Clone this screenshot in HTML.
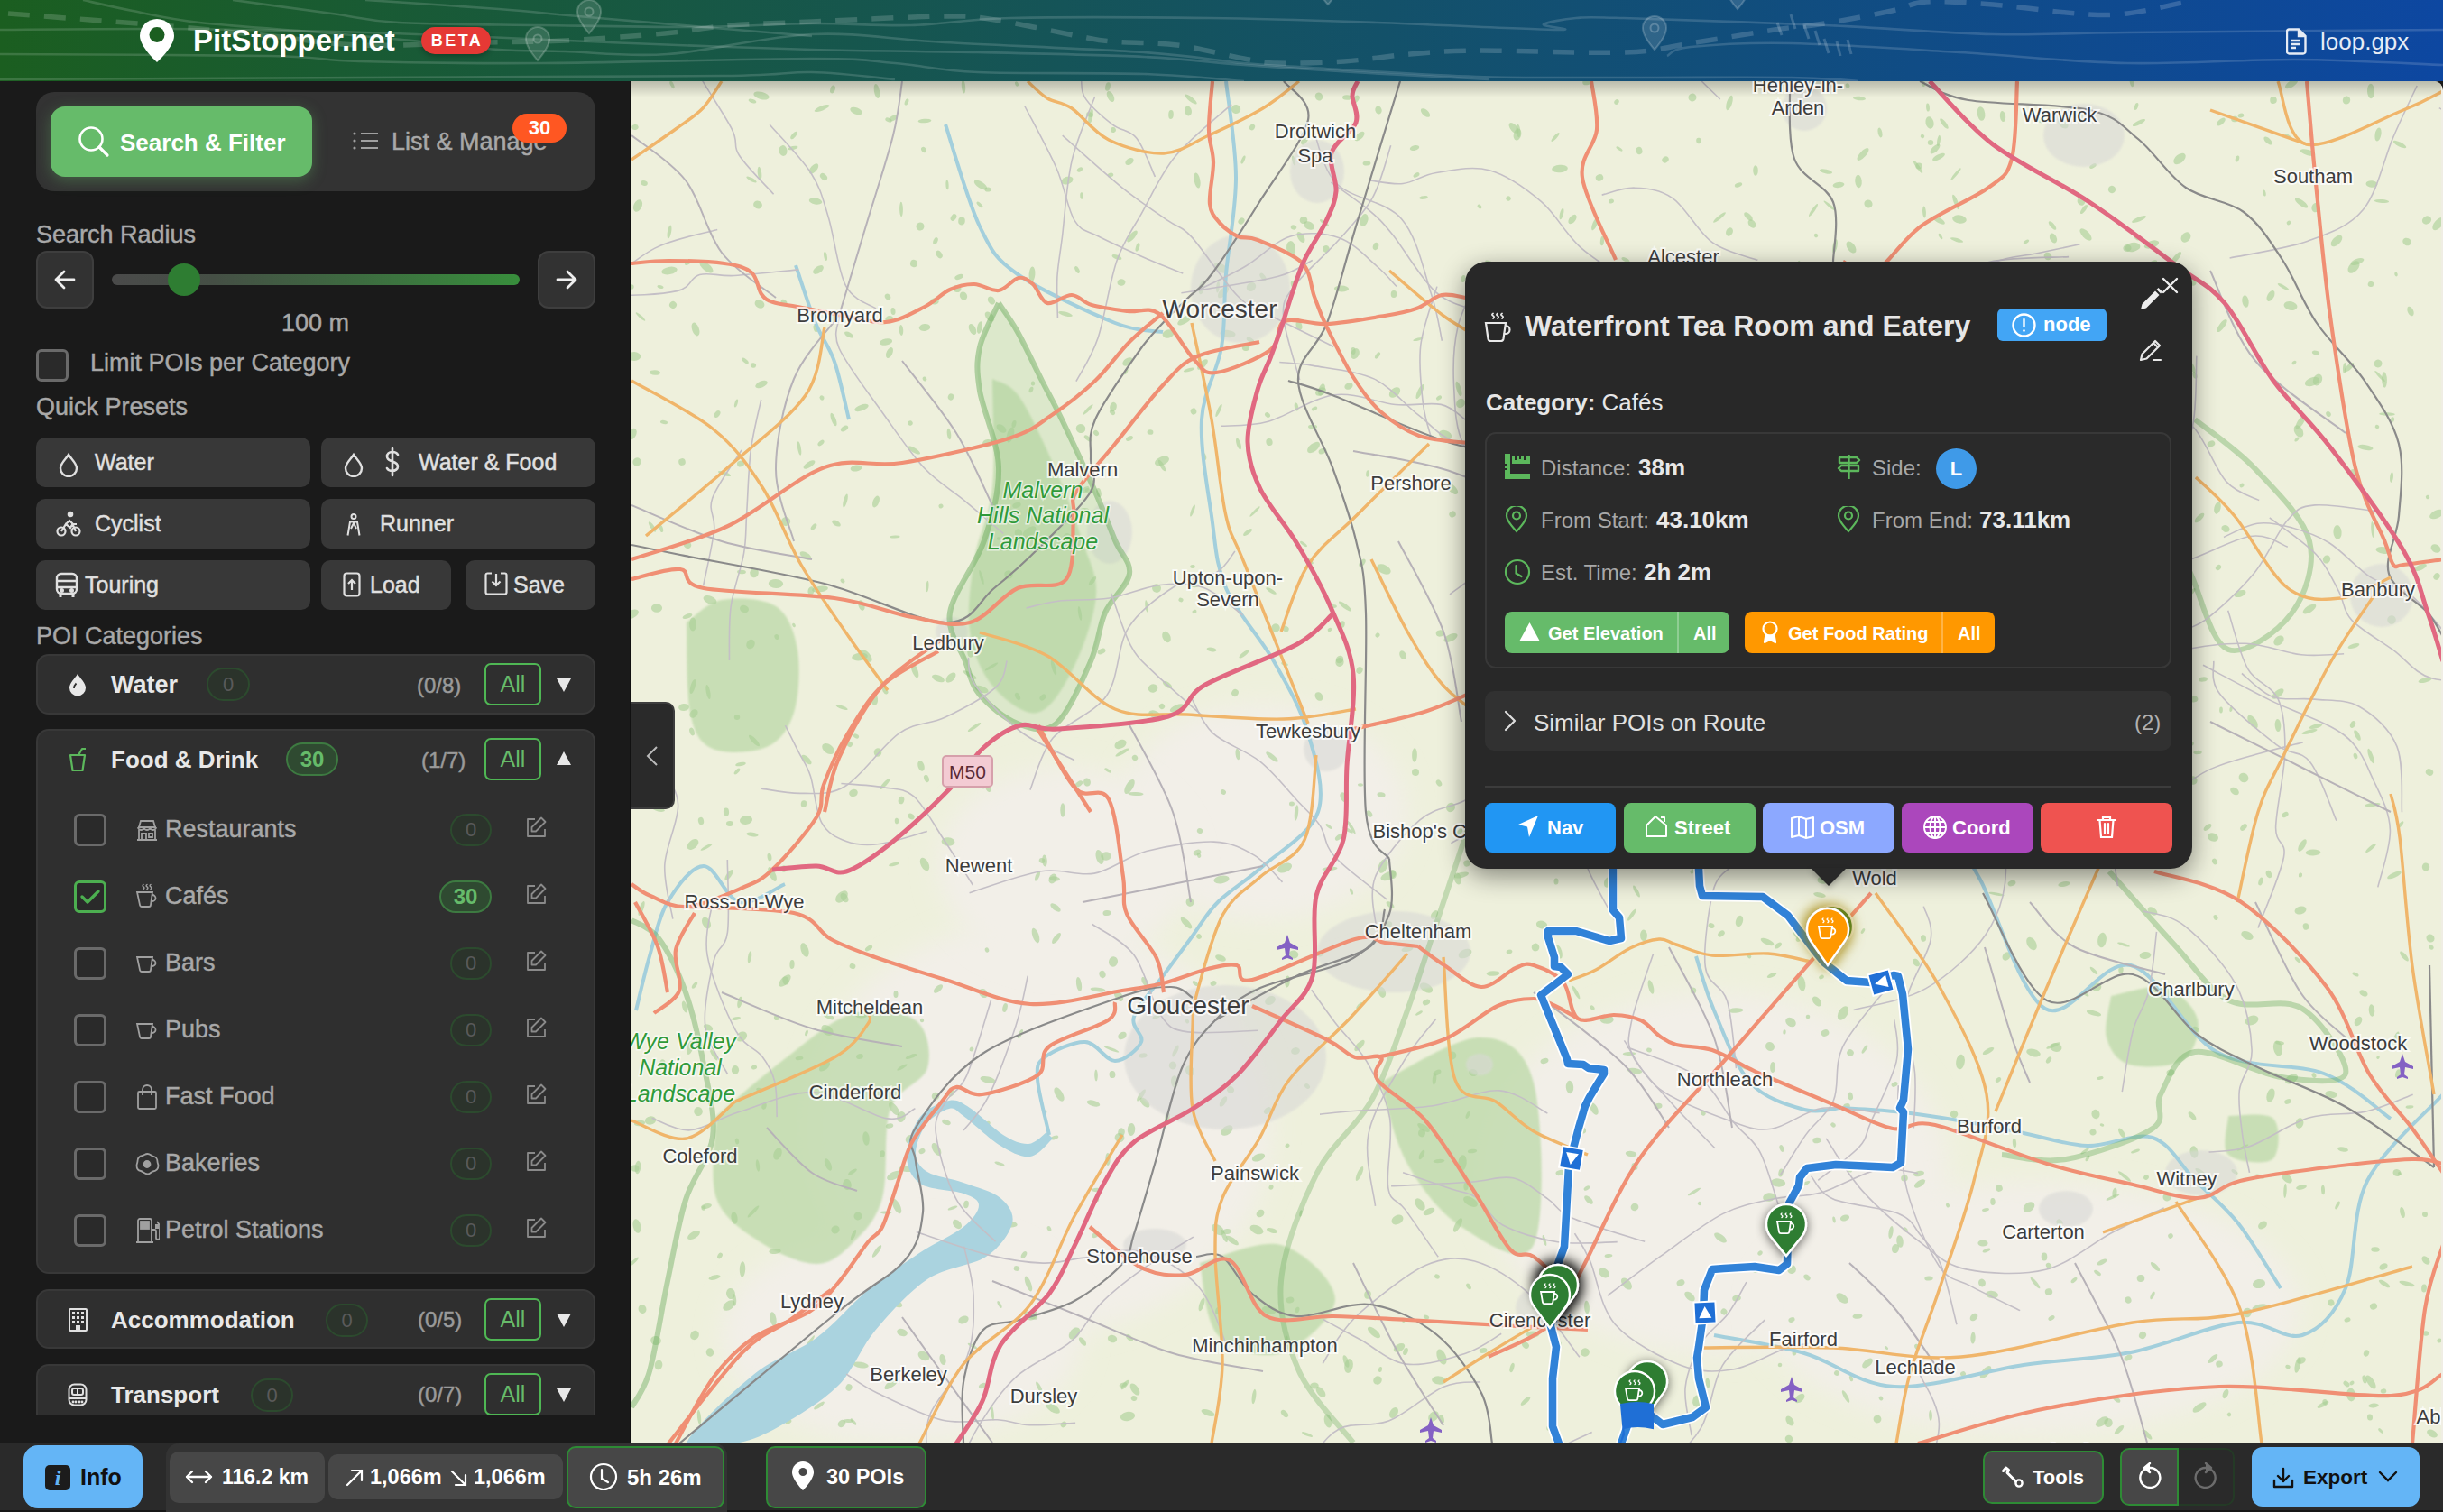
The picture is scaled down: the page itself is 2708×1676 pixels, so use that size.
<!DOCTYPE html>
<html><head><meta charset="utf-8">
<style>
*{box-sizing:border-box;margin:0;padding:0}
html,body{width:2708px;height:1676px;overflow:hidden;background:#1a1a1a;font-family:"Liberation Sans",sans-serif}
.abs{position:absolute}
#header{position:absolute;left:0;top:0;width:2708px;height:90px;background:linear-gradient(90deg,#1b5e20 0%,#0d47a1 100%);overflow:hidden}
#sidebar{position:absolute;left:0;top:90px;width:700px;height:1509px;background:#1a1a1a;border-right:2px solid #111;overflow:hidden}
#map{position:absolute;left:700px;top:90px;width:2008px;height:1509px;background:#f0eee4;overflow:hidden;border-top-right-radius:10px}
#footer{position:absolute;left:0;top:1599px;width:2708px;height:77px;background:#2a2a2a;border-bottom:2px solid #161616}
.txt{position:absolute;white-space:nowrap;line-height:1}
.btn{position:absolute;border-radius:10px;background:#383838}
.card{position:absolute;left:40px;width:620px;background:#2f2f2f;border:2px solid #383838;border-radius:14px}
.cb{position:absolute;width:36px;height:36px;border:3px solid #6a6a6a;border-radius:6px;background:#2a2a2a}
.pill{position:absolute;height:37px;border-radius:19px;border:2px solid #2c4a2e;background:#2b332b;color:#5a5a5a;font-size:22px;display:flex;align-items:center;justify-content:center}
.pill.on{border-color:#3d7a41;background:#2f4a31;color:#66bb6a;font-weight:bold;font-size:24px}
.allb{position:absolute;width:63px;height:47px;border:2px solid #4fb754;border-radius:7px;color:#66bb6a;font-size:25px;display:flex;align-items:center;justify-content:center}
.tri{position:absolute;width:0;height:0;border-left:8px solid transparent;border-right:8px solid transparent}
#sidebar .txt:not([style*="bold"]){-webkit-text-stroke:0.45px currentColor}
.lbl{position:absolute;white-space:nowrap;line-height:1;font-size:22px;color:#3b3b3b;text-shadow:0 0 3px #fff,0 0 2px #fff,0 0 1px #fff}
</style></head>
<body>
<!-- HEADER -->
<div id="header">
<svg class="abs" style="left:0;top:0" width="2708" height="90" viewBox="0 0 2708 90" fill="none">
<path d="M9.0 15.0 C24.2 16.2 68.2 19.5 100.0 22.0 C131.8 24.5 166.7 27.0 200.0 30.0 C233.3 33.0 266.7 36.7 300.0 40.0 C333.3 43.3 359.5 48.8 400.0 50.0 C440.5 51.2 505.3 47.8 543.0 47.0 C580.7 46.2 593.7 46.7 626.0 45.0 C658.3 43.3 706.3 39.8 737.0 37.0 C767.7 34.2 782.8 30.2 810.0 28.0 C837.2 25.8 860.5 25.7 900.0 24.0 C939.5 22.3 1013.2 18.3 1047.0 18.0 C1080.8 17.7 1078.3 18.3 1103.0 22.0 C1127.7 25.7 1173.5 36.0 1195.0 40.0 C1216.5 44.0 1213.7 44.3 1232.0 46.0 C1250.3 47.7 1280.5 46.8 1305.0 50.0 C1329.5 53.2 1360.5 61.7 1379.0 65.0 C1397.5 68.3 1397.5 69.5 1416.0 70.0 C1434.5 70.5 1465.5 69.7 1490.0 68.0 C1514.5 66.3 1538.5 62.0 1563.0 60.0 C1587.5 58.0 1597.5 56.3 1637.0 56.0 C1676.5 55.7 1760.5 59.3 1800.0 58.0 C1839.5 56.7 1846.2 52.2 1874.0 48.0 C1901.8 43.8 1942.2 36.7 1967.0 33.0 C1991.8 29.3 2001.3 29.5 2023.0 26.0 C2044.7 22.5 2078.3 16.0 2097.0 12.0 C2115.7 8.0 2116.3 3.2 2135.0 2.0 C2153.7 0.8 2181.2 2.8 2209.0 5.0 C2236.8 7.2 2277.2 13.3 2302.0 15.0 C2326.8 16.7 2336.3 17.5 2358.0 15.0 C2379.7 12.5 2419.7 2.5 2432.0 0.0" stroke="rgba(255,255,255,0.17)" stroke-width="5.5" stroke-dasharray="24 16"/>
<path d="M92.0 0.0 C101.2 2.0 125.5 7.8 147.0 12.0 C168.5 16.2 184.2 20.8 221.0 25.0 C257.8 29.2 325.0 33.3 368.0 37.0 C411.0 40.7 448.2 44.0 479.0 47.0 C509.8 50.0 528.5 53.3 553.0 55.0 C577.5 56.7 594.8 56.2 626.0 57.0 C657.2 57.8 694.3 63.2 740.0 60.0 C785.7 56.8 848.8 40.2 900.0 38.0 C951.2 35.8 985.7 43.7 1047.0 47.0 C1108.3 50.3 1212.7 54.2 1268.0 58.0 C1323.3 61.8 1348.2 67.2 1379.0 70.0 C1409.8 72.8 1410.0 72.5 1453.0 75.0 C1496.0 77.5 1579.2 83.2 1637.0 85.0 C1694.8 86.8 1741.8 85.8 1800.0 86.0 C1858.2 86.2 1942.7 85.3 1986.0 86.0 C2029.3 86.7 2047.7 89.3 2060.0 90.0" stroke="rgba(255,255,255,0.15)" stroke-width="2.6"/>
<path d="M0.0 33.0 C30.7 32.8 122.7 31.7 184.0 32.0 C245.3 32.3 312.7 33.7 368.0 35.0 C423.3 36.3 460.7 37.8 516.0 40.0 C571.3 42.2 636.0 45.5 700.0 48.0 C764.0 50.5 836.0 53.3 900.0 55.0 C964.0 56.7 1022.7 56.7 1084.0 58.0 C1145.3 59.3 1218.8 60.7 1268.0 63.0 C1317.2 65.3 1340.3 69.2 1379.0 72.0 C1417.7 74.8 1454.8 77.3 1500.0 80.0 C1545.2 82.7 1625.0 86.7 1650.0 88.0" stroke="rgba(255,255,255,0.15)" stroke-width="2.6"/>
<path d="M0.0 60.0 C50.0 60.3 233.7 60.7 300.0 62.0 C366.3 63.3 348.0 66.7 398.0 68.0 C448.0 69.3 516.3 70.5 600.0 70.0 C683.7 69.5 834.7 65.0 900.0 65.0 C965.3 65.0 961.3 67.5 992.0 70.0 C1022.7 72.5 1038.0 78.0 1084.0 80.0 C1130.0 82.0 1218.8 80.3 1268.0 82.0 C1317.2 83.7 1360.5 88.7 1379.0 90.0" stroke="rgba(255,255,255,0.15)" stroke-width="2.6"/>
<path d="M0.0 88.0 C66.7 87.7 266.7 86.7 400.0 86.0 C533.3 85.3 716.7 85.0 800.0 84.0 C883.3 83.0 868.0 79.3 900.0 80.0 C932.0 80.7 976.7 86.7 992.0 88.0" stroke="rgba(255,255,255,0.15)" stroke-width="2.6"/>
<path d="M258.0 0.0 C276.3 2.5 337.3 10.8 368.0 15.0 C398.7 19.2 403.3 22.8 442.0 25.0 C480.7 27.2 544.7 27.2 600.0 28.0 C655.3 28.8 724.0 30.3 774.0 30.0 C824.0 29.7 860.7 26.3 900.0 26.0 C939.3 25.7 973.2 29.0 1010.0 28.0 C1046.8 27.0 1065.7 21.3 1121.0 20.0 C1176.3 18.7 1274.5 19.2 1342.0 20.0 C1409.5 20.8 1462.2 22.8 1526.0 25.0 C1589.8 27.2 1694.2 32.7 1725.0 33.0 C1755.8 33.3 1707.3 29.2 1711.0 27.0 C1714.7 24.8 1732.2 21.2 1747.0 20.0 C1761.8 18.8 1754.0 18.7 1800.0 20.0 C1846.0 21.3 1954.8 25.0 2023.0 28.0 C2091.2 31.0 2153.2 36.7 2209.0 38.0 C2264.8 39.3 2274.8 36.8 2358.0 36.0 C2441.2 35.2 2649.7 33.5 2708.0 33.0" stroke="rgba(255,255,255,0.15)" stroke-width="2.6"/>
<path d="M405.0 0.0 C429.7 1.7 510.0 6.7 553.0 10.0 C596.0 13.3 605.2 15.0 663.0 20.0 C720.8 25.0 860.5 36.7 900.0 40.0" stroke="rgba(255,255,255,0.15)" stroke-width="2.6"/>
<path d="M1848.0 62.0 C1852.3 60.3 1851.0 54.3 1874.0 52.0 C1897.0 49.7 1936.3 47.0 1986.0 48.0 C2035.7 49.0 2110.0 54.3 2172.0 58.0 C2234.0 61.7 2296.0 68.7 2358.0 70.0 C2420.0 71.3 2485.7 65.7 2544.0 66.0 C2602.3 66.3 2680.7 71.0 2708.0 72.0" stroke="rgba(255,255,255,0.15)" stroke-width="2.6"/>
<g transform="translate(653 22) scale(1)"><path d="M0 -22 a13 13 0 0 1 13 13 q0 9 -13 24 q-13 -15 -13 -24 a13 13 0 0 1 13 -13z" fill="rgba(255,255,255,0.13)" stroke="rgba(255,255,255,0.2)" stroke-width="2"/><circle cx="0" cy="-9" r="4.5" fill="none" stroke="rgba(255,255,255,0.22)" stroke-width="2"/></g>
<g transform="translate(596 52) scale(1)"><path d="M0 -22 a13 13 0 0 1 13 13 q0 9 -13 24 q-13 -15 -13 -24 a13 13 0 0 1 13 -13z" fill="rgba(255,255,255,0.13)" stroke="rgba(255,255,255,0.2)" stroke-width="2"/><circle cx="0" cy="-9" r="4.5" fill="none" stroke="rgba(255,255,255,0.22)" stroke-width="2"/></g>
<g transform="translate(1834 40) scale(1)"><path d="M0 -22 a13 13 0 0 1 13 13 q0 9 -13 24 q-13 -15 -13 -24 a13 13 0 0 1 13 -13z" fill="rgba(255,255,255,0.13)" stroke="rgba(255,255,255,0.2)" stroke-width="2"/><circle cx="0" cy="-9" r="4.5" fill="none" stroke="rgba(255,255,255,0.22)" stroke-width="2"/></g>
<g transform="translate(1472 -10) scale(1)"><path d="M0 -22 a13 13 0 0 1 13 13 q0 9 -13 24 q-13 -15 -13 -24 a13 13 0 0 1 13 -13z" fill="rgba(255,255,255,0.13)" stroke="rgba(255,255,255,0.2)" stroke-width="2"/><circle cx="0" cy="-9" r="4.5" fill="none" stroke="rgba(255,255,255,0.22)" stroke-width="2"/></g>
<g transform="translate(1926 -5) scale(1)"><path d="M0 -22 a13 13 0 0 1 13 13 q0 9 -13 24 q-13 -15 -13 -24 a13 13 0 0 1 13 -13z" fill="rgba(255,255,255,0.13)" stroke="rgba(255,255,255,0.2)" stroke-width="2"/><circle cx="0" cy="-9" r="4.5" fill="none" stroke="rgba(255,255,255,0.22)" stroke-width="2"/></g>
<path d="M1970 25l5 14M1985 16l5 16M2000 28l5 15M2012 34l5 16M2022 43l5 16M2036 46l4 16M2048 44l4 16" stroke="rgba(255,255,255,0.18)" stroke-width="3"/>
</svg>
<svg class="abs" style="left:155px;top:21px" width="38" height="48" viewBox="0 0 38 48"><path d="M19 0C8.5 0 0 8.4 0 18.8 0 31 19 48 19 48S38 31 38 18.8C38 8.4 29.5 0 19 0z" fill="#fff"/><circle cx="19" cy="17.5" r="8.5" fill="#1b5e20"/></svg>
<div class="txt" style="left:214px;top:28px;font-size:33px;font-weight:bold;color:#fff">PitStopper.net</div>
<div class="abs" style="left:467px;top:30px;width:77px;height:30px;border-radius:15px;background:#e53935;box-shadow:0 2px 6px rgba(0,0,0,0.3);color:#fff;font-weight:bold;font-size:18px;letter-spacing:2.5px;padding-left:2px;display:flex;align-items:center;justify-content:center">BETA</div>
<svg class="abs" style="left:2534px;top:31px" width="23" height="30" viewBox="0 0 23 30" fill="none" stroke="#e6ecf5" stroke-width="2.4"><path d="M3 1.5h11l7.5 7.5v17a2.5 2.5 0 0 1-2.5 2.5H3.5A2.5 2.5 0 0 1 1 26V4a2.5 2.5 0 0 1 2-2.5z"/><path d="M14 1.5v7.5h7.5" fill="#e6ecf5"/><path d="M6 14h10M6 18h10M6 22h5"/></svg>
<div class="txt" style="left:2572px;top:33px;font-size:26px;color:#e6ecf5">loop.gpx</div>
</div>

<!-- SIDEBAR -->
<div id="sidebar">
<div class="abs" style="left:0;top:0;width:700px;height:1478px;overflow:hidden">
<!-- tabs -->
<div class="abs" style="left:40px;top:12px;width:620px;height:110px;background:#333;border-radius:20px"></div>
<div class="abs" style="left:56px;top:28px;width:290px;height:78px;background:#66bb6a;border-radius:16px;box-shadow:0 4px 16px rgba(102,187,106,0.35)"></div>
<svg class="abs" style="left:86px;top:49px" width="36" height="36" viewBox="0 0 36 36" fill="none" stroke="#fff" stroke-width="2.6" stroke-linecap="round"><circle cx="15" cy="15" r="12.5"/><path d="M24 24l9 9" stroke-width="3.2"/></svg>
<div class="txt" style="left:133px;top:55px;font-size:26px;font-weight:bold;color:#fff">Search &amp; Filter</div>
<svg class="abs" style="left:389px;top:54px" width="34" height="24" viewBox="0 0 34 24" fill="#a0a0a0" stroke="#a0a0a0" stroke-width="2.2"><circle cx="4" cy="4" r="1.6" stroke="none"/><circle cx="4" cy="12" r="1.6" stroke="none"/><circle cx="4" cy="20" r="1.6" stroke="none"/><path d="M11 4h19M11 12h19M11 20h19"/></svg>
<div class="txt" style="left:434px;top:54px;font-size:27px;color:#a8a8a8">List &amp; Manage</div>
<div class="abs" style="left:568px;top:36px;width:60px;height:32px;border-radius:16px;background:#ff5722;color:#fff;font-weight:bold;font-size:22px;display:flex;align-items:center;justify-content:center">30</div>
<!-- radius -->
<div class="txt" style="left:40px;top:157px;font-size:27px;color:#a8a8a8">Search Radius</div>
<div class="abs" style="left:40px;top:188px;width:64px;height:64px;background:#323232;border:2px solid #3e3e3e;border-radius:12px"></div>
<svg class="abs" style="left:58px;top:206px" width="28" height="28" viewBox="0 0 28 28" fill="none" stroke="#eee" stroke-width="2.8" stroke-linecap="round" stroke-linejoin="round"><path d="M24 14H4M13 5l-9 9 9 9"/></svg>
<div class="abs" style="left:596px;top:188px;width:64px;height:64px;background:#323232;border:2px solid #3e3e3e;border-radius:12px"></div>
<svg class="abs" style="left:614px;top:206px" width="28" height="28" viewBox="0 0 28 28" fill="none" stroke="#eee" stroke-width="2.8" stroke-linecap="round" stroke-linejoin="round"><path d="M4 14h20M15 5l9 9-9 9"/></svg>
<div class="abs" style="left:124px;top:214px;width:452px;height:12px;border-radius:6px;background:linear-gradient(90deg,#4a4a4a 0%,#454f45 25%,#3d6b40 60%,#388e3c 100%)"></div>
<div class="abs" style="left:186px;top:202px;width:36px;height:36px;border-radius:50%;background:#2e7d32"></div>
<div class="txt" style="left:312px;top:255px;font-size:27px;color:#a8a8a8">100 m</div>
<div class="cb" style="left:40px;top:297px"></div>
<div class="txt" style="left:100px;top:299px;font-size:27px;color:#a8a8a8">Limit POIs per Category</div>
<div class="txt" style="left:40px;top:348px;font-size:27px;color:#a8a8a8">Quick Presets</div>
<!-- presets -->
<div class="btn" style="left:40px;top:395px;width:304px;height:55px"></div>
<div class="btn" style="left:356px;top:395px;width:304px;height:55px"></div>
<div class="btn" style="left:40px;top:463px;width:304px;height:55px"></div>
<div class="btn" style="left:356px;top:463px;width:304px;height:55px"></div>
<div class="btn" style="left:40px;top:531px;width:304px;height:55px"></div>
<div class="btn" style="left:356px;top:531px;width:144px;height:55px"></div>
<div class="btn" style="left:516px;top:531px;width:144px;height:55px"></div>
<svg class="abs" style="left:64px;top:411px" width="24" height="28" viewBox="0 0 24 28" fill="none" stroke="#e0e0e0" stroke-width="2.4"><path d="M12 3C8.5 8.5 3 12.5 3 18a9 9 0 0 0 18 0c0-5.5-5.5-9.5-9-15z"/></svg>
<div class="txt" style="left:105px;top:410px;font-size:25px;color:#e0e0e0;line-height:1;padding-top:0">Water</div>
<svg class="abs" style="left:380px;top:411px" width="24" height="28" viewBox="0 0 24 28" fill="none" stroke="#e0e0e0" stroke-width="2.4"><path d="M12 3C8.5 8.5 3 12.5 3 18a9 9 0 0 0 18 0c0-5.5-5.5-9.5-9-15z"/></svg>
<svg class="abs" style="left:424px;top:405px" width="22" height="34" viewBox="0 0 22 34" fill="none" stroke="#e0e0e0" stroke-width="2.6" stroke-linecap="round"><path d="M11 2v30M17 9c-1-2-3-3-6-3-4 0-6 2-6 5 0 7 12 4 12 11 0 3-3 5-6 5-3 0-5-1-6-3"/></svg>
<div class="txt" style="left:464px;top:410px;font-size:25px;color:#e0e0e0">Water &amp; Food</div>
<svg class="abs" style="left:62px;top:476px" width="28" height="30" viewBox="0 0 28 30" fill="none" stroke="#e0e0e0" stroke-width="2.2"><circle cx="6" cy="23" r="4.5"/><circle cx="22" cy="23" r="4.5"/><circle cx="16" cy="4" r="2.2" fill="#e0e0e0"/><path d="M6 23l5-8 5 4 3-5M11 15l4-4 4 4h4M22 23l-4-9"/></svg>
<div class="txt" style="left:105px;top:478px;font-size:25px;color:#e0e0e0">Cyclist</div>
<svg class="abs" style="left:383px;top:479px" width="18" height="26" viewBox="0 0 18 26" fill="none" stroke="#e0e0e0" stroke-width="2"><circle cx="9" cy="3.5" r="2.5"/><path d="M2.5 24.5l2.5-15h8l2.5 15M6 17l3-6 3 6"/></svg>
<div class="txt" style="left:421px;top:478px;font-size:25px;color:#e0e0e0">Runner</div>
<svg class="abs" style="left:61px;top:544px" width="26" height="30" viewBox="0 0 26 30" fill="none" stroke="#e0e0e0" stroke-width="2.4"><rect x="2" y="2" width="22" height="22" rx="5"/><path d="M2 10h22M2 17h22"/><circle cx="7.5" cy="20.5" r="1.3" fill="#e0e0e0"/><circle cx="18.5" cy="20.5" r="1.3" fill="#e0e0e0"/><path d="M6 24v4M20 24v4" stroke-width="3"/></svg>
<div class="txt" style="left:94px;top:546px;font-size:25px;color:#e0e0e0">Touring</div>
<svg class="abs" style="left:380px;top:544px" width="20" height="28" viewBox="0 0 20 28" fill="none" stroke="#e0e0e0" stroke-width="2.2"><rect x="1.5" y="1.5" width="17" height="25" rx="3"/><path d="M10 20V9M6 13l4-4 4 4"/></svg>
<div class="txt" style="left:410px;top:546px;font-size:25px;color:#e0e0e0">Load</div>
<svg class="abs" style="left:537px;top:544px" width="26" height="26" viewBox="0 0 26 26" fill="none" stroke="#e0e0e0" stroke-width="2.2"><path d="M8 1.5H3.5a2 2 0 0 0-2 2v19a2 2 0 0 0 2 2h19a2 2 0 0 0 2-2v-19a2 2 0 0 0-2-2H18"/><path d="M13 2v13M8.5 10.5L13 15l4.5-4.5"/></svg>
<div class="txt" style="left:569px;top:546px;font-size:25px;color:#e0e0e0">Save</div>
<div class="txt" style="left:40px;top:602px;font-size:27px;color:#a8a8a8">POI Categories</div>
<!-- Water card -->
<div class="card" style="top:635px;height:67px"></div>
<svg class="abs" style="left:76px;top:656px" width="20" height="26" viewBox="0 0 20 26"><path d="M10 1C7 6 1 11 1 16.5a9 9 0 0 0 18 0C19 11 13 6 10 1z" fill="#e8e8e8"/><path d="M6 17c0-2 1-4 2.5-5.5" stroke="#2f2f2f" stroke-width="1.8" fill="none"/></svg>
<div class="txt" style="left:123px;top:656px;font-size:27px;font-weight:bold;color:#e8e8e8">Water</div>
<div class="pill" style="left:229px;top:650px;width:48px">0</div>
<div class="txt" style="left:462px;top:658px;font-size:24px;color:#9a9a9a">(0/8)</div>
<div class="allb" style="left:537px;top:645px">All</div>
<div class="tri" style="left:617px;top:662px;border-top:15px solid #e8e8e8"></div>
<!-- Food card -->
<div class="card" style="top:718px;height:604px"></div>
<svg class="abs" style="left:76px;top:738px" width="22" height="28" viewBox="0 0 22 28" fill="none" stroke="#5cb85c" stroke-width="2.2" stroke-linejoin="round"><path d="M2 9h16l-2.5 17h-11z"/><path d="M11 9l4-7h4"/></svg>
<div class="txt" style="left:123px;top:739px;font-size:26px;font-weight:bold;color:#e8e8e8">Food &amp; Drink</div>
<div class="pill on" style="left:317px;top:733px;width:58px">30</div>
<div class="txt" style="left:467px;top:741px;font-size:24px;color:#9a9a9a">(1/7)</div>
<div class="allb" style="left:537px;top:728px">All</div>
<div class="tri" style="left:617px;top:743px;border-bottom:15px solid #e8e8e8"></div>
<div class="cb" style="left:82px;top:812px"></div>
<svg class="abs" style="left:150px;top:817px" width="26" height="26" viewBox="0 0 26 26" fill="none" stroke="#a0a0a0" stroke-width="1.8"><path d="M3 10h20M4 10l2-7h14l2 7M3 10c0 2 2 3 3.3 3s3.3-1 3.3-3c0 2 2 3 3.4 3s3.3-1 3.3-3c0 2 2 3 3.3 3S23 12 23 10"/><path d="M4 13v11h18V13M2 24h22M7 24v-7h5v7M15 17h4v4h-4z"/></svg>
<div class="txt" style="left:183px;top:816px;font-size:27px;color:#a8a8a8">Restaurants</div>
<div class="pill" style="left:499px;top:812px;width:46px;height:36px">0</div>
<svg class="abs" style="left:582px;top:815px" width="24" height="24" viewBox="0 0 24 24" fill="none" stroke="#8a8a8a" stroke-width="1.8" stroke-linejoin="round"><path d="M11 3H3v19h19v-8"/><path d="M18 1.5l4.5 4.5L12 16.5H7.5V12z"/></svg>
<div class="cb" style="left:82px;top:886px;border-color:#4caf50"></div>
<svg class="abs" style="left:88px;top:894px" width="24" height="20" viewBox="0 0 24 20" fill="none" stroke="#4caf50" stroke-width="3.4" stroke-linecap="round" stroke-linejoin="round"><path d="M3 10l6 6L21 4"/></svg>
<svg class="abs" style="left:150px;top:889px" width="26" height="28" viewBox="0 0 26 28" fill="none" stroke="#a0a0a0" stroke-width="1.8" stroke-linecap="round"><path d="M9 1.5q-1.8 1.2 0 2.4t0 2.6M13 1.5q-1.8 1.2 0 2.4t0 2.6M17 1.5q-1.8 1.2 0 2.4t0 2.6" stroke-width="1.5"/><path d="M2 10h17l-2 14a2 2 0 0 1-2 2H7a2 2 0 0 1-2-2z"/><path d="M19 13a3.5 3.5 0 0 1 0 7h-1"/></svg>
<div class="txt" style="left:183px;top:890px;font-size:27px;color:#a8a8a8">Cafés</div>
<div class="pill on" style="left:487px;top:886px;width:58px;height:36px">30</div>
<svg class="abs" style="left:582px;top:889px" width="24" height="24" viewBox="0 0 24 24" fill="none" stroke="#8a8a8a" stroke-width="1.8" stroke-linejoin="round"><path d="M11 3H3v19h19v-8"/><path d="M18 1.5l4.5 4.5L12 16.5H7.5V12z"/></svg>
<div class="cb" style="left:82px;top:960px"></div>
<svg class="abs" style="left:150px;top:969px" width="26" height="20" viewBox="0 0 26 20" fill="none" stroke="#a0a0a0" stroke-width="1.8"><path d="M2 2h17l-2 14a2 2 0 0 1-2 2H7a2 2 0 0 1-2-2z"/><path d="M19 5a3.5 3.5 0 0 1 0 7h-1"/></svg>
<div class="txt" style="left:183px;top:964px;font-size:27px;color:#a8a8a8">Bars</div>
<div class="pill" style="left:499px;top:960px;width:46px;height:36px">0</div>
<svg class="abs" style="left:582px;top:963px" width="24" height="24" viewBox="0 0 24 24" fill="none" stroke="#8a8a8a" stroke-width="1.8" stroke-linejoin="round"><path d="M11 3H3v19h19v-8"/><path d="M18 1.5l4.5 4.5L12 16.5H7.5V12z"/></svg>
<div class="cb" style="left:82px;top:1034px"></div>
<svg class="abs" style="left:150px;top:1043px" width="26" height="20" viewBox="0 0 26 20" fill="none" stroke="#a0a0a0" stroke-width="1.8"><path d="M2 2h17l-2 14a2 2 0 0 1-2 2H7a2 2 0 0 1-2-2z"/><path d="M19 5a3.5 3.5 0 0 1 0 7h-1"/></svg>
<div class="txt" style="left:183px;top:1038px;font-size:27px;color:#a8a8a8">Pubs</div>
<div class="pill" style="left:499px;top:1034px;width:46px;height:36px">0</div>
<svg class="abs" style="left:582px;top:1037px" width="24" height="24" viewBox="0 0 24 24" fill="none" stroke="#8a8a8a" stroke-width="1.8" stroke-linejoin="round"><path d="M11 3H3v19h19v-8"/><path d="M18 1.5l4.5 4.5L12 16.5H7.5V12z"/></svg>
<div class="cb" style="left:82px;top:1108px"></div>
<svg class="abs" style="left:151px;top:1111px" width="24" height="30" viewBox="0 0 24 30" fill="none" stroke="#a0a0a0" stroke-width="1.8"><rect x="2" y="9" width="20" height="19" rx="1.5"/><path d="M7 13V7a5 5 0 0 1 10 0v6"/></svg>
<div class="txt" style="left:183px;top:1112px;font-size:27px;color:#a8a8a8">Fast Food</div>
<div class="pill" style="left:499px;top:1108px;width:46px;height:36px">0</div>
<svg class="abs" style="left:582px;top:1111px" width="24" height="24" viewBox="0 0 24 24" fill="none" stroke="#8a8a8a" stroke-width="1.8" stroke-linejoin="round"><path d="M11 3H3v19h19v-8"/><path d="M18 1.5l4.5 4.5L12 16.5H7.5V12z"/></svg>
<div class="cb" style="left:82px;top:1182px"></div>
<svg class="abs" style="left:150px;top:1187px" width="27" height="27" viewBox="0 0 27 27" fill="none" stroke="#a0a0a0" stroke-width="1.8"><path d="M13.5 2c3 0 4 2 6 2.5 3 .8 5 2.5 5 6 0 2 1 3 1 4.5 0 4-3 6-6 6.5-2 .5-3 3-6 3-3.5 0-5-3-7.5-3.5C3 20.5 1.5 18 1.5 15c0-2 1-3 1-5C2.5 6 5 4.5 8 4c2-.5 3-2 5.5-2z"/><circle cx="13" cy="13.5" r="3.5" fill="#a0a0a0"/></svg>
<div class="txt" style="left:183px;top:1186px;font-size:27px;color:#a8a8a8">Bakeries</div>
<div class="pill" style="left:499px;top:1182px;width:46px;height:36px">0</div>
<svg class="abs" style="left:582px;top:1185px" width="24" height="24" viewBox="0 0 24 24" fill="none" stroke="#8a8a8a" stroke-width="1.8" stroke-linejoin="round"><path d="M11 3H3v19h19v-8"/><path d="M18 1.5l4.5 4.5L12 16.5H7.5V12z"/></svg>
<div class="cb" style="left:82px;top:1256px"></div>
<svg class="abs" style="left:150px;top:1259px" width="27" height="30" viewBox="0 0 27 30" fill="none" stroke="#a0a0a0" stroke-width="1.8"><path d="M3 28V4a2 2 0 0 1 2-2h11a2 2 0 0 1 2 2v24M1 28h19"/><rect x="6" y="5" width="9" height="8" fill="#a0a0a0"/><path d="M18 14h3a2 2 0 0 1 2 2v7a2 2 0 0 0 4 0V9l-3-4"/><rect x="22" y="8" width="4" height="5" fill="#a0a0a0" stroke="none"/></svg>
<div class="txt" style="left:183px;top:1260px;font-size:27px;color:#a8a8a8">Petrol Stations</div>
<div class="pill" style="left:499px;top:1256px;width:46px;height:36px">0</div>
<svg class="abs" style="left:582px;top:1259px" width="24" height="24" viewBox="0 0 24 24" fill="none" stroke="#8a8a8a" stroke-width="1.8" stroke-linejoin="round"><path d="M11 3H3v19h19v-8"/><path d="M18 1.5l4.5 4.5L12 16.5H7.5V12z"/></svg>
<!-- Accommodation -->
<div class="card" style="top:1339px;height:66px"></div>
<svg class="abs" style="left:76px;top:1360px" width="21" height="26" viewBox="0 0 21 26" fill="none" stroke="#e0e0e0" stroke-width="2"><rect x="1" y="1" width="19" height="24" rx="1"/><g fill="#e0e0e0" stroke="none"><rect x="4" y="4" width="3" height="3"/><rect x="9" y="4" width="3" height="3"/><rect x="14" y="4" width="3" height="3"/><rect x="4" y="9" width="3" height="3"/><rect x="9" y="9" width="3" height="3"/><rect x="14" y="9" width="3" height="3"/><rect x="4" y="14" width="3" height="3"/><rect x="9" y="14" width="3" height="3"/><rect x="14" y="14" width="3" height="3"/><rect x="8" y="19" width="5" height="6"/></g></svg>
<div class="txt" style="left:123px;top:1360px;font-size:26px;font-weight:bold;color:#e8e8e8">Accommodation</div>
<div class="pill" style="left:361px;top:1355px;width:47px">0</div>
<div class="txt" style="left:463px;top:1361px;font-size:24px;color:#9a9a9a">(0/5)</div>
<div class="allb" style="left:537px;top:1349px">All</div>
<div class="tri" style="left:617px;top:1366px;border-top:15px solid #e8e8e8"></div>
<!-- Transport -->
<div class="card" style="top:1422px;height:120px"></div>
<svg class="abs" style="left:75px;top:1443px" width="22" height="27" viewBox="0 0 22 27" fill="none" stroke="#e0e0e0" stroke-width="2"><rect x="1.5" y="1.5" width="19" height="23" rx="6"/><rect x="5" y="6" width="12" height="7" rx="2"/><path d="M11 6v7M1.5 17h19"/><g fill="#e0e0e0" stroke="none"><circle cx="6" cy="21" r="1.4"/><circle cx="9" cy="21" r="1.4"/><circle cx="13" cy="21" r="1.4"/><circle cx="16" cy="21" r="1.4"/></g></svg>
<div class="txt" style="left:123px;top:1443px;font-size:26px;font-weight:bold;color:#e8e8e8">Transport</div>
<div class="pill" style="left:278px;top:1438px;width:47px">0</div>
<div class="txt" style="left:463px;top:1444px;font-size:24px;color:#9a9a9a">(0/7)</div>
<div class="allb" style="left:537px;top:1432px">All</div>
<div class="tri" style="left:617px;top:1449px;border-top:15px solid #e8e8e8"></div>
</div>

</div>

<!-- MAP -->
<div id="map">
<svg class="abs" style="left:0;top:0" width="2006" height="1509" viewBox="700 90 2006 1509">
<defs><filter id="bl" x="-20%" y="-20%" width="140%" height="140%"><feGaussianBlur stdDeviation="14"/></filter><filter id="bl2"><feGaussianBlur stdDeviation="1.2"/></filter></defs>
<rect x="700" y="90" width="2006" height="1509" fill="#eef0dc"/>
<ellipse cx="1150" cy="1250" rx="260" ry="230" fill="#f2efe8" filter="url(#bl)"/>
<ellipse cx="1000" cy="1480" rx="200" ry="120" fill="#f2efe8" filter="url(#bl)"/>
<ellipse cx="1400" cy="900" rx="160" ry="120" fill="#f2efe8" filter="url(#bl)"/>
<ellipse cx="1180" cy="960" rx="140" ry="110" fill="#f2efe8" filter="url(#bl)"/>
<ellipse cx="1900" cy="1300" rx="260" ry="200" fill="#f2efe8" filter="url(#bl)"/>
<ellipse cx="2250" cy="1450" rx="300" ry="140" fill="#f2efe8" filter="url(#bl)"/>
<path d="M794.0 1237.0 C807.0 1226.2 846.7 1191.0 872.0 1172.0 C897.3 1153.0 922.2 1129.8 946.0 1123.0 C969.8 1116.2 1001.3 1120.8 1015.0 1131.0 C1028.7 1141.2 1032.7 1167.7 1028.0 1184.0 C1023.3 1200.3 995.3 1205.0 987.0 1229.0 C978.7 1253.0 984.8 1303.3 978.0 1328.0 C971.2 1352.7 958.2 1364.8 946.0 1377.0 C933.8 1389.2 922.2 1401.0 905.0 1401.0 C887.8 1401.0 861.5 1389.2 843.0 1377.0 C824.5 1364.8 802.2 1351.3 794.0 1328.0 C785.8 1304.7 794.0 1252.2 794.0 1237.0" fill="#bcd9a8" opacity="0.75" filter="url(#bl2)"/>
<path d="M761.0 690.0 C767.5 685.8 783.5 668.0 800.0 665.0 C816.5 662.0 846.0 662.8 860.0 672.0 C874.0 681.2 880.7 700.3 884.0 720.0 C887.3 739.7 885.7 772.0 880.0 790.0 C874.3 808.0 865.0 821.3 850.0 828.0 C835.0 834.7 804.2 836.3 790.0 830.0 C775.8 823.7 769.8 813.3 765.0 790.0 C760.2 766.7 761.7 706.7 761.0 690.0" fill="#bcd9a8" opacity="0.75" filter="url(#bl2)"/>
<path d="M1100.0 420.0 C1105.0 423.3 1118.3 423.3 1130.0 440.0 C1141.7 456.7 1158.3 493.3 1170.0 520.0 C1181.7 546.7 1192.5 576.7 1200.0 600.0 C1207.5 623.3 1216.7 636.7 1215.0 660.0 C1213.3 683.3 1200.8 718.3 1190.0 740.0 C1179.2 761.7 1165.0 786.7 1150.0 790.0 C1135.0 793.3 1112.5 775.0 1100.0 760.0 C1087.5 745.0 1078.3 723.3 1075.0 700.0 C1071.7 676.7 1075.8 646.7 1080.0 620.0 C1084.2 593.3 1096.7 573.3 1100.0 540.0 C1103.3 506.7 1100.0 440.0 1100.0 420.0" fill="#bcd9a8" opacity="0.75" filter="url(#bl2)"/>
<path d="M2340.0 1104.0 C2350.0 1102.5 2384.0 1090.7 2400.0 1095.0 C2416.0 1099.3 2432.7 1116.7 2436.0 1130.0 C2439.3 1143.3 2432.7 1166.7 2420.0 1175.0 C2407.3 1183.3 2374.2 1184.2 2360.0 1180.0 C2345.8 1175.8 2338.3 1162.7 2335.0 1150.0 C2331.7 1137.3 2339.2 1111.7 2340.0 1104.0" fill="#bcd9a8" opacity="0.75" filter="url(#bl2)"/>
<path d="M1530.0 1200.0 C1548.3 1191.7 1611.7 1150.0 1640.0 1150.0 C1668.3 1150.0 1690.0 1161.7 1700.0 1200.0 C1710.0 1238.3 1713.3 1353.3 1700.0 1380.0 C1686.7 1406.7 1643.3 1375.0 1620.0 1360.0 C1596.7 1345.0 1575.0 1316.7 1560.0 1290.0 C1545.0 1263.3 1535.0 1215.0 1530.0 1200.0" fill="#bcd9a8" opacity="0.75" filter="url(#bl2)"/>
<path d="M1330.0 1400.0 C1345.0 1396.7 1395.0 1373.3 1420.0 1380.0 C1445.0 1386.7 1480.0 1420.0 1480.0 1440.0 C1480.0 1460.0 1441.7 1493.3 1420.0 1500.0 C1398.3 1506.7 1365.0 1496.7 1350.0 1480.0 C1335.0 1463.3 1333.3 1413.3 1330.0 1400.0" fill="#bcd9a8" opacity="0.75" filter="url(#bl2)"/>
<path d="M2470.0 1237.0 C2478.3 1237.5 2511.8 1232.0 2520.0 1240.0 C2528.2 1248.0 2527.3 1278.3 2519.0 1285.0 C2510.7 1291.7 2478.2 1288.0 2470.0 1280.0 C2461.8 1272.0 2470.0 1244.2 2470.0 1237.0" fill="#bcd9a8" opacity="0.75" filter="url(#bl2)"/>
<ellipse cx="1350" cy="318" rx="6.6" ry="1.8" transform="rotate(96 1350 318)" fill="#a9cf94" opacity="0.6"/>
<ellipse cx="1434" cy="178" rx="5.6" ry="1.6" transform="rotate(78 1434 178)" fill="#a9cf94" opacity="0.6"/>
<ellipse cx="840" cy="227" rx="5.0" ry="4.4" transform="rotate(22 840 227)" fill="#a9cf94" opacity="0.6"/>
<ellipse cx="1148" cy="1037" rx="8.6" ry="3.5" transform="rotate(71 1148 1037)" fill="#a9cf94" opacity="0.6"/>
<ellipse cx="2660" cy="160" rx="8.0" ry="2.5" transform="rotate(26 2660 160)" fill="#a9cf94" opacity="0.6"/>
<ellipse cx="937" cy="555" rx="7.7" ry="2.1" transform="rotate(105 937 555)" fill="#a9cf94" opacity="0.6"/>
<ellipse cx="1983" cy="652" rx="5.8" ry="1.7" transform="rotate(11 1983 652)" fill="#a9cf94" opacity="0.6"/>
<ellipse cx="1114" cy="1117" rx="5.0" ry="2.6" transform="rotate(105 1114 1117)" fill="#a9cf94" opacity="0.6"/>
<ellipse cx="1610" cy="542" rx="7.6" ry="3.9" transform="rotate(44 1610 542)" fill="#a9cf94" opacity="0.6"/>
<ellipse cx="1853" cy="883" rx="8.1" ry="4.1" transform="rotate(52 1853 883)" fill="#a9cf94" opacity="0.6"/>
<ellipse cx="2668" cy="268" rx="4.9" ry="4.1" transform="rotate(27 2668 268)" fill="#a9cf94" opacity="0.6"/>
<ellipse cx="1682" cy="149" rx="6.7" ry="4.2" transform="rotate(103 1682 149)" fill="#a9cf94" opacity="0.6"/>
<ellipse cx="2458" cy="563" rx="6.9" ry="3.6" transform="rotate(104 2458 563)" fill="#a9cf94" opacity="0.6"/>
<ellipse cx="1616" cy="1358" rx="8.6" ry="3.2" transform="rotate(120 1616 1358)" fill="#a9cf94" opacity="0.6"/>
<ellipse cx="822" cy="1149" rx="6.5" ry="5.0" transform="rotate(148 822 1149)" fill="#a9cf94" opacity="0.6"/>
<ellipse cx="1271" cy="672" rx="6.7" ry="1.6" transform="rotate(83 1271 672)" fill="#a9cf94" opacity="0.6"/>
<ellipse cx="1037" cy="267" rx="2.4" ry="4.2" transform="rotate(23 1037 267)" fill="#a9cf94" opacity="0.6"/>
<ellipse cx="1197" cy="680" rx="8.1" ry="1.8" transform="rotate(81 1197 680)" fill="#a9cf94" opacity="0.6"/>
<ellipse cx="1803" cy="1423" rx="7.7" ry="4.5" transform="rotate(50 1803 1423)" fill="#a9cf94" opacity="0.6"/>
<ellipse cx="1534" cy="631" rx="8.2" ry="4.9" transform="rotate(27 1534 631)" fill="#a9cf94" opacity="0.6"/>
<ellipse cx="1054" cy="440" rx="3.6" ry="3.2" transform="rotate(106 1054 440)" fill="#a9cf94" opacity="0.6"/>
<ellipse cx="1228" cy="96" rx="4.9" ry="2.8" transform="rotate(102 1228 96)" fill="#a9cf94" opacity="0.6"/>
<ellipse cx="2614" cy="1132" rx="5.6" ry="3.7" transform="rotate(122 2614 1132)" fill="#a9cf94" opacity="0.6"/>
<ellipse cx="808" cy="1447" rx="7.5" ry="4.6" transform="rotate(144 808 1447)" fill="#a9cf94" opacity="0.6"/>
<ellipse cx="1488" cy="692" rx="2.7" ry="3.7" transform="rotate(11 1488 692)" fill="#a9cf94" opacity="0.6"/>
<ellipse cx="835" cy="405" rx="3.1" ry="2.7" transform="rotate(9 835 405)" fill="#a9cf94" opacity="0.6"/>
<ellipse cx="700" cy="318" rx="2.7" ry="2.8" transform="rotate(5 700 318)" fill="#a9cf94" opacity="0.6"/>
<ellipse cx="2456" cy="1017" rx="3.0" ry="2.4" transform="rotate(63 2456 1017)" fill="#a9cf94" opacity="0.6"/>
<ellipse cx="1431" cy="275" rx="7.9" ry="5.0" transform="rotate(84 1431 275)" fill="#a9cf94" opacity="0.6"/>
<ellipse cx="1672" cy="220" rx="2.7" ry="2.7" transform="rotate(48 1672 220)" fill="#a9cf94" opacity="0.6"/>
<ellipse cx="2364" cy="334" rx="2.2" ry="4.8" transform="rotate(95 2364 334)" fill="#a9cf94" opacity="0.6"/>
<ellipse cx="994" cy="910" rx="2.2" ry="3.3" transform="rotate(176 994 910)" fill="#a9cf94" opacity="0.6"/>
<ellipse cx="2434" cy="1141" rx="3.8" ry="2.8" transform="rotate(30 2434 1141)" fill="#a9cf94" opacity="0.6"/>
<ellipse cx="2250" cy="894" rx="7.5" ry="2.7" transform="rotate(40 2250 894)" fill="#a9cf94" opacity="0.6"/>
<ellipse cx="2330" cy="1576" rx="8.0" ry="4.3" transform="rotate(147 2330 1576)" fill="#a9cf94" opacity="0.6"/>
<ellipse cx="2186" cy="432" rx="5.6" ry="2.7" transform="rotate(5 2186 432)" fill="#a9cf94" opacity="0.6"/>
<ellipse cx="756" cy="512" rx="3.8" ry="3.9" transform="rotate(172 756 512)" fill="#a9cf94" opacity="0.6"/>
<ellipse cx="1598" cy="1504" rx="8.9" ry="4.8" transform="rotate(66 1598 1504)" fill="#a9cf94" opacity="0.6"/>
<ellipse cx="1143" cy="432" rx="3.4" ry="2.2" transform="rotate(112 1143 432)" fill="#a9cf94" opacity="0.6"/>
<ellipse cx="2508" cy="1358" rx="5.4" ry="3.8" transform="rotate(144 2508 1358)" fill="#a9cf94" opacity="0.6"/>
<ellipse cx="870" cy="1087" rx="8.4" ry="4.2" transform="rotate(135 870 1087)" fill="#a9cf94" opacity="0.6"/>
<ellipse cx="1660" cy="359" rx="7.5" ry="2.7" transform="rotate(144 1660 359)" fill="#a9cf94" opacity="0.6"/>
<ellipse cx="2651" cy="687" rx="4.8" ry="4.8" transform="rotate(130 2651 687)" fill="#a9cf94" opacity="0.6"/>
<ellipse cx="1041" cy="282" rx="3.1" ry="4.7" transform="rotate(145 1041 282)" fill="#a9cf94" opacity="0.6"/>
<ellipse cx="994" cy="1337" rx="8.9" ry="3.8" transform="rotate(63 994 1337)" fill="#a9cf94" opacity="0.6"/>
<ellipse cx="1802" cy="288" rx="2.1" ry="4.9" transform="rotate(117 1802 288)" fill="#a9cf94" opacity="0.6"/>
<ellipse cx="1757" cy="1499" rx="5.0" ry="4.6" transform="rotate(149 1757 1499)" fill="#a9cf94" opacity="0.6"/>
<ellipse cx="1124" cy="470" rx="4.1" ry="2.3" transform="rotate(106 1124 470)" fill="#a9cf94" opacity="0.6"/>
<ellipse cx="1221" cy="722" rx="2.9" ry="4.7" transform="rotate(64 1221 722)" fill="#a9cf94" opacity="0.6"/>
<ellipse cx="1620" cy="970" rx="8.3" ry="3.0" transform="rotate(165 1620 970)" fill="#a9cf94" opacity="0.6"/>
<ellipse cx="1707" cy="893" rx="5.7" ry="1.6" transform="rotate(79 1707 893)" fill="#a9cf94" opacity="0.6"/>
<ellipse cx="1068" cy="96" rx="7.6" ry="2.1" transform="rotate(85 1068 96)" fill="#a9cf94" opacity="0.6"/>
<ellipse cx="2156" cy="930" rx="4.3" ry="3.3" transform="rotate(100 2156 930)" fill="#a9cf94" opacity="0.6"/>
<ellipse cx="2275" cy="250" rx="5.9" ry="2.4" transform="rotate(50 2275 250)" fill="#a9cf94" opacity="0.6"/>
<ellipse cx="2251" cy="856" rx="5.9" ry="4.2" transform="rotate(164 2251 856)" fill="#a9cf94" opacity="0.6"/>
<ellipse cx="1590" cy="1014" rx="5.5" ry="3.3" transform="rotate(125 1590 1014)" fill="#a9cf94" opacity="0.6"/>
<ellipse cx="1608" cy="895" rx="5.3" ry="4.8" transform="rotate(126 1608 895)" fill="#a9cf94" opacity="0.6"/>
<ellipse cx="2460" cy="1512" rx="3.8" ry="3.5" transform="rotate(170 2460 1512)" fill="#a9cf94" opacity="0.6"/>
<ellipse cx="2387" cy="297" rx="2.9" ry="3.0" transform="rotate(13 2387 297)" fill="#a9cf94" opacity="0.6"/>
<ellipse cx="1183" cy="200" rx="6.7" ry="4.2" transform="rotate(161 1183 200)" fill="#a9cf94" opacity="0.6"/>
<ellipse cx="1010" cy="1171" rx="6.6" ry="2.0" transform="rotate(159 1010 1171)" fill="#a9cf94" opacity="0.6"/>
<ellipse cx="2643" cy="421" rx="8.7" ry="2.9" transform="rotate(88 2643 421)" fill="#a9cf94" opacity="0.6"/>
<ellipse cx="2688" cy="1346" rx="3.1" ry="3.0" transform="rotate(93 2688 1346)" fill="#a9cf94" opacity="0.6"/>
<ellipse cx="1381" cy="385" rx="4.2" ry="4.0" transform="rotate(4 1381 385)" fill="#a9cf94" opacity="0.6"/>
<ellipse cx="1813" cy="755" rx="2.1" ry="2.7" transform="rotate(112 1813 755)" fill="#a9cf94" opacity="0.6"/>
<ellipse cx="1729" cy="187" rx="8.9" ry="4.3" transform="rotate(175 1729 187)" fill="#a9cf94" opacity="0.6"/>
<ellipse cx="910" cy="491" rx="2.3" ry="4.2" transform="rotate(49 910 491)" fill="#a9cf94" opacity="0.6"/>
<ellipse cx="960" cy="727" rx="8.4" ry="4.4" transform="rotate(47 960 727)" fill="#a9cf94" opacity="0.6"/>
<ellipse cx="1000" cy="1477" rx="6.0" ry="4.0" transform="rotate(16 1000 1477)" fill="#a9cf94" opacity="0.6"/>
<ellipse cx="816" cy="1129" rx="5.0" ry="1.8" transform="rotate(169 816 1129)" fill="#a9cf94" opacity="0.6"/>
<ellipse cx="1974" cy="1300" rx="2.6" ry="4.5" transform="rotate(12 1974 1300)" fill="#a9cf94" opacity="0.6"/>
<ellipse cx="2432" cy="775" rx="4.4" ry="3.4" transform="rotate(167 2432 775)" fill="#a9cf94" opacity="0.6"/>
<ellipse cx="1238" cy="285" rx="5.7" ry="2.3" transform="rotate(20 1238 285)" fill="#a9cf94" opacity="0.6"/>
<ellipse cx="1024" cy="166" rx="3.4" ry="2.6" transform="rotate(55 1024 166)" fill="#a9cf94" opacity="0.6"/>
<ellipse cx="2225" cy="528" rx="5.5" ry="2.1" transform="rotate(62 2225 528)" fill="#a9cf94" opacity="0.6"/>
<ellipse cx="736" cy="468" rx="2.1" ry="4.1" transform="rotate(99 736 468)" fill="#a9cf94" opacity="0.6"/>
<ellipse cx="1080" cy="806" rx="8.5" ry="1.9" transform="rotate(147 1080 806)" fill="#a9cf94" opacity="0.6"/>
<ellipse cx="1568" cy="837" rx="7.8" ry="2.9" transform="rotate(91 1568 837)" fill="#a9cf94" opacity="0.6"/>
<ellipse cx="2081" cy="1573" rx="4.4" ry="4.4" transform="rotate(127 2081 1573)" fill="#a9cf94" opacity="0.6"/>
<ellipse cx="1977" cy="701" rx="4.4" ry="1.7" transform="rotate(23 1977 701)" fill="#a9cf94" opacity="0.6"/>
<ellipse cx="842" cy="1208" rx="3.8" ry="2.1" transform="rotate(15 842 1208)" fill="#a9cf94" opacity="0.6"/>
<ellipse cx="2389" cy="1404" rx="6.7" ry="2.5" transform="rotate(44 2389 1404)" fill="#a9cf94" opacity="0.6"/>
<ellipse cx="1288" cy="783" rx="3.1" ry="3.1" transform="rotate(47 1288 783)" fill="#a9cf94" opacity="0.6"/>
<ellipse cx="2631" cy="1558" rx="5.8" ry="2.4" transform="rotate(174 2631 1558)" fill="#a9cf94" opacity="0.6"/>
<ellipse cx="1322" cy="628" rx="2.0" ry="2.8" transform="rotate(85 1322 628)" fill="#a9cf94" opacity="0.6"/>
<ellipse cx="1710" cy="393" rx="5.5" ry="1.5" transform="rotate(48 1710 393)" fill="#a9cf94" opacity="0.6"/>
<ellipse cx="880" cy="693" rx="2.3" ry="1.6" transform="rotate(55 880 693)" fill="#a9cf94" opacity="0.6"/>
<ellipse cx="1167" cy="974" rx="5.7" ry="4.1" transform="rotate(118 1167 974)" fill="#a9cf94" opacity="0.6"/>
<ellipse cx="2138" cy="1417" rx="4.7" ry="2.6" transform="rotate(177 2138 1417)" fill="#a9cf94" opacity="0.6"/>
<ellipse cx="1000" cy="1183" rx="6.5" ry="1.7" transform="rotate(150 1000 1183)" fill="#a9cf94" opacity="0.6"/>
<ellipse cx="2491" cy="1037" rx="7.1" ry="4.3" transform="rotate(25 2491 1037)" fill="#a9cf94" opacity="0.6"/>
<ellipse cx="1752" cy="851" rx="7.8" ry="4.3" transform="rotate(149 1752 851)" fill="#a9cf94" opacity="0.6"/>
<ellipse cx="1873" cy="1437" rx="6.8" ry="3.9" transform="rotate(41 1873 1437)" fill="#a9cf94" opacity="0.6"/>
<ellipse cx="763" cy="291" rx="4.5" ry="1.9" transform="rotate(150 763 291)" fill="#a9cf94" opacity="0.6"/>
<ellipse cx="1822" cy="1037" rx="6.4" ry="3.9" transform="rotate(88 1822 1037)" fill="#a9cf94" opacity="0.6"/>
<ellipse cx="707" cy="1294" rx="7.2" ry="3.3" transform="rotate(96 707 1294)" fill="#a9cf94" opacity="0.6"/>
<ellipse cx="2024" cy="190" rx="7.2" ry="2.4" transform="rotate(13 2024 190)" fill="#a9cf94" opacity="0.6"/>
<ellipse cx="1233" cy="1191" rx="3.4" ry="4.1" transform="rotate(176 1233 1191)" fill="#a9cf94" opacity="0.6"/>
<ellipse cx="1692" cy="667" rx="5.4" ry="3.9" transform="rotate(138 1692 667)" fill="#a9cf94" opacity="0.6"/>
<ellipse cx="1939" cy="1060" rx="2.5" ry="2.0" transform="rotate(46 1939 1060)" fill="#a9cf94" opacity="0.6"/>
<ellipse cx="2192" cy="549" rx="6.0" ry="1.5" transform="rotate(11 2192 549)" fill="#a9cf94" opacity="0.6"/>
<ellipse cx="1240" cy="1104" rx="6.8" ry="3.9" transform="rotate(52 1240 1104)" fill="#a9cf94" opacity="0.6"/>
<ellipse cx="1737" cy="791" rx="5.3" ry="1.9" transform="rotate(161 1737 791)" fill="#a9cf94" opacity="0.6"/>
<ellipse cx="1100" cy="1566" rx="8.6" ry="1.6" transform="rotate(83 1100 1566)" fill="#a9cf94" opacity="0.6"/>
<ellipse cx="2346" cy="1551" rx="5.1" ry="2.4" transform="rotate(38 2346 1551)" fill="#a9cf94" opacity="0.6"/>
<ellipse cx="2599" cy="408" rx="6.1" ry="2.0" transform="rotate(94 2599 408)" fill="#a9cf94" opacity="0.6"/>
<ellipse cx="2613" cy="290" rx="7.7" ry="3.3" transform="rotate(160 2613 290)" fill="#a9cf94" opacity="0.6"/>
<ellipse cx="2112" cy="439" rx="8.3" ry="3.2" transform="rotate(4 2112 439)" fill="#a9cf94" opacity="0.6"/>
<ellipse cx="707" cy="832" rx="5.2" ry="2.6" transform="rotate(25 707 832)" fill="#a9cf94" opacity="0.6"/>
<ellipse cx="1391" cy="567" rx="7.9" ry="1.5" transform="rotate(135 1391 567)" fill="#a9cf94" opacity="0.6"/>
<ellipse cx="2385" cy="271" rx="8.5" ry="4.0" transform="rotate(162 2385 271)" fill="#a9cf94" opacity="0.6"/>
<ellipse cx="1282" cy="652" rx="4.8" ry="5.0" transform="rotate(106 1282 652)" fill="#a9cf94" opacity="0.6"/>
<ellipse cx="1424" cy="736" rx="3.9" ry="1.7" transform="rotate(18 1424 736)" fill="#a9cf94" opacity="0.6"/>
<ellipse cx="2376" cy="521" rx="8.5" ry="2.4" transform="rotate(48 2376 521)" fill="#a9cf94" opacity="0.6"/>
<ellipse cx="1726" cy="376" rx="4.6" ry="4.8" transform="rotate(159 1726 376)" fill="#a9cf94" opacity="0.6"/>
<ellipse cx="2330" cy="1042" rx="8.4" ry="4.8" transform="rotate(99 2330 1042)" fill="#a9cf94" opacity="0.6"/>
<ellipse cx="2145" cy="165" rx="7.1" ry="3.1" transform="rotate(135 2145 165)" fill="#a9cf94" opacity="0.6"/>
<ellipse cx="1994" cy="522" rx="2.3" ry="4.7" transform="rotate(23 1994 522)" fill="#a9cf94" opacity="0.6"/>
<ellipse cx="1648" cy="609" rx="4.1" ry="4.1" transform="rotate(176 1648 609)" fill="#a9cf94" opacity="0.6"/>
<ellipse cx="1222" cy="1080" rx="4.1" ry="3.5" transform="rotate(71 1222 1080)" fill="#a9cf94" opacity="0.6"/>
<ellipse cx="1036" cy="334" rx="3.5" ry="4.7" transform="rotate(89 1036 334)" fill="#a9cf94" opacity="0.6"/>
<ellipse cx="1142" cy="1458" rx="9.0" ry="3.1" transform="rotate(25 1142 1458)" fill="#a9cf94" opacity="0.6"/>
<ellipse cx="1086" cy="227" rx="4.4" ry="1.8" transform="rotate(43 1086 227)" fill="#a9cf94" opacity="0.6"/>
<ellipse cx="1219" cy="950" rx="8.2" ry="4.1" transform="rotate(74 1219 950)" fill="#a9cf94" opacity="0.6"/>
<ellipse cx="1531" cy="881" rx="4.6" ry="2.7" transform="rotate(11 1531 881)" fill="#a9cf94" opacity="0.6"/>
<ellipse cx="1257" cy="1550" rx="2.9" ry="3.3" transform="rotate(113 1257 1550)" fill="#a9cf94" opacity="0.6"/>
<ellipse cx="2433" cy="416" rx="3.9" ry="2.4" transform="rotate(72 2433 416)" fill="#a9cf94" opacity="0.6"/>
<ellipse cx="1595" cy="1530" rx="7.9" ry="4.6" transform="rotate(4 1595 1530)" fill="#a9cf94" opacity="0.6"/>
<ellipse cx="765" cy="1161" rx="8.3" ry="3.2" transform="rotate(106 765 1161)" fill="#a9cf94" opacity="0.6"/>
<ellipse cx="700" cy="681" rx="8.5" ry="4.4" transform="rotate(154 700 681)" fill="#a9cf94" opacity="0.6"/>
<ellipse cx="2652" cy="465" rx="2.8" ry="2.0" transform="rotate(94 2652 465)" fill="#a9cf94" opacity="0.6"/>
<ellipse cx="2070" cy="1511" rx="7.1" ry="3.8" transform="rotate(138 2070 1511)" fill="#a9cf94" opacity="0.6"/>
<ellipse cx="1618" cy="922" rx="2.3" ry="4.2" transform="rotate(42 1618 922)" fill="#a9cf94" opacity="0.6"/>
<ellipse cx="2547" cy="1064" rx="4.1" ry="1.9" transform="rotate(45 2547 1064)" fill="#a9cf94" opacity="0.6"/>
<ellipse cx="1978" cy="1144" rx="2.8" ry="1.7" transform="rotate(94 1978 1144)" fill="#a9cf94" opacity="0.6"/>
<ellipse cx="1870" cy="676" rx="3.6" ry="3.6" transform="rotate(2 1870 676)" fill="#a9cf94" opacity="0.6"/>
<ellipse cx="1305" cy="785" rx="8.7" ry="3.8" transform="rotate(159 1305 785)" fill="#a9cf94" opacity="0.6"/>
<ellipse cx="1654" cy="444" rx="3.7" ry="4.9" transform="rotate(127 1654 444)" fill="#a9cf94" opacity="0.6"/>
<ellipse cx="1317" cy="123" rx="5.5" ry="3.9" transform="rotate(76 1317 123)" fill="#a9cf94" opacity="0.6"/>
<ellipse cx="1217" cy="1097" rx="8.5" ry="2.3" transform="rotate(6 1217 1097)" fill="#a9cf94" opacity="0.6"/>
<ellipse cx="1379" cy="725" rx="6.8" ry="2.2" transform="rotate(143 1379 725)" fill="#a9cf94" opacity="0.6"/>
<ellipse cx="2184" cy="852" rx="3.4" ry="4.9" transform="rotate(56 2184 852)" fill="#a9cf94" opacity="0.6"/>
<ellipse cx="2347" cy="438" rx="3.6" ry="4.2" transform="rotate(53 2347 438)" fill="#a9cf94" opacity="0.6"/>
<ellipse cx="2611" cy="838" rx="3.3" ry="2.3" transform="rotate(75 2611 838)" fill="#a9cf94" opacity="0.6"/>
<ellipse cx="2036" cy="1522" rx="3.0" ry="2.9" transform="rotate(38 2036 1522)" fill="#a9cf94" opacity="0.6"/>
<ellipse cx="2656" cy="304" rx="2.4" ry="1.7" transform="rotate(71 2656 304)" fill="#a9cf94" opacity="0.6"/>
<ellipse cx="2504" cy="1423" rx="7.1" ry="5.0" transform="rotate(168 2504 1423)" fill="#a9cf94" opacity="0.6"/>
<ellipse cx="1361" cy="370" rx="8.6" ry="4.1" transform="rotate(6 1361 370)" fill="#a9cf94" opacity="0.6"/>
<ellipse cx="2034" cy="661" rx="4.6" ry="2.7" transform="rotate(30 2034 661)" fill="#a9cf94" opacity="0.6"/>
<ellipse cx="706" cy="512" rx="4.5" ry="4.8" transform="rotate(22 706 512)" fill="#a9cf94" opacity="0.6"/>
<ellipse cx="2636" cy="403" rx="4.5" ry="4.4" transform="rotate(148 2636 403)" fill="#a9cf94" opacity="0.6"/>
<ellipse cx="1568" cy="164" rx="5.3" ry="2.8" transform="rotate(166 1568 164)" fill="#a9cf94" opacity="0.6"/>
<ellipse cx="1088" cy="640" rx="8.3" ry="1.6" transform="rotate(74 1088 640)" fill="#a9cf94" opacity="0.6"/>
<ellipse cx="2330" cy="1247" rx="2.3" ry="1.6" transform="rotate(11 2330 1247)" fill="#a9cf94" opacity="0.6"/>
<ellipse cx="2548" cy="478" rx="7.2" ry="4.6" transform="rotate(61 2548 478)" fill="#a9cf94" opacity="0.6"/>
<ellipse cx="1247" cy="1535" rx="6.3" ry="2.4" transform="rotate(129 1247 1535)" fill="#a9cf94" opacity="0.6"/>
<ellipse cx="1335" cy="506" rx="2.0" ry="4.1" transform="rotate(165 1335 506)" fill="#a9cf94" opacity="0.6"/>
<ellipse cx="1973" cy="1513" rx="2.2" ry="2.3" transform="rotate(86 1973 1513)" fill="#a9cf94" opacity="0.6"/>
<ellipse cx="2621" cy="1529" rx="4.7" ry="2.4" transform="rotate(77 2621 1529)" fill="#a9cf94" opacity="0.6"/>
<ellipse cx="1691" cy="1491" rx="3.3" ry="4.3" transform="rotate(133 1691 1491)" fill="#a9cf94" opacity="0.6"/>
<ellipse cx="2352" cy="1256" rx="6.3" ry="2.6" transform="rotate(58 2352 1256)" fill="#a9cf94" opacity="0.6"/>
<ellipse cx="1427" cy="1270" rx="2.6" ry="2.2" transform="rotate(136 1427 1270)" fill="#a9cf94" opacity="0.6"/>
<ellipse cx="1197" cy="188" rx="2.2" ry="3.4" transform="rotate(59 1197 188)" fill="#a9cf94" opacity="0.6"/>
<ellipse cx="2668" cy="1423" rx="8.9" ry="2.4" transform="rotate(15 2668 1423)" fill="#a9cf94" opacity="0.6"/>
<ellipse cx="894" cy="842" rx="7.0" ry="3.1" transform="rotate(42 894 842)" fill="#a9cf94" opacity="0.6"/>
<ellipse cx="1537" cy="1026" rx="6.7" ry="4.1" transform="rotate(152 1537 1026)" fill="#a9cf94" opacity="0.6"/>
<ellipse cx="2034" cy="273" rx="7.9" ry="2.5" transform="rotate(102 2034 273)" fill="#a9cf94" opacity="0.6"/>
<ellipse cx="1449" cy="1204" rx="3.4" ry="2.4" transform="rotate(44 1449 1204)" fill="#a9cf94" opacity="0.6"/>
<ellipse cx="1008" cy="1424" rx="6.0" ry="2.6" transform="rotate(71 1008 1424)" fill="#a9cf94" opacity="0.6"/>
<ellipse cx="2693" cy="856" rx="3.6" ry="4.3" transform="rotate(118 2693 856)" fill="#a9cf94" opacity="0.6"/>
<ellipse cx="2690" cy="244" rx="5.3" ry="4.4" transform="rotate(151 2690 244)" fill="#a9cf94" opacity="0.6"/>
<ellipse cx="2536" cy="151" rx="4.1" ry="1.9" transform="rotate(34 2536 151)" fill="#a9cf94" opacity="0.6"/>
<ellipse cx="2654" cy="970" rx="8.5" ry="2.8" transform="rotate(156 2654 970)" fill="#a9cf94" opacity="0.6"/>
<ellipse cx="1602" cy="482" rx="7.4" ry="4.8" transform="rotate(19 1602 482)" fill="#a9cf94" opacity="0.6"/>
<ellipse cx="1897" cy="1026" rx="3.5" ry="2.8" transform="rotate(25 1897 1026)" fill="#a9cf94" opacity="0.6"/>
<ellipse cx="1110" cy="475" rx="6.2" ry="3.8" transform="rotate(37 1110 475)" fill="#a9cf94" opacity="0.6"/>
<ellipse cx="723" cy="584" rx="6.7" ry="2.1" transform="rotate(56 723 584)" fill="#a9cf94" opacity="0.6"/>
<ellipse cx="1108" cy="1290" rx="5.8" ry="1.7" transform="rotate(18 1108 1290)" fill="#a9cf94" opacity="0.6"/>
<ellipse cx="1494" cy="920" rx="6.5" ry="1.8" transform="rotate(29 1494 920)" fill="#a9cf94" opacity="0.6"/>
<ellipse cx="2096" cy="708" rx="4.0" ry="2.6" transform="rotate(172 2096 708)" fill="#a9cf94" opacity="0.6"/>
<ellipse cx="1327" cy="945" rx="4.5" ry="3.0" transform="rotate(156 1327 945)" fill="#a9cf94" opacity="0.6"/>
<ellipse cx="2701" cy="639" rx="3.4" ry="4.0" transform="rotate(37 2701 639)" fill="#a9cf94" opacity="0.6"/>
<ellipse cx="712" cy="1451" rx="5.0" ry="4.4" transform="rotate(73 712 1451)" fill="#a9cf94" opacity="0.6"/>
<ellipse cx="2473" cy="786" rx="3.1" ry="1.6" transform="rotate(99 2473 786)" fill="#a9cf94" opacity="0.6"/>
<ellipse cx="1986" cy="1463" rx="2.6" ry="3.7" transform="rotate(67 1986 1463)" fill="#a9cf94" opacity="0.6"/>
<ellipse cx="1713" cy="310" rx="4.0" ry="3.3" transform="rotate(167 1713 310)" fill="#a9cf94" opacity="0.6"/>
<ellipse cx="918" cy="830" rx="7.6" ry="4.9" transform="rotate(36 918 830)" fill="#a9cf94" opacity="0.6"/>
<ellipse cx="954" cy="1513" rx="8.8" ry="3.2" transform="rotate(10 954 1513)" fill="#a9cf94" opacity="0.6"/>
<ellipse cx="2560" cy="675" rx="8.3" ry="3.7" transform="rotate(148 2560 675)" fill="#a9cf94" opacity="0.6"/>
<ellipse cx="1022" cy="1276" rx="3.6" ry="2.9" transform="rotate(152 1022 1276)" fill="#a9cf94" opacity="0.6"/>
<ellipse cx="2365" cy="366" rx="3.5" ry="2.9" transform="rotate(93 2365 366)" fill="#a9cf94" opacity="0.6"/>
<ellipse cx="1470" cy="276" rx="3.7" ry="4.0" transform="rotate(162 1470 276)" fill="#a9cf94" opacity="0.6"/>
<ellipse cx="783" cy="939" rx="7.3" ry="1.6" transform="rotate(151 783 939)" fill="#a9cf94" opacity="0.6"/>
<ellipse cx="936" cy="995" rx="5.9" ry="3.7" transform="rotate(55 936 995)" fill="#a9cf94" opacity="0.6"/>
<ellipse cx="1544" cy="969" rx="5.0" ry="3.8" transform="rotate(80 1544 969)" fill="#a9cf94" opacity="0.6"/>
<ellipse cx="1580" cy="125" rx="6.3" ry="3.2" transform="rotate(42 1580 125)" fill="#a9cf94" opacity="0.6"/>
<ellipse cx="2233" cy="1267" rx="5.2" ry="2.1" transform="rotate(85 2233 1267)" fill="#a9cf94" opacity="0.6"/>
<ellipse cx="915" cy="284" rx="5.0" ry="1.8" transform="rotate(80 915 284)" fill="#a9cf94" opacity="0.6"/>
<ellipse cx="1724" cy="152" rx="6.5" ry="1.8" transform="rotate(132 1724 152)" fill="#a9cf94" opacity="0.6"/>
<ellipse cx="2261" cy="862" rx="2.4" ry="3.3" transform="rotate(68 2261 862)" fill="#a9cf94" opacity="0.6"/>
<ellipse cx="2609" cy="296" rx="8.0" ry="5.0" transform="rotate(132 2609 296)" fill="#a9cf94" opacity="0.6"/>
<ellipse cx="2336" cy="382" rx="8.9" ry="3.2" transform="rotate(172 2336 382)" fill="#a9cf94" opacity="0.6"/>
<ellipse cx="2539" cy="339" rx="7.5" ry="4.8" transform="rotate(12 2539 339)" fill="#a9cf94" opacity="0.6"/>
<ellipse cx="1405" cy="1231" rx="3.1" ry="4.6" transform="rotate(49 1405 1231)" fill="#a9cf94" opacity="0.6"/>
<ellipse cx="2338" cy="307" rx="5.5" ry="4.7" transform="rotate(37 2338 307)" fill="#a9cf94" opacity="0.6"/>
<ellipse cx="1228" cy="854" rx="4.2" ry="1.6" transform="rotate(33 1228 854)" fill="#a9cf94" opacity="0.6"/>
<ellipse cx="1024" cy="1503" rx="6.8" ry="4.6" transform="rotate(30 1024 1503)" fill="#a9cf94" opacity="0.6"/>
<ellipse cx="2276" cy="264" rx="5.7" ry="3.7" transform="rotate(65 2276 264)" fill="#a9cf94" opacity="0.6"/>
<ellipse cx="2453" cy="928" rx="6.1" ry="4.6" transform="rotate(19 2453 928)" fill="#a9cf94" opacity="0.6"/>
<ellipse cx="2694" cy="1040" rx="4.8" ry="4.3" transform="rotate(48 2694 1040)" fill="#a9cf94" opacity="0.6"/>
<ellipse cx="2689" cy="961" rx="4.5" ry="4.2" transform="rotate(80 2689 961)" fill="#a9cf94" opacity="0.6"/>
<ellipse cx="1055" cy="1212" rx="2.3" ry="4.4" transform="rotate(46 1055 1212)" fill="#a9cf94" opacity="0.6"/>
<ellipse cx="1984" cy="1575" rx="6.1" ry="3.8" transform="rotate(56 1984 1575)" fill="#a9cf94" opacity="0.6"/>
<ellipse cx="704" cy="141" rx="3.0" ry="3.7" transform="rotate(78 704 141)" fill="#a9cf94" opacity="0.6"/>
<ellipse cx="1729" cy="1441" rx="2.9" ry="2.3" transform="rotate(118 1729 1441)" fill="#a9cf94" opacity="0.6"/>
<ellipse cx="745" cy="94" rx="4.5" ry="1.9" transform="rotate(64 745 94)" fill="#a9cf94" opacity="0.6"/>
<ellipse cx="1150" cy="971" rx="6.1" ry="2.2" transform="rotate(112 1150 971)" fill="#a9cf94" opacity="0.6"/>
<ellipse cx="1654" cy="293" rx="8.6" ry="2.4" transform="rotate(27 1654 293)" fill="#a9cf94" opacity="0.6"/>
<ellipse cx="892" cy="1053" rx="8.1" ry="4.2" transform="rotate(72 892 1053)" fill="#a9cf94" opacity="0.6"/>
<ellipse cx="1231" cy="107" rx="6.5" ry="3.5" transform="rotate(63 1231 107)" fill="#a9cf94" opacity="0.6"/>
<ellipse cx="1996" cy="760" rx="8.6" ry="4.1" transform="rotate(45 1996 760)" fill="#a9cf94" opacity="0.6"/>
<ellipse cx="2514" cy="156" rx="5.7" ry="2.9" transform="rotate(43 2514 156)" fill="#a9cf94" opacity="0.6"/>
<ellipse cx="817" cy="1265" rx="2.1" ry="3.4" transform="rotate(169 817 1265)" fill="#a9cf94" opacity="0.6"/>
<ellipse cx="986" cy="391" rx="6.3" ry="3.3" transform="rotate(115 986 391)" fill="#a9cf94" opacity="0.6"/>
<ellipse cx="2333" cy="354" rx="4.2" ry="2.6" transform="rotate(9 2333 354)" fill="#a9cf94" opacity="0.6"/>
<ellipse cx="2486" cy="1272" rx="7.0" ry="1.5" transform="rotate(152 2486 1272)" fill="#a9cf94" opacity="0.6"/>
<ellipse cx="2196" cy="792" rx="7.2" ry="3.1" transform="rotate(41 2196 792)" fill="#a9cf94" opacity="0.6"/>
<ellipse cx="911" cy="441" rx="2.3" ry="2.7" transform="rotate(135 911 441)" fill="#a9cf94" opacity="0.6"/>
<ellipse cx="2096" cy="1366" rx="7.0" ry="2.4" transform="rotate(100 2096 1366)" fill="#a9cf94" opacity="0.6"/>
<ellipse cx="1576" cy="1280" rx="5.7" ry="2.4" transform="rotate(116 1576 1280)" fill="#a9cf94" opacity="0.6"/>
<ellipse cx="2638" cy="417" rx="8.2" ry="1.6" transform="rotate(47 2638 417)" fill="#a9cf94" opacity="0.6"/>
<ellipse cx="1174" cy="1213" rx="8.6" ry="4.1" transform="rotate(59 1174 1213)" fill="#a9cf94" opacity="0.6"/>
<ellipse cx="2467" cy="586" rx="3.7" ry="4.7" transform="rotate(114 2467 586)" fill="#a9cf94" opacity="0.6"/>
<ellipse cx="2091" cy="1094" rx="8.9" ry="3.1" transform="rotate(151 2091 1094)" fill="#a9cf94" opacity="0.6"/>
<ellipse cx="2101" cy="1384" rx="5.1" ry="4.0" transform="rotate(103 2101 1384)" fill="#a9cf94" opacity="0.6"/>
<ellipse cx="1318" cy="410" rx="6.4" ry="1.8" transform="rotate(164 1318 410)" fill="#a9cf94" opacity="0.6"/>
<ellipse cx="990" cy="131" rx="2.7" ry="4.8" transform="rotate(62 990 131)" fill="#a9cf94" opacity="0.6"/>
<ellipse cx="985" cy="133" rx="2.3" ry="3.9" transform="rotate(114 985 133)" fill="#a9cf94" opacity="0.6"/>
<ellipse cx="2100" cy="1202" rx="2.5" ry="3.6" transform="rotate(65 2100 1202)" fill="#a9cf94" opacity="0.6"/>
<ellipse cx="2342" cy="1327" rx="8.2" ry="1.7" transform="rotate(156 2342 1327)" fill="#a9cf94" opacity="0.6"/>
<ellipse cx="2536" cy="1515" rx="2.7" ry="2.2" transform="rotate(20 2536 1515)" fill="#a9cf94" opacity="0.6"/>
<ellipse cx="769" cy="1369" rx="7.7" ry="3.7" transform="rotate(149 769 1369)" fill="#a9cf94" opacity="0.6"/>
<ellipse cx="1968" cy="524" rx="2.7" ry="1.8" transform="rotate(136 1968 524)" fill="#a9cf94" opacity="0.6"/>
<ellipse cx="1112" cy="572" rx="5.0" ry="1.6" transform="rotate(46 1112 572)" fill="#a9cf94" opacity="0.6"/>
<ellipse cx="1267" cy="1170" rx="4.6" ry="2.6" transform="rotate(174 1267 1170)" fill="#a9cf94" opacity="0.6"/>
<ellipse cx="1712" cy="1375" rx="6.3" ry="1.6" transform="rotate(74 1712 1375)" fill="#a9cf94" opacity="0.6"/>
<ellipse cx="1576" cy="1256" rx="4.4" ry="4.0" transform="rotate(97 1576 1256)" fill="#a9cf94" opacity="0.6"/>
<ellipse cx="1135" cy="1391" rx="2.6" ry="4.4" transform="rotate(31 1135 1391)" fill="#a9cf94" opacity="0.6"/>
<ellipse cx="703" cy="395" rx="7.3" ry="4.9" transform="rotate(1 703 395)" fill="#a9cf94" opacity="0.6"/>
<ellipse cx="1686" cy="832" rx="7.6" ry="2.1" transform="rotate(89 1686 832)" fill="#a9cf94" opacity="0.6"/>
<ellipse cx="1397" cy="1345" rx="3.8" ry="4.8" transform="rotate(51 1397 1345)" fill="#a9cf94" opacity="0.6"/>
<ellipse cx="1131" cy="1146" rx="5.5" ry="1.9" transform="rotate(115 1131 1146)" fill="#a9cf94" opacity="0.6"/>
<ellipse cx="862" cy="1279" rx="6.9" ry="4.3" transform="rotate(113 862 1279)" fill="#a9cf94" opacity="0.6"/>
<ellipse cx="1414" cy="696" rx="4.8" ry="4.6" transform="rotate(16 1414 696)" fill="#a9cf94" opacity="0.6"/>
<ellipse cx="2484" cy="128" rx="3.4" ry="2.4" transform="rotate(162 2484 128)" fill="#a9cf94" opacity="0.6"/>
<ellipse cx="1706" cy="662" rx="8.2" ry="2.3" transform="rotate(83 1706 662)" fill="#a9cf94" opacity="0.6"/>
<ellipse cx="1767" cy="1229" rx="7.3" ry="3.8" transform="rotate(63 1767 1229)" fill="#a9cf94" opacity="0.6"/>
<ellipse cx="1356" cy="324" rx="7.9" ry="3.8" transform="rotate(134 1356 324)" fill="#a9cf94" opacity="0.6"/>
<ellipse cx="1040" cy="752" rx="7.4" ry="3.5" transform="rotate(23 1040 752)" fill="#a9cf94" opacity="0.6"/>
<ellipse cx="1628" cy="1426" rx="3.7" ry="2.2" transform="rotate(54 1628 1426)" fill="#a9cf94" opacity="0.6"/>
<ellipse cx="2112" cy="1363" rx="3.1" ry="2.0" transform="rotate(45 2112 1363)" fill="#a9cf94" opacity="0.6"/>
<ellipse cx="1356" cy="878" rx="3.1" ry="2.6" transform="rotate(34 1356 878)" fill="#a9cf94" opacity="0.6"/>
<ellipse cx="2658" cy="1190" rx="2.7" ry="4.9" transform="rotate(18 2658 1190)" fill="#a9cf94" opacity="0.6"/>
<ellipse cx="1472" cy="1575" rx="7.6" ry="4.1" transform="rotate(78 1472 1575)" fill="#a9cf94" opacity="0.6"/>
<ellipse cx="1094" cy="1053" rx="2.7" ry="2.2" transform="rotate(70 1094 1053)" fill="#a9cf94" opacity="0.6"/>
<ellipse cx="768" cy="692" rx="7.5" ry="3.9" transform="rotate(90 768 692)" fill="#a9cf94" opacity="0.6"/>
<ellipse cx="1970" cy="789" rx="3.0" ry="3.6" transform="rotate(73 1970 789)" fill="#a9cf94" opacity="0.6"/>
<ellipse cx="2188" cy="1460" rx="5.0" ry="3.5" transform="rotate(135 2188 1460)" fill="#a9cf94" opacity="0.6"/>
<ellipse cx="1546" cy="435" rx="7.1" ry="4.6" transform="rotate(139 1546 435)" fill="#a9cf94" opacity="0.6"/>
<ellipse cx="2106" cy="1376" rx="6.8" ry="3.7" transform="rotate(82 2106 1376)" fill="#a9cf94" opacity="0.6"/>
<ellipse cx="1329" cy="1038" rx="2.7" ry="3.0" transform="rotate(141 1329 1038)" fill="#a9cf94" opacity="0.6"/>
<ellipse cx="2132" cy="1040" rx="3.8" ry="3.0" transform="rotate(82 2132 1040)" fill="#a9cf94" opacity="0.6"/>
<ellipse cx="1948" cy="708" rx="6.7" ry="4.8" transform="rotate(33 1948 708)" fill="#a9cf94" opacity="0.6"/>
<ellipse cx="2014" cy="1264" rx="4.7" ry="3.2" transform="rotate(175 2014 1264)" fill="#a9cf94" opacity="0.6"/>
<ellipse cx="777" cy="910" rx="3.1" ry="4.2" transform="rotate(169 777 910)" fill="#a9cf94" opacity="0.6"/>
<ellipse cx="1743" cy="243" rx="6.0" ry="3.4" transform="rotate(129 1743 243)" fill="#a9cf94" opacity="0.6"/>
<ellipse cx="1728" cy="1055" rx="7.8" ry="3.3" transform="rotate(74 1728 1055)" fill="#a9cf94" opacity="0.6"/>
<ellipse cx="2604" cy="407" rx="6.8" ry="2.9" transform="rotate(137 2604 407)" fill="#a9cf94" opacity="0.6"/>
<ellipse cx="946" cy="1576" rx="4.5" ry="1.7" transform="rotate(49 946 1576)" fill="#a9cf94" opacity="0.6"/>
<ellipse cx="1503" cy="110" rx="4.9" ry="3.0" transform="rotate(126 1503 110)" fill="#a9cf94" opacity="0.6"/>
<ellipse cx="1407" cy="490" rx="3.6" ry="4.1" transform="rotate(169 1407 490)" fill="#a9cf94" opacity="0.6"/>
<ellipse cx="1758" cy="420" rx="7.6" ry="2.9" transform="rotate(38 1758 420)" fill="#a9cf94" opacity="0.6"/>
<ellipse cx="960" cy="1262" rx="7.7" ry="3.7" transform="rotate(84 960 1262)" fill="#a9cf94" opacity="0.6"/>
<ellipse cx="1829" cy="431" rx="8.7" ry="2.7" transform="rotate(115 1829 431)" fill="#a9cf94" opacity="0.6"/>
<ellipse cx="2344" cy="1322" rx="5.3" ry="2.5" transform="rotate(99 2344 1322)" fill="#a9cf94" opacity="0.6"/>
<ellipse cx="951" cy="1348" rx="4.5" ry="4.5" transform="rotate(48 951 1348)" fill="#a9cf94" opacity="0.6"/>
<ellipse cx="1455" cy="473" rx="5.0" ry="2.2" transform="rotate(0 1455 473)" fill="#a9cf94" opacity="0.6"/>
<ellipse cx="2149" cy="514" rx="3.7" ry="2.6" transform="rotate(86 2149 514)" fill="#a9cf94" opacity="0.6"/>
<ellipse cx="1560" cy="1052" rx="6.6" ry="2.8" transform="rotate(167 1560 1052)" fill="#a9cf94" opacity="0.6"/>
<ellipse cx="2416" cy="176" rx="7.8" ry="4.7" transform="rotate(141 2416 176)" fill="#a9cf94" opacity="0.6"/>
<ellipse cx="982" cy="1344" rx="6.4" ry="1.6" transform="rotate(2 982 1344)" fill="#a9cf94" opacity="0.6"/>
<ellipse cx="2611" cy="1080" rx="3.8" ry="1.9" transform="rotate(26 2611 1080)" fill="#a9cf94" opacity="0.6"/>
<ellipse cx="1169" cy="1261" rx="4.4" ry="2.0" transform="rotate(163 1169 1261)" fill="#a9cf94" opacity="0.6"/>
<ellipse cx="2290" cy="343" rx="8.2" ry="3.6" transform="rotate(141 2290 343)" fill="#a9cf94" opacity="0.6"/>
<ellipse cx="2042" cy="1439" rx="7.5" ry="4.4" transform="rotate(36 2042 1439)" fill="#a9cf94" opacity="0.6"/>
<ellipse cx="2091" cy="891" rx="7.2" ry="3.0" transform="rotate(159 2091 891)" fill="#a9cf94" opacity="0.6"/>
<ellipse cx="1815" cy="489" rx="3.6" ry="2.0" transform="rotate(89 1815 489)" fill="#a9cf94" opacity="0.6"/>
<ellipse cx="817" cy="795" rx="3.0" ry="3.2" transform="rotate(90 817 795)" fill="#a9cf94" opacity="0.6"/>
<ellipse cx="1783" cy="1392" rx="2.0" ry="4.4" transform="rotate(84 1783 1392)" fill="#a9cf94" opacity="0.6"/>
<ellipse cx="1830" cy="1094" rx="7.9" ry="2.8" transform="rotate(75 1830 1094)" fill="#a9cf94" opacity="0.6"/>
<ellipse cx="2629" cy="204" rx="6.5" ry="3.7" transform="rotate(5 2629 204)" fill="#a9cf94" opacity="0.6"/>
<ellipse cx="1924" cy="1120" rx="8.5" ry="2.7" transform="rotate(177 1924 1120)" fill="#a9cf94" opacity="0.6"/>
<ellipse cx="1725" cy="821" rx="8.3" ry="1.6" transform="rotate(129 1725 821)" fill="#a9cf94" opacity="0.6"/>
<ellipse cx="1956" cy="601" rx="8.0" ry="2.8" transform="rotate(85 1956 601)" fill="#a9cf94" opacity="0.6"/>
<ellipse cx="1755" cy="1253" rx="3.5" ry="3.0" transform="rotate(76 1755 1253)" fill="#a9cf94" opacity="0.6"/>
<ellipse cx="1812" cy="1338" rx="4.1" ry="4.4" transform="rotate(73 1812 1338)" fill="#a9cf94" opacity="0.6"/>
<ellipse cx="1712" cy="500" rx="5.5" ry="4.9" transform="rotate(118 1712 500)" fill="#a9cf94" opacity="0.6"/>
<ellipse cx="2290" cy="589" rx="4.2" ry="2.5" transform="rotate(106 2290 589)" fill="#a9cf94" opacity="0.6"/>
<ellipse cx="1975" cy="1273" rx="2.3" ry="4.0" transform="rotate(159 1975 1273)" fill="#a9cf94" opacity="0.6"/>
<ellipse cx="1795" cy="165" rx="4.1" ry="1.5" transform="rotate(34 1795 165)" fill="#a9cf94" opacity="0.6"/>
<ellipse cx="2550" cy="1009" rx="6.6" ry="4.3" transform="rotate(164 2550 1009)" fill="#a9cf94" opacity="0.6"/>
<ellipse cx="1928" cy="1021" rx="6.4" ry="3.9" transform="rotate(107 1928 1021)" fill="#a9cf94" opacity="0.6"/>
<ellipse cx="2067" cy="411" rx="6.7" ry="3.1" transform="rotate(137 2067 411)" fill="#a9cf94" opacity="0.6"/>
<ellipse cx="904" cy="364" rx="2.3" ry="4.2" transform="rotate(165 904 364)" fill="#a9cf94" opacity="0.6"/>
<ellipse cx="2017" cy="647" rx="7.8" ry="4.3" transform="rotate(101 2017 647)" fill="#a9cf94" opacity="0.6"/>
<ellipse cx="1218" cy="546" rx="5.0" ry="2.6" transform="rotate(78 1218 546)" fill="#a9cf94" opacity="0.6"/>
<ellipse cx="1989" cy="1499" rx="2.4" ry="3.5" transform="rotate(7 1989 1499)" fill="#a9cf94" opacity="0.6"/>
<ellipse cx="939" cy="1313" rx="6.0" ry="4.7" transform="rotate(80 939 1313)" fill="#a9cf94" opacity="0.6"/>
<ellipse cx="728" cy="674" rx="6.1" ry="4.8" transform="rotate(177 728 674)" fill="#a9cf94" opacity="0.6"/>
<ellipse cx="1655" cy="712" rx="2.7" ry="3.8" transform="rotate(38 1655 712)" fill="#a9cf94" opacity="0.6"/>
<ellipse cx="1005" cy="113" rx="2.0" ry="3.9" transform="rotate(22 1005 113)" fill="#a9cf94" opacity="0.6"/>
<ellipse cx="2640" cy="223" rx="8.1" ry="2.0" transform="rotate(3 2640 223)" fill="#a9cf94" opacity="0.6"/>
<ellipse cx="2144" cy="456" rx="7.1" ry="2.2" transform="rotate(9 2144 456)" fill="#a9cf94" opacity="0.6"/>
<ellipse cx="2254" cy="1167" rx="8.0" ry="4.1" transform="rotate(15 2254 1167)" fill="#a9cf94" opacity="0.6"/>
<ellipse cx="1962" cy="1160" rx="5.2" ry="4.8" transform="rotate(46 1962 1160)" fill="#a9cf94" opacity="0.6"/>
<ellipse cx="2636" cy="1172" rx="2.1" ry="1.6" transform="rotate(117 2636 1172)" fill="#a9cf94" opacity="0.6"/>
<ellipse cx="2341" cy="210" rx="4.2" ry="4.1" transform="rotate(30 2341 210)" fill="#a9cf94" opacity="0.6"/>
<ellipse cx="2429" cy="824" rx="2.4" ry="2.8" transform="rotate(103 2429 824)" fill="#a9cf94" opacity="0.6"/>
<ellipse cx="1581" cy="1111" rx="3.0" ry="4.3" transform="rotate(65 1581 1111)" fill="#a9cf94" opacity="0.6"/>
<ellipse cx="1995" cy="1040" rx="4.9" ry="2.9" transform="rotate(142 1995 1040)" fill="#a9cf94" opacity="0.6"/>
<ellipse cx="2597" cy="1274" rx="6.0" ry="2.5" transform="rotate(11 2597 1274)" fill="#a9cf94" opacity="0.6"/>
<ellipse cx="2656" cy="1151" rx="7.8" ry="2.7" transform="rotate(109 2656 1151)" fill="#a9cf94" opacity="0.6"/>
<ellipse cx="2663" cy="1344" rx="6.2" ry="2.6" transform="rotate(77 2663 1344)" fill="#a9cf94" opacity="0.6"/>
<ellipse cx="2483" cy="658" rx="6.8" ry="3.6" transform="rotate(161 2483 658)" fill="#a9cf94" opacity="0.6"/>
<ellipse cx="2321" cy="518" rx="2.0" ry="2.4" transform="rotate(76 2321 518)" fill="#a9cf94" opacity="0.6"/>
<ellipse cx="1878" cy="1321" rx="8.2" ry="1.6" transform="rotate(150 1878 1321)" fill="#a9cf94" opacity="0.6"/>
<ellipse cx="2330" cy="1399" rx="6.0" ry="2.5" transform="rotate(153 2330 1399)" fill="#a9cf94" opacity="0.6"/>
<ellipse cx="2321" cy="1123" rx="8.4" ry="2.7" transform="rotate(15 2321 1123)" fill="#a9cf94" opacity="0.6"/>
<ellipse cx="1812" cy="1293" rx="3.4" ry="4.1" transform="rotate(168 1812 1293)" fill="#a9cf94" opacity="0.6"/>
<ellipse cx="1170" cy="1006" rx="6.7" ry="3.1" transform="rotate(37 1170 1006)" fill="#a9cf94" opacity="0.6"/>
<ellipse cx="1212" cy="1223" rx="7.5" ry="3.1" transform="rotate(16 1212 1223)" fill="#a9cf94" opacity="0.6"/>
<ellipse cx="2320" cy="1255" rx="3.6" ry="3.5" transform="rotate(161 2320 1255)" fill="#a9cf94" opacity="0.6"/>
<ellipse cx="2477" cy="877" rx="5.3" ry="3.6" transform="rotate(34 2477 877)" fill="#a9cf94" opacity="0.6"/>
<ellipse cx="1086" cy="363" rx="6.9" ry="2.8" transform="rotate(102 1086 363)" fill="#a9cf94" opacity="0.6"/>
<ellipse cx="1508" cy="870" rx="3.0" ry="1.7" transform="rotate(179 1508 870)" fill="#a9cf94" opacity="0.6"/>
<ellipse cx="1451" cy="250" rx="6.4" ry="4.3" transform="rotate(28 1451 250)" fill="#a9cf94" opacity="0.6"/>
<ellipse cx="1899" cy="610" rx="5.6" ry="1.6" transform="rotate(6 1899 610)" fill="#a9cf94" opacity="0.6"/>
<ellipse cx="2689" cy="1397" rx="5.4" ry="3.5" transform="rotate(47 2689 1397)" fill="#a9cf94" opacity="0.6"/>
<ellipse cx="2265" cy="733" rx="8.6" ry="4.2" transform="rotate(147 2265 733)" fill="#a9cf94" opacity="0.6"/>
<ellipse cx="2635" cy="473" rx="2.3" ry="2.2" transform="rotate(33 2635 473)" fill="#a9cf94" opacity="0.6"/>
<ellipse cx="868" cy="167" rx="5.9" ry="4.5" transform="rotate(82 868 167)" fill="#a9cf94" opacity="0.6"/>
<ellipse cx="2602" cy="1463" rx="2.4" ry="3.6" transform="rotate(72 2602 1463)" fill="#a9cf94" opacity="0.6"/>
<ellipse cx="941" cy="1538" rx="3.8" ry="3.5" transform="rotate(115 941 1538)" fill="#a9cf94" opacity="0.6"/>
<ellipse cx="2620" cy="1101" rx="4.8" ry="3.1" transform="rotate(29 2620 1101)" fill="#a9cf94" opacity="0.6"/>
<ellipse cx="2639" cy="1586" rx="3.6" ry="1.6" transform="rotate(46 2639 1586)" fill="#a9cf94" opacity="0.6"/>
<ellipse cx="1407" cy="1452" rx="8.3" ry="4.4" transform="rotate(8 1407 1452)" fill="#a9cf94" opacity="0.6"/>
<ellipse cx="2279" cy="1161" rx="6.5" ry="4.9" transform="rotate(10 2279 1161)" fill="#a9cf94" opacity="0.6"/>
<ellipse cx="991" cy="1229" rx="8.6" ry="3.9" transform="rotate(54 991 1229)" fill="#a9cf94" opacity="0.6"/>
<ellipse cx="1888" cy="1234" rx="2.7" ry="2.6" transform="rotate(46 1888 1234)" fill="#a9cf94" opacity="0.6"/>
<ellipse cx="949" cy="816" rx="3.2" ry="2.3" transform="rotate(26 949 816)" fill="#a9cf94" opacity="0.6"/>
<ellipse cx="2061" cy="109" rx="7.0" ry="2.2" transform="rotate(6 2061 109)" fill="#a9cf94" opacity="0.6"/>
<ellipse cx="2563" cy="423" rx="8.5" ry="4.5" transform="rotate(160 2563 423)" fill="#a9cf94" opacity="0.6"/>
<ellipse cx="981" cy="765" rx="2.7" ry="4.8" transform="rotate(152 981 765)" fill="#a9cf94" opacity="0.6"/>
<ellipse cx="1962" cy="773" rx="4.4" ry="4.4" transform="rotate(86 1962 773)" fill="#a9cf94" opacity="0.6"/>
<ellipse cx="1961" cy="305" rx="3.6" ry="1.7" transform="rotate(128 1961 305)" fill="#a9cf94" opacity="0.6"/>
<ellipse cx="1811" cy="308" rx="8.1" ry="2.4" transform="rotate(74 1811 308)" fill="#a9cf94" opacity="0.6"/>
<ellipse cx="1013" cy="499" rx="7.9" ry="2.7" transform="rotate(30 1013 499)" fill="#a9cf94" opacity="0.6"/>
<ellipse cx="1686" cy="570" rx="8.3" ry="1.9" transform="rotate(176 1686 570)" fill="#a9cf94" opacity="0.6"/>
<ellipse cx="814" cy="1441" rx="6.7" ry="2.2" transform="rotate(86 814 1441)" fill="#a9cf94" opacity="0.6"/>
<ellipse cx="1275" cy="479" rx="3.4" ry="2.8" transform="rotate(178 1275 479)" fill="#a9cf94" opacity="0.6"/>
<ellipse cx="2704" cy="1486" rx="2.7" ry="2.5" transform="rotate(161 2704 1486)" fill="#a9cf94" opacity="0.6"/>
<ellipse cx="815" cy="1186" rx="4.1" ry="4.9" transform="rotate(3 815 1186)" fill="#a9cf94" opacity="0.6"/>
<ellipse cx="2321" cy="604" rx="3.0" ry="1.5" transform="rotate(150 2321 604)" fill="#a9cf94" opacity="0.6"/>
<ellipse cx="1757" cy="370" rx="5.0" ry="4.7" transform="rotate(39 1757 370)" fill="#a9cf94" opacity="0.6"/>
<ellipse cx="1847" cy="298" rx="3.3" ry="4.2" transform="rotate(128 1847 298)" fill="#a9cf94" opacity="0.6"/>
<ellipse cx="1095" cy="210" rx="2.6" ry="3.6" transform="rotate(89 1095 210)" fill="#a9cf94" opacity="0.6"/>
<ellipse cx="1250" cy="401" rx="6.3" ry="4.0" transform="rotate(146 1250 401)" fill="#a9cf94" opacity="0.6"/>
<ellipse cx="1871" cy="395" rx="2.5" ry="4.1" transform="rotate(73 1871 395)" fill="#a9cf94" opacity="0.6"/>
<ellipse cx="2149" cy="174" rx="7.7" ry="2.7" transform="rotate(152 2149 174)" fill="#a9cf94" opacity="0.6"/>
<ellipse cx="2436" cy="834" rx="2.1" ry="4.7" transform="rotate(86 2436 834)" fill="#a9cf94" opacity="0.6"/>
<ellipse cx="2451" cy="492" rx="3.3" ry="4.4" transform="rotate(66 2451 492)" fill="#a9cf94" opacity="0.6"/>
<ellipse cx="1028" cy="650" rx="6.2" ry="1.5" transform="rotate(94 1028 650)" fill="#a9cf94" opacity="0.6"/>
<ellipse cx="1595" cy="868" rx="2.8" ry="4.0" transform="rotate(147 1595 868)" fill="#a9cf94" opacity="0.6"/>
<ellipse cx="2438" cy="574" rx="7.0" ry="2.8" transform="rotate(135 2438 574)" fill="#a9cf94" opacity="0.6"/>
<ellipse cx="823" cy="1407" rx="8.7" ry="3.2" transform="rotate(92 823 1407)" fill="#a9cf94" opacity="0.6"/>
<ellipse cx="1765" cy="901" rx="2.1" ry="4.9" transform="rotate(40 1765 901)" fill="#a9cf94" opacity="0.6"/>
<ellipse cx="1066" cy="245" rx="3.8" ry="4.4" transform="rotate(5 1066 245)" fill="#a9cf94" opacity="0.6"/>
<ellipse cx="894" cy="1145" rx="3.4" ry="1.6" transform="rotate(108 894 1145)" fill="#a9cf94" opacity="0.6"/>
<ellipse cx="1858" cy="879" rx="6.9" ry="1.9" transform="rotate(157 1858 879)" fill="#a9cf94" opacity="0.6"/>
<ellipse cx="2140" cy="158" rx="2.9" ry="3.2" transform="rotate(90 2140 158)" fill="#a9cf94" opacity="0.6"/>
<ellipse cx="1261" cy="274" rx="4.8" ry="2.0" transform="rotate(107 1261 274)" fill="#a9cf94" opacity="0.6"/>
<ellipse cx="2429" cy="312" rx="6.0" ry="4.1" transform="rotate(30 2429 312)" fill="#a9cf94" opacity="0.6"/>
<ellipse cx="2359" cy="1505" rx="4.7" ry="3.0" transform="rotate(151 2359 1505)" fill="#a9cf94" opacity="0.6"/>
<ellipse cx="1755" cy="687" rx="8.6" ry="4.2" transform="rotate(61 1755 687)" fill="#a9cf94" opacity="0.6"/>
<ellipse cx="1183" cy="596" rx="5.0" ry="4.9" transform="rotate(145 1183 596)" fill="#a9cf94" opacity="0.6"/>
<ellipse cx="2533" cy="1320" rx="7.9" ry="1.7" transform="rotate(93 2533 1320)" fill="#a9cf94" opacity="0.6"/>
<ellipse cx="2623" cy="1500" rx="3.7" ry="3.0" transform="rotate(114 2623 1500)" fill="#a9cf94" opacity="0.6"/>
<ellipse cx="1432" cy="891" rx="2.5" ry="3.0" transform="rotate(91 1432 891)" fill="#a9cf94" opacity="0.6"/>
<ellipse cx="742" cy="300" rx="8.8" ry="4.2" transform="rotate(169 742 300)" fill="#a9cf94" opacity="0.6"/>
<ellipse cx="1971" cy="1311" rx="8.2" ry="4.6" transform="rotate(6 1971 1311)" fill="#a9cf94" opacity="0.6"/>
<ellipse cx="1988" cy="491" rx="6.7" ry="2.5" transform="rotate(98 1988 491)" fill="#a9cf94" opacity="0.6"/>
<ellipse cx="2556" cy="1027" rx="3.8" ry="3.3" transform="rotate(78 2556 1027)" fill="#a9cf94" opacity="0.6"/>
<ellipse cx="2609" cy="524" rx="4.1" ry="3.8" transform="rotate(22 2609 524)" fill="#a9cf94" opacity="0.6"/>
<ellipse cx="1893" cy="1533" rx="5.6" ry="2.4" transform="rotate(84 1893 1533)" fill="#a9cf94" opacity="0.6"/>
<ellipse cx="1772" cy="314" rx="2.9" ry="2.0" transform="rotate(53 1772 314)" fill="#a9cf94" opacity="0.6"/>
<ellipse cx="1516" cy="525" rx="3.7" ry="1.8" transform="rotate(98 1516 525)" fill="#a9cf94" opacity="0.6"/>
<ellipse cx="2386" cy="1010" rx="6.0" ry="3.8" transform="rotate(36 2386 1010)" fill="#a9cf94" opacity="0.6"/>
<ellipse cx="2126" cy="785" rx="5.8" ry="3.6" transform="rotate(84 2126 785)" fill="#a9cf94" opacity="0.6"/>
<ellipse cx="1323" cy="456" rx="3.6" ry="3.3" transform="rotate(69 1323 456)" fill="#a9cf94" opacity="0.6"/>
<ellipse cx="1876" cy="108" rx="4.5" ry="4.5" transform="rotate(43 1876 108)" fill="#a9cf94" opacity="0.6"/>
<ellipse cx="1818" cy="832" rx="4.0" ry="5.0" transform="rotate(53 1818 832)" fill="#a9cf94" opacity="0.6"/>
<ellipse cx="2250" cy="329" rx="2.5" ry="4.5" transform="rotate(79 2250 329)" fill="#a9cf94" opacity="0.6"/>
<ellipse cx="825" cy="675" rx="5.1" ry="4.1" transform="rotate(20 825 675)" fill="#a9cf94" opacity="0.6"/>
<ellipse cx="1152" cy="1538" rx="7.2" ry="2.0" transform="rotate(61 1152 1538)" fill="#a9cf94" opacity="0.6"/>
<ellipse cx="1408" cy="1109" rx="6.3" ry="4.5" transform="rotate(148 1408 1109)" fill="#a9cf94" opacity="0.6"/>
<ellipse cx="1740" cy="1205" rx="7.2" ry="4.2" transform="rotate(86 1740 1205)" fill="#a9cf94" opacity="0.6"/>
<ellipse cx="2276" cy="1159" rx="8.4" ry="1.9" transform="rotate(157 2276 1159)" fill="#a9cf94" opacity="0.6"/>
<ellipse cx="709" cy="1245" rx="6.1" ry="3.2" transform="rotate(173 709 1245)" fill="#a9cf94" opacity="0.6"/>
<ellipse cx="1848" cy="721" rx="7.5" ry="4.6" transform="rotate(109 1848 721)" fill="#a9cf94" opacity="0.6"/>
<ellipse cx="1462" cy="772" rx="5.2" ry="4.0" transform="rotate(53 1462 772)" fill="#a9cf94" opacity="0.6"/>
<ellipse cx="1484" cy="928" rx="4.7" ry="2.6" transform="rotate(142 1484 928)" fill="#a9cf94" opacity="0.6"/>
<ellipse cx="2406" cy="844" rx="5.1" ry="2.1" transform="rotate(55 2406 844)" fill="#a9cf94" opacity="0.6"/>
<ellipse cx="991" cy="958" rx="6.1" ry="1.8" transform="rotate(166 991 958)" fill="#a9cf94" opacity="0.6"/>
<ellipse cx="1350" cy="1363" rx="7.9" ry="4.9" transform="rotate(37 1350 1363)" fill="#a9cf94" opacity="0.6"/>
<ellipse cx="1556" cy="1464" rx="2.1" ry="1.7" transform="rotate(102 1556 1464)" fill="#a9cf94" opacity="0.6"/>
<ellipse cx="1699" cy="1479" rx="7.4" ry="3.4" transform="rotate(180 1699 1479)" fill="#a9cf94" opacity="0.6"/>
<ellipse cx="1739" cy="871" rx="6.8" ry="2.9" transform="rotate(64 1739 871)" fill="#a9cf94" opacity="0.6"/>
<ellipse cx="1894" cy="620" rx="8.6" ry="3.9" transform="rotate(95 1894 620)" fill="#a9cf94" opacity="0.6"/>
<ellipse cx="899" cy="655" rx="4.8" ry="3.5" transform="rotate(103 899 655)" fill="#a9cf94" opacity="0.6"/>
<ellipse cx="2467" cy="1545" rx="5.4" ry="3.0" transform="rotate(112 2467 1545)" fill="#a9cf94" opacity="0.6"/>
<ellipse cx="2700" cy="608" rx="5.7" ry="4.4" transform="rotate(31 2700 608)" fill="#a9cf94" opacity="0.6"/>
<ellipse cx="1339" cy="1566" rx="7.8" ry="3.3" transform="rotate(20 1339 1566)" fill="#a9cf94" opacity="0.6"/>
<ellipse cx="2496" cy="1131" rx="7.7" ry="5.0" transform="rotate(160 2496 1131)" fill="#a9cf94" opacity="0.6"/>
<ellipse cx="1545" cy="326" rx="4.0" ry="3.3" transform="rotate(91 1545 326)" fill="#a9cf94" opacity="0.6"/>
<ellipse cx="1078" cy="365" rx="6.4" ry="3.6" transform="rotate(64 1078 365)" fill="#a9cf94" opacity="0.6"/>
<ellipse cx="2695" cy="1050" rx="2.3" ry="2.9" transform="rotate(142 2695 1050)" fill="#a9cf94" opacity="0.6"/>
<ellipse cx="1316" cy="1132" rx="2.0" ry="2.6" transform="rotate(152 1316 1132)" fill="#a9cf94" opacity="0.6"/>
<ellipse cx="1877" cy="1098" rx="3.4" ry="3.2" transform="rotate(100 1877 1098)" fill="#a9cf94" opacity="0.6"/>
<ellipse cx="1234" cy="1066" rx="5.7" ry="5.0" transform="rotate(103 1234 1066)" fill="#a9cf94" opacity="0.6"/>
<ellipse cx="1525" cy="273" rx="3.1" ry="4.2" transform="rotate(19 1525 273)" fill="#a9cf94" opacity="0.6"/>
<ellipse cx="901" cy="347" rx="5.7" ry="4.4" transform="rotate(110 901 347)" fill="#a9cf94" opacity="0.6"/>
<ellipse cx="2320" cy="184" rx="2.1" ry="4.2" transform="rotate(58 2320 184)" fill="#a9cf94" opacity="0.6"/>
<ellipse cx="2137" cy="624" rx="3.2" ry="2.4" transform="rotate(18 2137 624)" fill="#a9cf94" opacity="0.6"/>
<ellipse cx="2515" cy="969" rx="4.4" ry="3.1" transform="rotate(69 2515 969)" fill="#a9cf94" opacity="0.6"/>
<ellipse cx="810" cy="1434" rx="6.1" ry="4.9" transform="rotate(79 810 1434)" fill="#a9cf94" opacity="0.6"/>
<ellipse cx="1945" cy="466" rx="2.3" ry="4.8" transform="rotate(154 1945 466)" fill="#a9cf94" opacity="0.6"/>
<ellipse cx="1332" cy="1446" rx="7.7" ry="2.6" transform="rotate(108 1332 1446)" fill="#a9cf94" opacity="0.6"/>
<ellipse cx="2628" cy="838" rx="8.6" ry="2.4" transform="rotate(70 2628 838)" fill="#a9cf94" opacity="0.6"/>
<ellipse cx="2143" cy="424" rx="4.2" ry="4.6" transform="rotate(87 2143 424)" fill="#a9cf94" opacity="0.6"/>
<ellipse cx="2292" cy="457" rx="3.2" ry="2.8" transform="rotate(34 2292 457)" fill="#a9cf94" opacity="0.6"/>
<ellipse cx="2651" cy="529" rx="5.9" ry="1.9" transform="rotate(96 2651 529)" fill="#a9cf94" opacity="0.6"/>
<ellipse cx="1474" cy="698" rx="2.5" ry="1.9" transform="rotate(149 1474 698)" fill="#a9cf94" opacity="0.6"/>
<ellipse cx="1405" cy="460" rx="3.3" ry="2.5" transform="rotate(43 1405 460)" fill="#a9cf94" opacity="0.6"/>
<ellipse cx="770" cy="1092" rx="4.4" ry="2.0" transform="rotate(127 770 1092)" fill="#a9cf94" opacity="0.6"/>
<ellipse cx="886" cy="497" rx="7.8" ry="1.9" transform="rotate(80 886 497)" fill="#a9cf94" opacity="0.6"/>
<ellipse cx="2379" cy="1305" rx="3.1" ry="2.7" transform="rotate(130 2379 1305)" fill="#a9cf94" opacity="0.6"/>
<ellipse cx="1457" cy="1536" rx="3.5" ry="4.8" transform="rotate(91 1457 1536)" fill="#a9cf94" opacity="0.6"/>
<ellipse cx="1156" cy="773" rx="2.9" ry="4.0" transform="rotate(47 1156 773)" fill="#a9cf94" opacity="0.6"/>
<ellipse cx="2506" cy="977" rx="4.6" ry="2.4" transform="rotate(109 2506 977)" fill="#a9cf94" opacity="0.6"/>
<ellipse cx="1127" cy="1406" rx="2.9" ry="3.3" transform="rotate(98 1127 1406)" fill="#a9cf94" opacity="0.6"/>
<ellipse cx="1243" cy="1255" rx="4.7" ry="3.8" transform="rotate(102 1243 1255)" fill="#a9cf94" opacity="0.6"/>
<ellipse cx="1324" cy="678" rx="2.6" ry="2.1" transform="rotate(153 1324 678)" fill="#a9cf94" opacity="0.6"/>
<ellipse cx="1345" cy="1090" rx="2.8" ry="3.5" transform="rotate(65 1345 1090)" fill="#a9cf94" opacity="0.6"/>
<ellipse cx="1705" cy="538" rx="2.5" ry="2.6" transform="rotate(41 1705 538)" fill="#a9cf94" opacity="0.6"/>
<ellipse cx="953" cy="1171" rx="4.0" ry="2.9" transform="rotate(164 953 1171)" fill="#a9cf94" opacity="0.6"/>
<ellipse cx="2256" cy="1422" rx="8.0" ry="2.0" transform="rotate(50 2256 1422)" fill="#a9cf94" opacity="0.6"/>
<ellipse cx="759" cy="1116" rx="6.6" ry="2.7" transform="rotate(74 759 1116)" fill="#a9cf94" opacity="0.6"/>
<ellipse cx="2023" cy="1145" rx="3.7" ry="4.5" transform="rotate(63 2023 1145)" fill="#a9cf94" opacity="0.6"/>
<ellipse cx="1963" cy="364" rx="2.8" ry="4.7" transform="rotate(132 1963 364)" fill="#a9cf94" opacity="0.6"/>
<ellipse cx="2131" cy="151" rx="2.3" ry="2.1" transform="rotate(36 2131 151)" fill="#a9cf94" opacity="0.6"/>
<ellipse cx="1309" cy="665" rx="2.3" ry="2.6" transform="rotate(115 1309 665)" fill="#a9cf94" opacity="0.6"/>
<ellipse cx="1061" cy="1357" rx="6.0" ry="4.0" transform="rotate(46 1061 1357)" fill="#a9cf94" opacity="0.6"/>
<ellipse cx="1573" cy="1123" rx="4.4" ry="1.5" transform="rotate(150 1573 1123)" fill="#a9cf94" opacity="0.6"/>
<ellipse cx="2259" cy="522" rx="2.3" ry="4.5" transform="rotate(109 2259 522)" fill="#a9cf94" opacity="0.6"/>
<ellipse cx="795" cy="459" rx="2.8" ry="4.3" transform="rotate(38 795 459)" fill="#a9cf94" opacity="0.6"/>
<ellipse cx="2536" cy="1221" rx="2.6" ry="3.9" transform="rotate(71 2536 1221)" fill="#a9cf94" opacity="0.6"/>
<ellipse cx="2201" cy="1341" rx="4.0" ry="1.8" transform="rotate(170 2201 1341)" fill="#a9cf94" opacity="0.6"/>
<ellipse cx="1551" cy="1494" rx="6.8" ry="4.1" transform="rotate(149 1551 1494)" fill="#a9cf94" opacity="0.6"/>
<ellipse cx="1961" cy="773" rx="2.4" ry="3.9" transform="rotate(77 1961 773)" fill="#a9cf94" opacity="0.6"/>
<ellipse cx="1728" cy="1491" rx="2.9" ry="4.2" transform="rotate(8 1728 1491)" fill="#a9cf94" opacity="0.6"/>
<ellipse cx="2111" cy="1306" rx="3.8" ry="3.4" transform="rotate(174 2111 1306)" fill="#a9cf94" opacity="0.6"/>
<ellipse cx="1980" cy="911" rx="3.7" ry="1.7" transform="rotate(64 1980 911)" fill="#a9cf94" opacity="0.6"/>
<ellipse cx="1527" cy="394" rx="4.2" ry="2.0" transform="rotate(127 1527 394)" fill="#a9cf94" opacity="0.6"/>
<ellipse cx="2046" cy="449" rx="3.7" ry="3.3" transform="rotate(80 2046 449)" fill="#a9cf94" opacity="0.6"/>
<ellipse cx="2579" cy="620" rx="4.1" ry="4.6" transform="rotate(26 2579 620)" fill="#a9cf94" opacity="0.6"/>
<ellipse cx="1831" cy="593" rx="7.7" ry="3.4" transform="rotate(137 1831 593)" fill="#a9cf94" opacity="0.6"/>
<ellipse cx="1040" cy="1096" rx="6.2" ry="3.1" transform="rotate(138 1040 1096)" fill="#a9cf94" opacity="0.6"/>
<ellipse cx="2369" cy="263" rx="4.0" ry="2.8" transform="rotate(37 2369 263)" fill="#a9cf94" opacity="0.6"/>
<ellipse cx="821" cy="514" rx="3.4" ry="4.0" transform="rotate(81 821 514)" fill="#a9cf94" opacity="0.6"/>
<ellipse cx="927" cy="580" rx="5.3" ry="2.8" transform="rotate(30 927 580)" fill="#a9cf94" opacity="0.6"/>
<ellipse cx="844" cy="106" rx="8.9" ry="4.1" transform="rotate(15 844 106)" fill="#a9cf94" opacity="0.6"/>
<ellipse cx="2140" cy="1569" rx="5.9" ry="1.9" transform="rotate(88 2140 1569)" fill="#a9cf94" opacity="0.6"/>
<ellipse cx="1572" cy="376" rx="5.8" ry="1.5" transform="rotate(166 1572 376)" fill="#a9cf94" opacity="0.6"/>
<ellipse cx="1994" cy="1037" rx="8.5" ry="3.8" transform="rotate(45 1994 1037)" fill="#a9cf94" opacity="0.6"/>
<ellipse cx="1194" cy="299" rx="2.2" ry="4.2" transform="rotate(151 1194 299)" fill="#a9cf94" opacity="0.6"/>
<ellipse cx="1295" cy="370" rx="6.5" ry="4.5" transform="rotate(167 1295 370)" fill="#a9cf94" opacity="0.6"/>
<ellipse cx="1038" cy="1274" rx="7.8" ry="4.1" transform="rotate(59 1038 1274)" fill="#a9cf94" opacity="0.6"/>
<ellipse cx="1071" cy="1335" rx="4.2" ry="2.8" transform="rotate(99 1071 1335)" fill="#a9cf94" opacity="0.6"/>
<ellipse cx="1442" cy="1345" rx="3.7" ry="1.6" transform="rotate(102 1442 1345)" fill="#a9cf94" opacity="0.6"/>
<ellipse cx="1961" cy="1327" rx="6.9" ry="4.7" transform="rotate(170 1961 1327)" fill="#a9cf94" opacity="0.6"/>
<ellipse cx="1693" cy="844" rx="3.1" ry="2.5" transform="rotate(105 1693 844)" fill="#a9cf94" opacity="0.6"/>
<ellipse cx="861" cy="1128" rx="3.1" ry="3.1" transform="rotate(175 861 1128)" fill="#a9cf94" opacity="0.6"/>
<ellipse cx="880" cy="150" rx="5.1" ry="2.2" transform="rotate(130 880 150)" fill="#a9cf94" opacity="0.6"/>
<ellipse cx="706" cy="1359" rx="8.0" ry="4.3" transform="rotate(77 706 1359)" fill="#a9cf94" opacity="0.6"/>
<ellipse cx="1269" cy="1088" rx="5.6" ry="3.0" transform="rotate(61 1269 1088)" fill="#a9cf94" opacity="0.6"/>
<ellipse cx="1581" cy="1095" rx="7.8" ry="4.7" transform="rotate(30 1581 1095)" fill="#a9cf94" opacity="0.6"/>
<ellipse cx="1294" cy="759" rx="5.9" ry="2.7" transform="rotate(35 1294 759)" fill="#a9cf94" opacity="0.6"/>
<ellipse cx="871" cy="578" rx="5.2" ry="4.9" transform="rotate(164 871 578)" fill="#a9cf94" opacity="0.6"/>
<ellipse cx="2438" cy="1560" rx="8.7" ry="3.7" transform="rotate(146 2438 1560)" fill="#a9cf94" opacity="0.6"/>
<ellipse cx="820" cy="1111" rx="6.3" ry="2.5" transform="rotate(103 820 1111)" fill="#a9cf94" opacity="0.6"/>
<ellipse cx="2613" cy="815" rx="6.5" ry="2.5" transform="rotate(62 2613 815)" fill="#a9cf94" opacity="0.6"/>
<ellipse cx="2477" cy="132" rx="3.3" ry="3.9" transform="rotate(81 2477 132)" fill="#a9cf94" opacity="0.6"/>
<ellipse cx="871" cy="1087" rx="4.6" ry="3.5" transform="rotate(75 871 1087)" fill="#a9cf94" opacity="0.6"/>
<ellipse cx="1764" cy="942" rx="4.8" ry="1.9" transform="rotate(32 1764 942)" fill="#a9cf94" opacity="0.6"/>
<ellipse cx="2487" cy="917" rx="2.8" ry="4.5" transform="rotate(46 2487 917)" fill="#a9cf94" opacity="0.6"/>
<ellipse cx="891" cy="891" rx="3.8" ry="3.2" transform="rotate(100 891 891)" fill="#a9cf94" opacity="0.6"/>
<ellipse cx="1155" cy="954" rx="2.8" ry="3.3" transform="rotate(106 1155 954)" fill="#a9cf94" opacity="0.6"/>
<ellipse cx="861" cy="706" rx="2.5" ry="3.0" transform="rotate(155 861 706)" fill="#a9cf94" opacity="0.6"/>
<ellipse cx="1806" cy="1168" rx="7.3" ry="1.9" transform="rotate(178 1806 1168)" fill="#a9cf94" opacity="0.6"/>
<ellipse cx="2149" cy="244" rx="7.8" ry="2.9" transform="rotate(31 2149 244)" fill="#a9cf94" opacity="0.6"/>
<ellipse cx="2628" cy="940" rx="7.4" ry="2.0" transform="rotate(140 2628 940)" fill="#a9cf94" opacity="0.6"/>
<ellipse cx="816" cy="447" rx="4.6" ry="1.6" transform="rotate(107 816 447)" fill="#a9cf94" opacity="0.6"/>
<ellipse cx="1128" cy="543" rx="7.0" ry="3.0" transform="rotate(160 1128 543)" fill="#a9cf94" opacity="0.6"/>
<ellipse cx="1947" cy="1406" rx="5.9" ry="4.7" transform="rotate(157 1947 1406)" fill="#a9cf94" opacity="0.6"/>
<ellipse cx="1037" cy="1215" rx="4.4" ry="4.2" transform="rotate(122 1037 1215)" fill="#a9cf94" opacity="0.6"/>
<ellipse cx="2358" cy="275" rx="4.6" ry="4.1" transform="rotate(171 2358 275)" fill="#a9cf94" opacity="0.6"/>
<ellipse cx="2149" cy="156" rx="6.2" ry="1.8" transform="rotate(99 2149 156)" fill="#a9cf94" opacity="0.6"/>
<ellipse cx="2312" cy="260" rx="8.5" ry="3.9" transform="rotate(46 2312 260)" fill="#a9cf94" opacity="0.6"/>
<ellipse cx="1088" cy="764" rx="7.9" ry="3.5" transform="rotate(20 1088 764)" fill="#a9cf94" opacity="0.6"/>
<ellipse cx="742" cy="257" rx="7.6" ry="2.1" transform="rotate(100 742 257)" fill="#a9cf94" opacity="0.6"/>
<ellipse cx="1282" cy="1127" rx="4.7" ry="2.0" transform="rotate(158 1282 1127)" fill="#a9cf94" opacity="0.6"/>
<ellipse cx="1781" cy="1130" rx="7.7" ry="4.8" transform="rotate(2 1781 1130)" fill="#a9cf94" opacity="0.6"/>
<ellipse cx="1387" cy="318" rx="5.5" ry="4.6" transform="rotate(144 1387 318)" fill="#a9cf94" opacity="0.6"/>
<ellipse cx="771" cy="365" rx="7.7" ry="3.9" transform="rotate(71 771 365)" fill="#a9cf94" opacity="0.6"/>
<ellipse cx="1655" cy="329" rx="7.9" ry="2.9" transform="rotate(157 1655 329)" fill="#a9cf94" opacity="0.6"/>
<ellipse cx="1927" cy="205" rx="4.3" ry="2.3" transform="rotate(161 1927 205)" fill="#a9cf94" opacity="0.6"/>
<ellipse cx="1883" cy="156" rx="3.2" ry="2.8" transform="rotate(84 1883 156)" fill="#a9cf94" opacity="0.6"/>
<ellipse cx="1859" cy="675" rx="4.5" ry="1.5" transform="rotate(104 1859 675)" fill="#a9cf94" opacity="0.6"/>
<ellipse cx="1370" cy="121" rx="5.2" ry="5.0" transform="rotate(8 1370 121)" fill="#a9cf94" opacity="0.6"/>
<ellipse cx="993" cy="1102" rx="3.9" ry="2.5" transform="rotate(90 993 1102)" fill="#a9cf94" opacity="0.6"/>
<ellipse cx="1226" cy="949" rx="5.7" ry="4.8" transform="rotate(179 1226 949)" fill="#a9cf94" opacity="0.6"/>
<ellipse cx="768" cy="936" rx="7.4" ry="4.6" transform="rotate(139 768 936)" fill="#a9cf94" opacity="0.6"/>
<ellipse cx="1971" cy="1048" rx="4.5" ry="2.5" transform="rotate(143 1971 1048)" fill="#a9cf94" opacity="0.6"/>
<ellipse cx="2453" cy="1506" rx="6.8" ry="2.6" transform="rotate(137 2453 1506)" fill="#a9cf94" opacity="0.6"/>
<ellipse cx="2185" cy="858" rx="6.4" ry="2.7" transform="rotate(99 2185 858)" fill="#a9cf94" opacity="0.6"/>
<ellipse cx="1515" cy="181" rx="4.4" ry="2.6" transform="rotate(178 1515 181)" fill="#a9cf94" opacity="0.6"/>
<ellipse cx="1667" cy="644" rx="3.7" ry="2.3" transform="rotate(63 1667 644)" fill="#a9cf94" opacity="0.6"/>
<ellipse cx="972" cy="101" rx="8.1" ry="3.1" transform="rotate(80 972 101)" fill="#a9cf94" opacity="0.6"/>
<ellipse cx="1842" cy="546" rx="3.2" ry="1.7" transform="rotate(54 1842 546)" fill="#a9cf94" opacity="0.6"/>
<ellipse cx="1319" cy="1187" rx="5.9" ry="4.8" transform="rotate(61 1319 1187)" fill="#a9cf94" opacity="0.6"/>
<ellipse cx="2550" cy="970" rx="2.6" ry="2.1" transform="rotate(104 2550 970)" fill="#a9cf94" opacity="0.6"/>
<ellipse cx="2683" cy="629" rx="7.4" ry="3.0" transform="rotate(156 2683 629)" fill="#a9cf94" opacity="0.6"/>
<ellipse cx="836" cy="821" rx="8.3" ry="2.5" transform="rotate(46 836 821)" fill="#a9cf94" opacity="0.6"/>
<ellipse cx="746" cy="338" rx="3.9" ry="4.0" transform="rotate(39 746 338)" fill="#a9cf94" opacity="0.6"/>
<ellipse cx="1502" cy="392" rx="6.2" ry="4.5" transform="rotate(117 1502 392)" fill="#a9cf94" opacity="0.6"/>
<ellipse cx="1095" cy="1197" rx="8.7" ry="3.6" transform="rotate(14 1095 1197)" fill="#a9cf94" opacity="0.6"/>
<ellipse cx="2325" cy="1411" rx="4.4" ry="2.0" transform="rotate(34 2325 1411)" fill="#a9cf94" opacity="0.6"/>
<ellipse cx="1778" cy="1411" rx="6.5" ry="4.7" transform="rotate(38 1778 1411)" fill="#a9cf94" opacity="0.6"/>
<ellipse cx="1356" cy="1221" rx="6.5" ry="2.9" transform="rotate(122 1356 1221)" fill="#a9cf94" opacity="0.6"/>
<ellipse cx="1378" cy="177" rx="4.9" ry="1.7" transform="rotate(113 1378 177)" fill="#a9cf94" opacity="0.6"/>
<ellipse cx="1372" cy="836" rx="6.2" ry="2.4" transform="rotate(83 1372 836)" fill="#a9cf94" opacity="0.6"/>
<ellipse cx="727" cy="1486" rx="5.9" ry="5.0" transform="rotate(10 727 1486)" fill="#a9cf94" opacity="0.6"/>
<ellipse cx="1933" cy="1183" rx="4.3" ry="1.8" transform="rotate(28 1933 1183)" fill="#a9cf94" opacity="0.6"/>
<ellipse cx="986" cy="1248" rx="2.6" ry="4.3" transform="rotate(76 986 1248)" fill="#a9cf94" opacity="0.6"/>
<ellipse cx="1782" cy="978" rx="5.9" ry="3.8" transform="rotate(108 1782 978)" fill="#a9cf94" opacity="0.6"/>
<ellipse cx="1364" cy="1208" rx="3.8" ry="4.0" transform="rotate(137 1364 1208)" fill="#a9cf94" opacity="0.6"/>
<ellipse cx="2258" cy="557" rx="7.4" ry="4.9" transform="rotate(82 2258 557)" fill="#a9cf94" opacity="0.6"/>
<ellipse cx="1259" cy="880" rx="8.6" ry="2.0" transform="rotate(2 1259 880)" fill="#a9cf94" opacity="0.6"/>
<ellipse cx="1655" cy="1079" rx="7.4" ry="2.8" transform="rotate(178 1655 1079)" fill="#a9cf94" opacity="0.6"/>
<ellipse cx="1158" cy="1232" rx="2.6" ry="1.6" transform="rotate(24 1158 1232)" fill="#a9cf94" opacity="0.6"/>
<ellipse cx="821" cy="847" rx="5.9" ry="2.1" transform="rotate(169 821 847)" fill="#a9cf94" opacity="0.6"/>
<ellipse cx="1434" cy="315" rx="3.2" ry="4.1" transform="rotate(166 1434 315)" fill="#a9cf94" opacity="0.6"/>
<ellipse cx="1025" cy="134" rx="7.4" ry="2.3" transform="rotate(177 1025 134)" fill="#a9cf94" opacity="0.6"/>
<ellipse cx="1702" cy="1050" rx="4.4" ry="4.3" transform="rotate(83 1702 1050)" fill="#a9cf94" opacity="0.6"/>
<ellipse cx="1350" cy="1453" rx="2.8" ry="4.1" transform="rotate(12 1350 1453)" fill="#a9cf94" opacity="0.6"/>
<ellipse cx="1996" cy="696" rx="8.0" ry="1.7" transform="rotate(102 1996 696)" fill="#a9cf94" opacity="0.6"/>
<ellipse cx="1523" cy="1477" rx="8.6" ry="3.7" transform="rotate(40 1523 1477)" fill="#a9cf94" opacity="0.6"/>
<ellipse cx="1206" cy="486" rx="5.0" ry="2.3" transform="rotate(37 1206 486)" fill="#a9cf94" opacity="0.6"/>
<ellipse cx="2224" cy="1060" rx="4.1" ry="5.0" transform="rotate(39 2224 1060)" fill="#a9cf94" opacity="0.6"/>
<ellipse cx="1844" cy="326" rx="8.0" ry="4.5" transform="rotate(48 1844 326)" fill="#a9cf94" opacity="0.6"/>
<ellipse cx="2209" cy="1332" rx="4.0" ry="2.7" transform="rotate(87 2209 1332)" fill="#a9cf94" opacity="0.6"/>
<ellipse cx="2489" cy="334" rx="6.8" ry="3.6" transform="rotate(82 2489 334)" fill="#a9cf94" opacity="0.6"/>
<ellipse cx="1863" cy="1422" rx="3.5" ry="4.6" transform="rotate(65 1863 1422)" fill="#a9cf94" opacity="0.6"/>
<ellipse cx="2266" cy="1393" rx="3.3" ry="4.5" transform="rotate(179 2266 1393)" fill="#a9cf94" opacity="0.6"/>
<ellipse cx="1298" cy="127" rx="2.8" ry="4.9" transform="rotate(2 1298 127)" fill="#a9cf94" opacity="0.6"/>
<ellipse cx="2531" cy="318" rx="7.2" ry="1.8" transform="rotate(30 2531 318)" fill="#a9cf94" opacity="0.6"/>
<ellipse cx="2071" cy="226" rx="4.4" ry="4.7" transform="rotate(129 2071 226)" fill="#a9cf94" opacity="0.6"/>
<ellipse cx="2471" cy="1568" rx="2.2" ry="2.3" transform="rotate(143 2471 1568)" fill="#a9cf94" opacity="0.6"/>
<ellipse cx="2084" cy="147" rx="5.5" ry="2.3" transform="rotate(77 2084 147)" fill="#a9cf94" opacity="0.6"/>
<ellipse cx="911" cy="120" rx="8.9" ry="2.6" transform="rotate(158 911 120)" fill="#a9cf94" opacity="0.6"/>
<ellipse cx="942" cy="825" rx="3.0" ry="3.0" transform="rotate(32 942 825)" fill="#a9cf94" opacity="0.6"/>
<ellipse cx="2076" cy="313" rx="7.2" ry="3.3" transform="rotate(20 2076 313)" fill="#a9cf94" opacity="0.6"/>
<ellipse cx="1410" cy="839" rx="8.4" ry="2.7" transform="rotate(39 1410 839)" fill="#a9cf94" opacity="0.6"/>
<ellipse cx="2643" cy="1423" rx="7.1" ry="2.5" transform="rotate(32 2643 1423)" fill="#a9cf94" opacity="0.6"/>
<ellipse cx="1231" cy="194" rx="2.3" ry="3.3" transform="rotate(73 1231 194)" fill="#a9cf94" opacity="0.6"/>
<ellipse cx="1818" cy="637" rx="2.1" ry="3.9" transform="rotate(118 1818 637)" fill="#a9cf94" opacity="0.6"/>
<ellipse cx="1792" cy="918" rx="6.8" ry="4.9" transform="rotate(157 1792 918)" fill="#a9cf94" opacity="0.6"/>
<ellipse cx="2141" cy="693" rx="4.2" ry="3.0" transform="rotate(175 2141 693)" fill="#a9cf94" opacity="0.6"/>
<ellipse cx="1477" cy="672" rx="4.9" ry="2.0" transform="rotate(180 1477 672)" fill="#a9cf94" opacity="0.6"/>
<ellipse cx="711" cy="1007" rx="8.5" ry="2.4" transform="rotate(110 711 1007)" fill="#a9cf94" opacity="0.6"/>
<ellipse cx="1457" cy="453" rx="3.4" ry="1.9" transform="rotate(152 1457 453)" fill="#a9cf94" opacity="0.6"/>
<ellipse cx="2274" cy="1461" rx="2.3" ry="3.9" transform="rotate(58 2274 1461)" fill="#a9cf94" opacity="0.6"/>
<ellipse cx="1998" cy="918" rx="4.2" ry="4.9" transform="rotate(0 1998 918)" fill="#a9cf94" opacity="0.6"/>
<ellipse cx="2198" cy="1378" rx="5.6" ry="3.6" transform="rotate(179 2198 1378)" fill="#a9cf94" opacity="0.6"/>
<ellipse cx="1171" cy="1040" rx="7.2" ry="2.8" transform="rotate(128 1171 1040)" fill="#a9cf94" opacity="0.6"/>
<ellipse cx="1490" cy="884" rx="6.3" ry="3.9" transform="rotate(58 1490 884)" fill="#a9cf94" opacity="0.6"/>
<ellipse cx="1963" cy="909" rx="3.6" ry="3.6" transform="rotate(48 1963 909)" fill="#a9cf94" opacity="0.6"/>
<ellipse cx="2525" cy="804" rx="7.1" ry="3.3" transform="rotate(86 2525 804)" fill="#a9cf94" opacity="0.6"/>
<ellipse cx="1144" cy="304" rx="8.5" ry="3.4" transform="rotate(94 1144 304)" fill="#a9cf94" opacity="0.6"/>
<ellipse cx="1759" cy="1317" rx="3.7" ry="2.1" transform="rotate(148 1759 1317)" fill="#a9cf94" opacity="0.6"/>
<ellipse cx="1624" cy="1057" rx="7.8" ry="4.6" transform="rotate(156 1624 1057)" fill="#a9cf94" opacity="0.6"/>
<ellipse cx="787" cy="665" rx="7.8" ry="4.4" transform="rotate(22 787 665)" fill="#a9cf94" opacity="0.6"/>
<ellipse cx="1009" cy="469" rx="2.7" ry="2.7" transform="rotate(145 1009 469)" fill="#a9cf94" opacity="0.6"/>
<ellipse cx="1747" cy="773" rx="2.6" ry="2.9" transform="rotate(179 1747 773)" fill="#a9cf94" opacity="0.6"/>
<ellipse cx="2096" cy="768" rx="5.3" ry="4.3" transform="rotate(137 2096 768)" fill="#a9cf94" opacity="0.6"/>
<ellipse cx="1001" cy="1116" rx="4.6" ry="3.3" transform="rotate(43 1001 1116)" fill="#a9cf94" opacity="0.6"/>
<ellipse cx="1445" cy="603" rx="4.7" ry="1.6" transform="rotate(36 1445 603)" fill="#a9cf94" opacity="0.6"/>
<ellipse cx="1846" cy="177" rx="3.2" ry="4.0" transform="rotate(49 1846 177)" fill="#a9cf94" opacity="0.6"/>
<ellipse cx="1351" cy="455" rx="7.8" ry="1.8" transform="rotate(115 1351 455)" fill="#a9cf94" opacity="0.6"/>
<ellipse cx="2425" cy="394" rx="5.0" ry="4.3" transform="rotate(111 2425 394)" fill="#a9cf94" opacity="0.6"/>
<ellipse cx="1446" cy="156" rx="5.1" ry="2.8" transform="rotate(128 1446 156)" fill="#a9cf94" opacity="0.6"/>
<ellipse cx="1293" cy="706" rx="6.5" ry="4.3" transform="rotate(63 1293 706)" fill="#a9cf94" opacity="0.6"/>
<ellipse cx="1474" cy="963" rx="8.5" ry="2.2" transform="rotate(175 1474 963)" fill="#a9cf94" opacity="0.6"/>
<ellipse cx="2129" cy="652" rx="6.7" ry="2.7" transform="rotate(13 2129 652)" fill="#a9cf94" opacity="0.6"/>
<ellipse cx="2218" cy="663" rx="5.7" ry="3.2" transform="rotate(162 2218 663)" fill="#a9cf94" opacity="0.6"/>
<ellipse cx="2220" cy="129" rx="6.1" ry="3.1" transform="rotate(83 2220 129)" fill="#a9cf94" opacity="0.6"/>
<ellipse cx="2386" cy="716" rx="5.3" ry="4.6" transform="rotate(79 2386 716)" fill="#a9cf94" opacity="0.6"/>
<ellipse cx="1686" cy="862" rx="7.8" ry="3.8" transform="rotate(133 1686 862)" fill="#a9cf94" opacity="0.6"/>
<ellipse cx="1507" cy="151" rx="6.8" ry="3.4" transform="rotate(138 1507 151)" fill="#a9cf94" opacity="0.6"/>
<ellipse cx="2246" cy="268" rx="3.5" ry="1.8" transform="rotate(147 2246 268)" fill="#a9cf94" opacity="0.6"/>
<ellipse cx="904" cy="223" rx="7.3" ry="3.5" transform="rotate(10 904 223)" fill="#a9cf94" opacity="0.6"/>
<ellipse cx="2067" cy="1163" rx="5.4" ry="1.7" transform="rotate(124 2067 1163)" fill="#a9cf94" opacity="0.6"/>
<ellipse cx="1539" cy="971" rx="9.0" ry="4.4" transform="rotate(157 1539 971)" fill="#a9cf94" opacity="0.6"/>
<ellipse cx="992" cy="595" rx="5.6" ry="1.5" transform="rotate(178 992 595)" fill="#a9cf94" opacity="0.6"/>
<ellipse cx="1252" cy="486" rx="4.2" ry="2.4" transform="rotate(155 1252 486)" fill="#a9cf94" opacity="0.6"/>
<ellipse cx="1816" cy="861" rx="4.9" ry="1.7" transform="rotate(55 1816 861)" fill="#a9cf94" opacity="0.6"/>
<ellipse cx="2440" cy="1300" rx="8.0" ry="2.4" transform="rotate(36 2440 1300)" fill="#a9cf94" opacity="0.6"/>
<ellipse cx="805" cy="900" rx="4.6" ry="3.1" transform="rotate(88 805 900)" fill="#a9cf94" opacity="0.6"/>
<ellipse cx="1872" cy="642" rx="7.6" ry="2.2" transform="rotate(165 1872 642)" fill="#a9cf94" opacity="0.6"/>
<ellipse cx="1817" cy="167" rx="4.2" ry="3.4" transform="rotate(74 1817 167)" fill="#a9cf94" opacity="0.6"/>
<ellipse cx="1834" cy="578" rx="3.9" ry="4.3" transform="rotate(52 1834 578)" fill="#a9cf94" opacity="0.6"/>
<ellipse cx="2127" cy="1301" rx="6.1" ry="3.1" transform="rotate(168 2127 1301)" fill="#a9cf94" opacity="0.6"/>
<ellipse cx="1593" cy="1415" rx="2.4" ry="3.0" transform="rotate(115 1593 1415)" fill="#a9cf94" opacity="0.6"/>
<ellipse cx="798" cy="1392" rx="2.5" ry="3.6" transform="rotate(32 798 1392)" fill="#a9cf94" opacity="0.6"/>
<ellipse cx="2552" cy="937" rx="7.6" ry="3.2" transform="rotate(121 2552 937)" fill="#a9cf94" opacity="0.6"/>
<ellipse cx="2055" cy="535" rx="3.5" ry="4.4" transform="rotate(26 2055 535)" fill="#a9cf94" opacity="0.6"/>
<ellipse cx="2543" cy="402" rx="2.7" ry="1.8" transform="rotate(141 2543 402)" fill="#a9cf94" opacity="0.6"/>
<ellipse cx="2609" cy="716" rx="6.6" ry="2.4" transform="rotate(163 2609 716)" fill="#a9cf94" opacity="0.6"/>
<ellipse cx="2077" cy="324" rx="2.4" ry="3.9" transform="rotate(8 2077 324)" fill="#a9cf94" opacity="0.6"/>
<ellipse cx="2379" cy="533" rx="3.6" ry="3.5" transform="rotate(57 2379 533)" fill="#a9cf94" opacity="0.6"/>
<ellipse cx="1826" cy="322" rx="8.4" ry="2.6" transform="rotate(151 1826 322)" fill="#a9cf94" opacity="0.6"/>
<ellipse cx="1005" cy="1296" rx="8.9" ry="2.9" transform="rotate(6 1005 1296)" fill="#a9cf94" opacity="0.6"/>
<ellipse cx="1463" cy="1057" rx="3.6" ry="3.4" transform="rotate(17 1463 1057)" fill="#a9cf94" opacity="0.6"/>
<ellipse cx="1633" cy="1189" rx="5.0" ry="3.9" transform="rotate(21 1633 1189)" fill="#a9cf94" opacity="0.6"/>
<ellipse cx="2364" cy="274" rx="8.5" ry="5.0" transform="rotate(169 2364 274)" fill="#a9cf94" opacity="0.6"/>
<ellipse cx="1757" cy="529" rx="4.4" ry="4.1" transform="rotate(89 1757 529)" fill="#a9cf94" opacity="0.6"/>
<ellipse cx="2567" cy="230" rx="5.4" ry="4.5" transform="rotate(108 2567 230)" fill="#a9cf94" opacity="0.6"/>
<ellipse cx="1786" cy="223" rx="3.0" ry="2.4" transform="rotate(161 1786 223)" fill="#a9cf94" opacity="0.6"/>
<ellipse cx="2398" cy="433" rx="8.5" ry="1.6" transform="rotate(108 2398 433)" fill="#a9cf94" opacity="0.6"/>
<ellipse cx="2642" cy="610" rx="8.6" ry="3.8" transform="rotate(9 2642 610)" fill="#a9cf94" opacity="0.6"/>
<ellipse cx="1369" cy="768" rx="3.7" ry="4.1" transform="rotate(32 1369 768)" fill="#a9cf94" opacity="0.6"/>
<ellipse cx="2282" cy="540" rx="2.5" ry="3.5" transform="rotate(17 2282 540)" fill="#a9cf94" opacity="0.6"/>
<ellipse cx="1808" cy="1279" rx="6.2" ry="3.1" transform="rotate(6 1808 1279)" fill="#a9cf94" opacity="0.6"/>
<ellipse cx="1731" cy="237" rx="6.5" ry="2.0" transform="rotate(104 1731 237)" fill="#a9cf94" opacity="0.6"/>
<ellipse cx="1409" cy="655" rx="6.6" ry="2.1" transform="rotate(31 1409 655)" fill="#a9cf94" opacity="0.6"/>
<ellipse cx="2591" cy="590" rx="7.9" ry="4.6" transform="rotate(86 2591 590)" fill="#a9cf94" opacity="0.6"/>
<ellipse cx="999" cy="232" rx="8.2" ry="1.9" transform="rotate(89 999 232)" fill="#a9cf94" opacity="0.6"/>
<ellipse cx="1776" cy="267" rx="5.3" ry="2.1" transform="rotate(96 1776 267)" fill="#a9cf94" opacity="0.6"/>
<ellipse cx="1718" cy="644" rx="3.4" ry="2.9" transform="rotate(37 1718 644)" fill="#a9cf94" opacity="0.6"/>
<ellipse cx="955" cy="452" rx="8.1" ry="3.3" transform="rotate(160 955 452)" fill="#a9cf94" opacity="0.6"/>
<ellipse cx="730" cy="1513" rx="5.4" ry="4.3" transform="rotate(103 730 1513)" fill="#a9cf94" opacity="0.6"/>
<ellipse cx="2083" cy="436" rx="7.3" ry="2.0" transform="rotate(48 2083 436)" fill="#a9cf94" opacity="0.6"/>
<ellipse cx="762" cy="683" rx="5.6" ry="2.5" transform="rotate(160 762 683)" fill="#a9cf94" opacity="0.6"/>
<ellipse cx="869" cy="963" rx="3.6" ry="3.6" transform="rotate(141 869 963)" fill="#a9cf94" opacity="0.6"/>
<ellipse cx="2127" cy="184" rx="3.7" ry="3.6" transform="rotate(177 2127 184)" fill="#a9cf94" opacity="0.6"/>
<ellipse cx="783" cy="1023" rx="6.8" ry="4.4" transform="rotate(62 783 1023)" fill="#a9cf94" opacity="0.6"/>
<ellipse cx="2328" cy="787" rx="8.4" ry="1.5" transform="rotate(169 2328 787)" fill="#a9cf94" opacity="0.6"/>
<ellipse cx="1527" cy="704" rx="2.6" ry="2.4" transform="rotate(132 1527 704)" fill="#a9cf94" opacity="0.6"/>
<ellipse cx="2063" cy="318" rx="4.4" ry="2.0" transform="rotate(36 2063 318)" fill="#a9cf94" opacity="0.6"/>
<ellipse cx="1141" cy="590" rx="8.8" ry="5.0" transform="rotate(142 1141 590)" fill="#a9cf94" opacity="0.6"/>
<ellipse cx="1663" cy="840" rx="7.5" ry="4.7" transform="rotate(135 1663 840)" fill="#a9cf94" opacity="0.6"/>
<ellipse cx="1978" cy="390" rx="6.4" ry="4.5" transform="rotate(142 1978 390)" fill="#a9cf94" opacity="0.6"/>
<ellipse cx="886" cy="1173" rx="4.4" ry="2.1" transform="rotate(174 886 1173)" fill="#a9cf94" opacity="0.6"/>
<ellipse cx="2051" cy="1215" rx="2.9" ry="4.4" transform="rotate(169 2051 1215)" fill="#a9cf94" opacity="0.6"/>
<ellipse cx="2517" cy="1214" rx="7.8" ry="4.3" transform="rotate(106 2517 1214)" fill="#a9cf94" opacity="0.6"/>
<ellipse cx="1574" cy="1335" rx="7.5" ry="4.5" transform="rotate(54 1574 1335)" fill="#a9cf94" opacity="0.6"/>
<ellipse cx="2630" cy="892" rx="8.6" ry="1.9" transform="rotate(174 2630 892)" fill="#a9cf94" opacity="0.6"/>
<ellipse cx="2281" cy="470" rx="7.9" ry="2.3" transform="rotate(36 2281 470)" fill="#a9cf94" opacity="0.6"/>
<ellipse cx="1619" cy="447" rx="5.4" ry="4.7" transform="rotate(123 1619 447)" fill="#a9cf94" opacity="0.6"/>
<ellipse cx="2126" cy="682" rx="7.5" ry="4.3" transform="rotate(123 2126 682)" fill="#a9cf94" opacity="0.6"/>
<ellipse cx="2591" cy="1336" rx="4.8" ry="1.8" transform="rotate(117 2591 1336)" fill="#a9cf94" opacity="0.6"/>
<ellipse cx="2379" cy="602" rx="6.2" ry="4.4" transform="rotate(143 2379 602)" fill="#a9cf94" opacity="0.6"/>
<ellipse cx="709" cy="828" rx="2.1" ry="1.9" transform="rotate(146 709 828)" fill="#a9cf94" opacity="0.6"/>
<ellipse cx="1541" cy="1003" rx="5.2" ry="2.7" transform="rotate(38 1541 1003)" fill="#a9cf94" opacity="0.6"/>
<ellipse cx="1410" cy="1364" rx="6.3" ry="2.5" transform="rotate(16 1410 1364)" fill="#a9cf94" opacity="0.6"/>
<ellipse cx="1244" cy="1148" rx="5.1" ry="3.8" transform="rotate(145 1244 1148)" fill="#a9cf94" opacity="0.6"/>
<ellipse cx="942" cy="1121" rx="2.3" ry="4.4" transform="rotate(33 942 1121)" fill="#a9cf94" opacity="0.6"/>
<ellipse cx="1245" cy="1535" rx="4.5" ry="2.3" transform="rotate(160 1245 1535)" fill="#a9cf94" opacity="0.6"/>
<ellipse cx="1925" cy="1439" rx="4.8" ry="3.2" transform="rotate(172 1925 1439)" fill="#a9cf94" opacity="0.6"/>
<ellipse cx="1718" cy="1582" rx="3.3" ry="4.4" transform="rotate(29 1718 1582)" fill="#a9cf94" opacity="0.6"/>
<ellipse cx="1759" cy="91" rx="3.2" ry="4.8" transform="rotate(82 1759 91)" fill="#a9cf94" opacity="0.6"/>
<ellipse cx="2325" cy="468" rx="4.5" ry="1.9" transform="rotate(99 2325 468)" fill="#a9cf94" opacity="0.6"/>
<ellipse cx="2431" cy="865" rx="4.6" ry="4.8" transform="rotate(161 2431 865)" fill="#a9cf94" opacity="0.6"/>
<ellipse cx="2038" cy="205" rx="6.4" ry="3.1" transform="rotate(172 2038 205)" fill="#a9cf94" opacity="0.6"/>
<ellipse cx="1427" cy="1088" rx="6.4" ry="2.8" transform="rotate(94 1427 1088)" fill="#a9cf94" opacity="0.6"/>
<ellipse cx="2059" cy="1459" rx="5.5" ry="2.8" transform="rotate(176 2059 1459)" fill="#a9cf94" opacity="0.6"/>
<ellipse cx="814" cy="1350" rx="6.8" ry="3.5" transform="rotate(81 814 1350)" fill="#a9cf94" opacity="0.6"/>
<ellipse cx="2208" cy="1435" rx="7.1" ry="4.1" transform="rotate(6 2208 1435)" fill="#a9cf94" opacity="0.6"/>
<ellipse cx="1353" cy="297" rx="8.7" ry="4.6" transform="rotate(26 1353 297)" fill="#a9cf94" opacity="0.6"/>
<ellipse cx="1880" cy="960" rx="2.3" ry="2.9" transform="rotate(135 1880 960)" fill="#a9cf94" opacity="0.6"/>
<ellipse cx="1988" cy="514" rx="7.3" ry="2.5" transform="rotate(98 1988 514)" fill="#a9cf94" opacity="0.6"/>
<ellipse cx="1545" cy="1566" rx="6.5" ry="4.3" transform="rotate(122 1545 1566)" fill="#a9cf94" opacity="0.6"/>
<ellipse cx="1464" cy="1543" rx="7.0" ry="3.9" transform="rotate(50 1464 1543)" fill="#a9cf94" opacity="0.6"/>
<ellipse cx="1025" cy="958" rx="7.8" ry="4.3" transform="rotate(63 1025 958)" fill="#a9cf94" opacity="0.6"/>
<ellipse cx="981" cy="869" rx="8.1" ry="2.1" transform="rotate(133 981 869)" fill="#a9cf94" opacity="0.6"/>
<ellipse cx="1043" cy="561" rx="2.4" ry="2.5" transform="rotate(69 1043 561)" fill="#a9cf94" opacity="0.6"/>
<ellipse cx="2642" cy="1542" rx="3.3" ry="2.6" transform="rotate(170 2642 1542)" fill="#a9cf94" opacity="0.6"/>
<ellipse cx="1096" cy="574" rx="5.1" ry="1.9" transform="rotate(47 1096 574)" fill="#a9cf94" opacity="0.6"/>
<ellipse cx="1491" cy="672" rx="8.7" ry="2.4" transform="rotate(37 1491 672)" fill="#a9cf94" opacity="0.6"/>
<ellipse cx="2525" cy="769" rx="7.9" ry="3.7" transform="rotate(140 2525 769)" fill="#a9cf94" opacity="0.6"/>
<ellipse cx="1332" cy="319" rx="7.3" ry="3.1" transform="rotate(101 1332 319)" fill="#a9cf94" opacity="0.6"/>
<ellipse cx="2047" cy="1226" rx="3.9" ry="2.8" transform="rotate(165 2047 1226)" fill="#a9cf94" opacity="0.6"/>
<ellipse cx="1763" cy="525" rx="6.4" ry="2.4" transform="rotate(139 1763 525)" fill="#a9cf94" opacity="0.6"/>
<ellipse cx="783" cy="1337" rx="6.0" ry="2.7" transform="rotate(169 783 1337)" fill="#a9cf94" opacity="0.6"/>
<ellipse cx="1233" cy="457" rx="2.5" ry="3.4" transform="rotate(136 1233 457)" fill="#a9cf94" opacity="0.6"/>
<ellipse cx="2062" cy="713" rx="7.7" ry="1.9" transform="rotate(55 2062 713)" fill="#a9cf94" opacity="0.6"/>
<ellipse cx="1995" cy="1550" rx="6.4" ry="3.9" transform="rotate(139 1995 1550)" fill="#a9cf94" opacity="0.6"/>
<ellipse cx="1492" cy="1509" rx="7.2" ry="2.7" transform="rotate(71 1492 1509)" fill="#a9cf94" opacity="0.6"/>
<ellipse cx="2318" cy="618" rx="3.3" ry="4.6" transform="rotate(96 2318 618)" fill="#a9cf94" opacity="0.6"/>
<ellipse cx="1747" cy="1100" rx="8.3" ry="2.0" transform="rotate(61 1747 1100)" fill="#a9cf94" opacity="0.6"/>
<ellipse cx="832" cy="714" rx="5.5" ry="4.5" transform="rotate(120 832 714)" fill="#a9cf94" opacity="0.6"/>
<ellipse cx="1860" cy="699" rx="6.0" ry="2.5" transform="rotate(152 1860 699)" fill="#a9cf94" opacity="0.6"/>
<ellipse cx="2283" cy="1355" rx="3.1" ry="3.9" transform="rotate(136 2283 1355)" fill="#a9cf94" opacity="0.6"/>
<ellipse cx="1705" cy="1446" rx="8.3" ry="4.1" transform="rotate(148 1705 1446)" fill="#a9cf94" opacity="0.6"/>
<ellipse cx="2003" cy="1416" rx="2.9" ry="4.0" transform="rotate(127 2003 1416)" fill="#a9cf94" opacity="0.6"/>
<ellipse cx="1930" cy="505" rx="2.5" ry="3.6" transform="rotate(148 1930 505)" fill="#a9cf94" opacity="0.6"/>
<ellipse cx="1248" cy="412" rx="3.6" ry="1.8" transform="rotate(122 1248 412)" fill="#a9cf94" opacity="0.6"/>
<ellipse cx="2657" cy="1300" rx="4.5" ry="3.9" transform="rotate(13 2657 1300)" fill="#a9cf94" opacity="0.6"/>
<ellipse cx="2384" cy="581" rx="2.0" ry="3.7" transform="rotate(25 2384 581)" fill="#a9cf94" opacity="0.6"/>
<ellipse cx="1252" cy="179" rx="5.1" ry="3.4" transform="rotate(145 1252 179)" fill="#a9cf94" opacity="0.6"/>
<ellipse cx="780" cy="1339" rx="2.8" ry="2.3" transform="rotate(113 780 1339)" fill="#a9cf94" opacity="0.6"/>
<ellipse cx="1383" cy="590" rx="6.0" ry="2.3" transform="rotate(143 1383 590)" fill="#a9cf94" opacity="0.6"/>
<ellipse cx="1120" cy="1357" rx="7.7" ry="3.4" transform="rotate(5 1120 1357)" fill="#a9cf94" opacity="0.6"/>
<ellipse cx="2262" cy="133" rx="5.5" ry="3.0" transform="rotate(11 2262 133)" fill="#a9cf94" opacity="0.6"/>
<ellipse cx="1965" cy="1183" rx="6.1" ry="2.9" transform="rotate(92 1965 1183)" fill="#a9cf94" opacity="0.6"/>
<ellipse cx="1882" cy="431" rx="8.1" ry="5.0" transform="rotate(145 1882 431)" fill="#a9cf94" opacity="0.6"/>
<ellipse cx="2630" cy="587" rx="8.9" ry="1.7" transform="rotate(86 2630 587)" fill="#a9cf94" opacity="0.6"/>
<ellipse cx="969" cy="775" rx="6.8" ry="4.0" transform="rotate(82 969 775)" fill="#a9cf94" opacity="0.6"/>
<ellipse cx="1386" cy="377" rx="4.8" ry="2.5" transform="rotate(35 1386 377)" fill="#a9cf94" opacity="0.6"/>
<ellipse cx="2178" cy="869" rx="5.1" ry="2.2" transform="rotate(127 2178 869)" fill="#a9cf94" opacity="0.6"/>
<ellipse cx="1095" cy="491" rx="5.9" ry="4.0" transform="rotate(175 1095 491)" fill="#a9cf94" opacity="0.6"/>
<ellipse cx="2201" cy="1521" rx="8.4" ry="4.0" transform="rotate(130 2201 1521)" fill="#a9cf94" opacity="0.6"/>
<ellipse cx="826" cy="400" rx="2.1" ry="4.5" transform="rotate(130 826 400)" fill="#a9cf94" opacity="0.6"/>
<ellipse cx="1965" cy="488" rx="4.5" ry="2.1" transform="rotate(114 1965 488)" fill="#a9cf94" opacity="0.6"/>
<ellipse cx="2691" cy="551" rx="2.3" ry="2.1" transform="rotate(64 2691 551)" fill="#a9cf94" opacity="0.6"/>
<ellipse cx="2505" cy="1304" rx="5.2" ry="1.9" transform="rotate(19 2505 1304)" fill="#a9cf94" opacity="0.6"/>
<ellipse cx="1009" cy="1263" rx="5.3" ry="5.0" transform="rotate(164 1009 1263)" fill="#a9cf94" opacity="0.6"/>
<ellipse cx="2296" cy="809" rx="7.8" ry="1.9" transform="rotate(20 2296 809)" fill="#a9cf94" opacity="0.6"/>
<ellipse cx="1831" cy="856" rx="3.5" ry="2.4" transform="rotate(4 1831 856)" fill="#a9cf94" opacity="0.6"/>
<ellipse cx="2525" cy="1162" rx="8.6" ry="4.9" transform="rotate(79 2525 1162)" fill="#a9cf94" opacity="0.6"/>
<ellipse cx="2171" cy="670" rx="7.7" ry="4.4" transform="rotate(24 2171 670)" fill="#a9cf94" opacity="0.6"/>
<ellipse cx="726" cy="413" rx="6.1" ry="2.8" transform="rotate(2 726 413)" fill="#a9cf94" opacity="0.6"/>
<ellipse cx="2367" cy="1276" rx="5.2" ry="1.7" transform="rotate(160 2367 1276)" fill="#a9cf94" opacity="0.6"/>
<ellipse cx="1773" cy="197" rx="4.3" ry="3.7" transform="rotate(159 1773 197)" fill="#a9cf94" opacity="0.6"/>
<ellipse cx="1673" cy="1055" rx="3.4" ry="2.4" transform="rotate(163 1673 1055)" fill="#a9cf94" opacity="0.6"/>
<ellipse cx="1468" cy="247" rx="6.1" ry="1.9" transform="rotate(36 1468 247)" fill="#a9cf94" opacity="0.6"/>
<ellipse cx="1616" cy="974" rx="6.5" ry="4.0" transform="rotate(79 1616 974)" fill="#a9cf94" opacity="0.6"/>
<ellipse cx="836" cy="1183" rx="2.4" ry="3.1" transform="rotate(72 836 1183)" fill="#a9cf94" opacity="0.6"/>
<ellipse cx="2051" cy="1167" rx="3.7" ry="3.8" transform="rotate(125 2051 1167)" fill="#a9cf94" opacity="0.6"/>
<ellipse cx="1647" cy="304" rx="8.4" ry="3.6" transform="rotate(11 1647 304)" fill="#a9cf94" opacity="0.6"/>
<ellipse cx="1179" cy="1579" rx="3.6" ry="2.9" transform="rotate(142 1179 1579)" fill="#a9cf94" opacity="0.6"/>
<ellipse cx="2354" cy="1047" rx="7.2" ry="1.6" transform="rotate(17 2354 1047)" fill="#a9cf94" opacity="0.6"/>
<ellipse cx="2660" cy="1301" rx="2.3" ry="1.7" transform="rotate(43 2660 1301)" fill="#a9cf94" opacity="0.6"/>
<ellipse cx="2569" cy="421" rx="6.7" ry="4.8" transform="rotate(115 2569 421)" fill="#a9cf94" opacity="0.6"/>
<ellipse cx="2546" cy="487" rx="3.1" ry="1.6" transform="rotate(136 2546 487)" fill="#a9cf94" opacity="0.6"/>
<ellipse cx="908" cy="1558" rx="7.0" ry="2.2" transform="rotate(145 908 1558)" fill="#a9cf94" opacity="0.6"/>
<ellipse cx="1027" cy="863" rx="2.7" ry="4.3" transform="rotate(160 1027 863)" fill="#a9cf94" opacity="0.6"/>
<ellipse cx="2540" cy="93" rx="8.0" ry="3.4" transform="rotate(148 2540 93)" fill="#a9cf94" opacity="0.6"/>
<ellipse cx="1709" cy="1025" rx="6.2" ry="4.3" transform="rotate(14 1709 1025)" fill="#a9cf94" opacity="0.6"/>
<ellipse cx="809" cy="913" rx="4.0" ry="2.9" transform="rotate(1 809 913)" fill="#a9cf94" opacity="0.6"/>
<ellipse cx="2196" cy="126" rx="7.8" ry="4.3" transform="rotate(82 2196 126)" fill="#a9cf94" opacity="0.6"/>
<ellipse cx="945" cy="1071" rx="3.4" ry="3.0" transform="rotate(20 945 1071)" fill="#a9cf94" opacity="0.6"/>
<ellipse cx="2661" cy="914" rx="4.5" ry="1.8" transform="rotate(131 2661 914)" fill="#a9cf94" opacity="0.6"/>
<ellipse cx="2406" cy="1370" rx="2.7" ry="2.8" transform="rotate(54 2406 1370)" fill="#a9cf94" opacity="0.6"/>
<ellipse cx="2231" cy="313" rx="6.2" ry="4.9" transform="rotate(138 2231 313)" fill="#a9cf94" opacity="0.6"/>
<ellipse cx="714" cy="203" rx="2.8" ry="3.9" transform="rotate(108 714 203)" fill="#a9cf94" opacity="0.6"/>
<ellipse cx="1744" cy="778" rx="4.9" ry="3.6" transform="rotate(117 1744 778)" fill="#a9cf94" opacity="0.6"/>
<ellipse cx="2540" cy="1196" rx="7.6" ry="4.7" transform="rotate(151 2540 1196)" fill="#a9cf94" opacity="0.6"/>
<ellipse cx="2139" cy="136" rx="6.8" ry="4.5" transform="rotate(78 2139 136)" fill="#a9cf94" opacity="0.6"/>
<ellipse cx="2463" cy="361" rx="8.6" ry="3.0" transform="rotate(127 2463 361)" fill="#a9cf94" opacity="0.6"/>
<ellipse cx="1207" cy="544" rx="4.4" ry="2.6" transform="rotate(17 1207 544)" fill="#a9cf94" opacity="0.6"/>
<ellipse cx="1589" cy="1570" rx="6.6" ry="4.8" transform="rotate(137 1589 1570)" fill="#a9cf94" opacity="0.6"/>
<ellipse cx="2380" cy="1590" rx="7.3" ry="2.5" transform="rotate(45 2380 1590)" fill="#a9cf94" opacity="0.6"/>
<ellipse cx="1528" cy="122" rx="3.6" ry="4.6" transform="rotate(166 1528 122)" fill="#a9cf94" opacity="0.6"/>
<ellipse cx="1360" cy="1253" rx="7.4" ry="4.6" transform="rotate(143 1360 1253)" fill="#a9cf94" opacity="0.6"/>
<ellipse cx="1768" cy="248" rx="7.8" ry="2.6" transform="rotate(113 1768 248)" fill="#a9cf94" opacity="0.6"/>
<ellipse cx="1437" cy="901" rx="8.8" ry="2.1" transform="rotate(96 1437 901)" fill="#a9cf94" opacity="0.6"/>
<ellipse cx="2005" cy="902" rx="8.6" ry="2.9" transform="rotate(164 2005 902)" fill="#a9cf94" opacity="0.6"/>
<ellipse cx="2085" cy="1550" rx="2.6" ry="2.2" transform="rotate(52 2085 1550)" fill="#a9cf94" opacity="0.6"/>
<ellipse cx="2520" cy="111" rx="3.8" ry="4.0" transform="rotate(178 2520 111)" fill="#a9cf94" opacity="0.6"/>
<ellipse cx="1054" cy="751" rx="6.8" ry="3.9" transform="rotate(134 1054 751)" fill="#a9cf94" opacity="0.6"/>
<ellipse cx="2212" cy="465" rx="3.8" ry="1.6" transform="rotate(124 2212 465)" fill="#a9cf94" opacity="0.6"/>
<ellipse cx="1120" cy="482" rx="8.8" ry="3.8" transform="rotate(106 1120 482)" fill="#a9cf94" opacity="0.6"/>
<ellipse cx="2017" cy="992" rx="6.9" ry="2.6" transform="rotate(12 2017 992)" fill="#a9cf94" opacity="0.6"/>
<ellipse cx="834" cy="112" rx="4.5" ry="2.0" transform="rotate(20 834 112)" fill="#a9cf94" opacity="0.6"/>
<ellipse cx="1691" cy="1553" rx="6.8" ry="2.5" transform="rotate(138 1691 1553)" fill="#a9cf94" opacity="0.6"/>
<ellipse cx="1057" cy="241" rx="4.1" ry="2.9" transform="rotate(124 1057 241)" fill="#a9cf94" opacity="0.6"/>
<ellipse cx="1593" cy="1189" rx="2.7" ry="4.8" transform="rotate(62 1593 1189)" fill="#a9cf94" opacity="0.6"/>
<ellipse cx="2371" cy="136" rx="7.8" ry="2.3" transform="rotate(154 2371 136)" fill="#a9cf94" opacity="0.6"/>
<ellipse cx="2312" cy="1102" rx="3.9" ry="1.5" transform="rotate(34 2312 1102)" fill="#a9cf94" opacity="0.6"/>
<ellipse cx="2517" cy="328" rx="6.6" ry="3.6" transform="rotate(119 2517 328)" fill="#a9cf94" opacity="0.6"/>
<ellipse cx="1063" cy="307" rx="2.7" ry="4.9" transform="rotate(69 1063 307)" fill="#a9cf94" opacity="0.6"/>
<ellipse cx="2010" cy="950" rx="3.6" ry="1.7" transform="rotate(3 2010 950)" fill="#a9cf94" opacity="0.6"/>
<ellipse cx="2412" cy="286" rx="8.7" ry="2.8" transform="rotate(130 2412 286)" fill="#a9cf94" opacity="0.6"/>
<ellipse cx="978" cy="1279" rx="3.8" ry="2.8" transform="rotate(94 978 1279)" fill="#a9cf94" opacity="0.6"/>
<ellipse cx="924" cy="465" rx="7.6" ry="2.5" transform="rotate(69 924 465)" fill="#a9cf94" opacity="0.6"/>
<ellipse cx="2236" cy="428" rx="3.4" ry="2.3" transform="rotate(69 2236 428)" fill="#a9cf94" opacity="0.6"/>
<ellipse cx="1434" cy="1058" rx="5.3" ry="4.5" transform="rotate(9 1434 1058)" fill="#a9cf94" opacity="0.6"/>
<ellipse cx="2033" cy="1352" rx="3.6" ry="1.6" transform="rotate(79 2033 1352)" fill="#a9cf94" opacity="0.6"/>
<ellipse cx="933" cy="784" rx="7.0" ry="1.8" transform="rotate(21 933 784)" fill="#a9cf94" opacity="0.6"/>
<ellipse cx="1663" cy="352" rx="3.6" ry="3.0" transform="rotate(21 1663 352)" fill="#a9cf94" opacity="0.6"/>
<ellipse cx="836" cy="635" rx="5.3" ry="4.8" transform="rotate(100 836 635)" fill="#a9cf94" opacity="0.6"/>
<ellipse cx="844" cy="426" rx="7.2" ry="3.5" transform="rotate(157 844 426)" fill="#a9cf94" opacity="0.6"/>
<ellipse cx="2633" cy="1385" rx="2.8" ry="4.8" transform="rotate(94 2633 1385)" fill="#a9cf94" opacity="0.6"/>
<ellipse cx="1181" cy="348" rx="8.1" ry="2.2" transform="rotate(15 1181 348)" fill="#a9cf94" opacity="0.6"/>
<ellipse cx="1233" cy="1484" rx="5.2" ry="4.1" transform="rotate(13 1233 1484)" fill="#a9cf94" opacity="0.6"/>
<ellipse cx="1610" cy="570" rx="3.4" ry="3.8" transform="rotate(65 1610 570)" fill="#a9cf94" opacity="0.6"/>
<ellipse cx="940" cy="1575" rx="5.4" ry="2.1" transform="rotate(2 940 1575)" fill="#a9cf94" opacity="0.6"/>
<ellipse cx="2011" cy="867" rx="2.2" ry="3.1" transform="rotate(133 2011 867)" fill="#a9cf94" opacity="0.6"/>
<ellipse cx="1779" cy="443" rx="5.5" ry="3.6" transform="rotate(117 1779 443)" fill="#a9cf94" opacity="0.6"/>
<ellipse cx="991" cy="1303" rx="8.6" ry="4.1" transform="rotate(154 991 1303)" fill="#a9cf94" opacity="0.6"/>
<ellipse cx="1438" cy="1452" rx="3.3" ry="2.3" transform="rotate(108 1438 1452)" fill="#a9cf94" opacity="0.6"/>
<ellipse cx="2510" cy="214" rx="3.5" ry="1.6" transform="rotate(79 2510 214)" fill="#a9cf94" opacity="0.6"/>
<ellipse cx="982" cy="379" rx="7.2" ry="3.5" transform="rotate(169 982 379)" fill="#a9cf94" opacity="0.6"/>
<ellipse cx="1507" cy="1115" rx="2.1" ry="4.8" transform="rotate(42 1507 1115)" fill="#a9cf94" opacity="0.6"/>
<ellipse cx="1658" cy="862" rx="8.6" ry="3.2" transform="rotate(179 1658 862)" fill="#a9cf94" opacity="0.6"/>
<ellipse cx="1947" cy="417" rx="7.8" ry="2.2" transform="rotate(180 1947 417)" fill="#a9cf94" opacity="0.6"/>
<ellipse cx="1617" cy="431" rx="8.7" ry="2.6" transform="rotate(73 1617 431)" fill="#a9cf94" opacity="0.6"/>
<ellipse cx="1389" cy="1099" rx="2.2" ry="2.8" transform="rotate(29 1389 1099)" fill="#a9cf94" opacity="0.6"/>
<ellipse cx="2363" cy="90" rx="6.3" ry="2.4" transform="rotate(82 2363 90)" fill="#a9cf94" opacity="0.6"/>
<ellipse cx="1828" cy="1164" rx="3.0" ry="2.3" transform="rotate(22 1828 1164)" fill="#a9cf94" opacity="0.6"/>
<ellipse cx="2628" cy="315" rx="3.0" ry="3.3" transform="rotate(105 2628 315)" fill="#a9cf94" opacity="0.6"/>
<ellipse cx="2480" cy="176" rx="3.6" ry="2.1" transform="rotate(105 2480 176)" fill="#a9cf94" opacity="0.6"/>
<ellipse cx="1608" cy="707" rx="8.2" ry="3.8" transform="rotate(155 1608 707)" fill="#a9cf94" opacity="0.6"/>
<ellipse cx="2622" cy="496" rx="8.6" ry="2.9" transform="rotate(9 2622 496)" fill="#a9cf94" opacity="0.6"/>
<ellipse cx="2537" cy="247" rx="2.1" ry="2.5" transform="rotate(52 2537 247)" fill="#a9cf94" opacity="0.6"/>
<ellipse cx="2642" cy="1404" rx="4.9" ry="3.4" transform="rotate(153 2642 1404)" fill="#a9cf94" opacity="0.6"/>
<ellipse cx="2321" cy="1076" rx="5.6" ry="1.9" transform="rotate(44 2321 1076)" fill="#a9cf94" opacity="0.6"/>
<ellipse cx="2022" cy="975" rx="7.6" ry="4.6" transform="rotate(173 2022 975)" fill="#a9cf94" opacity="0.6"/>
<ellipse cx="1087" cy="205" rx="8.3" ry="3.5" transform="rotate(33 1087 205)" fill="#a9cf94" opacity="0.6"/>
<ellipse cx="2090" cy="476" rx="3.7" ry="2.8" transform="rotate(94 2090 476)" fill="#a9cf94" opacity="0.6"/>
<ellipse cx="2060" cy="201" rx="7.2" ry="3.7" transform="rotate(85 2060 201)" fill="#a9cf94" opacity="0.6"/>
<ellipse cx="2050" cy="1297" rx="2.1" ry="3.2" transform="rotate(122 2050 1297)" fill="#a9cf94" opacity="0.6"/>
<ellipse cx="2124" cy="1067" rx="3.3" ry="4.9" transform="rotate(141 2124 1067)" fill="#a9cf94" opacity="0.6"/>
<ellipse cx="1168" cy="740" rx="8.7" ry="2.2" transform="rotate(74 1168 740)" fill="#a9cf94" opacity="0.6"/>
<ellipse cx="2631" cy="1448" rx="3.6" ry="4.1" transform="rotate(65 2631 1448)" fill="#a9cf94" opacity="0.6"/>
<ellipse cx="2032" cy="1247" rx="2.9" ry="2.3" transform="rotate(39 2032 1247)" fill="#a9cf94" opacity="0.6"/>
<ellipse cx="1234" cy="144" rx="3.0" ry="2.9" transform="rotate(76 1234 144)" fill="#a9cf94" opacity="0.6"/>
<ellipse cx="856" cy="969" rx="8.6" ry="3.5" transform="rotate(64 856 969)" fill="#a9cf94" opacity="0.6"/>
<ellipse cx="2115" cy="750" rx="3.2" ry="3.2" transform="rotate(3 2115 750)" fill="#a9cf94" opacity="0.6"/>
<ellipse cx="2057" cy="333" rx="4.6" ry="4.9" transform="rotate(138 2057 333)" fill="#a9cf94" opacity="0.6"/>
<ellipse cx="2378" cy="1059" rx="6.4" ry="4.0" transform="rotate(174 2378 1059)" fill="#a9cf94" opacity="0.6"/>
<ellipse cx="1094" cy="1246" rx="4.1" ry="2.4" transform="rotate(148 1094 1246)" fill="#a9cf94" opacity="0.6"/>
<ellipse cx="1907" cy="1372" rx="8.1" ry="3.6" transform="rotate(36 1907 1372)" fill="#a9cf94" opacity="0.6"/>
<ellipse cx="730" cy="897" rx="7.1" ry="2.5" transform="rotate(13 730 897)" fill="#a9cf94" opacity="0.6"/>
<ellipse cx="710" cy="351" rx="6.9" ry="1.5" transform="rotate(41 710 351)" fill="#a9cf94" opacity="0.6"/>
<ellipse cx="1232" cy="1163" rx="8.9" ry="1.6" transform="rotate(21 1232 1163)" fill="#a9cf94" opacity="0.6"/>
<ellipse cx="2577" cy="1554" rx="3.0" ry="2.7" transform="rotate(94 2577 1554)" fill="#a9cf94" opacity="0.6"/>
<ellipse cx="1343" cy="720" rx="5.4" ry="2.4" transform="rotate(10 1343 720)" fill="#a9cf94" opacity="0.6"/>
<ellipse cx="869" cy="335" rx="2.6" ry="3.7" transform="rotate(125 869 335)" fill="#a9cf94" opacity="0.6"/>
<ellipse cx="1228" cy="1285" rx="7.1" ry="2.7" transform="rotate(89 1228 1285)" fill="#a9cf94" opacity="0.6"/>
<ellipse cx="1078" cy="1492" rx="5.9" ry="1.7" transform="rotate(28 1078 1492)" fill="#a9cf94" opacity="0.6"/>
<ellipse cx="2091" cy="671" rx="7.0" ry="2.3" transform="rotate(143 2091 671)" fill="#a9cf94" opacity="0.6"/>
<ellipse cx="2310" cy="232" rx="6.1" ry="2.2" transform="rotate(127 2310 232)" fill="#a9cf94" opacity="0.6"/>
<ellipse cx="2314" cy="1284" rx="3.6" ry="1.8" transform="rotate(119 2314 1284)" fill="#a9cf94" opacity="0.6"/>
<ellipse cx="1835" cy="299" rx="3.3" ry="3.5" transform="rotate(19 1835 299)" fill="#a9cf94" opacity="0.6"/>
<ellipse cx="1973" cy="454" rx="3.8" ry="3.0" transform="rotate(96 1973 454)" fill="#a9cf94" opacity="0.6"/>
<ellipse cx="2155" cy="137" rx="7.1" ry="2.3" transform="rotate(52 2155 137)" fill="#a9cf94" opacity="0.6"/>
<ellipse cx="1985" cy="1133" rx="6.3" ry="4.7" transform="rotate(37 1985 1133)" fill="#a9cf94" opacity="0.6"/>
<ellipse cx="1325" cy="1090" rx="3.8" ry="2.1" transform="rotate(41 1325 1090)" fill="#a9cf94" opacity="0.6"/>
<ellipse cx="2249" cy="1338" rx="7.0" ry="4.9" transform="rotate(143 2249 1338)" fill="#a9cf94" opacity="0.6"/>
<ellipse cx="1322" cy="566" rx="7.0" ry="1.7" transform="rotate(110 1322 566)" fill="#a9cf94" opacity="0.6"/>
<ellipse cx="879" cy="164" rx="5.6" ry="2.0" transform="rotate(168 879 164)" fill="#a9cf94" opacity="0.6"/>
<ellipse cx="2462" cy="787" rx="3.4" ry="1.9" transform="rotate(91 2462 787)" fill="#a9cf94" opacity="0.6"/>
<ellipse cx="1747" cy="638" rx="7.0" ry="3.4" transform="rotate(140 1747 638)" fill="#a9cf94" opacity="0.6"/>
<ellipse cx="913" cy="196" rx="4.7" ry="3.2" transform="rotate(45 913 196)" fill="#a9cf94" opacity="0.6"/>
<ellipse cx="2042" cy="425" rx="4.2" ry="3.2" transform="rotate(128 2042 425)" fill="#a9cf94" opacity="0.6"/>
<ellipse cx="2247" cy="651" rx="5.1" ry="4.7" transform="rotate(168 2247 651)" fill="#a9cf94" opacity="0.6"/>
<ellipse cx="1942" cy="248" rx="5.2" ry="3.7" transform="rotate(50 1942 248)" fill="#a9cf94" opacity="0.6"/>
<ellipse cx="775" cy="1571" rx="8.4" ry="2.0" transform="rotate(84 775 1571)" fill="#a9cf94" opacity="0.6"/>
<ellipse cx="1944" cy="543" rx="2.5" ry="4.1" transform="rotate(139 1944 543)" fill="#a9cf94" opacity="0.6"/>
<ellipse cx="1578" cy="219" rx="4.8" ry="1.8" transform="rotate(173 1578 219)" fill="#a9cf94" opacity="0.6"/>
<ellipse cx="803" cy="525" rx="7.4" ry="2.0" transform="rotate(19 803 525)" fill="#a9cf94" opacity="0.6"/>
<ellipse cx="842" cy="337" rx="5.7" ry="4.4" transform="rotate(30 842 337)" fill="#a9cf94" opacity="0.6"/>
<ellipse cx="1049" cy="1244" rx="5.0" ry="2.7" transform="rotate(22 1049 1244)" fill="#a9cf94" opacity="0.6"/>
<ellipse cx="1188" cy="1556" rx="2.8" ry="2.4" transform="rotate(133 1188 1556)" fill="#a9cf94" opacity="0.6"/>
<ellipse cx="2491" cy="1455" rx="5.3" ry="4.8" transform="rotate(109 2491 1455)" fill="#a9cf94" opacity="0.6"/>
<ellipse cx="1280" cy="792" rx="7.0" ry="4.1" transform="rotate(23 1280 792)" fill="#a9cf94" opacity="0.6"/>
<ellipse cx="1089" cy="1536" rx="2.7" ry="4.3" transform="rotate(61 1089 1536)" fill="#a9cf94" opacity="0.6"/>
<ellipse cx="1198" cy="475" rx="5.3" ry="5.0" transform="rotate(27 1198 475)" fill="#a9cf94" opacity="0.6"/>
<ellipse cx="2416" cy="575" rx="3.2" ry="4.1" transform="rotate(61 2416 575)" fill="#a9cf94" opacity="0.6"/>
<ellipse cx="1077" cy="721" rx="7.8" ry="4.5" transform="rotate(103 1077 721)" fill="#a9cf94" opacity="0.6"/>
<ellipse cx="721" cy="1242" rx="6.2" ry="4.6" transform="rotate(171 721 1242)" fill="#a9cf94" opacity="0.6"/>
<ellipse cx="1357" cy="1370" rx="7.7" ry="2.4" transform="rotate(66 1357 1370)" fill="#a9cf94" opacity="0.6"/>
<ellipse cx="1452" cy="622" rx="4.6" ry="1.9" transform="rotate(41 1452 622)" fill="#a9cf94" opacity="0.6"/>
<ellipse cx="2526" cy="710" rx="6.5" ry="4.6" transform="rotate(136 2526 710)" fill="#a9cf94" opacity="0.6"/>
<ellipse cx="1191" cy="1478" rx="7.6" ry="5.0" transform="rotate(131 1191 1478)" fill="#a9cf94" opacity="0.6"/>
<ellipse cx="2216" cy="1317" rx="3.8" ry="3.8" transform="rotate(69 2216 1317)" fill="#a9cf94" opacity="0.6"/>
<ellipse cx="2386" cy="292" rx="5.8" ry="2.7" transform="rotate(148 2386 292)" fill="#a9cf94" opacity="0.6"/>
<ellipse cx="1393" cy="1363" rx="7.9" ry="4.6" transform="rotate(25 1393 1363)" fill="#a9cf94" opacity="0.6"/>
<ellipse cx="2584" cy="1213" rx="6.7" ry="3.8" transform="rotate(9 2584 1213)" fill="#a9cf94" opacity="0.6"/>
<ellipse cx="2447" cy="917" rx="5.2" ry="2.7" transform="rotate(141 2447 917)" fill="#a9cf94" opacity="0.6"/>
<ellipse cx="2271" cy="1403" rx="3.5" ry="2.7" transform="rotate(45 2271 1403)" fill="#a9cf94" opacity="0.6"/>
<ellipse cx="902" cy="584" rx="2.2" ry="4.3" transform="rotate(41 902 584)" fill="#a9cf94" opacity="0.6"/>
<ellipse cx="842" cy="192" rx="7.2" ry="2.2" transform="rotate(83 842 192)" fill="#a9cf94" opacity="0.6"/>
<ellipse cx="1507" cy="1301" rx="8.7" ry="2.6" transform="rotate(114 1507 1301)" fill="#a9cf94" opacity="0.6"/>
<ellipse cx="2497" cy="800" rx="8.3" ry="4.1" transform="rotate(56 2497 800)" fill="#a9cf94" opacity="0.6"/>
<ellipse cx="2455" cy="955" rx="2.7" ry="3.6" transform="rotate(149 2455 955)" fill="#a9cf94" opacity="0.6"/>
<ellipse cx="1741" cy="820" rx="4.9" ry="4.6" transform="rotate(120 1741 820)" fill="#a9cf94" opacity="0.6"/>
<ellipse cx="1118" cy="637" rx="4.5" ry="4.9" transform="rotate(125 1118 637)" fill="#a9cf94" opacity="0.6"/>
<ellipse cx="951" cy="1470" rx="2.2" ry="3.6" transform="rotate(78 951 1470)" fill="#a9cf94" opacity="0.6"/>
<ellipse cx="2141" cy="738" rx="2.6" ry="3.3" transform="rotate(148 2141 738)" fill="#a9cf94" opacity="0.6"/>
<ellipse cx="2284" cy="628" rx="3.6" ry="4.1" transform="rotate(144 2284 628)" fill="#a9cf94" opacity="0.6"/>
<ellipse cx="1140" cy="1423" rx="8.9" ry="3.0" transform="rotate(69 1140 1423)" fill="#a9cf94" opacity="0.6"/>
<ellipse cx="2125" cy="1493" rx="3.4" ry="2.6" transform="rotate(59 2125 1493)" fill="#a9cf94" opacity="0.6"/>
<ellipse cx="2170" cy="372" rx="5.8" ry="3.3" transform="rotate(120 2170 372)" fill="#a9cf94" opacity="0.6"/>
<ellipse cx="988" cy="1534" rx="9.0" ry="3.5" transform="rotate(143 988 1534)" fill="#a9cf94" opacity="0.6"/>
<ellipse cx="1068" cy="1463" rx="5.9" ry="4.2" transform="rotate(156 1068 1463)" fill="#a9cf94" opacity="0.6"/>
<ellipse cx="1426" cy="1484" rx="3.5" ry="1.6" transform="rotate(90 1426 1484)" fill="#a9cf94" opacity="0.6"/>
<ellipse cx="2505" cy="1449" rx="8.7" ry="3.3" transform="rotate(168 2505 1449)" fill="#a9cf94" opacity="0.6"/>
<ellipse cx="1824" cy="307" rx="6.4" ry="4.3" transform="rotate(76 1824 307)" fill="#a9cf94" opacity="0.6"/>
<ellipse cx="1909" cy="481" rx="3.9" ry="3.0" transform="rotate(92 1909 481)" fill="#a9cf94" opacity="0.6"/>
<ellipse cx="1640" cy="229" rx="2.0" ry="2.7" transform="rotate(129 1640 229)" fill="#a9cf94" opacity="0.6"/>
<ellipse cx="2203" cy="448" rx="3.8" ry="3.3" transform="rotate(32 2203 448)" fill="#a9cf94" opacity="0.6"/>
<ellipse cx="1911" cy="1454" rx="3.4" ry="3.5" transform="rotate(130 1911 1454)" fill="#a9cf94" opacity="0.6"/>
<ellipse cx="2204" cy="1165" rx="7.0" ry="2.5" transform="rotate(151 2204 1165)" fill="#a9cf94" opacity="0.6"/>
<ellipse cx="2558" cy="169" rx="8.6" ry="3.0" transform="rotate(16 2558 169)" fill="#a9cf94" opacity="0.6"/>
<ellipse cx="840" cy="1292" rx="6.7" ry="2.0" transform="rotate(83 840 1292)" fill="#a9cf94" opacity="0.6"/>
<ellipse cx="1983" cy="1595" rx="4.4" ry="4.2" transform="rotate(44 1983 1595)" fill="#a9cf94" opacity="0.6"/>
<ellipse cx="1099" cy="333" rx="4.9" ry="3.7" transform="rotate(55 1099 333)" fill="#a9cf94" opacity="0.6"/>
<ellipse cx="1025" cy="420" rx="2.6" ry="2.2" transform="rotate(57 1025 420)" fill="#a9cf94" opacity="0.6"/>
<ellipse cx="1713" cy="367" rx="5.4" ry="3.0" transform="rotate(175 1713 367)" fill="#a9cf94" opacity="0.6"/>
<ellipse cx="1676" cy="1516" rx="5.3" ry="2.2" transform="rotate(107 1676 1516)" fill="#a9cf94" opacity="0.6"/>
<ellipse cx="990" cy="345" rx="2.5" ry="4.0" transform="rotate(174 990 345)" fill="#a9cf94" opacity="0.6"/>
<ellipse cx="1510" cy="624" rx="5.0" ry="2.7" transform="rotate(124 1510 624)" fill="#a9cf94" opacity="0.6"/>
<ellipse cx="1487" cy="320" rx="8.1" ry="3.5" transform="rotate(1 1487 320)" fill="#a9cf94" opacity="0.6"/>
<ellipse cx="2406" cy="1189" rx="4.5" ry="3.7" transform="rotate(166 2406 1189)" fill="#a9cf94" opacity="0.6"/>
<ellipse cx="1507" cy="743" rx="4.1" ry="3.4" transform="rotate(119 1507 743)" fill="#a9cf94" opacity="0.6"/>
<ellipse cx="2176" cy="1523" rx="3.0" ry="2.8" transform="rotate(153 2176 1523)" fill="#a9cf94" opacity="0.6"/>
<ellipse cx="2288" cy="980" rx="6.7" ry="2.7" transform="rotate(170 2288 980)" fill="#a9cf94" opacity="0.6"/>
<ellipse cx="1803" cy="697" rx="3.3" ry="1.9" transform="rotate(162 1803 697)" fill="#a9cf94" opacity="0.6"/>
<ellipse cx="2307" cy="130" rx="4.3" ry="3.2" transform="rotate(89 2307 130)" fill="#a9cf94" opacity="0.6"/>
<ellipse cx="1430" cy="1441" rx="4.4" ry="3.4" transform="rotate(167 1430 1441)" fill="#a9cf94" opacity="0.6"/>
<ellipse cx="1983" cy="810" rx="4.3" ry="2.9" transform="rotate(110 1983 810)" fill="#a9cf94" opacity="0.6"/>
<ellipse cx="2278" cy="483" rx="4.6" ry="2.9" transform="rotate(65 2278 483)" fill="#a9cf94" opacity="0.6"/>
<ellipse cx="2533" cy="903" rx="3.9" ry="2.7" transform="rotate(148 2533 903)" fill="#a9cf94" opacity="0.6"/>
<ellipse cx="1022" cy="1131" rx="2.2" ry="2.2" transform="rotate(11 1022 1131)" fill="#a9cf94" opacity="0.6"/>
<ellipse cx="2318" cy="312" rx="3.6" ry="1.7" transform="rotate(47 2318 312)" fill="#a9cf94" opacity="0.6"/>
<ellipse cx="2173" cy="1177" rx="8.4" ry="4.8" transform="rotate(99 2173 1177)" fill="#a9cf94" opacity="0.6"/>
<ellipse cx="2551" cy="225" rx="8.5" ry="3.0" transform="rotate(35 2551 225)" fill="#a9cf94" opacity="0.6"/>
<ellipse cx="2202" cy="1386" rx="4.7" ry="1.8" transform="rotate(157 2202 1386)" fill="#a9cf94" opacity="0.6"/>
<ellipse cx="2213" cy="991" rx="8.8" ry="1.6" transform="rotate(10 2213 991)" fill="#a9cf94" opacity="0.6"/>
<ellipse cx="949" cy="123" rx="7.0" ry="3.7" transform="rotate(20 949 123)" fill="#a9cf94" opacity="0.6"/>
<ellipse cx="1025" cy="363" rx="6.3" ry="3.9" transform="rotate(175 1025 363)" fill="#a9cf94" opacity="0.6"/>
<ellipse cx="1424" cy="1567" rx="5.0" ry="2.9" transform="rotate(46 1424 1567)" fill="#a9cf94" opacity="0.6"/>
<ellipse cx="1167" cy="1561" rx="9.0" ry="4.0" transform="rotate(32 1167 1561)" fill="#a9cf94" opacity="0.6"/>
<ellipse cx="1061" cy="320" rx="4.5" ry="4.1" transform="rotate(11 1061 320)" fill="#a9cf94" opacity="0.6"/>
<ellipse cx="1765" cy="1117" rx="2.2" ry="3.0" transform="rotate(142 1765 1117)" fill="#a9cf94" opacity="0.6"/>
<ellipse cx="1856" cy="771" rx="8.2" ry="3.6" transform="rotate(61 1856 771)" fill="#a9cf94" opacity="0.6"/>
<ellipse cx="1495" cy="1514" rx="8.0" ry="4.7" transform="rotate(101 1495 1514)" fill="#a9cf94" opacity="0.6"/>
<ellipse cx="986" cy="354" rx="4.7" ry="3.9" transform="rotate(1 986 354)" fill="#a9cf94" opacity="0.6"/>
<ellipse cx="2311" cy="1276" rx="5.6" ry="1.5" transform="rotate(144 2311 1276)" fill="#a9cf94" opacity="0.6"/>
<ellipse cx="1532" cy="1100" rx="6.0" ry="4.0" transform="rotate(74 1532 1100)" fill="#a9cf94" opacity="0.6"/>
<ellipse cx="2628" cy="1532" rx="8.5" ry="3.7" transform="rotate(57 2628 1532)" fill="#a9cf94" opacity="0.6"/>
<ellipse cx="1456" cy="496" rx="8.3" ry="4.3" transform="rotate(142 1456 496)" fill="#a9cf94" opacity="0.6"/>
<ellipse cx="2349" cy="1585" rx="6.8" ry="2.6" transform="rotate(136 2349 1585)" fill="#a9cf94" opacity="0.6"/>
<ellipse cx="1227" cy="1012" rx="3.1" ry="4.5" transform="rotate(88 1227 1012)" fill="#a9cf94" opacity="0.6"/>
<ellipse cx="1252" cy="1483" rx="2.6" ry="4.8" transform="rotate(136 1252 1483)" fill="#a9cf94" opacity="0.6"/>
<ellipse cx="999" cy="1238" rx="6.0" ry="4.7" transform="rotate(106 999 1238)" fill="#a9cf94" opacity="0.6"/>
<ellipse cx="1558" cy="1498" rx="2.6" ry="4.2" transform="rotate(19 1558 1498)" fill="#a9cf94" opacity="0.6"/>
<ellipse cx="1255" cy="262" rx="8.1" ry="3.0" transform="rotate(131 1255 262)" fill="#a9cf94" opacity="0.6"/>
<ellipse cx="1215" cy="1192" rx="6.5" ry="1.8" transform="rotate(89 1215 1192)" fill="#a9cf94" opacity="0.6"/>
<ellipse cx="2149" cy="414" rx="6.6" ry="2.5" transform="rotate(67 2149 414)" fill="#a9cf94" opacity="0.6"/>
<ellipse cx="2547" cy="1513" rx="9.0" ry="3.0" transform="rotate(103 2547 1513)" fill="#a9cf94" opacity="0.6"/>
<ellipse cx="2323" cy="1235" rx="5.2" ry="4.5" transform="rotate(72 2323 1235)" fill="#a9cf94" opacity="0.6"/>
<ellipse cx="2608" cy="803" rx="2.8" ry="4.1" transform="rotate(26 2608 803)" fill="#a9cf94" opacity="0.6"/>
<ellipse cx="2065" cy="171" rx="8.9" ry="3.4" transform="rotate(133 2065 171)" fill="#a9cf94" opacity="0.6"/>
<ellipse cx="963" cy="1051" rx="4.6" ry="2.4" transform="rotate(147 963 1051)" fill="#a9cf94" opacity="0.6"/>
<ellipse cx="767" cy="811" rx="2.6" ry="4.5" transform="rotate(161 767 811)" fill="#a9cf94" opacity="0.6"/>
<ellipse cx="769" cy="791" rx="5.3" ry="4.0" transform="rotate(131 769 791)" fill="#a9cf94" opacity="0.6"/>
<ellipse cx="1389" cy="1498" rx="3.3" ry="2.0" transform="rotate(147 1389 1498)" fill="#a9cf94" opacity="0.6"/>
<ellipse cx="941" cy="371" rx="5.5" ry="2.7" transform="rotate(29 941 371)" fill="#a9cf94" opacity="0.6"/>
<ellipse cx="2567" cy="805" rx="7.5" ry="2.4" transform="rotate(164 2567 805)" fill="#a9cf94" opacity="0.6"/>
<ellipse cx="1144" cy="1458" rx="6.3" ry="4.9" transform="rotate(139 1144 1458)" fill="#a9cf94" opacity="0.6"/>
<ellipse cx="1967" cy="894" rx="8.0" ry="3.1" transform="rotate(18 1967 894)" fill="#a9cf94" opacity="0.6"/>
<ellipse cx="2535" cy="1306" rx="6.8" ry="4.1" transform="rotate(42 2535 1306)" fill="#a9cf94" opacity="0.6"/>
<ellipse cx="1630" cy="1332" rx="8.7" ry="4.7" transform="rotate(29 1630 1332)" fill="#a9cf94" opacity="0.6"/>
<ellipse cx="2073" cy="926" rx="4.8" ry="2.1" transform="rotate(25 2073 926)" fill="#a9cf94" opacity="0.6"/>
<ellipse cx="1644" cy="834" rx="3.9" ry="2.8" transform="rotate(100 1644 834)" fill="#a9cf94" opacity="0.6"/>
<ellipse cx="2230" cy="979" rx="3.1" ry="4.6" transform="rotate(66 2230 979)" fill="#a9cf94" opacity="0.6"/>
<ellipse cx="2627" cy="1571" rx="3.0" ry="3.5" transform="rotate(174 2627 1571)" fill="#a9cf94" opacity="0.6"/>
<ellipse cx="1473" cy="916" rx="4.2" ry="1.6" transform="rotate(37 1473 916)" fill="#a9cf94" opacity="0.6"/>
<ellipse cx="949" cy="519" rx="6.4" ry="3.5" transform="rotate(171 949 519)" fill="#a9cf94" opacity="0.6"/>
<ellipse cx="2076" cy="637" rx="8.6" ry="3.7" transform="rotate(98 2076 637)" fill="#a9cf94" opacity="0.6"/>
<ellipse cx="2432" cy="1101" rx="4.5" ry="3.6" transform="rotate(54 2432 1101)" fill="#a9cf94" opacity="0.6"/>
<ellipse cx="2646" cy="459" rx="8.8" ry="1.7" transform="rotate(2 2646 459)" fill="#a9cf94" opacity="0.6"/>
<ellipse cx="1811" cy="401" rx="5.6" ry="1.9" transform="rotate(151 1811 401)" fill="#a9cf94" opacity="0.6"/>
<ellipse cx="2043" cy="1123" rx="8.5" ry="5.0" transform="rotate(122 2043 1123)" fill="#a9cf94" opacity="0.6"/>
<ellipse cx="2132" cy="93" rx="2.3" ry="3.0" transform="rotate(174 2132 93)" fill="#a9cf94" opacity="0.6"/>
<ellipse cx="1329" cy="948" rx="2.1" ry="3.0" transform="rotate(162 1329 948)" fill="#a9cf94" opacity="0.6"/>
<ellipse cx="1884" cy="1334" rx="2.1" ry="2.2" transform="rotate(32 1884 1334)" fill="#a9cf94" opacity="0.6"/>
<ellipse cx="2371" cy="243" rx="8.5" ry="2.4" transform="rotate(158 2371 243)" fill="#a9cf94" opacity="0.6"/>
<ellipse cx="1735" cy="578" rx="8.8" ry="2.9" transform="rotate(126 1735 578)" fill="#a9cf94" opacity="0.6"/>
<ellipse cx="835" cy="1343" rx="8.9" ry="1.9" transform="rotate(134 835 1343)" fill="#a9cf94" opacity="0.6"/>
<ellipse cx="1243" cy="313" rx="4.5" ry="3.8" transform="rotate(172 1243 313)" fill="#a9cf94" opacity="0.6"/>
<ellipse cx="2696" cy="1589" rx="6.4" ry="3.8" transform="rotate(29 2696 1589)" fill="#a9cf94" opacity="0.6"/>
<ellipse cx="2158" cy="922" rx="4.5" ry="4.7" transform="rotate(46 2158 922)" fill="#a9cf94" opacity="0.6"/>
<ellipse cx="984" cy="329" rx="3.0" ry="3.6" transform="rotate(144 984 329)" fill="#a9cf94" opacity="0.6"/>
<ellipse cx="1021" cy="849" rx="6.0" ry="3.5" transform="rotate(74 1021 849)" fill="#a9cf94" opacity="0.6"/>
<ellipse cx="1792" cy="113" rx="2.4" ry="3.0" transform="rotate(43 1792 113)" fill="#a9cf94" opacity="0.6"/>
<ellipse cx="2220" cy="455" rx="7.8" ry="2.3" transform="rotate(17 2220 455)" fill="#a9cf94" opacity="0.6"/>
<ellipse cx="1659" cy="675" rx="4.3" ry="4.2" transform="rotate(40 1659 675)" fill="#a9cf94" opacity="0.6"/>
<ellipse cx="2045" cy="1350" rx="5.2" ry="3.3" transform="rotate(166 2045 1350)" fill="#a9cf94" opacity="0.6"/>
<ellipse cx="1913" cy="363" rx="2.5" ry="1.8" transform="rotate(60 1913 363)" fill="#a9cf94" opacity="0.6"/>
<ellipse cx="878" cy="1069" rx="5.0" ry="2.6" transform="rotate(92 878 1069)" fill="#a9cf94" opacity="0.6"/>
<ellipse cx="2581" cy="459" rx="3.1" ry="2.6" transform="rotate(58 2581 459)" fill="#a9cf94" opacity="0.6"/>
<ellipse cx="2527" cy="1156" rx="5.0" ry="2.1" transform="rotate(8 2527 1156)" fill="#a9cf94" opacity="0.6"/>
<ellipse cx="946" cy="1369" rx="6.5" ry="2.0" transform="rotate(113 946 1369)" fill="#a9cf94" opacity="0.6"/>
<ellipse cx="817" cy="855" rx="4.3" ry="1.9" transform="rotate(134 817 855)" fill="#a9cf94" opacity="0.6"/>
<ellipse cx="2139" cy="861" rx="3.2" ry="3.8" transform="rotate(78 2139 861)" fill="#a9cf94" opacity="0.6"/>
<ellipse cx="2028" cy="228" rx="8.3" ry="1.5" transform="rotate(40 2028 228)" fill="#a9cf94" opacity="0.6"/>
<ellipse cx="1500" cy="389" rx="2.6" ry="3.9" transform="rotate(179 1500 389)" fill="#a9cf94" opacity="0.6"/>
<ellipse cx="1373" cy="492" rx="6.7" ry="2.3" transform="rotate(72 1373 492)" fill="#a9cf94" opacity="0.6"/>
<ellipse cx="2082" cy="740" rx="3.1" ry="1.7" transform="rotate(98 2082 740)" fill="#a9cf94" opacity="0.6"/>
<ellipse cx="2689" cy="1478" rx="2.7" ry="3.3" transform="rotate(88 2689 1478)" fill="#a9cf94" opacity="0.6"/>
<ellipse cx="1090" cy="1101" rx="5.5" ry="4.3" transform="rotate(53 1090 1101)" fill="#a9cf94" opacity="0.6"/>
<ellipse cx="2575" cy="1319" rx="5.3" ry="2.0" transform="rotate(87 2575 1319)" fill="#a9cf94" opacity="0.6"/>
<ellipse cx="955" cy="1125" rx="6.9" ry="3.5" transform="rotate(176 955 1125)" fill="#a9cf94" opacity="0.6"/>
<ellipse cx="791" cy="1169" rx="7.6" ry="1.9" transform="rotate(58 791 1169)" fill="#a9cf94" opacity="0.6"/>
<ellipse cx="808" cy="970" rx="7.1" ry="2.7" transform="rotate(125 808 970)" fill="#a9cf94" opacity="0.6"/>
<ellipse cx="1436" cy="1165" rx="3.9" ry="4.9" transform="rotate(79 1436 1165)" fill="#a9cf94" opacity="0.6"/>
<ellipse cx="707" cy="228" rx="7.1" ry="4.5" transform="rotate(115 707 228)" fill="#a9cf94" opacity="0.6"/>
<ellipse cx="1012" cy="1406" rx="7.0" ry="1.9" transform="rotate(69 1012 1406)" fill="#a9cf94" opacity="0.6"/>
<ellipse cx="2048" cy="95" rx="2.3" ry="2.7" transform="rotate(157 2048 95)" fill="#a9cf94" opacity="0.6"/>
<ellipse cx="2701" cy="570" rx="8.4" ry="4.3" transform="rotate(156 2701 570)" fill="#a9cf94" opacity="0.6"/>
<ellipse cx="1881" cy="1553" rx="6.5" ry="4.8" transform="rotate(102 1881 1553)" fill="#a9cf94" opacity="0.6"/>
<ellipse cx="1095" cy="873" rx="5.4" ry="2.7" transform="rotate(67 1095 873)" fill="#a9cf94" opacity="0.6"/>
<ellipse cx="1725" cy="977" rx="3.6" ry="2.5" transform="rotate(91 1725 977)" fill="#a9cf94" opacity="0.6"/>
<ellipse cx="1712" cy="722" rx="6.6" ry="2.1" transform="rotate(96 1712 722)" fill="#a9cf94" opacity="0.6"/>
<ellipse cx="1254" cy="1252" rx="6.9" ry="4.2" transform="rotate(93 1254 1252)" fill="#a9cf94" opacity="0.6"/>
<ellipse cx="1200" cy="1487" rx="5.6" ry="2.8" transform="rotate(52 1200 1487)" fill="#a9cf94" opacity="0.6"/>
<ellipse cx="1507" cy="1159" rx="7.7" ry="3.2" transform="rotate(132 1507 1159)" fill="#a9cf94" opacity="0.6"/>
<ellipse cx="1128" cy="772" rx="4.5" ry="2.6" transform="rotate(65 1128 772)" fill="#a9cf94" opacity="0.6"/>
<ellipse cx="2215" cy="1197" rx="3.5" ry="2.3" transform="rotate(141 2215 1197)" fill="#a9cf94" opacity="0.6"/>
<ellipse cx="2014" cy="1110" rx="6.4" ry="3.9" transform="rotate(49 2014 1110)" fill="#a9cf94" opacity="0.6"/>
<ellipse cx="822" cy="634" rx="2.2" ry="4.9" transform="rotate(94 822 634)" fill="#a9cf94" opacity="0.6"/>
<ellipse cx="2046" cy="1548" rx="7.6" ry="2.3" transform="rotate(61 2046 1548)" fill="#a9cf94" opacity="0.6"/>
<ellipse cx="918" cy="1291" rx="7.2" ry="3.2" transform="rotate(66 918 1291)" fill="#a9cf94" opacity="0.6"/>
<ellipse cx="1242" cy="825" rx="7.0" ry="4.6" transform="rotate(153 1242 825)" fill="#a9cf94" opacity="0.6"/>
<ellipse cx="2442" cy="753" rx="4.9" ry="2.6" transform="rotate(175 2442 753)" fill="#a9cf94" opacity="0.6"/>
<ellipse cx="1068" cy="328" rx="4.0" ry="4.7" transform="rotate(153 1068 328)" fill="#a9cf94" opacity="0.6"/>
<ellipse cx="1366" cy="1375" rx="8.2" ry="3.0" transform="rotate(35 1366 1375)" fill="#a9cf94" opacity="0.6"/>
<ellipse cx="2252" cy="655" rx="2.8" ry="4.7" transform="rotate(79 2252 655)" fill="#a9cf94" opacity="0.6"/>
<ellipse cx="1498" cy="988" rx="3.8" ry="1.6" transform="rotate(70 1498 988)" fill="#a9cf94" opacity="0.6"/>
<ellipse cx="1462" cy="107" rx="4.6" ry="4.2" transform="rotate(60 1462 107)" fill="#a9cf94" opacity="0.6"/>
<ellipse cx="2065" cy="1032" rx="3.3" ry="1.6" transform="rotate(121 2065 1032)" fill="#a9cf94" opacity="0.6"/>
<ellipse cx="1927" cy="533" rx="3.4" ry="4.5" transform="rotate(164 1927 533)" fill="#a9cf94" opacity="0.6"/>
<ellipse cx="1169" cy="974" rx="6.0" ry="2.6" transform="rotate(7 1169 974)" fill="#a9cf94" opacity="0.6"/>
<ellipse cx="1353" cy="1062" rx="6.2" ry="3.3" transform="rotate(22 1353 1062)" fill="#a9cf94" opacity="0.6"/>
<ellipse cx="1127" cy="560" rx="4.9" ry="2.8" transform="rotate(162 1127 560)" fill="#a9cf94" opacity="0.6"/>
<ellipse cx="933" cy="1578" rx="3.7" ry="4.5" transform="rotate(44 933 1578)" fill="#a9cf94" opacity="0.6"/>
<ellipse cx="1879" cy="659" rx="2.3" ry="4.3" transform="rotate(146 1879 659)" fill="#a9cf94" opacity="0.6"/>
<ellipse cx="1241" cy="1261" rx="5.4" ry="5.0" transform="rotate(10 1241 1261)" fill="#a9cf94" opacity="0.6"/>
<ellipse cx="1464" cy="434" rx="6.4" ry="4.2" transform="rotate(152 1464 434)" fill="#a9cf94" opacity="0.6"/>
<ellipse cx="1801" cy="674" rx="7.6" ry="1.9" transform="rotate(47 1801 674)" fill="#a9cf94" opacity="0.6"/>
<ellipse cx="2211" cy="755" rx="9.0" ry="1.8" transform="rotate(83 2211 755)" fill="#a9cf94" opacity="0.6"/>
<ellipse cx="1127" cy="93" rx="2.7" ry="1.8" transform="rotate(66 1127 93)" fill="#a9cf94" opacity="0.6"/>
<ellipse cx="1569" cy="856" rx="4.0" ry="4.0" transform="rotate(93 1569 856)" fill="#a9cf94" opacity="0.6"/>
<ellipse cx="2672" cy="345" rx="5.6" ry="3.2" transform="rotate(67 2672 345)" fill="#a9cf94" opacity="0.6"/>
<ellipse cx="2429" cy="406" rx="8.1" ry="2.8" transform="rotate(60 2429 406)" fill="#a9cf94" opacity="0.6"/>
<ellipse cx="1935" cy="940" rx="4.0" ry="1.8" transform="rotate(172 1935 940)" fill="#a9cf94" opacity="0.6"/>
<ellipse cx="1442" cy="263" rx="6.6" ry="3.4" transform="rotate(59 1442 263)" fill="#a9cf94" opacity="0.6"/>
<ellipse cx="1360" cy="1365" rx="4.4" ry="3.0" transform="rotate(172 1360 1365)" fill="#a9cf94" opacity="0.6"/>
<ellipse cx="1425" cy="697" rx="3.1" ry="3.8" transform="rotate(120 1425 697)" fill="#a9cf94" opacity="0.6"/>
<ellipse cx="1596" cy="702" rx="3.6" ry="4.3" transform="rotate(82 1596 702)" fill="#a9cf94" opacity="0.6"/>
<ellipse cx="2370" cy="656" rx="7.1" ry="1.6" transform="rotate(40 2370 656)" fill="#a9cf94" opacity="0.6"/>
<ellipse cx="2629" cy="1120" rx="6.7" ry="3.2" transform="rotate(85 2629 1120)" fill="#a9cf94" opacity="0.6"/>
<ellipse cx="1097" cy="351" rx="6.5" ry="3.9" transform="rotate(47 1097 351)" fill="#a9cf94" opacity="0.6"/>
<ellipse cx="1994" cy="295" rx="6.3" ry="2.1" transform="rotate(92 1994 295)" fill="#a9cf94" opacity="0.6"/>
<ellipse cx="1330" cy="921" rx="2.9" ry="3.2" transform="rotate(111 1330 921)" fill="#a9cf94" opacity="0.6"/>
<ellipse cx="971" cy="556" rx="6.8" ry="3.4" transform="rotate(111 971 556)" fill="#a9cf94" opacity="0.6"/>
<ellipse cx="2266" cy="952" rx="3.6" ry="3.0" transform="rotate(149 2266 952)" fill="#a9cf94" opacity="0.6"/>
<ellipse cx="1838" cy="1226" rx="4.5" ry="3.1" transform="rotate(175 1838 1226)" fill="#a9cf94" opacity="0.6"/>
<ellipse cx="2351" cy="1075" rx="2.7" ry="3.6" transform="rotate(6 2351 1075)" fill="#a9cf94" opacity="0.6"/>
<ellipse cx="2575" cy="1557" rx="7.1" ry="2.4" transform="rotate(152 2575 1557)" fill="#a9cf94" opacity="0.6"/>
<ellipse cx="1056" cy="1339" rx="5.6" ry="1.6" transform="rotate(160 1056 1339)" fill="#a9cf94" opacity="0.6"/>
<ellipse cx="1584" cy="1343" rx="6.8" ry="3.4" transform="rotate(155 1584 1343)" fill="#a9cf94" opacity="0.6"/>
<ellipse cx="1108" cy="1446" rx="4.4" ry="1.6" transform="rotate(61 1108 1446)" fill="#a9cf94" opacity="0.6"/>
<ellipse cx="833" cy="199" rx="6.4" ry="1.9" transform="rotate(29 833 199)" fill="#a9cf94" opacity="0.6"/>
<ellipse cx="1288" cy="511" rx="8.4" ry="4.7" transform="rotate(157 1288 511)" fill="#a9cf94" opacity="0.6"/>
<ellipse cx="2688" cy="754" rx="7.6" ry="2.5" transform="rotate(167 2688 754)" fill="#a9cf94" opacity="0.6"/>
<ellipse cx="2328" cy="1195" rx="3.6" ry="1.8" transform="rotate(167 2328 1195)" fill="#a9cf94" opacity="0.6"/>
<ellipse cx="1809" cy="1014" rx="8.0" ry="2.0" transform="rotate(126 1809 1014)" fill="#a9cf94" opacity="0.6"/>
<ellipse cx="1632" cy="1276" rx="5.2" ry="2.2" transform="rotate(172 1632 1276)" fill="#a9cf94" opacity="0.6"/>
<ellipse cx="1265" cy="1214" rx="7.8" ry="2.4" transform="rotate(125 1265 1214)" fill="#a9cf94" opacity="0.6"/>
<ellipse cx="1495" cy="428" rx="3.5" ry="4.8" transform="rotate(66 1495 428)" fill="#a9cf94" opacity="0.6"/>
<ellipse cx="1724" cy="846" rx="2.2" ry="4.1" transform="rotate(134 1724 846)" fill="#a9cf94" opacity="0.6"/>
<ellipse cx="2459" cy="629" rx="3.5" ry="2.7" transform="rotate(132 2459 629)" fill="#a9cf94" opacity="0.6"/>
<ellipse cx="2021" cy="703" rx="5.7" ry="2.0" transform="rotate(165 2021 703)" fill="#a9cf94" opacity="0.6"/>
<ellipse cx="1647" cy="855" rx="7.5" ry="2.2" transform="rotate(130 1647 855)" fill="#a9cf94" opacity="0.6"/>
<ellipse cx="1409" cy="1316" rx="2.7" ry="2.5" transform="rotate(114 1409 1316)" fill="#a9cf94" opacity="0.6"/>
<ellipse cx="1669" cy="659" rx="6.1" ry="2.3" transform="rotate(79 1669 659)" fill="#a9cf94" opacity="0.6"/>
<ellipse cx="704" cy="1295" rx="3.8" ry="4.4" transform="rotate(99 704 1295)" fill="#a9cf94" opacity="0.6"/>
<ellipse cx="1908" cy="1035" rx="2.9" ry="4.2" transform="rotate(53 1908 1035)" fill="#a9cf94" opacity="0.6"/>
<ellipse cx="2432" cy="1277" rx="6.7" ry="4.4" transform="rotate(79 2432 1277)" fill="#a9cf94" opacity="0.6"/>
<ellipse cx="2052" cy="1528" rx="3.3" ry="1.9" transform="rotate(74 2052 1528)" fill="#a9cf94" opacity="0.6"/>
<ellipse cx="1723" cy="315" rx="3.5" ry="4.5" transform="rotate(70 1723 315)" fill="#a9cf94" opacity="0.6"/>
<ellipse cx="999" cy="366" rx="6.0" ry="2.2" transform="rotate(86 999 366)" fill="#a9cf94" opacity="0.6"/>
<ellipse cx="1780" cy="753" rx="5.5" ry="4.4" transform="rotate(3 1780 753)" fill="#a9cf94" opacity="0.6"/>
<ellipse cx="2567" cy="391" rx="2.3" ry="4.2" transform="rotate(103 2567 391)" fill="#a9cf94" opacity="0.6"/>
<ellipse cx="1780" cy="418" rx="7.5" ry="2.6" transform="rotate(131 1780 418)" fill="#a9cf94" opacity="0.6"/>
<ellipse cx="1158" cy="954" rx="6.5" ry="2.8" transform="rotate(86 1158 954)" fill="#a9cf94" opacity="0.6"/>
<ellipse cx="831" cy="1061" rx="6.8" ry="2.0" transform="rotate(99 831 1061)" fill="#a9cf94" opacity="0.6"/>
<ellipse cx="2172" cy="243" rx="7.9" ry="4.5" transform="rotate(9 2172 243)" fill="#a9cf94" opacity="0.6"/>
<ellipse cx="1199" cy="217" rx="3.8" ry="1.8" transform="rotate(88 1199 217)" fill="#a9cf94" opacity="0.6"/>
<ellipse cx="1203" cy="543" rx="5.2" ry="2.8" transform="rotate(142 1203 543)" fill="#a9cf94" opacity="0.6"/>
<ellipse cx="2151" cy="262" rx="3.6" ry="1.5" transform="rotate(59 2151 262)" fill="#a9cf94" opacity="0.6"/>
<ellipse cx="917" cy="1142" rx="7.5" ry="5.0" transform="rotate(38 917 1142)" fill="#a9cf94" opacity="0.6"/>
<ellipse cx="774" cy="1232" rx="4.9" ry="4.8" transform="rotate(71 774 1232)" fill="#a9cf94" opacity="0.6"/>
<ellipse cx="1327" cy="200" rx="8.6" ry="3.3" transform="rotate(79 1327 200)" fill="#a9cf94" opacity="0.6"/>
<ellipse cx="1578" cy="1250" rx="7.8" ry="3.2" transform="rotate(32 1578 1250)" fill="#a9cf94" opacity="0.6"/>
<ellipse cx="1516" cy="1435" rx="4.9" ry="3.8" transform="rotate(101 1516 1435)" fill="#a9cf94" opacity="0.6"/>
<ellipse cx="1626" cy="957" rx="3.7" ry="3.5" transform="rotate(156 1626 957)" fill="#a9cf94" opacity="0.6"/>
<ellipse cx="860" cy="647" rx="8.2" ry="4.9" transform="rotate(2 860 647)" fill="#a9cf94" opacity="0.6"/>
<ellipse cx="1959" cy="1044" rx="7.9" ry="3.1" transform="rotate(24 1959 1044)" fill="#a9cf94" opacity="0.6"/>
<ellipse cx="1303" cy="1165" rx="7.1" ry="2.2" transform="rotate(116 1303 1165)" fill="#a9cf94" opacity="0.6"/>
<ellipse cx="2019" cy="1083" rx="2.2" ry="3.0" transform="rotate(58 2019 1083)" fill="#a9cf94" opacity="0.6"/>
<ellipse cx="1899" cy="598" rx="2.9" ry="3.8" transform="rotate(52 1899 598)" fill="#a9cf94" opacity="0.6"/>
<ellipse cx="2288" cy="551" rx="5.8" ry="4.3" transform="rotate(21 2288 551)" fill="#a9cf94" opacity="0.6"/>
<ellipse cx="2168" cy="193" rx="8.6" ry="1.6" transform="rotate(130 2168 193)" fill="#a9cf94" opacity="0.6"/>
<ellipse cx="1440" cy="361" rx="4.8" ry="3.3" transform="rotate(75 1440 361)" fill="#a9cf94" opacity="0.6"/>
<ellipse cx="946" cy="879" rx="4.1" ry="4.9" transform="rotate(69 946 879)" fill="#a9cf94" opacity="0.6"/>
<ellipse cx="1574" cy="434" rx="8.8" ry="2.6" transform="rotate(116 1574 434)" fill="#a9cf94" opacity="0.6"/>
<ellipse cx="2372" cy="683" rx="7.3" ry="2.5" transform="rotate(20 2372 683)" fill="#a9cf94" opacity="0.6"/>
<ellipse cx="785" cy="767" rx="8.1" ry="2.2" transform="rotate(79 785 767)" fill="#a9cf94" opacity="0.6"/>
<ellipse cx="2232" cy="507" rx="3.1" ry="3.3" transform="rotate(77 2232 507)" fill="#a9cf94" opacity="0.6"/>
<ellipse cx="2584" cy="1444" rx="3.7" ry="3.5" transform="rotate(75 2584 1444)" fill="#a9cf94" opacity="0.6"/>
<ellipse cx="768" cy="761" rx="8.4" ry="2.6" transform="rotate(106 768 761)" fill="#a9cf94" opacity="0.6"/>
<ellipse cx="2126" cy="185" rx="8.5" ry="1.9" transform="rotate(54 2126 185)" fill="#a9cf94" opacity="0.6"/>
<ellipse cx="2137" cy="119" rx="4.6" ry="1.9" transform="rotate(85 2137 119)" fill="#a9cf94" opacity="0.6"/>
<ellipse cx="732" cy="318" rx="3.6" ry="1.8" transform="rotate(16 732 318)" fill="#a9cf94" opacity="0.6"/>
<ellipse cx="1091" cy="871" rx="3.0" ry="4.4" transform="rotate(75 1091 871)" fill="#a9cf94" opacity="0.6"/>
<ellipse cx="1206" cy="454" rx="7.9" ry="1.7" transform="rotate(134 1206 454)" fill="#a9cf94" opacity="0.6"/>
<ellipse cx="896" cy="1515" rx="4.9" ry="3.6" transform="rotate(155 896 1515)" fill="#a9cf94" opacity="0.6"/>
<ellipse cx="902" cy="187" rx="6.9" ry="3.6" transform="rotate(130 902 187)" fill="#a9cf94" opacity="0.6"/>
<ellipse cx="1258" cy="840" rx="3.3" ry="3.0" transform="rotate(51 1258 840)" fill="#a9cf94" opacity="0.6"/>
<ellipse cx="1876" cy="541" rx="3.9" ry="3.7" transform="rotate(15 1876 541)" fill="#a9cf94" opacity="0.6"/>
<ellipse cx="2309" cy="838" rx="3.6" ry="1.9" transform="rotate(92 2309 838)" fill="#a9cf94" opacity="0.6"/>
<ellipse cx="1712" cy="1176" rx="4.6" ry="2.9" transform="rotate(161 1712 1176)" fill="#a9cf94" opacity="0.6"/>
<ellipse cx="1250" cy="1570" rx="8.2" ry="5.0" transform="rotate(170 1250 1570)" fill="#a9cf94" opacity="0.6"/>
<ellipse cx="1216" cy="1319" rx="6.3" ry="2.2" transform="rotate(180 1216 1319)" fill="#a9cf94" opacity="0.6"/>
<ellipse cx="2001" cy="1312" rx="5.9" ry="1.8" transform="rotate(155 2001 1312)" fill="#a9cf94" opacity="0.6"/>
<ellipse cx="1052" cy="481" rx="6.3" ry="2.2" transform="rotate(83 1052 481)" fill="#a9cf94" opacity="0.6"/>
<ellipse cx="2133" cy="235" rx="6.6" ry="1.9" transform="rotate(86 2133 235)" fill="#a9cf94" opacity="0.6"/>
<ellipse cx="2004" cy="1127" rx="2.3" ry="2.2" transform="rotate(173 2004 1127)" fill="#a9cf94" opacity="0.6"/>
<ellipse cx="1485" cy="731" rx="4.6" ry="3.9" transform="rotate(133 1485 731)" fill="#a9cf94" opacity="0.6"/>
<ellipse cx="2006" cy="697" rx="6.0" ry="3.3" transform="rotate(34 2006 697)" fill="#a9cf94" opacity="0.6"/>
<ellipse cx="2606" cy="1546" rx="7.4" ry="5.0" transform="rotate(84 2606 1546)" fill="#a9cf94" opacity="0.6"/>
<ellipse cx="2385" cy="453" rx="7.2" ry="4.0" transform="rotate(169 2385 453)" fill="#a9cf94" opacity="0.6"/>
<ellipse cx="2373" cy="1417" rx="3.9" ry="4.3" transform="rotate(86 2373 1417)" fill="#a9cf94" opacity="0.6"/>
<ellipse cx="1327" cy="646" rx="7.6" ry="4.4" transform="rotate(152 1327 646)" fill="#a9cf94" opacity="0.6"/>
<ellipse cx="2044" cy="347" rx="3.1" ry="3.5" transform="rotate(38 2044 347)" fill="#a9cf94" opacity="0.6"/>
<ellipse cx="1376" cy="245" rx="3.1" ry="4.0" transform="rotate(40 1376 245)" fill="#a9cf94" opacity="0.6"/>
<ellipse cx="2403" cy="587" rx="7.9" ry="2.6" transform="rotate(48 2403 587)" fill="#a9cf94" opacity="0.6"/>
<ellipse cx="1493" cy="108" rx="5.0" ry="2.8" transform="rotate(2 1493 108)" fill="#a9cf94" opacity="0.6"/>
<ellipse cx="2430" cy="656" rx="2.0" ry="4.9" transform="rotate(41 2430 656)" fill="#a9cf94" opacity="0.6"/>
<ellipse cx="1208" cy="127" rx="2.7" ry="4.0" transform="rotate(105 1208 127)" fill="#a9cf94" opacity="0.6"/>
<ellipse cx="1712" cy="461" rx="4.0" ry="4.9" transform="rotate(67 1712 461)" fill="#a9cf94" opacity="0.6"/>
<ellipse cx="2687" cy="1428" rx="2.9" ry="4.5" transform="rotate(4 2687 1428)" fill="#a9cf94" opacity="0.6"/>
<ellipse cx="2128" cy="1312" rx="6.9" ry="3.4" transform="rotate(146 2128 1312)" fill="#a9cf94" opacity="0.6"/>
<ellipse cx="1010" cy="905" rx="3.9" ry="2.9" transform="rotate(34 1010 905)" fill="#a9cf94" opacity="0.6"/>
<ellipse cx="2122" cy="955" rx="7.5" ry="3.7" transform="rotate(108 2122 955)" fill="#a9cf94" opacity="0.6"/>
<ellipse cx="2551" cy="1316" rx="6.0" ry="2.6" transform="rotate(167 2551 1316)" fill="#a9cf94" opacity="0.6"/>
<ellipse cx="1445" cy="244" rx="4.3" ry="4.0" transform="rotate(168 1445 244)" fill="#a9cf94" opacity="0.6"/>
<ellipse cx="1997" cy="1090" rx="8.6" ry="4.2" transform="rotate(80 1997 1090)" fill="#a9cf94" opacity="0.6"/>
<ellipse cx="1627" cy="1236" rx="4.2" ry="1.9" transform="rotate(112 1627 1236)" fill="#a9cf94" opacity="0.6"/>
<ellipse cx="2324" cy="465" rx="6.8" ry="4.6" transform="rotate(23 2324 465)" fill="#a9cf94" opacity="0.6"/>
<ellipse cx="973" cy="834" rx="4.3" ry="4.8" transform="rotate(179 973 834)" fill="#a9cf94" opacity="0.6"/>
<ellipse cx="1595" cy="1287" rx="6.4" ry="2.1" transform="rotate(175 1595 1287)" fill="#a9cf94" opacity="0.6"/>
<ellipse cx="1050" cy="205" rx="5.2" ry="1.6" transform="rotate(87 1050 205)" fill="#a9cf94" opacity="0.6"/>
<ellipse cx="1527" cy="1530" rx="4.9" ry="4.5" transform="rotate(140 1527 1530)" fill="#a9cf94" opacity="0.6"/>
<ellipse cx="1877" cy="449" rx="4.1" ry="3.2" transform="rotate(71 1877 449)" fill="#a9cf94" opacity="0.6"/>
<ellipse cx="1996" cy="853" rx="4.3" ry="3.6" transform="rotate(179 1996 853)" fill="#a9cf94" opacity="0.6"/>
<ellipse cx="1107" cy="597" rx="2.1" ry="1.8" transform="rotate(10 1107 597)" fill="#a9cf94" opacity="0.6"/>
<ellipse cx="1549" cy="1352" rx="6.9" ry="4.9" transform="rotate(151 1549 1352)" fill="#a9cf94" opacity="0.6"/>
<ellipse cx="1876" cy="966" rx="2.1" ry="2.8" transform="rotate(47 1876 966)" fill="#a9cf94" opacity="0.6"/>
<ellipse cx="1946" cy="189" rx="5.8" ry="2.8" transform="rotate(89 1946 189)" fill="#a9cf94" opacity="0.6"/>
<ellipse cx="1512" cy="244" rx="7.1" ry="4.3" transform="rotate(108 1512 244)" fill="#a9cf94" opacity="0.6"/>
<ellipse cx="933" cy="994" rx="8.1" ry="5.0" transform="rotate(137 933 994)" fill="#a9cf94" opacity="0.6"/>
<ellipse cx="792" cy="1416" rx="6.7" ry="2.5" transform="rotate(166 792 1416)" fill="#a9cf94" opacity="0.6"/>
<ellipse cx="2359" cy="1441" rx="3.7" ry="3.5" transform="rotate(68 2359 1441)" fill="#a9cf94" opacity="0.6"/>
<ellipse cx="1294" cy="1239" rx="6.3" ry="2.7" transform="rotate(98 1294 1239)" fill="#a9cf94" opacity="0.6"/>
<ellipse cx="2564" cy="945" rx="8.4" ry="3.5" transform="rotate(179 2564 945)" fill="#a9cf94" opacity="0.6"/>
<ellipse cx="758" cy="784" rx="5.9" ry="4.0" transform="rotate(174 758 784)" fill="#a9cf94" opacity="0.6"/>
<ellipse cx="1952" cy="811" rx="6.4" ry="3.4" transform="rotate(127 1952 811)" fill="#a9cf94" opacity="0.6"/>
<ellipse cx="2601" cy="111" rx="4.2" ry="4.6" transform="rotate(11 2601 111)" fill="#a9cf94" opacity="0.6"/>
<ellipse cx="2287" cy="137" rx="6.5" ry="4.3" transform="rotate(43 2287 137)" fill="#a9cf94" opacity="0.6"/>
<ellipse cx="1465" cy="432" rx="6.9" ry="3.4" transform="rotate(109 1465 432)" fill="#a9cf94" opacity="0.6"/>
<ellipse cx="1354" cy="975" rx="8.7" ry="4.2" transform="rotate(171 1354 975)" fill="#a9cf94" opacity="0.6"/>
<ellipse cx="1196" cy="869" rx="4.7" ry="2.7" transform="rotate(145 1196 869)" fill="#a9cf94" opacity="0.6"/>
<ellipse cx="1051" cy="933" rx="7.4" ry="4.8" transform="rotate(3 1051 933)" fill="#a9cf94" opacity="0.6"/>
<ellipse cx="1244" cy="834" rx="8.6" ry="2.1" transform="rotate(151 1244 834)" fill="#a9cf94" opacity="0.6"/>
<ellipse cx="1498" cy="917" rx="8.5" ry="1.7" transform="rotate(59 1498 917)" fill="#a9cf94" opacity="0.6"/>
<ellipse cx="1013" cy="292" rx="4.1" ry="4.0" transform="rotate(104 1013 292)" fill="#a9cf94" opacity="0.6"/>
<ellipse cx="945" cy="1299" rx="5.6" ry="2.0" transform="rotate(148 945 1299)" fill="#a9cf94" opacity="0.6"/>
<ellipse cx="2348" cy="417" rx="8.6" ry="4.3" transform="rotate(41 2348 417)" fill="#a9cf94" opacity="0.6"/>
<ellipse cx="702" cy="1399" rx="7.8" ry="1.8" transform="rotate(138 702 1399)" fill="#a9cf94" opacity="0.6"/>
<ellipse cx="2252" cy="1046" rx="7.8" ry="4.9" transform="rotate(59 2252 1046)" fill="#a9cf94" opacity="0.6"/>
<ellipse cx="2375" cy="1480" rx="4.2" ry="3.9" transform="rotate(123 2375 1480)" fill="#a9cf94" opacity="0.6"/>
<ellipse cx="2404" cy="945" rx="3.9" ry="2.4" transform="rotate(98 2404 945)" fill="#a9cf94" opacity="0.6"/>
<ellipse cx="972" cy="1387" rx="8.2" ry="2.3" transform="rotate(126 972 1387)" fill="#a9cf94" opacity="0.6"/>
<ellipse cx="2052" cy="274" rx="7.4" ry="4.2" transform="rotate(55 2052 274)" fill="#a9cf94" opacity="0.6"/>
<ellipse cx="897" cy="515" rx="7.4" ry="3.1" transform="rotate(147 897 515)" fill="#a9cf94" opacity="0.6"/>
<ellipse cx="1020" cy="251" rx="4.4" ry="4.6" transform="rotate(29 1020 251)" fill="#a9cf94" opacity="0.6"/>
<ellipse cx="847" cy="1226" rx="2.6" ry="3.8" transform="rotate(15 847 1226)" fill="#a9cf94" opacity="0.6"/>
<ellipse cx="1196" cy="1091" rx="8.1" ry="2.9" transform="rotate(81 1196 1091)" fill="#a9cf94" opacity="0.6"/>
<ellipse cx="762" cy="604" rx="3.7" ry="4.3" transform="rotate(129 762 604)" fill="#a9cf94" opacity="0.6"/>
<ellipse cx="2275" cy="892" rx="6.9" ry="1.9" transform="rotate(69 2275 892)" fill="#a9cf94" opacity="0.6"/>
<ellipse cx="1288" cy="516" rx="7.2" ry="2.2" transform="rotate(59 1288 516)" fill="#a9cf94" opacity="0.6"/>
<ellipse cx="1267" cy="1394" rx="6.5" ry="3.2" transform="rotate(68 1267 1394)" fill="#a9cf94" opacity="0.6"/>
<ellipse cx="2551" cy="1508" rx="5.1" ry="3.5" transform="rotate(155 2551 1508)" fill="#a9cf94" opacity="0.6"/>
<ellipse cx="1215" cy="480" rx="2.7" ry="3.3" transform="rotate(138 1215 480)" fill="#a9cf94" opacity="0.6"/>
<ellipse cx="1014" cy="743" rx="8.9" ry="3.2" transform="rotate(69 1014 743)" fill="#a9cf94" opacity="0.6"/>
<ellipse cx="2386" cy="1436" rx="4.6" ry="1.9" transform="rotate(115 2386 1436)" fill="#a9cf94" opacity="0.6"/>
<ellipse cx="2187" cy="1483" rx="6.6" ry="2.6" transform="rotate(93 2187 1483)" fill="#a9cf94" opacity="0.6"/>
<ellipse cx="1278" cy="763" rx="5.3" ry="4.7" transform="rotate(163 1278 763)" fill="#a9cf94" opacity="0.6"/>
<ellipse cx="2560" cy="811" rx="8.8" ry="2.0" transform="rotate(166 2560 811)" fill="#a9cf94" opacity="0.6"/>
<ellipse cx="1986" cy="1407" rx="4.9" ry="5.0" transform="rotate(5 1986 1407)" fill="#a9cf94" opacity="0.6"/>
<ellipse cx="2402" cy="1327" rx="4.6" ry="4.4" transform="rotate(38 2402 1327)" fill="#a9cf94" opacity="0.6"/>
<ellipse cx="2211" cy="797" rx="4.9" ry="2.2" transform="rotate(144 2211 797)" fill="#a9cf94" opacity="0.6"/>
<ellipse cx="2168" cy="224" rx="8.8" ry="2.3" transform="rotate(68 2168 224)" fill="#a9cf94" opacity="0.6"/>
<ellipse cx="1533" cy="960" rx="8.2" ry="4.8" transform="rotate(114 1533 960)" fill="#a9cf94" opacity="0.6"/>
<ellipse cx="1434" cy="252" rx="2.5" ry="3.3" transform="rotate(105 1434 252)" fill="#a9cf94" opacity="0.6"/>
<ellipse cx="1598" cy="1573" rx="4.9" ry="2.7" transform="rotate(75 1598 1573)" fill="#a9cf94" opacity="0.6"/>
<ellipse cx="1045" cy="1507" rx="6.1" ry="3.4" transform="rotate(77 1045 1507)" fill="#a9cf94" opacity="0.6"/>
<ellipse cx="1202" cy="566" rx="5.5" ry="3.1" transform="rotate(176 1202 566)" fill="#a9cf94" opacity="0.6"/>
<ellipse cx="1831" cy="402" rx="2.4" ry="2.1" transform="rotate(62 1831 402)" fill="#a9cf94" opacity="0.6"/>
<ellipse cx="2271" cy="1432" rx="3.7" ry="4.2" transform="rotate(79 2271 1432)" fill="#a9cf94" opacity="0.6"/>
<ellipse cx="1779" cy="894" rx="2.3" ry="1.7" transform="rotate(120 1779 894)" fill="#a9cf94" opacity="0.6"/>
<ellipse cx="2084" cy="664" rx="8.4" ry="4.4" transform="rotate(54 2084 664)" fill="#a9cf94" opacity="0.6"/>
<ellipse cx="834" cy="925" rx="6.6" ry="2.3" transform="rotate(8 834 925)" fill="#a9cf94" opacity="0.6"/>
<ellipse cx="1678" cy="142" rx="7.2" ry="3.7" transform="rotate(50 1678 142)" fill="#a9cf94" opacity="0.6"/>
<ellipse cx="1595" cy="441" rx="3.3" ry="2.1" transform="rotate(147 1595 441)" fill="#a9cf94" opacity="0.6"/>
<ellipse cx="1610" cy="1170" rx="4.4" ry="4.3" transform="rotate(107 1610 1170)" fill="#a9cf94" opacity="0.6"/>
<ellipse cx="2013" cy="683" rx="5.9" ry="2.2" transform="rotate(175 2013 683)" fill="#a9cf94" opacity="0.6"/>
<ellipse cx="2050" cy="894" rx="6.5" ry="1.9" transform="rotate(60 2050 894)" fill="#a9cf94" opacity="0.6"/>
<ellipse cx="1163" cy="1362" rx="2.1" ry="3.1" transform="rotate(156 1163 1362)" fill="#a9cf94" opacity="0.6"/>
<ellipse cx="2271" cy="1175" rx="4.1" ry="2.3" transform="rotate(127 2271 1175)" fill="#a9cf94" opacity="0.6"/>
<ellipse cx="1300" cy="1181" rx="4.4" ry="4.2" transform="rotate(103 1300 1181)" fill="#a9cf94" opacity="0.6"/>
<ellipse cx="2337" cy="1577" rx="4.7" ry="5.0" transform="rotate(2 2337 1577)" fill="#a9cf94" opacity="0.6"/>
<ellipse cx="2462" cy="135" rx="5.8" ry="2.9" transform="rotate(139 2462 135)" fill="#a9cf94" opacity="0.6"/>
<ellipse cx="1333" cy="404" rx="7.5" ry="3.4" transform="rotate(136 1333 404)" fill="#a9cf94" opacity="0.6"/>
<ellipse cx="1683" cy="145" rx="7.4" ry="2.3" transform="rotate(85 1683 145)" fill="#a9cf94" opacity="0.6"/>
<ellipse cx="701" cy="481" rx="6.7" ry="4.2" transform="rotate(115 701 481)" fill="#a9cf94" opacity="0.6"/>
<ellipse cx="1590" cy="1196" rx="6.7" ry="2.2" transform="rotate(96 1590 1196)" fill="#a9cf94" opacity="0.6"/>
<ellipse cx="1901" cy="1190" rx="3.4" ry="2.6" transform="rotate(62 1901 1190)" fill="#a9cf94" opacity="0.6"/>
<ellipse cx="893" cy="616" rx="7.1" ry="3.5" transform="rotate(31 893 616)" fill="#a9cf94" opacity="0.6"/>
<ellipse cx="2169" cy="266" rx="7.3" ry="2.0" transform="rotate(17 2169 266)" fill="#a9cf94" opacity="0.6"/>
<ellipse cx="1205" cy="867" rx="3.9" ry="4.6" transform="rotate(169 1205 867)" fill="#a9cf94" opacity="0.6"/>
<ellipse cx="1269" cy="1222" rx="6.9" ry="3.5" transform="rotate(46 1269 1222)" fill="#a9cf94" opacity="0.6"/>
<ellipse cx="2607" cy="1533" rx="2.1" ry="2.7" transform="rotate(58 2607 1533)" fill="#a9cf94" opacity="0.6"/>
<ellipse cx="1099" cy="739" rx="8.3" ry="1.6" transform="rotate(150 1099 739)" fill="#a9cf94" opacity="0.6"/>
<ellipse cx="1320" cy="110" rx="8.3" ry="2.5" transform="rotate(38 1320 110)" fill="#a9cf94" opacity="0.6"/>
<ellipse cx="934" cy="644" rx="2.8" ry="2.1" transform="rotate(45 934 644)" fill="#a9cf94" opacity="0.6"/>
<ellipse cx="1861" cy="763" rx="4.1" ry="3.3" transform="rotate(139 1861 763)" fill="#a9cf94" opacity="0.6"/>
<ellipse cx="2154" cy="608" rx="8.4" ry="4.3" transform="rotate(101 2154 608)" fill="#a9cf94" opacity="0.6"/>
<ellipse cx="1655" cy="587" rx="2.9" ry="4.6" transform="rotate(109 1655 587)" fill="#a9cf94" opacity="0.6"/>
<ellipse cx="898" cy="1487" rx="8.2" ry="1.6" transform="rotate(126 898 1487)" fill="#a9cf94" opacity="0.6"/>
<ellipse cx="1178" cy="898" rx="7.8" ry="2.7" transform="rotate(90 1178 898)" fill="#a9cf94" opacity="0.6"/>
<ellipse cx="2036" cy="380" rx="6.4" ry="3.0" transform="rotate(177 2036 380)" fill="#a9cf94" opacity="0.6"/>
<ellipse cx="1077" cy="1163" rx="2.3" ry="2.5" transform="rotate(21 1077 1163)" fill="#a9cf94" opacity="0.6"/>
<ellipse cx="999" cy="887" rx="3.2" ry="4.3" transform="rotate(17 999 887)" fill="#a9cf94" opacity="0.6"/>
<ellipse cx="1951" cy="1389" rx="2.9" ry="2.3" transform="rotate(138 1951 1389)" fill="#a9cf94" opacity="0.6"/>
<ellipse cx="1644" cy="1497" rx="4.4" ry="2.9" transform="rotate(172 1644 1497)" fill="#a9cf94" opacity="0.6"/>
<ellipse cx="1390" cy="1548" rx="8.2" ry="2.2" transform="rotate(98 1390 1548)" fill="#a9cf94" opacity="0.6"/>
<ellipse cx="2590" cy="267" rx="7.9" ry="4.2" transform="rotate(135 2590 267)" fill="#a9cf94" opacity="0.6"/>
<ellipse cx="1906" cy="241" rx="8.7" ry="1.9" transform="rotate(141 1906 241)" fill="#a9cf94" opacity="0.6"/>
<ellipse cx="2152" cy="569" rx="6.8" ry="2.9" transform="rotate(135 2152 569)" fill="#a9cf94" opacity="0.6"/>
<ellipse cx="787" cy="1499" rx="4.7" ry="4.3" transform="rotate(85 787 1499)" fill="#a9cf94" opacity="0.6"/>
<ellipse cx="2331" cy="544" rx="5.8" ry="1.6" transform="rotate(88 2331 544)" fill="#a9cf94" opacity="0.6"/>
<ellipse cx="859" cy="1387" rx="6.7" ry="3.0" transform="rotate(175 859 1387)" fill="#a9cf94" opacity="0.6"/>
<ellipse cx="2601" cy="1534" rx="2.6" ry="4.0" transform="rotate(131 2601 1534)" fill="#a9cf94" opacity="0.6"/>
<ellipse cx="1917" cy="114" rx="8.5" ry="3.0" transform="rotate(107 1917 114)" fill="#a9cf94" opacity="0.6"/>
<ellipse cx="2336" cy="505" rx="2.2" ry="4.7" transform="rotate(49 2336 505)" fill="#a9cf94" opacity="0.6"/>
<ellipse cx="783" cy="296" rx="9.0" ry="4.1" transform="rotate(38 783 296)" fill="#a9cf94" opacity="0.6"/>
<ellipse cx="994" cy="1445" rx="6.7" ry="3.5" transform="rotate(24 994 1445)" fill="#a9cf94" opacity="0.6"/>
<ellipse cx="1530" cy="1518" rx="2.0" ry="3.0" transform="rotate(10 1530 1518)" fill="#a9cf94" opacity="0.6"/>
<ellipse cx="2703" cy="248" rx="8.7" ry="4.4" transform="rotate(132 2703 248)" fill="#a9cf94" opacity="0.6"/>
<ellipse cx="785" cy="1139" rx="5.5" ry="3.2" transform="rotate(26 785 1139)" fill="#a9cf94" opacity="0.6"/>
<ellipse cx="1729" cy="1300" rx="2.9" ry="4.6" transform="rotate(76 1729 1300)" fill="#a9cf94" opacity="0.6"/>
<ellipse cx="1234" cy="451" rx="5.2" ry="3.8" transform="rotate(103 1234 451)" fill="#a9cf94" opacity="0.6"/>
<ellipse cx="2487" cy="862" rx="5.6" ry="5.0" transform="rotate(39 2487 862)" fill="#a9cf94" opacity="0.6"/>
<ellipse cx="733" cy="586" rx="4.2" ry="1.9" transform="rotate(75 733 586)" fill="#a9cf94" opacity="0.6"/>
<ellipse cx="770" cy="1480" rx="5.4" ry="4.6" transform="rotate(126 770 1480)" fill="#a9cf94" opacity="0.6"/>
<ellipse cx="2166" cy="1235" rx="4.1" ry="4.1" transform="rotate(37 2166 1235)" fill="#a9cf94" opacity="0.6"/>
<ellipse cx="1814" cy="988" rx="7.4" ry="2.1" transform="rotate(62 1814 988)" fill="#a9cf94" opacity="0.6"/>
<ellipse cx="2355" cy="1304" rx="8.8" ry="1.9" transform="rotate(38 2355 1304)" fill="#a9cf94" opacity="0.6"/>
<ellipse cx="914" cy="1182" rx="7.2" ry="3.8" transform="rotate(140 914 1182)" fill="#a9cf94" opacity="0.6"/>
<ellipse cx="1736" cy="938" rx="8.4" ry="3.8" transform="rotate(118 1736 938)" fill="#a9cf94" opacity="0.6"/>
<ellipse cx="1882" cy="835" rx="7.3" ry="3.5" transform="rotate(23 1882 835)" fill="#a9cf94" opacity="0.6"/>
<ellipse cx="1555" cy="726" rx="5.0" ry="3.5" transform="rotate(65 1555 726)" fill="#a9cf94" opacity="0.6"/>
<ellipse cx="1485" cy="734" rx="4.6" ry="4.9" transform="rotate(16 1485 734)" fill="#a9cf94" opacity="0.6"/>
<ellipse cx="734" cy="1179" rx="4.8" ry="3.1" transform="rotate(107 734 1179)" fill="#a9cf94" opacity="0.6"/>
<ellipse cx="1437" cy="451" rx="2.1" ry="4.6" transform="rotate(169 1437 451)" fill="#a9cf94" opacity="0.6"/>
<ellipse cx="1274" cy="792" rx="4.3" ry="1.7" transform="rotate(161 1274 792)" fill="#a9cf94" opacity="0.6"/>
<ellipse cx="2380" cy="454" rx="3.8" ry="3.9" transform="rotate(143 2380 454)" fill="#a9cf94" opacity="0.6"/>
<ellipse cx="1643" cy="675" rx="3.6" ry="4.3" transform="rotate(155 1643 675)" fill="#a9cf94" opacity="0.6"/>
<ellipse cx="2423" cy="263" rx="6.2" ry="4.9" transform="rotate(129 2423 263)" fill="#a9cf94" opacity="0.6"/>
<ellipse cx="1622" cy="309" rx="2.4" ry="4.1" transform="rotate(12 1622 309)" fill="#a9cf94" opacity="0.6"/>
<ellipse cx="2324" cy="1094" rx="5.3" ry="4.6" transform="rotate(168 2324 1094)" fill="#a9cf94" opacity="0.6"/>
<ellipse cx="1938" cy="240" rx="6.1" ry="3.0" transform="rotate(45 1938 240)" fill="#a9cf94" opacity="0.6"/>
<ellipse cx="2565" cy="1192" rx="2.9" ry="2.3" transform="rotate(62 2565 1192)" fill="#a9cf94" opacity="0.6"/>
<ellipse cx="1850" cy="580" rx="5.1" ry="4.3" transform="rotate(33 1850 580)" fill="#a9cf94" opacity="0.6"/>
<ellipse cx="2146" cy="589" rx="8.6" ry="4.8" transform="rotate(59 2146 589)" fill="#a9cf94" opacity="0.6"/>
<ellipse cx="1917" cy="257" rx="4.9" ry="3.7" transform="rotate(115 1917 257)" fill="#a9cf94" opacity="0.6"/>
<ellipse cx="1388" cy="141" rx="2.9" ry="3.5" transform="rotate(31 1388 141)" fill="#a9cf94" opacity="0.6"/>
<ellipse cx="1315" cy="1023" rx="8.3" ry="3.3" transform="rotate(46 1315 1023)" fill="#a9cf94" opacity="0.6"/>
<ellipse cx="1876" cy="506" rx="7.5" ry="2.0" transform="rotate(47 1876 506)" fill="#a9cf94" opacity="0.6"/>
<ellipse cx="1581" cy="1460" rx="3.2" ry="2.2" transform="rotate(24 1581 1460)" fill="#a9cf94" opacity="0.6"/>
<ellipse cx="1129" cy="591" rx="4.8" ry="4.2" transform="rotate(73 1129 591)" fill="#a9cf94" opacity="0.6"/>
<ellipse cx="1654" cy="688" rx="7.4" ry="4.7" transform="rotate(77 1654 688)" fill="#a9cf94" opacity="0.6"/>
<ellipse cx="2550" cy="468" rx="8.8" ry="3.3" transform="rotate(123 2550 468)" fill="#a9cf94" opacity="0.6"/>
<ellipse cx="1466" cy="500" rx="2.9" ry="4.6" transform="rotate(65 1466 500)" fill="#a9cf94" opacity="0.6"/>
<ellipse cx="2103" cy="785" rx="5.7" ry="2.2" transform="rotate(32 2103 785)" fill="#a9cf94" opacity="0.6"/>
<ellipse cx="1375" cy="1118" rx="5.8" ry="1.5" transform="rotate(128 1375 1118)" fill="#a9cf94" opacity="0.6"/>
<ellipse cx="1570" cy="194" rx="3.8" ry="2.2" transform="rotate(148 1570 194)" fill="#a9cf94" opacity="0.6"/>
<ellipse cx="1804" cy="583" rx="3.7" ry="2.5" transform="rotate(50 1804 583)" fill="#a9cf94" opacity="0.6"/>
<ellipse cx="1395" cy="1283" rx="7.5" ry="3.9" transform="rotate(159 1395 1283)" fill="#a9cf94" opacity="0.6"/>
<ellipse cx="2013" cy="261" rx="2.3" ry="2.1" transform="rotate(46 2013 261)" fill="#a9cf94" opacity="0.6"/>
<ellipse cx="1761" cy="1330" rx="6.1" ry="3.0" transform="rotate(44 1761 1330)" fill="#a9cf94" opacity="0.6"/>
<ellipse cx="2671" cy="1227" rx="4.4" ry="1.7" transform="rotate(177 2671 1227)" fill="#a9cf94" opacity="0.6"/>
<ellipse cx="1214" cy="1369" rx="2.8" ry="3.8" transform="rotate(64 1214 1369)" fill="#a9cf94" opacity="0.6"/>
<ellipse cx="2485" cy="538" rx="2.7" ry="2.2" transform="rotate(145 2485 538)" fill="#a9cf94" opacity="0.6"/>
<ellipse cx="2665" cy="1060" rx="6.8" ry="2.5" transform="rotate(49 2665 1060)" fill="#a9cf94" opacity="0.6"/>
<ellipse cx="874" cy="1576" rx="2.3" ry="3.6" transform="rotate(63 874 1576)" fill="#a9cf94" opacity="0.6"/>
<ellipse cx="1075" cy="748" rx="8.5" ry="2.4" transform="rotate(30 1075 748)" fill="#a9cf94" opacity="0.6"/>
<ellipse cx="1964" cy="1081" rx="5.6" ry="2.1" transform="rotate(157 1964 1081)" fill="#a9cf94" opacity="0.6"/>
<ellipse cx="923" cy="353" rx="3.7" ry="3.3" transform="rotate(86 923 353)" fill="#a9cf94" opacity="0.6"/>
<ellipse cx="1812" cy="1187" rx="8.3" ry="3.1" transform="rotate(8 1812 1187)" fill="#a9cf94" opacity="0.6"/>
<ellipse cx="2368" cy="118" rx="4.2" ry="2.0" transform="rotate(108 2368 118)" fill="#a9cf94" opacity="0.6"/>
<ellipse cx="2270" cy="284" rx="4.1" ry="4.5" transform="rotate(124 2270 284)" fill="#a9cf94" opacity="0.6"/>
<ellipse cx="918" cy="1126" rx="7.6" ry="2.9" transform="rotate(28 918 1126)" fill="#a9cf94" opacity="0.6"/>
<ellipse cx="2023" cy="572" rx="2.9" ry="2.1" transform="rotate(72 2023 572)" fill="#a9cf94" opacity="0.6"/>
<ellipse cx="955" cy="671" rx="5.9" ry="3.4" transform="rotate(73 955 671)" fill="#a9cf94" opacity="0.6"/>
<ellipse cx="2307" cy="223" rx="4.3" ry="4.8" transform="rotate(156 2307 223)" fill="#a9cf94" opacity="0.6"/>
<ellipse cx="2549" cy="1245" rx="5.8" ry="4.3" transform="rotate(103 2549 1245)" fill="#a9cf94" opacity="0.6"/>
<ellipse cx="936" cy="475" rx="2.7" ry="4.6" transform="rotate(58 936 475)" fill="#a9cf94" opacity="0.6"/>
<ellipse cx="1518" cy="902" rx="2.7" ry="4.0" transform="rotate(143 1518 902)" fill="#a9cf94" opacity="0.6"/>
<ellipse cx="2299" cy="1419" rx="4.2" ry="2.0" transform="rotate(137 2299 1419)" fill="#a9cf94" opacity="0.6"/>
<ellipse cx="2092" cy="651" rx="4.4" ry="2.0" transform="rotate(150 2092 651)" fill="#a9cf94" opacity="0.6"/>
<ellipse cx="1625" cy="1315" rx="4.4" ry="2.6" transform="rotate(92 1625 1315)" fill="#a9cf94" opacity="0.6"/>
<ellipse cx="2197" cy="1422" rx="4.5" ry="3.9" transform="rotate(73 2197 1422)" fill="#a9cf94" opacity="0.6"/>
<ellipse cx="2430" cy="1237" rx="5.9" ry="2.8" transform="rotate(49 2430 1237)" fill="#a9cf94" opacity="0.6"/>
<ellipse cx="2477" cy="1299" rx="4.1" ry="1.8" transform="rotate(35 2477 1299)" fill="#a9cf94" opacity="0.6"/>
<ellipse cx="2636" cy="149" rx="7.7" ry="3.4" transform="rotate(100 2636 149)" fill="#a9cf94" opacity="0.6"/>
<ellipse cx="1783" cy="709" rx="5.9" ry="1.8" transform="rotate(166 1783 709)" fill="#a9cf94" opacity="0.6"/>
<ellipse cx="907" cy="299" rx="6.7" ry="3.7" transform="rotate(145 907 299)" fill="#a9cf94" opacity="0.6"/>
<ellipse cx="2091" cy="1494" rx="2.4" ry="1.5" transform="rotate(43 2091 1494)" fill="#a9cf94" opacity="0.6"/>
<ellipse cx="2264" cy="320" rx="5.7" ry="4.2" transform="rotate(28 2264 320)" fill="#a9cf94" opacity="0.6"/>
<ellipse cx="1759" cy="1449" rx="7.2" ry="2.9" transform="rotate(86 1759 1449)" fill="#a9cf94" opacity="0.6"/>
<ellipse cx="1258" cy="1540" rx="7.5" ry="3.9" transform="rotate(55 1258 1540)" fill="#a9cf94" opacity="0.6"/>
<ellipse cx="2170" cy="825" rx="7.6" ry="2.8" transform="rotate(159 2170 825)" fill="#a9cf94" opacity="0.6"/>
<ellipse cx="2075" cy="770" rx="5.9" ry="4.3" transform="rotate(95 2075 770)" fill="#a9cf94" opacity="0.6"/>
<ellipse cx="2628" cy="101" rx="8.3" ry="4.0" transform="rotate(88 2628 101)" fill="#a9cf94" opacity="0.6"/>
<ellipse cx="2407" cy="315" rx="4.4" ry="4.0" transform="rotate(148 2407 315)" fill="#a9cf94" opacity="0.6"/>
<ellipse cx="1449" cy="1590" rx="6.5" ry="1.7" transform="rotate(22 1449 1590)" fill="#a9cf94" opacity="0.6"/>
<ellipse cx="853" cy="950" rx="4.3" ry="2.4" transform="rotate(81 853 950)" fill="#a9cf94" opacity="0.6"/>
<ellipse cx="857" cy="1462" rx="7.9" ry="3.5" transform="rotate(80 857 1462)" fill="#a9cf94" opacity="0.6"/>
<ellipse cx="1319" cy="1000" rx="4.4" ry="4.9" transform="rotate(172 1319 1000)" fill="#a9cf94" opacity="0.6"/>
<ellipse cx="2159" cy="1336" rx="2.5" ry="1.9" transform="rotate(62 2159 1336)" fill="#a9cf94" opacity="0.6"/>
<ellipse cx="953" cy="728" rx="8.9" ry="4.4" transform="rotate(173 953 728)" fill="#a9cf94" opacity="0.6"/>
<ellipse cx="1145" cy="425" rx="2.2" ry="2.5" transform="rotate(10 1145 425)" fill="#a9cf94" opacity="0.6"/>
<ellipse cx="1761" cy="544" rx="6.7" ry="3.5" transform="rotate(108 1761 544)" fill="#a9cf94" opacity="0.6"/>
<ellipse cx="1302" cy="1199" rx="6.8" ry="4.0" transform="rotate(85 1302 1199)" fill="#a9cf94" opacity="0.6"/>
<ellipse cx="1631" cy="522" rx="2.3" ry="3.1" transform="rotate(111 1631 522)" fill="#a9cf94" opacity="0.6"/>
<ellipse cx="1074" cy="1388" rx="8.2" ry="4.5" transform="rotate(147 1074 1388)" fill="#a9cf94" opacity="0.6"/>
<ellipse cx="1681" cy="355" rx="3.9" ry="4.1" transform="rotate(177 1681 355)" fill="#a9cf94" opacity="0.6"/>
<ellipse cx="923" cy="99" rx="4.5" ry="2.7" transform="rotate(108 923 99)" fill="#a9cf94" opacity="0.6"/>
<ellipse cx="926" cy="1363" rx="4.4" ry="4.7" transform="rotate(59 926 1363)" fill="#a9cf94" opacity="0.6"/>
<ellipse cx="1313" cy="355" rx="8.8" ry="3.6" transform="rotate(149 1313 355)" fill="#a9cf94" opacity="0.6"/>
<ellipse cx="827" cy="909" rx="7.1" ry="4.9" transform="rotate(169 827 909)" fill="#a9cf94" opacity="0.6"/>
<ellipse cx="909" cy="653" rx="9.0" ry="3.4" transform="rotate(172 909 653)" fill="#a9cf94" opacity="0.6"/>
<ellipse cx="1209" cy="129" rx="8.6" ry="2.4" transform="rotate(101 1209 129)" fill="#a9cf94" opacity="0.6"/>
<ellipse cx="1424" cy="962" rx="8.5" ry="4.8" transform="rotate(158 1424 962)" fill="#a9cf94" opacity="0.6"/>
<ellipse cx="1216" cy="1329" rx="2.1" ry="3.0" transform="rotate(170 1216 1329)" fill="#a9cf94" opacity="0.6"/>
<ellipse cx="1211" cy="644" rx="6.1" ry="2.3" transform="rotate(128 1211 644)" fill="#a9cf94" opacity="0.6"/>
<ellipse cx="2010" cy="233" rx="8.4" ry="1.8" transform="rotate(125 2010 233)" fill="#a9cf94" opacity="0.6"/>
<ellipse cx="1400" cy="307" rx="2.5" ry="5.0" transform="rotate(144 1400 307)" fill="#a9cf94" opacity="0.6"/>
<ellipse cx="1621" cy="1289" rx="8.8" ry="4.7" transform="rotate(96 1621 1289)" fill="#a9cf94" opacity="0.6"/>
<ellipse cx="1252" cy="872" rx="8.9" ry="4.1" transform="rotate(121 1252 872)" fill="#a9cf94" opacity="0.6"/>
<ellipse cx="1375" cy="320" rx="55" ry="60" fill="#d9d9d6" opacity="0.6" filter="url(#bl2)"/>
<ellipse cx="1460" cy="190" rx="30" ry="35" fill="#d9d9d6" opacity="0.6" filter="url(#bl2)"/>
<ellipse cx="1230" cy="590" rx="25" ry="35" fill="#d9d9d6" opacity="0.6" filter="url(#bl2)"/>
<ellipse cx="1055" cy="700" rx="18" ry="16" fill="#d9d9d6" opacity="0.6" filter="url(#bl2)"/>
<ellipse cx="1470" cy="830" rx="25" ry="25" fill="#d9d9d6" opacity="0.6" filter="url(#bl2)"/>
<ellipse cx="1358" cy="1172" rx="112" ry="80" fill="#d9d9d6" opacity="0.6" filter="url(#bl2)"/>
<ellipse cx="1545" cy="1055" rx="85" ry="45" fill="#d9d9d6" opacity="0.6" filter="url(#bl2)"/>
<ellipse cx="1280" cy="1380" rx="35" ry="18" fill="#d9d9d6" opacity="0.6" filter="url(#bl2)"/>
<ellipse cx="1710" cy="1450" rx="30" ry="25" fill="#d9d9d6" opacity="0.6" filter="url(#bl2)"/>
<ellipse cx="2440" cy="1300" rx="40" ry="25" fill="#d9d9d6" opacity="0.6" filter="url(#bl2)"/>
<ellipse cx="2290" cy="1340" rx="30" ry="20" fill="#d9d9d6" opacity="0.6" filter="url(#bl2)"/>
<ellipse cx="2310" cy="150" rx="45" ry="35" fill="#d9d9d6" opacity="0.6" filter="url(#bl2)"/>
<ellipse cx="2640" cy="660" rx="35" ry="35" fill="#d9d9d6" opacity="0.6" filter="url(#bl2)"/>
<ellipse cx="2000" cy="120" rx="25" ry="25" fill="#d9d9d6" opacity="0.6" filter="url(#bl2)"/>
<ellipse cx="1640" cy="1180" rx="15" ry="12" fill="#d9d9d6" opacity="0.6" filter="url(#bl2)"/>
<path d="M1167.0 1262.0 C1162.8 1265.3 1151.7 1280.7 1142.0 1282.0 C1132.3 1283.3 1121.3 1277.5 1109.0 1270.0 C1096.7 1262.5 1077.5 1243.8 1068.0 1237.0 C1058.5 1230.2 1058.8 1227.5 1052.0 1229.0 C1045.2 1230.5 1033.2 1237.8 1027.0 1246.0 C1020.8 1254.2 1014.8 1269.2 1015.0 1278.0 C1015.2 1286.8 1019.2 1293.5 1028.0 1299.0 C1036.8 1304.5 1054.5 1306.2 1068.0 1311.0 C1081.5 1315.8 1100.0 1320.5 1109.0 1328.0 C1118.0 1335.5 1124.7 1345.2 1122.0 1356.0 C1119.3 1366.8 1108.7 1382.7 1093.0 1393.0 C1077.3 1403.3 1048.5 1404.3 1028.0 1418.0 C1007.5 1431.7 986.5 1455.3 970.0 1475.0 C953.5 1494.7 946.7 1518.3 929.0 1536.0 C911.3 1553.7 883.0 1570.3 864.0 1581.0 C845.0 1591.7 832.2 1596.8 815.0 1600.0 C797.8 1603.2 757.7 1612.7 761.0 1600.0 C764.3 1587.3 811.0 1543.5 835.0 1524.0 C859.0 1504.5 883.8 1498.7 905.0 1483.0 C926.2 1467.3 943.0 1445.7 962.0 1430.0 C981.0 1414.3 1001.3 1400.7 1019.0 1389.0 C1036.7 1377.3 1057.0 1368.8 1068.0 1360.0 C1079.0 1351.2 1085.0 1342.2 1085.0 1336.0 C1085.0 1329.8 1078.8 1327.0 1068.0 1323.0 C1057.2 1319.0 1030.5 1319.2 1020.0 1312.0 C1009.5 1304.8 1005.0 1292.3 1005.0 1280.0 C1005.0 1267.7 1012.2 1248.0 1020.0 1238.0 C1027.8 1228.0 1042.8 1221.7 1052.0 1220.0 C1061.2 1218.3 1065.0 1221.7 1075.0 1228.0 C1085.0 1234.3 1101.2 1251.3 1112.0 1258.0 C1122.8 1264.7 1132.0 1268.5 1140.0 1268.0 C1148.0 1267.5 1156.7 1257.2 1160.0 1255.0" fill="#aad3df"/>
<path d="M1163.0 1258.0 C1160.8 1247.7 1150.8 1210.3 1150.0 1196.0 C1149.2 1181.7 1149.2 1178.8 1158.0 1172.0 C1166.8 1165.2 1190.0 1154.3 1203.0 1155.0 C1216.0 1155.7 1225.7 1176.0 1236.0 1176.0 C1246.3 1176.0 1261.5 1163.2 1265.0 1155.0 C1268.5 1146.8 1253.0 1139.2 1257.0 1127.0 C1261.0 1114.8 1283.7 1089.5 1289.0 1082.0" fill="none" stroke="#a3cfdc" stroke-width="4"/>
<path d="M1289.0 1082.0 C1294.2 1075.0 1309.8 1053.7 1320.0 1040.0 C1330.2 1026.3 1336.7 1013.3 1350.0 1000.0 C1363.3 986.7 1381.5 976.7 1400.0 960.0 C1418.5 943.3 1452.7 924.5 1461.0 900.0 C1469.3 875.5 1458.2 840.8 1450.0 813.0 C1441.8 785.2 1427.2 759.8 1412.0 733.0 C1396.8 706.2 1370.5 678.8 1359.0 652.0 C1347.5 625.2 1347.5 603.2 1343.0 572.0 C1338.5 540.8 1330.2 496.2 1332.0 465.0 C1333.8 433.8 1349.5 411.8 1354.0 385.0 C1358.5 358.2 1356.3 335.3 1359.0 304.0 C1361.7 272.7 1370.0 232.7 1370.0 197.0 C1370.0 161.3 1360.8 107.8 1359.0 90.0" fill="none" stroke="#a3cfdc" stroke-width="4"/>
<path d="M1048.0 138.0 C1054.3 156.8 1072.7 223.3 1086.0 251.0 C1099.3 278.7 1103.0 286.2 1128.0 304.0 C1153.0 321.8 1209.2 347.3 1236.0 358.0 C1262.8 368.7 1280.2 366.3 1289.0 368.0" fill="none" stroke="#a3cfdc" stroke-width="4"/>
<path d="M882.0 294.0 C885.7 304.7 896.8 340.2 904.0 358.0 C911.2 375.8 918.8 383.2 925.0 401.0 C931.2 418.8 938.3 454.3 941.0 465.0" fill="none" stroke="#a3cfdc" stroke-width="4"/>
<path d="M2040.0 1228.0 C2050.0 1228.7 2078.2 1229.7 2100.0 1232.0 C2121.8 1234.3 2147.2 1238.0 2171.0 1242.0 C2194.8 1246.0 2219.2 1251.3 2243.0 1256.0 C2266.8 1260.7 2290.2 1269.2 2314.0 1270.0 C2337.8 1270.8 2366.2 1254.7 2386.0 1261.0 C2405.8 1267.3 2417.2 1292.2 2433.0 1308.0 C2448.8 1323.8 2465.2 1336.0 2481.0 1356.0 C2496.8 1376.0 2520.2 1416.0 2528.0 1428.0" fill="none" stroke="#a3cfdc" stroke-width="4"/>
<path d="M1900.0 1480.0 C1916.7 1483.3 1966.7 1490.5 2000.0 1500.0 C2033.3 1509.5 2059.5 1534.8 2100.0 1537.0 C2140.5 1539.2 2199.3 1519.3 2243.0 1513.0 C2286.7 1506.7 2322.3 1506.8 2362.0 1499.0 C2401.7 1491.2 2449.3 1469.2 2481.0 1466.0 C2512.7 1462.8 2532.2 1486.3 2552.0 1480.0 C2571.8 1473.7 2588.0 1456.5 2600.0 1428.0 C2612.0 1399.5 2606.0 1344.8 2624.0 1309.0 C2642.0 1273.2 2694.0 1229.0 2708.0 1213.0" fill="none" stroke="#a3cfdc" stroke-width="4"/>
<path d="M2160.0 920.0 C2165.8 929.2 2177.2 942.0 2195.0 975.0 C2212.8 1008.0 2239.2 1102.2 2267.0 1118.0 C2294.8 1133.8 2330.3 1062.0 2362.0 1070.0 C2393.7 1078.0 2421.3 1146.0 2457.0 1166.0 C2492.7 1186.0 2543.8 1177.7 2576.0 1190.0 C2608.2 1202.3 2637.7 1231.7 2650.0 1240.0" fill="none" stroke="#a3cfdc" stroke-width="4"/>
<path d="M1880.0 1060.0 C1883.3 1070.0 1890.0 1096.7 1900.0 1120.0 C1910.0 1143.3 1923.3 1181.7 1940.0 1200.0 C1956.7 1218.3 1983.3 1225.3 2000.0 1230.0 C2016.7 1234.7 2033.3 1228.3 2040.0 1228.0" fill="none" stroke="#a3cfdc" stroke-width="4"/>
<path d="M870.0 980.0 C861.7 983.3 835.0 1003.3 820.0 1000.0 C805.0 996.7 793.3 960.0 780.0 960.0 C766.7 960.0 750.0 983.3 740.0 1000.0 C730.0 1016.7 725.8 1040.0 720.0 1060.0 C714.2 1080.0 707.5 1110.0 705.0 1120.0" fill="none" stroke="#a3cfdc" stroke-width="4"/>
<path d="M1107.0 336.0 C1110.5 341.3 1120.0 353.7 1128.0 368.0 C1136.0 382.3 1146.8 405.8 1155.0 422.0 C1163.2 438.2 1167.2 444.5 1177.0 465.0 C1186.8 485.5 1204.2 522.7 1214.0 545.0 C1223.8 567.3 1229.7 583.8 1236.0 599.0 C1242.3 614.2 1253.8 622.7 1252.0 636.0 C1250.2 649.3 1232.2 662.8 1225.0 679.0 C1217.8 695.2 1218.0 712.5 1209.0 733.0 C1200.0 753.5 1184.5 790.5 1171.0 802.0 C1157.5 813.5 1142.2 807.3 1128.0 802.0 C1113.8 796.7 1095.7 781.5 1086.0 770.0 C1076.3 758.5 1075.5 748.2 1070.0 733.0 C1064.5 717.8 1049.5 701.3 1053.0 679.0 C1056.5 656.7 1082.0 625.8 1091.0 599.0 C1100.0 572.2 1107.8 545.7 1107.0 518.0 C1106.2 490.3 1089.5 455.2 1086.0 433.0 C1082.5 410.8 1082.5 401.2 1086.0 385.0 C1089.5 368.8 1103.5 344.2 1107.0 336.0" fill="#a9cf98" fill-opacity="0.25" stroke="#6fae62" stroke-opacity="0.5" stroke-width="6"/>
<path d="M700.0 1020.0 C705.0 1023.3 720.0 1026.7 730.0 1040.0 C740.0 1053.3 751.7 1076.7 760.0 1100.0 C768.3 1123.3 775.0 1153.3 780.0 1180.0 C785.0 1206.7 793.3 1235.0 790.0 1260.0 C786.7 1285.0 768.3 1303.3 760.0 1330.0 C751.7 1356.7 746.7 1388.3 740.0 1420.0 C733.3 1451.7 726.7 1496.7 720.0 1520.0 C713.3 1543.3 703.3 1553.3 700.0 1560.0" fill="none" stroke="#6fae62" stroke-opacity="0.45" stroke-width="6"/>
<path d="M1640.0 880.0 C1633.3 900.0 1613.3 960.0 1600.0 1000.0 C1586.7 1040.0 1573.3 1083.3 1560.0 1120.0 C1546.7 1156.7 1536.7 1190.0 1520.0 1220.0 C1503.3 1250.0 1476.7 1266.7 1460.0 1300.0 C1443.3 1333.3 1423.3 1383.3 1420.0 1420.0 C1416.7 1456.7 1426.7 1490.2 1440.0 1520.0 C1453.3 1549.8 1490.0 1585.8 1500.0 1599.0" fill="none" stroke="#6fae62" stroke-opacity="0.35" stroke-width="6"/>
<path d="M2338.0 966.0 C2350.0 979.5 2387.8 1023.2 2410.0 1047.0 C2432.2 1070.8 2447.3 1097.2 2471.0 1109.0 C2494.7 1120.8 2530.5 1104.5 2552.0 1118.0 C2573.5 1131.5 2603.8 1177.3 2600.0 1190.0 C2596.2 1202.7 2556.8 1198.0 2529.0 1194.0 C2501.2 1190.0 2455.3 1162.8 2433.0 1166.0 C2410.7 1169.2 2402.8 1198.8 2395.0 1213.0 C2387.2 1227.2 2403.5 1239.0 2386.0 1251.0 C2368.5 1263.0 2317.8 1280.2 2290.0 1285.0 C2262.2 1289.8 2230.8 1280.8 2219.0 1280.0" fill="none" stroke="#6fae62" stroke-opacity="0.4" stroke-width="6"/>
<path d="M2433.0 465.0 C2444.2 474.2 2478.8 497.5 2500.0 520.0 C2521.2 542.5 2553.3 573.3 2560.0 600.0 C2566.7 626.7 2555.0 660.0 2540.0 680.0 C2525.0 700.0 2488.3 726.7 2470.0 720.0 C2451.7 713.3 2441.7 666.7 2430.0 640.0 C2418.3 613.3 2405.0 573.3 2400.0 560.0" fill="none" stroke="#6fae62" stroke-opacity="0.4" stroke-width="6"/>
<path d="M1608.4 934.7 C1620.0 927.7 1659.1 910.5 1678.0 892.6 C1696.8 874.8 1708.5 848.0 1721.7 827.7 C1734.9 807.5 1750.1 789.9 1757.1 771.1 C1764.1 752.2 1766.6 733.7 1763.9 714.7 C1761.1 695.7 1742.7 677.7 1740.7 656.9 C1738.6 636.0 1749.9 600.9 1751.8 589.7" fill="none" stroke="#c4bfc6" stroke-width="1.6"/>
<path d="M1895.6 687.8 C1882.4 689.4 1833.5 692.4 1816.3 697.6 C1799.1 702.8 1807.2 713.3 1792.5 719.2 C1777.7 725.0 1746.8 731.8 1727.9 732.5 C1709.0 733.2 1687.3 724.8 1679.1 723.3" fill="none" stroke="#c4bfc6" stroke-width="1.6"/>
<path d="M1886.6 384.7 C1887.8 396.3 1891.4 434.9 1893.8 454.1 C1896.3 473.4 1907.7 479.6 1901.4 500.2 C1895.0 520.7 1873.6 558.1 1855.7 577.4 C1837.9 596.7 1809.6 604.2 1794.4 616.0 C1779.1 627.7 1769.4 642.6 1764.5 648.0" fill="none" stroke="#c4bfc6" stroke-width="1.6"/>
<path d="M1280.4 196.0 C1277.0 188.8 1267.8 162.9 1259.9 153.2 C1252.0 143.5 1242.5 145.4 1232.9 137.8 C1223.3 130.3 1208.6 118.3 1202.4 107.8 C1196.2 97.4 1201.4 92.0 1195.9 75.3 C1190.5 58.7 1179.0 28.4 1169.6 7.7 C1160.3 -13.0 1144.8 -39.5 1139.9 -48.9" fill="none" stroke="#c4bfc6" stroke-width="1.6"/>
<path d="M1098.6 1108.4 C1094.1 1122.4 1080.0 1173.3 1071.6 1192.1 C1063.3 1210.8 1054.3 1210.5 1048.5 1221.1 C1042.8 1231.6 1035.3 1237.2 1037.3 1255.3 C1039.2 1273.4 1049.1 1309.5 1060.2 1329.7 C1071.2 1349.8 1096.2 1368.5 1103.5 1376.2" fill="none" stroke="#c4bfc6" stroke-width="1.6"/>
<path d="M1598.4 377.7 C1596.4 369.1 1593.9 348.6 1586.5 326.1 C1579.1 303.6 1571.3 263.2 1553.8 242.9 C1536.4 222.5 1498.2 220.3 1481.9 203.8 C1465.5 187.3 1460.2 153.7 1455.8 143.6" fill="none" stroke="#c4bfc6" stroke-width="1.6"/>
<path d="M2703.8 119.6 C2709.3 122.9 2727.0 133.9 2737.1 139.4 C2747.3 145.0 2749.1 143.0 2764.6 152.8 C2780.1 162.7 2819.2 190.8 2830.1 198.5" fill="none" stroke="#c4bfc6" stroke-width="1.6"/>
<path d="M1475.4 202.1 C1482.4 207.2 1506.1 223.3 1517.4 232.9 C1528.8 242.6 1531.2 244.9 1543.6 260.0 C1555.9 275.2 1575.5 309.7 1591.6 323.9 C1607.7 338.2 1632.1 341.9 1640.2 345.4" fill="none" stroke="#c4bfc6" stroke-width="1.6"/>
<path d="M1959.5 559.0 C1958.3 565.5 1957.3 581.5 1952.4 597.9 C1947.6 614.2 1939.0 640.0 1930.2 657.1 C1921.3 674.1 1907.5 688.4 1899.1 700.4 C1890.7 712.4 1882.8 724.3 1879.6 729.1" fill="none" stroke="#c4bfc6" stroke-width="1.6"/>
<path d="M795.2 254.6 C783.6 258.0 748.2 263.9 725.9 275.1 C703.6 286.3 679.4 310.3 661.7 321.9 C644.0 333.4 633.9 330.7 619.8 344.4 C605.7 358.1 584.3 386.7 577.1 403.9 C569.8 421.1 576.4 440.3 576.2 447.6" fill="none" stroke="#c4bfc6" stroke-width="1.6"/>
<path d="M1823.2 1376.3 C1809.8 1371.9 1760.4 1357.8 1742.5 1349.9 C1724.6 1342.0 1726.5 1336.2 1715.6 1328.9 C1704.7 1321.5 1691.3 1308.9 1677.1 1305.8 C1662.8 1302.7 1652.8 1308.7 1630.4 1310.2 C1607.9 1311.7 1556.8 1314.0 1542.1 1314.8" fill="none" stroke="#c4bfc6" stroke-width="1.6"/>
<path d="M885.1 298.9 C873.3 300.0 832.2 304.5 814.0 305.5 C795.7 306.4 786.1 301.6 775.5 304.5 C764.9 307.3 766.5 319.0 750.3 322.6 C734.2 326.3 694.7 328.6 678.4 326.3 C662.1 324.0 656.8 311.6 652.5 308.7" fill="none" stroke="#c4bfc6" stroke-width="1.6"/>
<path d="M1977.5 817.7 C1974.1 813.1 1966.1 801.2 1957.2 790.0 C1948.2 778.7 1943.3 760.1 1923.8 750.1 C1904.2 740.0 1859.2 736.6 1840.0 729.9 C1820.7 723.2 1816.4 720.9 1808.1 709.6 C1799.9 698.3 1793.5 670.1 1790.6 662.2" fill="none" stroke="#c4bfc6" stroke-width="1.6"/>
<path d="M870.5 804.2 C872.9 808.9 880.0 823.3 884.7 832.7 C889.3 842.0 894.1 847.2 898.4 860.3 C902.7 873.5 904.1 899.6 910.6 911.6 C917.2 923.7 927.2 928.6 937.9 932.5 C948.6 936.5 959.7 937.4 974.7 935.5 C989.7 933.7 1019.0 923.8 1027.8 921.5" fill="none" stroke="#c4bfc6" stroke-width="1.6"/>
<path d="M1362.9 1499.8 C1357.3 1487.6 1345.4 1445.7 1329.2 1426.9 C1312.9 1408.2 1286.9 1392.9 1265.4 1387.5 C1243.8 1382.1 1217.8 1392.3 1199.6 1394.4 C1181.4 1396.5 1173.3 1400.6 1156.2 1400.1 C1139.1 1399.6 1120.4 1397.1 1097.0 1391.4 C1073.6 1385.6 1029.3 1369.9 1015.8 1365.6" fill="none" stroke="#c4bfc6" stroke-width="1.6"/>
<path d="M1213.7 107.1 C1209.5 118.9 1194.2 151.8 1188.2 177.8 C1182.1 203.8 1180.1 241.4 1177.4 263.0 C1174.7 284.5 1172.8 292.2 1171.9 307.1 C1171.1 322.0 1172.3 344.6 1172.4 352.1" fill="none" stroke="#c4bfc6" stroke-width="1.6"/>
<path d="M1973.4 1302.8 C1978.1 1295.3 1991.8 1271.7 2001.7 1257.9 C2011.5 1244.0 2025.6 1235.9 2032.4 1219.7 C2039.2 1203.5 2032.7 1181.4 2042.4 1160.8 C2052.1 1140.1 2082.7 1106.7 2090.7 1095.9" fill="none" stroke="#c4bfc6" stroke-width="1.6"/>
<path d="M2128.1 1523.6 C2131.7 1532.6 2148.8 1555.8 2149.4 1577.8 C2150.0 1599.8 2135.3 1632.5 2131.8 1655.7 C2128.3 1678.9 2132.4 1695.0 2128.3 1716.8 C2124.1 1738.6 2110.4 1774.9 2106.8 1786.5" fill="none" stroke="#c4bfc6" stroke-width="1.6"/>
<path d="M2390.5 1032.8 C2389.1 1043.8 2386.2 1080.4 2381.8 1098.7 C2377.5 1116.9 2369.3 1123.6 2364.4 1142.2 C2359.5 1160.7 2354.3 1198.7 2352.3 1210.1" fill="none" stroke="#c4bfc6" stroke-width="1.6"/>
<path d="M1832.6 1057.2 C1828.5 1069.9 1812.0 1114.2 1808.3 1133.2 C1804.6 1152.3 1802.9 1156.5 1810.5 1171.6 C1818.1 1186.7 1838.7 1206.9 1853.8 1223.8 C1868.8 1240.6 1893.0 1264.4 1900.8 1272.6" fill="none" stroke="#c4bfc6" stroke-width="1.6"/>
<path d="M2015.3 1308.3 C2022.9 1302.2 2051.0 1282.2 2060.7 1271.5 C2070.5 1260.7 2066.9 1259.5 2073.8 1243.7 C2080.7 1227.9 2097.8 1195.5 2102.1 1176.6 C2106.5 1157.7 2100.2 1138.0 2099.8 1130.3" fill="none" stroke="#c4bfc6" stroke-width="1.6"/>
<path d="M1394.2 1142.2 C1381.3 1142.5 1334.7 1146.6 1316.7 1143.9 C1298.8 1141.1 1296.6 1139.7 1286.7 1125.5 C1276.7 1111.3 1269.6 1075.3 1256.9 1058.5 C1244.3 1041.6 1218.6 1030.2 1210.9 1024.5" fill="none" stroke="#c4bfc6" stroke-width="1.6"/>
<path d="M1956.1 1463.1 C1948.3 1471.6 1921.0 1493.9 1909.2 1513.9 C1897.4 1533.9 1897.3 1563.5 1885.3 1583.2 C1873.3 1602.9 1851.5 1620.5 1837.2 1631.9 C1822.9 1643.4 1820.4 1649.7 1799.4 1652.0 C1778.3 1654.3 1725.5 1646.7 1710.8 1645.6" fill="none" stroke="#c4bfc6" stroke-width="1.6"/>
<path d="M2662.5 900.3 C2661.6 888.1 2664.7 846.9 2656.9 827.4 C2649.1 807.9 2630.8 792.2 2615.6 783.5 C2600.4 774.8 2581.8 776.9 2565.8 775.1 C2549.7 773.2 2532.8 777.2 2519.3 772.4 C2505.8 767.6 2490.6 750.8 2484.9 746.5" fill="none" stroke="#c4bfc6" stroke-width="1.6"/>
<path d="M2442.0 737.3 C2454.6 743.8 2491.2 763.7 2517.3 776.6 C2543.4 789.6 2579.7 800.0 2598.7 815.0 C2617.8 830.0 2623.2 849.0 2631.7 866.5 C2640.1 884.0 2648.7 900.5 2649.4 920.0 C2650.1 939.5 2638.1 972.7 2635.8 983.3" fill="none" stroke="#c4bfc6" stroke-width="1.6"/>
<path d="M2083.6 1233.6 C2073.1 1232.7 2040.1 1225.4 2020.2 1228.3 C2000.2 1231.3 1980.6 1248.8 1963.8 1251.3 C1947.0 1253.7 1939.9 1250.4 1919.2 1243.0 C1898.5 1235.7 1859.4 1222.1 1839.6 1207.2 C1819.8 1192.2 1806.9 1162.3 1800.4 1153.4" fill="none" stroke="#c4bfc6" stroke-width="1.6"/>
<path d="M1311.3 303.0 C1304.8 300.4 1287.9 294.1 1272.3 287.3 C1256.7 280.4 1231.2 269.1 1217.7 262.0 C1204.2 254.9 1199.0 257.1 1191.2 244.6 C1183.5 232.1 1180.5 208.2 1171.3 187.0 C1162.1 165.8 1141.7 129.1 1135.8 117.5" fill="none" stroke="#c4bfc6" stroke-width="1.6"/>
<path d="M1830.2 831.0 C1832.4 821.6 1831.8 793.2 1843.5 775.0 C1855.2 756.8 1886.3 736.5 1900.6 721.8 C1914.8 707.2 1924.3 693.0 1929.0 687.2" fill="none" stroke="#c4bfc6" stroke-width="1.6"/>
<path d="M1690.0 602.6 C1695.1 599.2 1711.3 589.1 1720.4 582.3 C1729.5 575.5 1734.5 575.6 1744.7 561.8 C1754.9 548.1 1770.3 512.1 1781.4 499.8 C1792.6 487.5 1803.0 494.0 1811.4 488.2 C1819.8 482.4 1823.3 480.2 1831.7 465.1 C1840.0 450.1 1856.5 409.2 1861.5 398.1" fill="none" stroke="#c4bfc6" stroke-width="1.6"/>
<path d="M1190.9 842.7 C1181.0 837.4 1149.7 824.8 1131.4 811.0 C1113.1 797.1 1090.6 773.1 1081.0 759.5 C1071.3 745.8 1074.6 734.1 1073.3 729.0" fill="none" stroke="#c4bfc6" stroke-width="1.6"/>
<path d="M1971.1 1335.2 C1967.7 1325.4 1958.9 1291.7 1950.7 1276.6 C1942.6 1261.5 1933.6 1258.4 1922.1 1244.5 C1910.6 1230.6 1901.5 1207.3 1881.7 1193.3 C1861.9 1179.4 1816.4 1166.2 1803.3 1160.8" fill="none" stroke="#c4bfc6" stroke-width="1.6"/>
<path d="M1960.8 614.5 C1960.0 621.4 1960.2 642.9 1956.0 655.9 C1951.9 668.9 1938.4 672.5 1935.9 692.4 C1933.4 712.4 1936.9 756.8 1941.0 775.6 C1945.0 794.4 1950.7 793.3 1960.2 805.2 C1969.6 817.1 1991.4 840.0 1997.6 846.9" fill="none" stroke="#c4bfc6" stroke-width="1.6"/>
<path d="M2589.9 909.8 C2585.1 899.0 2572.0 858.9 2560.9 844.9 C2549.8 830.8 2540.3 838.2 2523.5 825.6 C2506.8 813.0 2472.1 784.6 2460.5 769.1 C2448.8 753.6 2454.8 738.8 2453.7 732.8" fill="none" stroke="#c4bfc6" stroke-width="1.6"/>
<path d="M1715.4 1234.1 C1706.5 1229.9 1683.3 1210.3 1662.1 1208.9 C1640.9 1207.5 1614.6 1222.0 1588.3 1225.7 C1562.0 1229.5 1525.1 1229.7 1504.2 1231.3 C1483.3 1232.9 1469.9 1234.5 1463.0 1235.1" fill="none" stroke="#c4bfc6" stroke-width="1.6"/>
<path d="M930.8 350.3 C930.7 356.2 922.1 368.0 930.1 386.0 C938.1 404.0 963.1 436.1 978.8 458.2 C994.6 480.3 1009.4 502.6 1024.5 518.8 C1039.7 534.9 1055.0 543.2 1069.6 555.3 C1084.2 567.4 1105.1 585.4 1112.2 591.4" fill="none" stroke="#c4bfc6" stroke-width="1.6"/>
<path d="M1906.7 110.0 C1900.1 103.0 1877.7 83.5 1867.5 68.3 C1857.3 53.0 1854.0 31.3 1845.4 18.6 C1836.7 6.0 1824.3 0.1 1815.5 -7.8 C1806.7 -15.7 1796.5 -25.2 1792.7 -28.7" fill="none" stroke="#c4bfc6" stroke-width="1.6"/>
<path d="M2493.5 1299.8 C2492.2 1293.0 2487.7 1274.2 2485.8 1259.0 C2483.9 1243.9 2480.6 1224.5 2482.3 1208.7 C2484.0 1192.9 2496.7 1183.5 2496.1 1164.0 C2495.4 1144.5 2490.8 1114.4 2478.4 1091.5 C2466.1 1068.6 2439.3 1040.2 2422.0 1026.6 C2404.8 1012.9 2383.0 1012.6 2375.1 1009.8" fill="none" stroke="#c4bfc6" stroke-width="1.6"/>
<path d="M1782.1 648.1 C1771.7 654.6 1733.7 673.0 1720.0 687.2 C1706.3 701.4 1705.1 721.1 1699.9 733.5 C1694.8 746.0 1692.7 746.2 1689.0 762.2 C1685.3 778.2 1679.8 818.4 1678.0 829.6" fill="none" stroke="#c4bfc6" stroke-width="1.6"/>
<path d="M1953.0 440.2 C1962.8 433.9 1992.5 413.5 2011.4 402.4 C2030.3 391.4 2045.2 387.5 2066.5 373.9 C2087.8 360.3 2116.1 334.7 2139.1 320.8 C2162.1 306.9 2178.9 296.6 2204.5 290.5 C2230.2 284.5 2278.4 285.6 2293.1 284.6" fill="none" stroke="#c4bfc6" stroke-width="1.6"/>
<path d="M745.8 1018.6 C744.3 1008.7 735.9 980.2 736.8 959.0 C737.8 937.9 752.6 909.7 751.6 891.7 C750.7 873.8 740.4 863.9 731.1 851.1 C721.7 838.4 707.5 828.2 695.5 815.4 C683.5 802.5 665.1 781.1 659.0 774.3" fill="none" stroke="#c4bfc6" stroke-width="1.6"/>
<path d="M1745.5 1367.2 C1748.3 1372.2 1755.0 1380.6 1762.4 1397.3 C1769.9 1414.1 1773.4 1448.3 1790.1 1467.7 C1806.8 1487.0 1841.0 1504.8 1862.8 1513.2 C1884.7 1521.6 1902.0 1520.9 1920.9 1518.0 C1939.9 1515.1 1961.7 1500.8 1976.4 1495.8 C1991.1 1490.9 2003.6 1489.6 2009.1 1488.4" fill="none" stroke="#c4bfc6" stroke-width="1.6"/>
<path d="M2598.1 724.8 C2590.3 725.0 2569.2 727.7 2551.0 725.8 C2532.7 723.9 2511.1 714.1 2488.6 713.3 C2466.1 712.5 2432.8 717.8 2416.0 721.1 C2399.1 724.3 2396.2 727.2 2387.5 732.8 C2378.7 738.5 2367.6 751.3 2363.6 755.0" fill="none" stroke="#c4bfc6" stroke-width="1.6"/>
<path d="M1014.4 1228.8 C1009.2 1230.6 1002.1 1242.9 983.3 1239.9 C964.6 1236.9 928.9 1212.2 901.7 1210.9 C874.4 1209.7 842.8 1225.4 820.1 1232.3 C797.3 1239.3 781.3 1251.6 765.1 1252.8 C748.8 1253.9 729.6 1241.5 722.6 1239.3" fill="none" stroke="#c4bfc6" stroke-width="1.6"/>
<path d="M1750.9 1504.3 C1741.8 1492.9 1715.9 1453.3 1696.6 1435.6 C1677.2 1417.9 1654.1 1403.6 1634.6 1398.1 C1615.2 1392.7 1600.0 1394.1 1579.8 1402.8 C1559.6 1411.5 1528.9 1437.5 1513.3 1450.2 C1497.8 1462.9 1494.4 1468.7 1486.5 1478.9 C1478.7 1489.2 1469.6 1506.1 1466.2 1511.5" fill="none" stroke="#c4bfc6" stroke-width="1.6"/>
<path d="M1537.3 997.0 C1527.7 989.1 1491.9 963.3 1479.6 949.7 C1467.2 936.0 1470.1 925.6 1463.2 915.1 C1456.2 904.7 1449.0 899.1 1437.8 887.2 C1426.7 875.3 1411.8 856.1 1396.2 843.7 C1380.6 831.3 1357.0 824.5 1344.4 812.7 C1331.7 800.9 1324.3 779.6 1320.2 772.9" fill="none" stroke="#c4bfc6" stroke-width="1.6"/>
<path d="M1924.5 1184.1 C1922.8 1171.7 1920.2 1128.3 1914.5 1109.6 C1908.7 1090.9 1892.8 1092.1 1890.3 1071.7 C1887.7 1051.3 1894.4 1005.7 1899.0 987.2 C1903.7 968.8 1915.0 965.5 1918.2 961.2" fill="none" stroke="#c4bfc6" stroke-width="1.6"/>
<path d="M822.1 498.8 C816.7 507.8 794.8 537.6 789.7 552.3 C784.6 567.1 793.3 571.3 791.6 587.5 C789.9 603.6 781.6 639.0 779.6 649.3" fill="none" stroke="#c4bfc6" stroke-width="1.6"/>
<path d="M1967.3 653.1 C1958.0 656.6 1929.5 660.2 1911.4 674.2 C1893.4 688.2 1876.1 722.6 1858.7 737.3 C1841.4 751.9 1829.5 757.9 1807.6 762.1 C1785.7 766.2 1740.7 762.1 1727.3 762.1" fill="none" stroke="#c4bfc6" stroke-width="1.6"/>
<path d="M2244.0 760.5 C2247.5 752.6 2252.8 732.8 2265.1 712.8 C2277.5 692.9 2305.2 662.5 2317.9 640.7 C2330.7 619.0 2328.2 602.8 2341.7 582.5 C2355.2 562.2 2384.1 536.7 2398.7 519.1 C2413.3 501.5 2423.4 497.7 2429.4 477.0 C2435.5 456.2 2434.0 408.4 2434.9 394.6" fill="none" stroke="#c4bfc6" stroke-width="1.6"/>
<path d="M857.6 215.3 C851.2 208.1 827.0 184.2 819.3 172.0 C811.5 159.9 819.6 159.6 811.0 142.6 C802.4 125.6 779.4 93.1 767.6 70.0 C755.8 46.8 749.6 26.4 740.1 3.8 C730.6 -18.9 723.7 -43.4 710.5 -66.1 C697.3 -88.8 669.1 -121.4 660.8 -132.5" fill="none" stroke="#c4bfc6" stroke-width="1.6"/>
<path d="M1139.3 1081.8 C1137.1 1091.0 1133.3 1114.5 1126.1 1136.7 C1118.8 1158.9 1105.4 1195.8 1095.8 1215.2 C1086.1 1234.6 1072.8 1246.7 1068.2 1253.0" fill="none" stroke="#c4bfc6" stroke-width="1.6"/>
<path d="M1764.7 1587.5 C1751.5 1593.1 1706.1 1616.7 1685.5 1621.2 C1664.9 1625.7 1657.1 1615.3 1641.1 1614.5 C1625.0 1613.8 1606.6 1614.3 1589.2 1616.8 C1571.8 1619.3 1545.6 1627.2 1536.9 1629.3" fill="none" stroke="#c4bfc6" stroke-width="1.6"/>
<path d="M1478.3 384.2 C1466.3 378.3 1424.1 358.2 1406.3 348.8 C1388.6 339.4 1385.9 342.1 1371.6 327.7 C1357.3 313.3 1333.4 276.2 1320.6 262.4 C1307.8 248.6 1307.6 253.7 1294.8 244.7 C1282.0 235.6 1263.5 223.8 1244.0 208.1 C1224.5 192.3 1188.8 159.8 1177.7 150.1" fill="none" stroke="#c4bfc6" stroke-width="1.6"/>
<path d="M2007.6 1303.7 C2011.7 1307.9 2015.8 1322.1 2031.9 1329.0 C2048.0 1335.9 2088.1 1338.4 2104.3 1345.2 C2120.6 1352.0 2121.5 1360.4 2129.3 1369.8 C2137.1 1379.2 2144.6 1385.2 2151.2 1401.6 C2157.9 1418.0 2166.0 1457.2 2169.0 1468.3" fill="none" stroke="#c4bfc6" stroke-width="1.6"/>
<path d="M1192.9 422.7 C1196.9 414.7 1209.5 397.0 1217.0 374.7 C1224.5 352.5 1229.9 312.2 1237.9 289.2 C1246.0 266.1 1254.7 255.6 1265.5 236.3 C1276.4 217.0 1286.2 193.4 1302.8 173.2 C1319.4 153.1 1354.8 125.2 1365.2 115.6" fill="none" stroke="#c4bfc6" stroke-width="1.6"/>
<path d="M1524.5 1336.8 C1523.2 1323.5 1511.8 1283.5 1516.9 1257.1 C1522.0 1230.7 1542.4 1199.6 1554.9 1178.3 C1567.4 1157.0 1585.7 1137.4 1591.8 1129.2" fill="none" stroke="#c4bfc6" stroke-width="1.6"/>
<path d="M2125.9 1300.6 C2118.4 1299.9 2099.2 1293.0 2081.3 1296.6 C2063.3 1300.2 2036.8 1316.8 2018.1 1322.1 C1999.5 1327.4 1987.3 1324.4 1969.3 1328.3 C1951.2 1332.2 1931.3 1334.8 1909.9 1345.4 C1888.6 1356.1 1862.5 1377.1 1841.2 1392.2 C1819.8 1407.3 1791.7 1428.8 1781.8 1436.1" fill="none" stroke="#c4bfc6" stroke-width="1.6"/>
<path d="M1309.4 324.7 C1314.5 323.9 1322.2 323.1 1340.1 320.0 C1358.0 317.0 1397.8 311.6 1416.9 306.3 C1436.0 301.1 1448.5 291.5 1454.8 288.5" fill="none" stroke="#c4bfc6" stroke-width="1.6"/>
<path d="M1421.5 977.8 C1416.3 972.8 1402.7 955.3 1390.1 947.9 C1377.4 940.4 1365.4 933.8 1345.6 933.1 C1325.7 932.4 1293.0 937.7 1270.8 943.5 C1248.7 949.4 1232.4 964.4 1213.0 968.1 C1193.5 971.8 1177.3 962.1 1154.3 965.7 C1131.2 969.3 1087.8 985.7 1074.6 989.7" fill="none" stroke="#c4bfc6" stroke-width="1.6"/>
<path d="M2535.8 606.2 C2528.9 604.2 2514.7 591.4 2494.2 594.5 C2473.7 597.6 2435.2 620.4 2412.8 624.9 C2390.4 629.4 2368.6 622.0 2359.8 621.5" fill="none" stroke="#c4bfc6" stroke-width="1.6"/>
<path d="M1759.4 868.4 C1756.7 875.2 1742.9 893.4 1743.2 909.6 C1743.5 925.7 1751.9 944.4 1761.0 965.1 C1770.1 985.8 1791.5 1022.3 1797.6 1033.8" fill="none" stroke="#c4bfc6" stroke-width="1.6"/>
<path d="M2132.3 1004.6 C2133.6 1010.9 2143.5 1023.9 2140.0 1042.5 C2136.6 1061.0 2114.6 1091.3 2111.6 1115.8 C2108.7 1140.3 2120.9 1167.0 2122.6 1189.5 C2124.2 1211.9 2121.5 1240.2 2121.3 1250.4" fill="none" stroke="#c4bfc6" stroke-width="1.6"/>
<path d="M806.3 953.0 C806.3 966.4 808.9 1015.0 806.4 1033.7 C803.8 1052.4 795.2 1047.9 791.1 1065.2 C787.0 1082.5 779.2 1116.6 781.8 1137.6 C784.4 1158.5 802.5 1182.0 806.6 1190.9" fill="none" stroke="#c4bfc6" stroke-width="1.6"/>
<path d="M1641.1 1531.8 C1634.3 1532.7 1617.0 1530.0 1600.2 1537.2 C1583.3 1544.3 1559.3 1567.0 1540.0 1574.8 C1520.7 1582.6 1499.9 1575.8 1484.4 1584.0 C1468.8 1592.2 1462.8 1606.6 1446.7 1623.8 C1430.6 1641.0 1397.4 1676.7 1387.5 1687.3" fill="none" stroke="#c4bfc6" stroke-width="1.6"/>
<path d="M2635.6 567.0 C2624.0 565.8 2582.6 558.3 2565.9 559.9 C2549.3 561.4 2547.0 563.9 2535.7 576.5 C2524.5 589.1 2513.6 617.3 2498.3 635.7 C2483.1 654.2 2459.0 676.5 2444.2 687.3 C2429.3 698.1 2415.1 698.4 2409.3 700.6" fill="none" stroke="#c4bfc6" stroke-width="1.6"/>
<path d="M1594.2 1393.3 C1588.1 1384.6 1567.0 1353.6 1557.7 1340.9 C1548.5 1328.1 1541.7 1333.8 1538.8 1316.8 C1535.9 1299.8 1544.4 1262.2 1540.5 1238.9 C1536.5 1215.5 1524.8 1194.0 1515.1 1176.9 C1505.3 1159.8 1492.1 1149.4 1481.9 1136.1 C1471.7 1122.8 1458.5 1103.8 1453.8 1097.3" fill="none" stroke="#c4bfc6" stroke-width="1.6"/>
<path d="M1377.5 681.8 C1370.3 676.8 1349.7 657.2 1334.4 651.6 C1319.2 646.1 1303.4 646.6 1285.9 648.5 C1268.5 650.4 1248.4 660.1 1229.6 663.0 C1210.7 665.9 1188.2 664.3 1172.9 666.2 C1157.5 668.0 1143.5 672.7 1137.6 674.0" fill="none" stroke="#c4bfc6" stroke-width="1.6"/>
<path d="M1948.4 288.3 C1940.0 285.1 1913.6 280.1 1898.0 268.7 C1882.3 257.3 1868.6 229.9 1854.3 219.8 C1840.1 209.7 1825.4 208.8 1812.3 208.2 C1799.2 207.6 1781.8 214.7 1775.7 216.1" fill="none" stroke="#c4bfc6" stroke-width="1.6"/>
<path d="M1516.9 199.7 C1523.3 200.3 1542.6 204.8 1555.1 203.5 C1567.6 202.1 1576.1 193.9 1592.1 191.5 C1608.1 189.0 1631.6 183.4 1651.0 188.8 C1670.4 194.1 1691.8 209.4 1708.6 223.6 C1725.5 237.9 1734.3 258.5 1752.1 274.3 C1770.0 290.1 1805.1 311.1 1815.6 318.4" fill="none" stroke="#c4bfc6" stroke-width="1.6"/>
<path d="M1192.1 1577.2 C1183.7 1577.6 1156.0 1580.2 1141.6 1579.7 C1127.2 1579.1 1121.8 1574.7 1105.7 1573.8 C1089.6 1572.9 1067.5 1579.3 1045.1 1574.3 C1022.8 1569.3 989.6 1552.3 971.7 1543.8 C953.9 1535.2 943.7 1526.5 938.1 1523.1" fill="none" stroke="#c4bfc6" stroke-width="1.6"/>
<path d="M2239.2 1452.6 C2230.1 1448.1 2199.7 1433.9 2184.7 1425.6 C2169.7 1417.4 2161.0 1420.8 2149.3 1403.2 C2137.5 1385.7 2121.7 1348.5 2114.2 1320.4 C2106.8 1292.4 2106.4 1254.4 2104.7 1234.8 C2103.1 1215.3 2104.3 1208.5 2104.2 1203.2" fill="none" stroke="#c4bfc6" stroke-width="1.6"/>
<path d="M2024.2 1261.9 C2031.0 1271.7 2047.6 1301.6 2065.2 1320.9 C2082.7 1340.2 2110.4 1363.4 2129.4 1377.7 C2148.4 1392.0 2156.2 1402.0 2179.2 1406.9 C2202.3 1411.8 2240.6 1414.0 2267.7 1407.2 C2294.7 1400.4 2319.5 1377.7 2341.3 1366.3 C2363.2 1354.9 2389.2 1343.4 2398.7 1338.9" fill="none" stroke="#c4bfc6" stroke-width="1.6"/>
<path d="M1825.2 488.9 C1830.8 486.3 1845.6 475.8 1859.2 473.4 C1872.7 471.1 1892.4 470.4 1906.5 474.7 C1920.5 479.0 1927.1 486.7 1943.6 499.2 C1960.1 511.7 1984.9 538.7 2005.4 549.7 C2025.9 560.7 2056.2 562.4 2066.4 565.0" fill="none" stroke="#c4bfc6" stroke-width="1.6"/>
<path d="M853.2 138.3 C860.8 147.2 888.0 174.6 898.9 191.7 C909.8 208.8 911.9 220.0 918.3 240.9 C924.7 261.7 928.7 299.9 937.5 316.7 C946.2 333.6 965.4 337.8 971.0 342.0" fill="none" stroke="#c4bfc6" stroke-width="1.6"/>
<path d="M1639.8 305.8 C1635.8 315.2 1620.7 342.1 1616.0 362.1 C1611.3 382.2 1610.4 404.1 1611.5 426.1 C1612.7 448.0 1612.5 474.3 1622.9 493.6 C1633.2 512.9 1651.3 530.1 1673.9 541.9 C1696.5 553.7 1735.5 556.9 1758.5 564.5 C1781.5 572.0 1803.2 583.4 1812.1 587.2" fill="none" stroke="#c4bfc6" stroke-width="1.6"/>
<path d="M1526.1 1031.3 C1525.9 1021.5 1516.5 992.6 1524.4 972.2 C1532.4 951.8 1557.3 923.1 1573.9 908.9 C1590.4 894.8 1606.2 895.9 1623.9 887.2 C1641.6 878.4 1660.3 860.8 1679.9 856.4 C1699.5 851.9 1721.8 858.7 1741.4 860.3 C1760.9 861.9 1787.7 865.0 1797.0 865.9" fill="none" stroke="#c4bfc6" stroke-width="1.6"/>
<path d="M2515.8 573.9 C2524.4 580.7 2554.7 601.1 2567.5 614.7 C2580.3 628.4 2586.2 643.8 2592.7 655.9 C2599.2 668.0 2596.6 676.4 2606.6 687.1 C2616.6 697.9 2637.7 709.6 2652.7 720.4 C2667.6 731.3 2677.0 746.8 2696.1 752.1 C2715.3 757.4 2755.9 752.3 2767.8 752.3" fill="none" stroke="#c4bfc6" stroke-width="1.6"/>
<path d="M1756.6 450.9 C1745.3 458.7 1712.0 491.1 1688.4 497.7 C1664.7 504.3 1634.2 496.7 1614.9 490.4 C1595.5 484.2 1587.7 472.0 1572.4 460.2 C1557.1 448.5 1542.4 429.1 1522.9 419.9 C1503.4 410.8 1472.9 408.4 1455.5 405.4 C1438.0 402.3 1424.5 402.2 1418.3 401.5" fill="none" stroke="#c4bfc6" stroke-width="1.6"/>
<path d="M844.1 874.1 C851.4 875.0 872.9 879.8 888.4 879.4 C903.9 878.9 919.1 882.4 937.2 871.3 C955.3 860.2 978.5 825.4 997.0 812.7 C1015.4 800.0 1030.0 803.5 1047.8 795.0 C1065.6 786.5 1092.4 772.2 1103.8 761.8 C1115.2 751.3 1114.2 737.3 1116.2 732.4" fill="none" stroke="#c4bfc6" stroke-width="1.6"/>
<path d="M2504.2 554.5 C2498.1 551.1 2479.9 547.3 2467.6 533.6 C2455.3 519.9 2444.1 485.9 2430.4 472.5 C2416.6 459.1 2401.5 467.5 2385.4 453.2 C2369.3 439.0 2353.4 400.6 2333.7 387.0 C2314.1 373.4 2287.7 379.2 2267.4 371.4 C2247.1 363.7 2221.1 345.7 2211.8 340.5" fill="none" stroke="#c4bfc6" stroke-width="1.6"/>
<path d="M1770.5 446.5 C1778.5 445.6 1796.7 437.3 1818.5 441.3 C1840.3 445.2 1878.3 465.2 1901.3 470.3 C1924.3 475.3 1947.3 471.2 1956.5 471.4" fill="none" stroke="#c4bfc6" stroke-width="1.6"/>
<path d="M2465.0 595.4 C2471.2 592.9 2489.8 582.0 2502.2 580.2 C2514.5 578.3 2525.9 580.9 2539.1 584.5 C2552.4 588.1 2567.1 592.5 2581.9 601.8 C2596.8 611.1 2613.4 630.7 2628.2 640.2 C2643.0 649.6 2656.8 647.9 2670.8 658.5 C2684.8 669.1 2705.3 696.3 2712.2 703.9" fill="none" stroke="#c4bfc6" stroke-width="1.6"/>
<path d="M932.4 868.5 C940.2 869.2 965.5 870.3 978.9 872.7 C992.3 875.1 1001.8 873.3 1012.8 882.7 C1023.9 892.1 1034.2 912.6 1045.1 929.0 C1056.0 945.4 1072.9 972.4 1078.4 981.1" fill="none" stroke="#c4bfc6" stroke-width="1.6"/>
<path d="M791.0 994.9 C789.9 1005.6 780.0 1034.1 784.0 1058.7 C788.1 1083.2 805.4 1123.6 815.5 1142.3 C825.6 1160.9 837.3 1161.3 844.6 1170.8 C851.8 1180.3 856.1 1187.9 858.8 1199.1 C861.6 1210.4 860.8 1231.6 861.2 1238.1" fill="none" stroke="#c4bfc6" stroke-width="1.6"/>
<path d="M2503.0 1028.5 C2507.7 1015.4 2528.3 968.5 2531.5 950.0 C2534.8 931.5 2522.4 936.8 2522.6 917.4 C2522.8 897.9 2532.4 857.1 2532.8 833.4 C2533.2 809.7 2532.0 790.2 2525.2 774.9 C2518.3 759.5 2500.8 757.6 2491.6 741.3 C2482.4 725.0 2473.4 687.6 2469.7 676.8" fill="none" stroke="#c4bfc6" stroke-width="1.6"/>
<path d="M2674.7 1213.2 C2665.9 1216.4 2641.1 1227.9 2621.8 1232.2 C2602.6 1236.5 2580.7 1232.6 2559.3 1239.0 C2538.0 1245.4 2512.1 1264.3 2493.6 1270.7 C2475.1 1277.0 2456.0 1276.0 2448.5 1277.0" fill="none" stroke="#c4bfc6" stroke-width="1.6"/>
<path d="M1792.7 1376.6 C1781.7 1376.6 1748.1 1379.9 1726.9 1376.7 C1705.6 1373.6 1680.2 1365.9 1665.4 1357.8 C1650.5 1349.6 1647.1 1334.6 1637.6 1327.9 C1628.0 1321.2 1621.9 1322.4 1608.2 1317.7 C1594.5 1313.0 1564.0 1302.7 1555.1 1299.7" fill="none" stroke="#c4bfc6" stroke-width="1.6"/>
<path d="M1586.9 486.8 C1585.3 480.2 1579.4 464.6 1577.4 447.2 C1575.4 429.8 1572.2 404.1 1574.8 382.5 C1577.4 360.9 1589.9 328.4 1592.9 317.6" fill="none" stroke="#c4bfc6" stroke-width="1.6"/>
<path d="M808.4 731.9 C808.7 721.9 807.5 691.8 810.2 672.0 C812.9 652.2 821.7 630.4 824.6 613.1 C827.5 595.8 826.4 587.3 827.7 568.3 C829.0 549.3 829.6 519.8 832.3 498.9 C835.0 478.0 841.8 452.2 843.7 442.8" fill="none" stroke="#c4bfc6" stroke-width="1.6"/>
<path d="M1334.1 794.5 C1324.7 786.1 1291.4 757.6 1277.9 744.4 C1264.4 731.2 1261.0 729.7 1253.3 715.3 C1245.6 700.9 1235.3 667.5 1231.7 657.9" fill="none" stroke="#c4bfc6" stroke-width="1.6"/>
<path d="M2679.2 95.0 C2674.7 104.6 2662.5 129.7 2652.6 152.6 C2642.7 175.4 2635.4 213.1 2619.6 232.2 C2603.9 251.3 2582.8 258.2 2558.1 267.2 C2533.4 276.1 2486.0 282.8 2471.6 286.0" fill="none" stroke="#c4bfc6" stroke-width="1.6"/>
<path d="M1929.8 536.2 C1934.5 539.7 1945.6 551.5 1958.2 557.0 C1970.7 562.5 1988.2 556.1 2005.2 569.0 C2022.1 582.0 2044.9 620.6 2059.9 634.6 C2074.9 648.6 2089.2 649.9 2095.0 652.9" fill="none" stroke="#c4bfc6" stroke-width="1.6"/>
<path d="M1875.1 1591.1 C1874.0 1582.2 1866.3 1555.1 1868.1 1537.9 C1870.0 1520.8 1878.3 1501.8 1886.2 1488.3 C1894.0 1474.7 1906.9 1467.8 1915.2 1456.6 C1923.5 1445.5 1932.5 1427.1 1935.9 1421.2" fill="none" stroke="#c4bfc6" stroke-width="1.6"/>
<path d="M1803.5 337.3 C1805.5 349.7 1811.6 389.7 1815.5 411.9 C1819.5 434.0 1825.1 453.6 1827.2 470.1 C1829.3 486.7 1827.5 493.8 1828.1 511.0 C1828.6 528.2 1830.1 563.0 1830.5 573.4" fill="none" stroke="#c4bfc6" stroke-width="1.6"/>
<path d="M1541.7 161.2 C1538.4 170.8 1531.2 201.4 1521.6 218.9 C1511.9 236.4 1498.0 250.2 1483.7 266.3 C1469.4 282.5 1445.9 302.0 1435.7 315.9 C1425.5 329.8 1421.7 332.1 1422.5 349.6 C1423.3 367.2 1437.6 409.2 1440.6 421.1" fill="none" stroke="#c4bfc6" stroke-width="1.6"/>
<path d="M2259.9 296.9 C2265.4 303.0 2282.8 323.9 2292.8 333.7 C2302.8 343.5 2312.6 344.3 2320.0 355.7 C2327.4 367.1 2334.4 394.4 2337.2 402.1" fill="none" stroke="#c4bfc6" stroke-width="1.6"/>
<path d="M2247.6 873.6 C2256.3 878.3 2280.9 896.6 2299.8 901.9 C2318.6 907.2 2344.0 908.0 2360.5 905.4 C2376.9 902.9 2384.0 895.1 2398.5 886.5 C2413.0 877.9 2429.6 862.5 2447.4 853.9 C2465.2 845.3 2487.8 840.1 2505.4 835.0 C2523.0 829.8 2544.8 825.0 2552.7 823.0" fill="none" stroke="#c4bfc6" stroke-width="1.6"/>
<path d="M1607.0 658.9 C1614.2 652.7 1639.6 637.7 1650.4 622.0 C1661.2 606.3 1667.3 580.3 1671.8 564.8 C1676.3 549.4 1676.7 546.2 1677.4 529.1 C1678.0 512.1 1682.7 485.2 1675.6 462.5 C1668.6 439.7 1641.6 404.3 1634.8 392.6" fill="none" stroke="#c4bfc6" stroke-width="1.6"/>
<path d="M2200.2 818.6 C2205.6 820.2 2219.8 819.3 2232.7 828.5 C2245.6 837.7 2264.8 862.7 2277.4 873.6 C2290.0 884.6 2298.4 883.6 2308.5 894.2 C2318.7 904.9 2331.7 922.8 2338.2 937.5 C2344.7 952.1 2345.9 974.6 2347.5 982.1" fill="none" stroke="#c4bfc6" stroke-width="1.6"/>
<path d="M2305.5 270.8 C2297.4 272.5 2272.6 277.7 2256.9 281.0 C2241.2 284.4 2225.7 283.5 2211.1 290.9 C2196.6 298.3 2181.3 315.2 2169.4 325.4 C2157.4 335.5 2150.9 343.9 2139.4 351.9 C2127.9 359.8 2110.9 362.0 2100.3 372.9 C2089.7 383.7 2079.9 409.7 2075.8 417.0" fill="none" stroke="#c4bfc6" stroke-width="1.6"/>
<path d="M1548.0 317.5 C1544.3 313.8 1536.7 304.0 1526.1 295.0 C1515.6 286.1 1500.7 269.3 1484.7 263.8 C1468.8 258.2 1447.8 256.7 1430.5 261.9 C1413.2 267.1 1397.7 285.1 1380.8 295.0 C1363.9 304.9 1337.6 316.8 1328.9 321.2" fill="none" stroke="#c4bfc6" stroke-width="1.6"/>
<path d="M1353.7 472.3 C1362.4 471.5 1384.9 472.9 1405.8 467.2 C1426.7 461.4 1455.5 440.8 1479.0 437.7 C1502.5 434.6 1527.0 446.7 1546.7 448.5 C1566.4 450.3 1584.2 445.6 1597.2 448.4 C1610.1 451.1 1619.7 462.3 1624.3 465.1" fill="none" stroke="#c4bfc6" stroke-width="1.6"/>
<path d="M2120.2 416.8 C2127.5 422.2 2150.0 440.2 2164.0 449.6 C2178.0 458.9 2189.9 457.5 2204.2 472.9 C2218.6 488.3 2242.3 530.5 2249.9 542.0" fill="none" stroke="#c4bfc6" stroke-width="1.6"/>
<path d="M1466.8 1462.6 C1473.6 1466.3 1492.2 1476.4 1507.6 1484.7 C1523.0 1492.9 1539.6 1509.6 1559.1 1512.1 C1578.6 1514.7 1606.8 1505.8 1624.4 1500.2 C1641.9 1494.6 1657.6 1481.9 1664.2 1478.3" fill="none" stroke="#c4bfc6" stroke-width="1.6"/>
<path d="M1141.9 875.6 C1146.1 866.0 1153.0 835.5 1167.1 818.1 C1181.3 800.6 1212.7 791.4 1226.7 771.0 C1240.7 750.6 1238.1 715.9 1251.1 695.4 C1264.1 675.0 1288.6 658.4 1304.8 648.3 C1321.1 638.1 1337.9 640.8 1348.6 634.5 C1359.2 628.3 1365.5 614.9 1368.9 610.9" fill="none" stroke="#c4bfc6" stroke-width="1.6"/>
<path d="M2317.7 403.8 C2304.4 403.9 2261.4 398.8 2238.2 404.0 C2215.0 409.2 2197.8 424.9 2178.5 435.1 C2159.2 445.3 2137.7 455.3 2122.2 465.2 C2106.7 475.2 2091.6 489.8 2085.4 494.7" fill="none" stroke="#c4bfc6" stroke-width="1.6"/>
<path d="M2203.9 895.8 C2207.2 907.4 2224.0 942.1 2223.5 965.4 C2223.0 988.8 2215.7 1014.4 2200.9 1036.2 C2186.0 1057.9 2158.8 1082.0 2134.4 1095.9 C2110.1 1109.8 2068.0 1115.5 2054.7 1119.5" fill="none" stroke="#c4bfc6" stroke-width="1.6"/>
<path d="M1322.8 1371.1 C1313.4 1377.1 1283.1 1394.9 1266.0 1407.2 C1249.0 1419.4 1233.6 1431.3 1220.5 1444.6 C1207.4 1457.9 1202.9 1473.4 1187.3 1486.9 C1171.7 1500.5 1144.0 1510.2 1127.0 1525.6 C1110.0 1541.1 1097.8 1560.1 1085.5 1579.6 C1073.3 1599.2 1058.8 1632.4 1053.4 1642.9" fill="none" stroke="#c4bfc6" stroke-width="1.6"/>
<path d="M1068.6 1381.7 C1070.4 1390.8 1078.4 1415.8 1079.0 1436.0 C1079.6 1456.2 1080.3 1480.9 1072.3 1503.0 C1064.2 1525.2 1037.8 1549.3 1030.5 1569.0 C1023.3 1588.8 1028.8 1612.8 1028.5 1621.6" fill="none" stroke="#c4bfc6" stroke-width="1.6"/>
<path d="M2044.1 438.6 C2049.3 449.4 2069.4 478.1 2075.2 503.1 C2081.0 528.1 2075.5 567.3 2078.9 588.7 C2082.3 610.2 2092.8 624.7 2095.6 631.9" fill="none" stroke="#c4bfc6" stroke-width="1.6"/>
<path d="M700.0 150.0 C710.0 158.3 743.3 178.3 760.0 200.0 C776.7 221.7 783.3 258.3 800.0 280.0 C816.7 301.7 850.0 321.7 860.0 330.0" fill="none" stroke="#b7b2b8" stroke-width="2"/>
<path d="M930.0 350.0 C935.0 333.3 950.0 283.3 960.0 250.0 C970.0 216.7 983.3 176.7 990.0 150.0 C996.7 123.3 998.3 100.0 1000.0 90.0" fill="none" stroke="#b7b2b8" stroke-width="2"/>
<path d="M930.0 350.0 C921.7 361.7 891.7 391.7 880.0 420.0 C868.3 448.3 860.0 490.0 860.0 520.0 C860.0 550.0 876.7 586.7 880.0 600.0" fill="none" stroke="#b7b2b8" stroke-width="2"/>
<path d="M1000.0 400.0 C1010.0 413.3 1043.3 453.3 1060.0 480.0 C1076.7 506.7 1093.3 546.7 1100.0 560.0" fill="none" stroke="#b7b2b8" stroke-width="2"/>
<path d="M700.0 560.0 C716.7 566.7 766.7 590.0 800.0 600.0 C833.3 610.0 883.3 616.7 900.0 620.0" fill="none" stroke="#b7b2b8" stroke-width="2"/>
<path d="M1500.0 500.0 C1516.7 503.3 1566.7 510.0 1600.0 520.0 C1633.3 530.0 1666.7 546.7 1700.0 560.0 C1733.3 573.3 1783.3 593.3 1800.0 600.0" fill="none" stroke="#b7b2b8" stroke-width="2"/>
<path d="M1900.0 300.0 C1908.3 316.7 1933.3 366.7 1950.0 400.0 C1966.7 433.3 1991.7 483.3 2000.0 500.0" fill="none" stroke="#b7b2b8" stroke-width="2"/>
<path d="M2450.0 300.0 C2458.3 316.7 2475.0 370.0 2500.0 400.0 C2525.0 430.0 2583.3 466.7 2600.0 480.0" fill="none" stroke="#b7b2b8" stroke-width="2"/>
<path d="M2450.0 800.0 C2466.7 808.3 2516.7 833.3 2550.0 850.0 C2583.3 866.7 2633.3 891.7 2650.0 900.0" fill="none" stroke="#b7b2b8" stroke-width="2"/>
<path d="M1700.0 1100.0 C1716.7 1113.3 1775.0 1155.0 1800.0 1180.0 C1825.0 1205.0 1841.7 1238.3 1850.0 1250.0" fill="none" stroke="#b7b2b8" stroke-width="2"/>
<path d="M1850.0 1050.0 C1858.3 1066.7 1888.3 1116.7 1900.0 1150.0 C1911.7 1183.3 1916.7 1233.3 1920.0 1250.0" fill="none" stroke="#b7b2b8" stroke-width="2"/>
<path d="M2250.0 1000.0 C2258.3 1008.3 2275.0 1036.7 2300.0 1050.0 C2325.0 1063.3 2383.3 1075.0 2400.0 1080.0" fill="none" stroke="#b7b2b8" stroke-width="2"/>
<path d="M1200.0 1000.0 C1216.7 996.7 1266.7 986.7 1300.0 980.0 C1333.3 973.3 1383.3 963.3 1400.0 960.0" fill="none" stroke="#b7b2b8" stroke-width="2"/>
<path d="M800.0 1100.0 C816.7 1106.7 866.7 1130.0 900.0 1140.0 C933.3 1150.0 983.3 1156.7 1000.0 1160.0" fill="none" stroke="#b7b2b8" stroke-width="2"/>
<path d="M1100.0 1420.0 C1116.7 1426.7 1166.7 1446.7 1200.0 1460.0 C1233.3 1473.3 1266.7 1490.0 1300.0 1500.0 C1333.3 1510.0 1383.3 1516.7 1400.0 1520.0" fill="none" stroke="#b7b2b8" stroke-width="2"/>
<path d="M1500.0 1400.0 C1508.3 1416.7 1533.3 1470.0 1550.0 1500.0 C1566.7 1530.0 1591.7 1566.7 1600.0 1580.0" fill="none" stroke="#b7b2b8" stroke-width="2"/>
<path d="M2200.0 1050.0 C2205.0 1066.7 2221.7 1125.0 2230.0 1150.0 C2238.3 1175.0 2246.7 1191.7 2250.0 1200.0" fill="none" stroke="#b7b2b8" stroke-width="2"/>
<path d="M2300.0 1400.0 C2308.3 1416.7 2336.7 1466.8 2350.0 1500.0 C2363.3 1533.2 2375.0 1582.5 2380.0 1599.0" fill="none" stroke="#b7b2b8" stroke-width="2"/>
<path d="M1000.0 1460.0 C1008.3 1471.7 1033.3 1506.8 1050.0 1530.0 C1066.7 1553.2 1091.7 1587.5 1100.0 1599.0" fill="none" stroke="#b7b2b8" stroke-width="2"/>
<path d="M1550.0 600.0 C1558.3 616.7 1588.3 666.7 1600.0 700.0 C1611.7 733.3 1616.7 783.3 1620.0 800.0" fill="none" stroke="#b7b2b8" stroke-width="2"/>
<path d="M1250.0 800.0 C1258.3 816.7 1288.3 866.7 1300.0 900.0 C1311.7 933.3 1316.7 983.3 1320.0 1000.0" fill="none" stroke="#b7b2b8" stroke-width="2"/>
<path d="M2050.0 1400.0 C2058.3 1408.3 2083.3 1430.0 2100.0 1450.0 C2116.7 1470.0 2141.7 1508.3 2150.0 1520.0" fill="none" stroke="#b7b2b8" stroke-width="2"/>
<path d="M2500.0 1000.0 C2508.3 1016.7 2533.3 1075.0 2550.0 1100.0 C2566.7 1125.0 2591.7 1141.7 2600.0 1150.0" fill="none" stroke="#b7b2b8" stroke-width="2"/>
<path d="M850.0 1250.0 C858.3 1258.3 883.3 1288.3 900.0 1300.0 C916.7 1311.7 941.7 1316.7 950.0 1320.0" fill="none" stroke="#b7b2b8" stroke-width="2"/>
<path d="M1423.0 90.0 C1427.5 97.2 1454.5 110.7 1450.0 133.0 C1445.5 155.3 1413.8 195.5 1396.0 224.0 C1378.2 252.5 1356.3 286.2 1343.0 304.0 C1329.7 321.8 1325.0 322.0 1316.0 331.0 C1307.0 340.0 1298.0 348.2 1289.0 358.0 C1280.0 367.8 1274.5 372.2 1262.0 390.0 C1249.5 407.8 1222.8 445.3 1214.0 465.0 C1205.2 484.7 1209.8 494.7 1209.0 508.0 C1208.2 521.3 1218.0 529.0 1209.0 545.0 C1200.0 561.0 1172.8 586.2 1155.0 604.0 C1137.2 621.8 1119.8 637.7 1102.0 652.0 C1084.2 666.3 1079.3 690.8 1048.0 690.0 C1016.7 689.2 963.0 659.5 914.0 647.0 C865.0 634.5 789.7 622.2 754.0 615.0 C718.3 607.8 709.0 605.8 700.0 604.0" fill="none" stroke="#8a8a8a" stroke-width="2.2"/>
<path d="M1552.0 90.0 C1543.8 116.8 1516.5 206.3 1503.0 251.0 C1489.5 295.7 1481.7 329.5 1471.0 358.0 C1460.3 386.5 1438.0 395.3 1439.0 422.0 C1440.0 448.7 1466.3 488.5 1477.0 518.0 C1487.7 547.5 1496.8 572.2 1503.0 599.0 C1509.2 625.8 1512.2 628.8 1514.0 679.0 C1515.8 729.2 1509.7 854.5 1514.0 900.0 C1518.3 945.5 1535.7 943.3 1540.0 952.0" fill="none" stroke="#8a8a8a" stroke-width="2.2"/>
<path d="M1428.0 422.0 C1436.2 424.7 1446.5 426.3 1477.0 438.0 C1507.5 449.7 1573.8 481.3 1611.0 492.0 C1648.2 502.7 1685.2 500.3 1700.0 502.0" fill="none" stroke="#8a8a8a" stroke-width="2.2"/>
<path d="M1540.0 952.0 C1540.0 962.2 1546.7 994.7 1540.0 1013.0 C1533.3 1031.3 1523.8 1048.3 1500.0 1062.0 C1476.2 1075.7 1422.5 1083.5 1397.0 1095.0 C1371.5 1106.5 1361.5 1116.2 1347.0 1131.0 C1332.5 1145.8 1321.0 1158.0 1310.0 1184.0 C1299.0 1210.0 1289.8 1256.3 1281.0 1287.0 C1272.2 1317.7 1263.2 1349.0 1257.0 1368.0 C1250.8 1387.0 1255.0 1388.7 1244.0 1401.0 C1233.0 1413.3 1210.0 1431.7 1191.0 1442.0 C1172.0 1452.3 1147.0 1457.5 1130.0 1463.0 C1113.0 1468.5 1099.3 1463.5 1089.0 1475.0 C1078.7 1486.5 1071.5 1511.2 1068.0 1532.0 C1064.5 1552.8 1068.0 1588.7 1068.0 1600.0" fill="none" stroke="#8a8a8a" stroke-width="2.2"/>
<path d="M1347.0 1131.0 C1362.0 1122.8 1408.3 1095.7 1437.0 1082.0 C1465.7 1068.3 1502.7 1061.3 1519.0 1049.0 C1535.3 1036.7 1532.3 1014.8 1535.0 1008.0" fill="none" stroke="#8a8a8a" stroke-width="2.2"/>
<path d="M753.0 1600.0 C782.3 1575.7 887.3 1487.8 929.0 1454.0 C970.7 1420.2 987.3 1415.3 1003.0 1397.0 C1018.7 1378.7 1021.0 1362.3 1023.0 1344.0 C1025.0 1325.7 1016.3 1302.7 1015.0 1287.0 C1013.7 1271.3 1002.7 1269.8 1015.0 1250.0 C1027.3 1230.2 1051.5 1192.0 1089.0 1168.0 C1126.5 1144.0 1205.2 1118.3 1240.0 1106.0 C1274.8 1093.7 1284.3 1094.0 1298.0 1094.0 C1311.7 1094.0 1318.0 1104.0 1322.0 1106.0" fill="none" stroke="#8a8a8a" stroke-width="2.2"/>
<path d="M1326.0 1393.0 C1330.8 1393.0 1344.7 1386.2 1355.0 1393.0 C1365.3 1399.8 1374.3 1423.0 1388.0 1434.0 C1401.7 1445.0 1415.2 1457.0 1437.0 1459.0 C1458.8 1461.0 1493.2 1442.7 1519.0 1446.0 C1544.8 1449.3 1571.5 1462.7 1592.0 1479.0 C1612.5 1495.3 1631.7 1523.8 1642.0 1544.0 C1652.3 1564.2 1652.0 1590.7 1654.0 1600.0" fill="none" stroke="#8a8a8a" stroke-width="2.2"/>
<path d="M2128.0 90.0 C2137.0 93.5 2150.7 105.7 2182.0 111.0 C2213.3 116.3 2284.7 114.8 2316.0 122.0 C2347.3 129.2 2352.2 139.7 2370.0 154.0 C2387.8 168.3 2403.5 194.5 2423.0 208.0 C2442.5 221.5 2469.2 221.7 2487.0 235.0 C2504.8 248.3 2516.5 267.5 2530.0 288.0 C2543.5 308.5 2552.8 335.7 2568.0 358.0 C2583.2 380.3 2605.8 399.7 2621.0 422.0 C2636.2 444.3 2652.7 467.0 2659.0 492.0 C2665.3 517.0 2660.8 548.0 2659.0 572.0 C2657.2 596.0 2642.7 618.2 2648.0 636.0 C2653.3 653.8 2681.0 667.3 2691.0 679.0 C2701.0 690.7 2705.2 701.5 2708.0 706.0" fill="none" stroke="#8a8a8a" stroke-width="2.2"/>
<path d="M1984.0 90.0 C1984.8 104.3 1981.0 153.7 1989.0 176.0 C1997.0 198.3 2024.8 205.0 2032.0 224.0 C2039.2 243.0 2032.0 279.0 2032.0 290.0" fill="none" stroke="#8a8a8a" stroke-width="2.2"/>
<path d="M2198.0 990.0 C2209.8 1009.8 2241.3 1094.0 2269.0 1109.0 C2296.7 1124.0 2336.2 1073.7 2364.0 1080.0 C2391.8 1086.3 2412.2 1129.5 2436.0 1147.0 C2459.8 1164.5 2479.3 1171.5 2507.0 1185.0 C2534.7 1198.5 2570.2 1209.8 2602.0 1228.0 C2633.8 1246.2 2682.0 1283.0 2698.0 1294.0" fill="none" stroke="#8a8a8a" stroke-width="2.2"/>
<path d="M2693 1070 L2698 1294" fill="none" stroke="#8a8a8a" stroke-width="2.2"/>
<path d="M1739.0 1087.0 C1744.0 1085.0 1757.7 1081.0 1769.0 1075.0 C1780.3 1069.0 1795.3 1056.7 1807.0 1051.0 C1818.7 1045.3 1830.5 1041.7 1839.0 1041.0 C1847.5 1040.3 1848.2 1044.0 1858.0 1047.0 C1867.8 1050.0 1881.0 1057.3 1898.0 1059.0 C1915.0 1060.7 1941.8 1055.8 1960.0 1057.0 C1978.2 1058.2 1999.2 1064.5 2007.0 1066.0" fill="none" stroke="#f0b56a" stroke-width="3.4"/>
<path d="M700.0 422.0 C715.2 431.0 766.8 456.3 791.0 476.0 C815.2 495.7 828.8 515.0 845.0 540.0 C861.2 565.0 872.0 598.3 888.0 626.0 C904.0 653.7 925.0 682.8 941.0 706.0 C957.0 729.2 976.8 755.2 984.0 765.0" fill="none" stroke="#f0b56a" stroke-width="3.4"/>
<path d="M914.0 363.0 C910.5 375.5 910.8 412.2 893.0 438.0 C875.2 463.8 836.5 492.0 807.0 518.0 C777.5 544.0 731.2 581.3 716.0 594.0" fill="none" stroke="#f0b56a" stroke-width="3.4"/>
<path d="M1321.0 358.0 C1324.7 375.8 1336.7 429.3 1343.0 465.0 C1349.3 500.7 1352.8 545.2 1359.0 572.0 C1365.2 598.8 1364.8 587.7 1380.0 626.0 C1395.2 664.3 1438.3 772.7 1450.0 802.0" fill="none" stroke="#f0b56a" stroke-width="3.4"/>
<path d="M1086.0 701.0 C1098.5 705.3 1136.0 712.8 1161.0 727.0 C1186.0 741.2 1210.2 775.2 1236.0 786.0 C1261.8 796.8 1284.8 790.2 1316.0 792.0 C1347.2 793.8 1391.8 798.0 1423.0 797.0 C1454.2 796.0 1489.7 787.8 1503.0 786.0" fill="none" stroke="#f0b56a" stroke-width="3.4"/>
<path d="M1584.0 492.0 C1570.5 505.3 1525.3 549.7 1503.0 572.0 C1480.7 594.3 1463.8 604.7 1450.0 626.0 C1436.2 647.3 1425.0 687.7 1420.0 700.0" fill="none" stroke="#f0b56a" stroke-width="3.4"/>
<path d="M700.0 177.0 C708.2 171.3 735.8 152.5 749.0 143.0 C762.2 133.5 770.5 128.8 779.0 120.0 C787.5 111.2 796.5 95.0 800.0 90.0" fill="none" stroke="#f0b56a" stroke-width="3.4"/>
<path d="M1139.0 90.0 C1142.7 93.2 1152.8 104.0 1161.0 109.0 C1169.2 114.0 1176.7 112.3 1188.0 120.0 C1199.3 127.7 1212.0 146.7 1229.0 155.0 C1246.0 163.3 1271.5 170.8 1290.0 170.0 C1308.5 169.2 1321.7 158.3 1340.0 150.0 C1358.3 141.7 1383.3 130.0 1400.0 120.0 C1416.7 110.0 1433.3 95.0 1440.0 90.0" fill="none" stroke="#f0b56a" stroke-width="3.4"/>
<path d="M1459.0 837.0 C1456.8 852.7 1456.3 908.5 1446.0 931.0 C1435.7 953.5 1412.0 958.3 1397.0 972.0 C1382.0 985.7 1367.7 991.7 1356.0 1013.0 C1344.3 1034.3 1332.7 1079.0 1327.0 1100.0 C1321.3 1121.0 1322.8 1117.5 1322.0 1139.0 C1321.2 1160.5 1317.8 1204.3 1322.0 1229.0 C1326.2 1253.7 1342.8 1277.3 1347.0 1287.0" fill="none" stroke="#f0b56a" stroke-width="3.4"/>
<path d="M1560.0 1057.0 C1549.7 1068.7 1519.8 1103.7 1498.0 1127.0 C1476.2 1150.3 1446.0 1174.5 1429.0 1197.0 C1412.0 1219.5 1408.3 1240.2 1396.0 1262.0 C1383.7 1283.8 1363.2 1306.8 1355.0 1328.0 C1346.8 1349.2 1347.0 1358.3 1347.0 1389.0 C1347.0 1419.7 1355.7 1476.8 1355.0 1512.0 C1354.3 1547.2 1345.0 1585.3 1343.0 1600.0" fill="none" stroke="#f0b56a" stroke-width="3.4"/>
<path d="M815.0 1221.0 C833.3 1212.8 900.5 1186.3 925.0 1172.0 C949.5 1157.7 955.8 1143.2 962.0 1135.0 C968.2 1126.8 962.0 1125.0 962.0 1123.0" fill="none" stroke="#f0b56a" stroke-width="3.4"/>
<path d="M700.0 1242.0 C710.2 1245.3 741.8 1265.5 761.0 1262.0 C780.2 1258.5 806.0 1227.8 815.0 1221.0" fill="none" stroke="#f0b56a" stroke-width="3.4"/>
<path d="M1244.0 1258.0 C1235.2 1273.0 1208.0 1316.7 1191.0 1348.0 C1174.0 1379.3 1162.5 1418.7 1142.0 1446.0 C1121.5 1473.3 1088.5 1486.3 1068.0 1512.0 C1047.5 1537.7 1027.2 1585.3 1019.0 1600.0" fill="none" stroke="#f0b56a" stroke-width="3.4"/>
<path d="M1600.0 1061.0 C1602.2 1083.7 1603.3 1170.3 1613.0 1197.0 C1622.7 1223.7 1643.5 1211.5 1658.0 1221.0 C1672.5 1230.5 1683.0 1244.2 1700.0 1254.0 C1717.0 1263.8 1750.0 1275.7 1760.0 1280.0" fill="none" stroke="#f0b56a" stroke-width="3.4"/>
<path d="M2525.0 90.0 C2530.3 101.7 2533.8 154.7 2557.0 160.0 C2580.2 165.3 2638.8 131.8 2664.0 122.0 C2689.2 112.2 2700.7 104.5 2708.0 101.0" fill="none" stroke="#f0b56a" stroke-width="3.4"/>
<path d="M2450 122 L2557 160" fill="none" stroke="#f0b56a" stroke-width="3.4"/>
<path d="M2637.0 652.0 C2628.2 665.5 2601.8 701.7 2584.0 733.0 C2566.2 764.3 2543.5 812.2 2530.0 840.0 C2516.5 867.8 2511.3 873.3 2503.0 900.0 C2494.7 926.7 2483.8 983.3 2480.0 1000.0" fill="none" stroke="#f0b56a" stroke-width="3.4"/>
<path d="M2434.0 529.0 C2441.2 536.2 2460.0 551.5 2477.0 572.0 C2494.0 592.5 2516.3 636.8 2536.0 652.0 C2555.7 667.2 2576.0 665.0 2595.0 663.0 C2614.0 661.0 2640.8 643.8 2650.0 640.0" fill="none" stroke="#f0b56a" stroke-width="3.4"/>
<path d="M2650.0 880.0 C2651.7 888.0 2656.0 896.2 2660.0 928.0 C2664.0 959.8 2667.7 1023.5 2674.0 1071.0 C2680.3 1118.5 2694.0 1189.3 2698.0 1213.0" fill="none" stroke="#f0b56a" stroke-width="3.4"/>
<path d="M2079.0 990.0 C2090.8 1007.3 2129.5 1056.8 2150.0 1094.0 C2170.5 1131.2 2195.7 1177.2 2202.0 1213.0 C2208.3 1248.8 2196.7 1273.2 2188.0 1309.0 C2179.3 1344.8 2161.8 1392.3 2150.0 1428.0 C2138.2 1463.7 2125.0 1494.3 2117.0 1523.0 C2109.0 1551.7 2104.5 1587.2 2102.0 1600.0" fill="none" stroke="#f0b56a" stroke-width="3.4"/>
<path d="M2341.0 928.0 C2329.0 955.7 2290.5 1043.3 2269.0 1094.0 C2247.5 1144.7 2221.5 1209.0 2212.0 1232.0" fill="none" stroke="#f0b56a" stroke-width="3.4"/>
<path d="M2412.0 1332.0 C2423.8 1351.8 2467.2 1406.3 2483.0 1451.0 C2498.8 1495.7 2503.0 1575.2 2507.0 1600.0" fill="none" stroke="#f0b56a" stroke-width="3.4"/>
<path d="M1879.0 1494.0 C1904.3 1494.0 1981.8 1492.3 2031.0 1494.0 C2080.2 1495.7 2118.5 1508.7 2174.0 1504.0 C2229.5 1499.3 2312.5 1474.0 2364.0 1466.0 C2415.5 1458.0 2431.3 1466.3 2483.0 1456.0 C2534.7 1445.7 2642.2 1412.7 2674.0 1404.0" fill="none" stroke="#f0b56a" stroke-width="3.4"/>
<path d="M2331 1366 L2436 1328" fill="none" stroke="#f0b56a" stroke-width="3.4"/>
<path d="M1600.0 1532.0 C1608.3 1526.7 1633.3 1510.3 1650.0 1500.0 C1666.7 1489.7 1691.7 1475.0 1700.0 1470.0" fill="none" stroke="#f0b56a" stroke-width="3.4"/>
<path d="M1520.0 620.0 C1526.7 633.3 1546.7 676.7 1560.0 700.0 C1573.3 723.3 1585.0 743.3 1600.0 760.0 C1615.0 776.7 1641.7 793.3 1650.0 800.0" fill="none" stroke="#f0b56a" stroke-width="3.4"/>
<path d="M1850.0 700.0 C1858.3 716.7 1883.3 770.0 1900.0 800.0 C1916.7 830.0 1941.7 866.7 1950.0 880.0" fill="none" stroke="#f0b56a" stroke-width="3.4"/>
<path d="M1540.0 300.0 C1550.0 308.3 1581.7 336.7 1600.0 350.0 C1618.3 363.3 1641.7 375.0 1650.0 380.0" fill="none" stroke="#f0b56a" stroke-width="3.4"/>
<path d="M1572.0 1049.0 C1576.8 1052.5 1589.3 1062.5 1601.0 1070.0 C1612.7 1077.5 1628.8 1093.5 1642.0 1094.0 C1655.2 1094.5 1670.3 1077.0 1680.0 1073.0 C1689.7 1069.0 1691.2 1067.3 1700.0 1070.0 C1708.8 1072.7 1724.8 1079.2 1733.0 1089.0 C1741.2 1098.8 1739.7 1123.0 1749.0 1129.0 C1758.3 1135.0 1777.3 1124.7 1789.0 1125.0 C1800.7 1125.3 1810.7 1127.2 1819.0 1131.0 C1827.3 1134.8 1832.5 1143.5 1839.0 1148.0 C1845.5 1152.5 1848.2 1155.3 1858.0 1158.0 C1867.8 1160.7 1884.7 1159.7 1898.0 1164.0 C1911.3 1168.3 1927.7 1179.0 1938.0 1184.0 C1948.3 1189.0 1942.8 1186.7 1960.0 1194.0 C1977.2 1201.3 2027.5 1222.3 2041.0 1228.0" fill="none" stroke="#f08f74" stroke-width="4.2" stroke-linejoin="round"/>
<path d="M1527.0 1172.0 C1539.3 1168.7 1578.8 1161.5 1601.0 1152.0 C1623.2 1142.5 1643.5 1122.5 1660.0 1115.0 C1676.5 1107.5 1689.3 1107.0 1700.0 1107.0 C1710.7 1107.0 1715.8 1111.3 1724.0 1115.0 C1732.2 1118.7 1744.8 1126.7 1749.0 1129.0" fill="none" stroke="#f08f74" stroke-width="4.2" stroke-linejoin="round"/>
<path d="M700.0 620.0 C717.8 613.8 771.3 600.0 807.0 583.0 C842.7 566.0 881.8 529.7 914.0 518.0 C946.2 506.3 966.0 518.3 1000.0 513.0 C1034.0 507.7 1090.3 494.8 1118.0 486.0 C1145.7 477.2 1150.0 470.7 1166.0 460.0 C1182.0 449.3 1199.7 435.5 1214.0 422.0 C1228.3 408.5 1239.5 391.5 1252.0 379.0 C1264.5 366.5 1282.8 352.3 1289.0 347.0" fill="none" stroke="#f08f74" stroke-width="4.2" stroke-linejoin="round"/>
<path d="M700.0 642.0 C709.0 640.2 740.7 629.3 754.0 631.0 C767.3 632.7 751.5 646.7 780.0 652.0 C808.5 657.3 886.5 657.7 925.0 663.0 C963.5 668.3 986.0 679.5 1011.0 684.0 C1036.0 688.5 1055.5 695.3 1075.0 690.0 C1094.5 684.7 1110.2 660.0 1128.0 652.0 C1145.8 644.0 1171.7 655.3 1182.0 642.0 C1192.3 628.7 1188.2 588.2 1190.0 572.0 C1191.8 555.8 1185.3 558.3 1193.0 545.0 C1200.7 531.7 1220.0 511.7 1236.0 492.0 C1252.0 472.3 1273.8 443.2 1289.0 427.0 C1304.2 410.8 1309.2 403.0 1327.0 395.0 C1344.8 387.0 1384.5 381.7 1396.0 379.0" fill="none" stroke="#f08f74" stroke-width="4.2" stroke-linejoin="round"/>
<path d="M1048.0 706.0 C1036.3 715.0 997.7 737.7 978.0 760.0 C958.3 782.3 940.7 816.7 930.0 840.0 C919.3 863.3 916.7 890.0 914.0 900.0" fill="none" stroke="#f08f74" stroke-width="4.2" stroke-linejoin="round"/>
<path d="M1150 808 L1209 900" fill="none" stroke="#f08f74" stroke-width="4.2" stroke-linejoin="round"/>
<path d="M700.0 292.0 C706.8 291.5 723.8 289.0 741.0 289.0 C758.2 289.0 787.7 289.8 803.0 292.0 C818.3 294.2 826.2 296.3 833.0 302.0 C839.8 307.7 840.0 320.5 844.0 326.0 C848.0 331.5 850.3 332.7 857.0 335.0 C863.7 337.3 871.8 337.7 884.0 340.0 C896.2 342.3 913.7 346.2 930.0 349.0 C946.3 351.8 966.2 358.5 982.0 357.0 C997.8 355.5 1013.2 346.0 1025.0 340.0 C1036.8 334.0 1043.8 325.2 1053.0 321.0 C1062.2 316.8 1071.0 314.8 1080.0 315.0 C1089.0 315.2 1098.8 323.2 1107.0 322.0 C1115.2 320.8 1122.7 309.2 1129.0 308.0 C1135.3 306.8 1139.7 310.3 1145.0 315.0 C1150.3 319.7 1153.8 334.0 1161.0 336.0 C1168.2 338.0 1179.8 326.7 1188.0 327.0 C1196.2 327.3 1199.7 335.0 1210.0 338.0 C1220.3 341.0 1237.5 343.3 1250.0 345.0 C1262.5 346.7 1272.7 339.0 1285.0 348.0 C1297.3 357.0 1313.5 388.2 1324.0 399.0 C1334.5 409.8 1334.0 414.8 1348.0 413.0 C1362.0 411.2 1395.3 397.5 1408.0 388.0 C1420.7 378.5 1413.7 360.8 1424.0 356.0 C1434.3 351.2 1451.5 360.0 1470.0 359.0 C1488.5 358.0 1518.3 352.8 1535.0 350.0 C1551.7 347.2 1559.5 345.8 1570.0 342.0 C1580.5 338.2 1588.8 329.0 1598.0 327.0 C1607.2 325.0 1620.5 329.5 1625.0 330.0" fill="none" stroke="#f08f74" stroke-width="4.2" stroke-linejoin="round"/>
<path d="M1344.0 90.0 C1343.3 99.0 1339.8 129.0 1340.0 144.0 C1340.2 159.0 1344.8 166.3 1345.0 180.0 C1345.2 193.7 1339.8 214.8 1341.0 226.0 C1342.2 237.2 1346.8 241.0 1352.0 247.0 C1357.2 253.0 1365.0 258.8 1372.0 262.0 C1379.0 265.2 1382.2 261.2 1394.0 266.0 C1405.8 270.8 1432.5 280.5 1443.0 291.0 C1453.5 301.5 1452.5 317.3 1457.0 329.0 C1461.5 340.7 1462.8 346.2 1470.0 361.0 C1477.2 375.8 1490.0 402.2 1500.0 418.0 C1510.0 433.8 1517.8 445.2 1530.0 456.0 C1542.2 466.8 1556.8 477.2 1573.0 483.0 C1589.2 488.8 1618.0 489.7 1627.0 491.0" fill="none" stroke="#f08f74" stroke-width="4.2" stroke-linejoin="round"/>
<path d="M1040.0 722.0 C1029.8 728.2 996.0 743.3 979.0 759.0 C962.0 774.7 949.0 797.5 938.0 816.0 C927.0 834.5 918.5 855.0 913.0 870.0 C907.5 885.0 914.5 890.3 905.0 906.0 C895.5 921.7 869.7 951.0 856.0 964.0 C842.3 977.0 838.7 977.2 823.0 984.0 C807.3 990.8 779.0 1003.5 762.0 1005.0 C745.0 1006.5 731.3 997.2 721.0 993.0 C710.7 988.8 703.5 982.2 700.0 980.0" fill="none" stroke="#f08f74" stroke-width="4.2" stroke-linejoin="round"/>
<path d="M762.0 1005.0 C781.7 1006.2 853.5 1006.0 880.0 1012.0 C906.5 1018.0 906.0 1032.8 921.0 1041.0 C936.0 1049.2 948.8 1053.5 970.0 1061.0 C991.2 1068.5 1019.3 1077.3 1048.0 1086.0 C1076.7 1094.7 1109.3 1111.0 1142.0 1113.0 C1174.7 1115.0 1219.5 1101.8 1244.0 1098.0 C1268.5 1094.2 1273.2 1094.0 1289.0 1090.0 C1304.8 1086.0 1325.3 1077.3 1339.0 1074.0 C1352.7 1070.7 1362.8 1068.0 1371.0 1070.0 C1379.2 1072.0 1366.2 1090.8 1388.0 1086.0 C1409.8 1081.2 1477.5 1047.8 1502.0 1041.0 C1526.5 1034.2 1523.3 1043.7 1535.0 1045.0 C1546.7 1046.3 1565.8 1048.3 1572.0 1049.0" fill="none" stroke="#f08f74" stroke-width="4.2" stroke-linejoin="round"/>
<path d="M1151.0 804.0 C1157.8 815.7 1179.0 860.3 1192.0 874.0 C1205.0 887.7 1220.2 869.7 1229.0 886.0 C1237.8 902.3 1241.7 950.8 1245.0 972.0 C1248.3 993.2 1242.8 998.0 1249.0 1013.0 C1255.2 1028.0 1275.2 1047.5 1282.0 1062.0 C1288.8 1076.5 1288.7 1093.7 1290.0 1100.0" fill="none" stroke="#f08f74" stroke-width="4.2" stroke-linejoin="round"/>
<path d="M1500.0 808.0 C1513.7 804.7 1557.0 796.2 1582.0 788.0 C1607.0 779.8 1638.7 763.8 1650.0 759.0" fill="none" stroke="#f08f74" stroke-width="4.2" stroke-linejoin="round"/>
<path d="M1236.0 1111.0 C1234.7 1114.3 1240.2 1122.8 1228.0 1131.0 C1215.8 1139.2 1176.0 1149.8 1163.0 1160.0 C1150.0 1170.2 1162.3 1183.2 1150.0 1192.0 C1137.7 1200.8 1104.0 1210.8 1089.0 1213.0 C1074.0 1215.2 1067.5 1203.7 1060.0 1205.0 C1052.5 1206.3 1052.2 1210.8 1044.0 1221.0 C1035.8 1231.2 1019.2 1251.0 1011.0 1266.0 C1002.8 1281.0 1000.5 1295.3 995.0 1311.0 C989.5 1326.7 983.5 1349.0 978.0 1360.0 C972.5 1371.0 970.2 1366.7 962.0 1377.0 C953.8 1387.3 939.8 1409.2 929.0 1422.0 C918.2 1434.8 912.7 1443.8 897.0 1454.0 C881.3 1464.2 852.8 1470.7 835.0 1483.0 C817.2 1495.3 804.3 1508.5 790.0 1528.0 C775.7 1547.5 755.8 1588.0 749.0 1600.0" fill="none" stroke="#f08f74" stroke-width="4.2" stroke-linejoin="round"/>
<path d="M1388.0 1115.0 C1401.7 1121.2 1451.0 1142.5 1470.0 1152.0 C1489.0 1161.5 1491.8 1168.7 1502.0 1172.0 C1512.2 1175.3 1526.8 1167.8 1531.0 1172.0 C1535.2 1176.2 1518.8 1185.3 1527.0 1197.0 C1535.2 1208.7 1562.3 1221.7 1580.0 1242.0 C1597.7 1262.3 1617.3 1295.2 1633.0 1319.0 C1648.7 1342.8 1662.8 1372.7 1674.0 1385.0 C1685.2 1397.3 1689.0 1385.5 1700.0 1393.0 C1711.0 1400.5 1733.3 1423.8 1740.0 1430.0" fill="none" stroke="#f08f74" stroke-width="4.2" stroke-linejoin="round"/>
<path d="M1208.0 1360.0 C1217.5 1367.5 1247.3 1396.2 1265.0 1405.0 C1282.7 1413.8 1297.7 1414.3 1314.0 1413.0 C1330.3 1411.7 1348.0 1389.3 1363.0 1397.0 C1378.0 1404.7 1384.8 1448.7 1404.0 1459.0 C1423.2 1469.3 1452.0 1458.3 1478.0 1459.0 C1504.0 1459.7 1523.0 1461.0 1560.0 1463.0 C1597.0 1465.0 1666.7 1469.2 1700.0 1471.0 C1733.3 1472.8 1750.0 1473.5 1760.0 1474.0" fill="none" stroke="#f08f74" stroke-width="4.2" stroke-linejoin="round"/>
<path d="M921.0 1430.0 C913.5 1435.5 892.3 1451.5 876.0 1463.0 C859.7 1474.5 845.5 1476.2 823.0 1499.0 C800.5 1521.8 754.7 1583.2 741.0 1600.0" fill="none" stroke="#f08f74" stroke-width="4.2" stroke-linejoin="round"/>
<path d="M725.0 1123.0 C729.7 1118.8 749.0 1109.7 753.0 1098.0 C757.0 1086.3 746.2 1067.3 749.0 1053.0 C751.8 1038.7 766.5 1018.8 770.0 1012.0" fill="none" stroke="#f08f74" stroke-width="4.2" stroke-linejoin="round"/>
<path d="M704.0 1000.0 C708.2 1008.2 723.0 1032.3 729.0 1049.0 C735.0 1065.7 738.2 1091.5 740.0 1100.0" fill="none" stroke="#f08f74" stroke-width="4.2" stroke-linejoin="round"/>
<path d="M2236.0 90.0 C2235.0 104.3 2235.3 156.3 2230.0 176.0 C2224.7 195.7 2220.8 195.5 2204.0 208.0 C2187.2 220.5 2150.5 235.0 2129.0 251.0 C2107.5 267.0 2089.3 297.5 2075.0 304.0 C2060.7 310.5 2048.3 292.3 2043.0 290.0" fill="none" stroke="#f08f74" stroke-width="4.2" stroke-linejoin="round"/>
<path d="M1764.0 90.0 C1765.0 99.0 1771.7 126.2 1770.0 144.0 C1768.3 161.8 1750.5 173.0 1754.0 197.0 C1757.5 221.0 1784.8 272.8 1791.0 288.0" fill="none" stroke="#f08f74" stroke-width="4.2" stroke-linejoin="round"/>
<path d="M2557.0 90.0 C2558.8 110.5 2563.5 168.3 2568.0 213.0 C2572.5 257.7 2576.8 307.0 2584.0 358.0 C2591.2 409.0 2601.2 478.8 2611.0 519.0 C2620.8 559.2 2636.0 581.2 2643.0 599.0 C2650.0 616.8 2649.5 621.5 2653.0 626.0 C2656.5 630.5 2654.8 627.0 2664.0 626.0 C2673.2 625.0 2700.7 621.0 2708.0 620.0" fill="none" stroke="#f08f74" stroke-width="4.2" stroke-linejoin="round"/>
<path d="M2041.0 1228.0 C2050.5 1231.8 2080.7 1247.8 2098.0 1251.0 C2115.3 1254.2 2116.5 1240.5 2145.0 1247.0 C2173.5 1253.5 2232.5 1279.0 2269.0 1290.0 C2305.5 1301.0 2336.2 1306.7 2364.0 1313.0 C2391.8 1319.3 2416.2 1328.7 2436.0 1328.0 C2455.8 1327.3 2459.2 1314.7 2483.0 1309.0 C2506.8 1303.3 2547.2 1298.0 2579.0 1294.0 C2610.8 1290.0 2652.5 1285.7 2674.0 1285.0 C2695.5 1284.3 2702.3 1289.2 2708.0 1290.0" fill="none" stroke="#f08f74" stroke-width="4.2" stroke-linejoin="round"/>
<path d="M2074.0 990.0 C2062.8 1002.7 2034.0 1035.2 2007.0 1066.0 C1980.0 1096.8 1943.7 1138.5 1912.0 1175.0 C1880.3 1211.5 1843.2 1246.8 1817.0 1285.0 C1790.8 1323.2 1771.0 1373.8 1755.0 1404.0 C1739.0 1434.2 1738.5 1449.3 1721.0 1466.0 C1703.5 1482.7 1661.8 1497.7 1650.0 1504.0" fill="none" stroke="#f08f74" stroke-width="4.2" stroke-linejoin="round"/>
<path d="M2388.0 966.0 C2403.8 971.5 2451.2 977.7 2483.0 999.0 C2514.8 1020.3 2555.2 1062.2 2579.0 1094.0 C2602.8 1125.8 2610.2 1163.8 2626.0 1190.0 C2641.8 1216.2 2660.3 1232.7 2674.0 1251.0 C2687.7 1269.3 2702.3 1291.8 2708.0 1300.0" fill="none" stroke="#f08f74" stroke-width="4.2" stroke-linejoin="round"/>
<path d="M2126.0 1600.0 C2149.8 1593.5 2213.3 1571.5 2269.0 1561.0 C2324.7 1550.5 2396.5 1539.3 2460.0 1537.0 C2523.5 1534.7 2608.7 1549.3 2650.0 1547.0 C2691.3 1544.7 2698.3 1527.0 2708.0 1523.0" fill="none" stroke="#f08f74" stroke-width="4.2" stroke-linejoin="round"/>
<path d="M2708.0 1380.0 C2704.7 1391.8 2693.7 1414.3 2688.0 1451.0 C2682.3 1487.7 2676.3 1575.2 2674.0 1600.0" fill="none" stroke="#f08f74" stroke-width="4.2" stroke-linejoin="round"/>
<path d="M1505.0 90.0 C1504.0 92.7 1499.3 98.3 1499.0 106.0 C1498.7 113.7 1506.8 125.5 1503.0 136.0 C1499.2 146.5 1479.7 156.3 1476.0 169.0 C1472.3 181.7 1482.0 199.3 1481.0 212.0 C1480.0 224.7 1475.8 232.3 1470.0 245.0 C1464.2 257.7 1452.3 274.5 1446.0 288.0 C1439.7 301.5 1436.2 313.8 1432.0 326.0 C1427.8 338.2 1425.0 349.2 1421.0 361.0 C1417.0 372.8 1412.5 385.2 1408.0 397.0 C1403.5 408.8 1398.2 416.5 1394.0 432.0 C1389.8 447.5 1382.5 471.7 1383.0 490.0 C1383.5 508.3 1387.8 523.2 1397.0 542.0 C1406.2 560.8 1425.0 581.2 1438.0 603.0 C1451.0 624.8 1464.7 649.0 1475.0 673.0 C1485.3 697.0 1497.0 717.7 1500.0 747.0 C1503.0 776.3 1494.8 818.3 1493.0 849.0 C1491.2 879.7 1494.7 907.0 1489.0 931.0 C1483.3 955.0 1464.7 967.8 1459.0 993.0 C1453.3 1018.2 1461.5 1059.0 1455.0 1082.0 C1448.5 1105.0 1434.0 1112.7 1420.0 1131.0 C1406.0 1149.3 1387.3 1175.7 1371.0 1192.0 C1354.7 1208.3 1341.0 1216.7 1322.0 1229.0 C1303.0 1241.3 1273.3 1252.3 1257.0 1266.0 C1240.7 1279.7 1235.0 1291.8 1224.0 1311.0 C1213.0 1330.2 1201.2 1360.5 1191.0 1381.0 C1180.8 1401.5 1176.7 1415.7 1163.0 1434.0 C1149.3 1452.3 1121.3 1471.2 1109.0 1491.0 C1096.7 1510.8 1097.2 1534.8 1089.0 1553.0 C1080.8 1571.2 1064.8 1592.2 1060.0 1600.0" fill="none" stroke="#e16881" stroke-width="5" stroke-linejoin="round"/>
<path d="M1477.0 681.0 C1470.5 686.5 1461.5 701.0 1438.0 714.0 C1414.5 727.0 1359.8 745.7 1336.0 759.0 C1312.2 772.3 1322.3 785.8 1295.0 794.0 C1267.7 802.2 1199.3 806.3 1172.0 808.0 C1144.7 809.7 1144.7 800.5 1131.0 804.0 C1117.3 807.5 1103.0 817.3 1090.0 829.0 C1077.0 840.7 1070.2 856.3 1053.0 874.0 C1035.8 891.7 1006.2 919.7 987.0 935.0 C967.8 950.3 951.7 961.8 938.0 966.0 C924.3 970.2 918.7 960.3 905.0 960.0 C891.3 959.7 864.2 963.3 856.0 964.0" fill="none" stroke="#e16881" stroke-width="5" stroke-linejoin="round"/>
<path d="M2139.0 90.0 C2150.7 101.7 2179.5 137.7 2209.0 160.0 C2238.5 182.3 2282.2 201.7 2316.0 224.0 C2349.8 246.3 2387.0 275.3 2412.0 294.0 C2437.0 312.7 2448.0 314.7 2466.0 336.0 C2484.0 357.3 2500.3 395.2 2520.0 422.0 C2539.7 448.8 2560.0 465.7 2584.0 497.0 C2608.0 528.3 2646.2 579.7 2664.0 610.0 C2681.8 640.3 2683.7 658.5 2691.0 679.0 C2698.3 699.5 2705.2 724.0 2708.0 733.0" fill="none" stroke="#e16881" stroke-width="5" stroke-linejoin="round"/>
<rect x="1045" y="838" width="55" height="34" rx="4" fill="#f3cbd3" stroke="#d6a0ab" stroke-width="2"/>
<text x="1072.5" y="863" font-family="Liberation Sans" font-size="21" fill="#5a2a35" text-anchor="middle">M50</text>
<path d="M1427 1036 l3 9 9 5 v3 l-9 -2 -1 8 4 3 v2 l-6 -2 -6 2 v-2 l4 -3 -1 -8 -9 2 v-3 l9 -5z" fill="#8461c4"/>
<path d="M1986 1526 l3 9 9 5 v3 l-9 -2 -1 8 4 3 v2 l-6 -2 -6 2 v-2 l4 -3 -1 -8 -9 2 v-3 l9 -5z" fill="#8461c4"/>
<path d="M2663 1168 l3 9 9 5 v3 l-9 -2 -1 8 4 3 v2 l-6 -2 -6 2 v-2 l4 -3 -1 -8 -9 2 v-3 l9 -5z" fill="#8461c4"/>
<path d="M1586 1571 l3 9 9 5 v3 l-9 -2 -1 8 4 3 v2 l-6 -2 -6 2 v-2 l4 -3 -1 -8 -9 2 v-3 l9 -5z" fill="#8461c4"/>
<defs><linearGradient id="tsh" x1="0" y1="0" x2="0" y2="1"><stop offset="0" stop-color="#000" stop-opacity="0.22"/><stop offset="1" stop-color="#000" stop-opacity="0"/></linearGradient></defs><rect x="700" y="90" width="2008" height="18" fill="url(#tsh)"/>
</svg>
<svg class="abs" style="left:0;top:0" width="2006" height="1509" viewBox="700 90 2006 1509" font-family="Liberation Sans">
<text x="1993" y="102" font-size="22" fill="#3d3d3d" stroke="#fff" stroke-opacity="0.75" stroke-width="4" paint-order="stroke" text-anchor="middle">Henley-in-</text>
<text x="1993" y="127" font-size="22" fill="#3d3d3d" stroke="#fff" stroke-opacity="0.75" stroke-width="4" paint-order="stroke" text-anchor="middle">Arden</text>
<text x="2283" y="135" font-size="22" fill="#3d3d3d" stroke="#fff" stroke-opacity="0.75" stroke-width="4" paint-order="stroke" text-anchor="middle">Warwick</text>
<text x="1458" y="153" font-size="22" fill="#3d3d3d" stroke="#fff" stroke-opacity="0.75" stroke-width="4" paint-order="stroke" text-anchor="middle">Droitwich</text>
<text x="1458" y="180" font-size="22" fill="#3d3d3d" stroke="#fff" stroke-opacity="0.75" stroke-width="4" paint-order="stroke" text-anchor="middle">Spa</text>
<text x="2564" y="203" font-size="22" fill="#3d3d3d" stroke="#fff" stroke-opacity="0.75" stroke-width="4" paint-order="stroke" text-anchor="middle">Southam</text>
<text x="1866" y="292" font-size="22" fill="#3d3d3d" stroke="#fff" stroke-opacity="0.75" stroke-width="4" paint-order="stroke" text-anchor="middle">Alcester</text>
<text x="931" y="357" font-size="22" fill="#3d3d3d" stroke="#fff" stroke-opacity="0.75" stroke-width="4" paint-order="stroke" text-anchor="middle">Bromyard</text>
<text x="1352" y="352" font-size="28" fill="#3d3d3d" stroke="#fff" stroke-opacity="0.75" stroke-width="4" paint-order="stroke" text-anchor="middle">Worcester</text>
<text x="1200" y="528" font-size="22" fill="#3d3d3d" stroke="#fff" stroke-opacity="0.75" stroke-width="4" paint-order="stroke" text-anchor="middle">Malvern</text>
<text x="1564" y="543" font-size="22" fill="#3d3d3d" stroke="#fff" stroke-opacity="0.75" stroke-width="4" paint-order="stroke" text-anchor="middle">Pershore</text>
<text x="2636" y="661" font-size="22" fill="#3d3d3d" stroke="#fff" stroke-opacity="0.75" stroke-width="4" paint-order="stroke" text-anchor="middle">Banbury</text>
<text x="1361" y="648" font-size="22" fill="#3d3d3d" stroke="#fff" stroke-opacity="0.75" stroke-width="4" paint-order="stroke" text-anchor="middle">Upton-upon-</text>
<text x="1361" y="672" font-size="22" fill="#3d3d3d" stroke="#fff" stroke-opacity="0.75" stroke-width="4" paint-order="stroke" text-anchor="middle">Severn</text>
<text x="1051" y="720" font-size="22" fill="#3d3d3d" stroke="#fff" stroke-opacity="0.75" stroke-width="4" paint-order="stroke" text-anchor="middle">Ledbury</text>
<text x="1450" y="818" font-size="22" fill="#3d3d3d" stroke="#fff" stroke-opacity="0.75" stroke-width="4" paint-order="stroke" text-anchor="middle">Tewkesbury</text>
<text x="1600" y="929" font-size="22" fill="#3d3d3d" stroke="#fff" stroke-opacity="0.75" stroke-width="4" paint-order="stroke" text-anchor="middle">Bishop&#39;s Cleeve</text>
<text x="1085" y="967" font-size="22" fill="#3d3d3d" stroke="#fff" stroke-opacity="0.75" stroke-width="4" paint-order="stroke" text-anchor="middle">Newent</text>
<text x="825" y="1007" font-size="22" fill="#3d3d3d" stroke="#fff" stroke-opacity="0.75" stroke-width="4" paint-order="stroke" text-anchor="middle">Ross-on-Wye</text>
<text x="2078" y="981" font-size="22" fill="#3d3d3d" stroke="#fff" stroke-opacity="0.75" stroke-width="4" paint-order="stroke" text-anchor="middle">Wold</text>
<text x="1572" y="1040" font-size="22" fill="#3d3d3d" stroke="#fff" stroke-opacity="0.75" stroke-width="4" paint-order="stroke" text-anchor="middle">Cheltenham</text>
<text x="2429" y="1104" font-size="22" fill="#3d3d3d" stroke="#fff" stroke-opacity="0.75" stroke-width="4" paint-order="stroke" text-anchor="middle">Charlbury</text>
<text x="1317" y="1124" font-size="28" fill="#3d3d3d" stroke="#fff" stroke-opacity="0.75" stroke-width="4" paint-order="stroke" text-anchor="middle">Gloucester</text>
<text x="964" y="1124" font-size="22" fill="#3d3d3d" stroke="#fff" stroke-opacity="0.75" stroke-width="4" paint-order="stroke" text-anchor="middle">Mitcheldean</text>
<text x="2614" y="1164" font-size="22" fill="#3d3d3d" stroke="#fff" stroke-opacity="0.75" stroke-width="4" paint-order="stroke" text-anchor="middle">Woodstock</text>
<text x="1912" y="1204" font-size="22" fill="#3d3d3d" stroke="#fff" stroke-opacity="0.75" stroke-width="4" paint-order="stroke" text-anchor="middle">Northleach</text>
<text x="948" y="1218" font-size="22" fill="#3d3d3d" stroke="#fff" stroke-opacity="0.75" stroke-width="4" paint-order="stroke" text-anchor="middle">Cinderford</text>
<text x="2205" y="1256" font-size="22" fill="#3d3d3d" stroke="#fff" stroke-opacity="0.75" stroke-width="4" paint-order="stroke" text-anchor="middle">Burford</text>
<text x="776" y="1289" font-size="22" fill="#3d3d3d" stroke="#fff" stroke-opacity="0.75" stroke-width="4" paint-order="stroke" text-anchor="middle">Coleford</text>
<text x="1391" y="1308" font-size="22" fill="#3d3d3d" stroke="#fff" stroke-opacity="0.75" stroke-width="4" paint-order="stroke" text-anchor="middle">Painswick</text>
<text x="2424" y="1314" font-size="22" fill="#3d3d3d" stroke="#fff" stroke-opacity="0.75" stroke-width="4" paint-order="stroke" text-anchor="middle">Witney</text>
<text x="2265" y="1373" font-size="22" fill="#3d3d3d" stroke="#fff" stroke-opacity="0.75" stroke-width="4" paint-order="stroke" text-anchor="middle">Carterton</text>
<text x="1263" y="1400" font-size="22" fill="#3d3d3d" stroke="#fff" stroke-opacity="0.75" stroke-width="4" paint-order="stroke" text-anchor="middle">Stonehouse</text>
<text x="900" y="1450" font-size="22" fill="#3d3d3d" stroke="#fff" stroke-opacity="0.75" stroke-width="4" paint-order="stroke" text-anchor="middle">Lydney</text>
<text x="1707" y="1471" font-size="22" fill="#3d3d3d" stroke="#fff" stroke-opacity="0.75" stroke-width="4" paint-order="stroke" text-anchor="middle">Cirencester</text>
<text x="1402" y="1499" font-size="22" fill="#3d3d3d" stroke="#fff" stroke-opacity="0.75" stroke-width="4" paint-order="stroke" text-anchor="middle">Minchinhampton</text>
<text x="1999" y="1492" font-size="22" fill="#3d3d3d" stroke="#fff" stroke-opacity="0.75" stroke-width="4" paint-order="stroke" text-anchor="middle">Fairford</text>
<text x="2123" y="1523" font-size="22" fill="#3d3d3d" stroke="#fff" stroke-opacity="0.75" stroke-width="4" paint-order="stroke" text-anchor="middle">Lechlade</text>
<text x="1007" y="1531" font-size="22" fill="#3d3d3d" stroke="#fff" stroke-opacity="0.75" stroke-width="4" paint-order="stroke" text-anchor="middle">Berkeley</text>
<text x="1157" y="1555" font-size="22" fill="#3d3d3d" stroke="#fff" stroke-opacity="0.75" stroke-width="4" paint-order="stroke" text-anchor="middle">Dursley</text>
<text x="2725" y="1578" font-size="22" fill="#3d3d3d" stroke="#fff" stroke-opacity="0.75" stroke-width="4" paint-order="stroke" text-anchor="middle">Abingdon</text>
<text x="2290" y="1616" font-size="22" fill="#3d3d3d" stroke="#fff" stroke-opacity="0.75" stroke-width="4" paint-order="stroke" text-anchor="middle">Faringdon</text>
<text x="1156" y="552" font-size="25" font-style="italic" fill="#2f9a3a" stroke="#fff" stroke-opacity="0.6" stroke-width="3" paint-order="stroke" text-anchor="middle">Malvern</text>
<text x="1156" y="580" font-size="25" font-style="italic" fill="#2f9a3a" stroke="#fff" stroke-opacity="0.6" stroke-width="3" paint-order="stroke" text-anchor="middle">Hills National</text>
<text x="1156" y="609" font-size="25" font-style="italic" fill="#2f9a3a" stroke="#fff" stroke-opacity="0.6" stroke-width="3" paint-order="stroke" text-anchor="middle">Landscape</text>
<text x="754" y="1163" font-size="25" font-style="italic" fill="#2f9a3a" stroke="#fff" stroke-opacity="0.6" stroke-width="3" paint-order="stroke" text-anchor="middle">Wye Valley</text>
<text x="754" y="1192" font-size="25" font-style="italic" fill="#2f9a3a" stroke="#fff" stroke-opacity="0.6" stroke-width="3" paint-order="stroke" text-anchor="middle">National</text>
<text x="754" y="1221" font-size="25" font-style="italic" fill="#2f9a3a" stroke="#fff" stroke-opacity="0.6" stroke-width="3" paint-order="stroke" text-anchor="middle">Landscape</text>
</svg>
<svg class="abs" style="left:0;top:0" width="2006" height="1509" viewBox="700 90 2006 1509">
<defs><filter id="mk" x="-60%" y="-60%" width="220%" height="220%"><feGaussianBlur in="SourceAlpha" stdDeviation="6"/><feOffset dx="0" dy="2"/><feComponentTransfer><feFuncA type="linear" slope="0.6"/></feComponentTransfer><feMerge><feMergeNode/><feMergeNode in="SourceGraphic"/></feMerge></filter><filter id="mk2" x="-80%" y="-80%" width="260%" height="260%"><feMorphology in="SourceAlpha" operator="dilate" radius="4" result="d"/><feGaussianBlur in="d" stdDeviation="7"/><feComponentTransfer><feFuncA type="linear" slope="1.0"/></feComponentTransfer><feMerge><feMergeNode/><feMergeNode in="SourceGraphic"/></feMerge></filter><filter id="mk3" x="-80%" y="-80%" width="260%" height="260%"><feMorphology in="SourceAlpha" operator="dilate" radius="3" result="d"/><feGaussianBlur in="d" stdDeviation="7"/><feColorMatrix type="matrix" values="0 0 0 0 0.35  0 0 0 0 0.22  0 0 0 0 0  0 0 0 0.85 0"/><feMerge><feMergeNode/><feMergeNode in="SourceGraphic"/></feMerge></filter></defs>
<path d="M1788 963 L1788 1009 L1795 1017 L1797 1040 L1784 1043 L1747 1032 L1716 1032 L1716 1039 L1723 1061 L1723 1071 L1730 1072 L1738 1080 L1708 1103 L1737 1174 L1738 1179 L1755 1180 L1761 1184 L1778 1186 L1778 1190 L1762 1216 L1757 1226 L1750 1250 L1739 1292 L1734 1382 L1721 1417 L1719 1470 L1725 1493 L1721 1528 L1721 1581 L1728 1600" fill="none" stroke="#fff" stroke-width="12" stroke-linejoin="round" stroke-linecap="round"/>
<path d="M1883 963 L1884 982 L1887 993 L1954 994 L1982 1015 L2010 1052 L2022 1067 L2047 1087 L2074 1089 L2099 1081 L2104 1082 L2109 1102 L2115 1163 L2110 1219 L2106 1228 L2110 1233 L2107 1289 L2098 1294 L2035 1291 L2003 1295 L1995 1305 L1994 1314 L1983 1334 L1981 1401 L1972 1408 L1945 1404 L1911 1406 L1898 1407 L1889 1430 L1888 1458 L1883 1493 L1881 1505 L1883 1528 L1891 1560 L1876 1571 L1843 1579 L1825 1565 L1808 1569 L1797 1600" fill="none" stroke="#fff" stroke-width="12" stroke-linejoin="round" stroke-linecap="round"/>
<path d="M1788 963 L1788 1009 L1795 1017 L1797 1040 L1784 1043 L1747 1032 L1716 1032 L1716 1039 L1723 1061 L1723 1071 L1730 1072 L1738 1080 L1708 1103 L1737 1174 L1738 1179 L1755 1180 L1761 1184 L1778 1186 L1778 1190 L1762 1216 L1757 1226 L1750 1250 L1739 1292 L1734 1382 L1721 1417 L1719 1470 L1725 1493 L1721 1528 L1721 1581 L1728 1600" fill="none" stroke="#3182d8" stroke-width="8.5" stroke-linejoin="round" stroke-linecap="round"/>
<path d="M1883 963 L1884 982 L1887 993 L1954 994 L1982 1015 L2010 1052 L2022 1067 L2047 1087 L2074 1089 L2099 1081 L2104 1082 L2109 1102 L2115 1163 L2110 1219 L2106 1228 L2110 1233 L2107 1289 L2098 1294 L2035 1291 L2003 1295 L1995 1305 L1994 1314 L1983 1334 L1981 1401 L1972 1408 L1945 1404 L1911 1406 L1898 1407 L1889 1430 L1888 1458 L1883 1493 L1881 1505 L1883 1528 L1891 1560 L1876 1571 L1843 1579 L1825 1565 L1808 1569 L1797 1600" fill="none" stroke="#3182d8" stroke-width="8.5" stroke-linejoin="round" stroke-linecap="round"/>
<g transform="translate(1742 1284) rotate(10)"><rect x="-12" y="-12" width="24" height="24" fill="#1f6fd6" stroke="#fff" stroke-width="2"/><path d="M-7 -6 L7 -6 L0 7z" fill="#fff"/></g>
<g transform="translate(1890 1455) rotate(-3)"><rect x="-12" y="-12" width="24" height="24" fill="#1f6fd6" stroke="#fff" stroke-width="2"/><path d="M-7 6 L7 6 L0 -7z" fill="#fff"/></g>
<g transform="translate(2085 1089) rotate(-15)"><rect x="-12" y="-12" width="24" height="24" fill="#1f6fd6" stroke="#fff" stroke-width="2"/><path d="M7 -7 L7 7 L-7 0z" fill="#fff"/></g>
<g transform="translate(1727 1424)" filter="url(#mk2)"><path d="M-17.7 13.1 A22 22 0 1 1 17.7 13.1 L0 37z" fill="#2e7d32" stroke="#fff" stroke-width="2.4"/></g>
<g transform="translate(1718 1435)"><path d="M-17.7 13.1 A22 22 0 1 1 17.7 13.1 L0 37z" fill="#2e7d32" stroke="#fff" stroke-width="2.4"/><g transform="translate(0 2)"><g fill="none" stroke="#fff" stroke-width="1.8" stroke-linecap="round"><path d="M-5 -14q-1.8 1 0 2t0 2.5M0 -14q-1.8 1 0 2t0 2.5M5 -14q-1.8 1 0 2t0 2.5" stroke-width="1.4"/><path d="M-10 -5h15l-1.7 11.5a2 2 0 0 1-2 1.7H-6a2 2 0 0 1-2-1.7z"/><path d="M5 -3a3.3 3.3 0 0 1 0 6.6h-1"/></g></g></g>
<g transform="translate(1826 1531)" filter="url(#mk)"><path d="M-17.7 13.1 A22 22 0 1 1 17.7 13.1 L0 37z" fill="#2e7d32" stroke="#fff" stroke-width="2.4"/></g>
<g transform="translate(1812 1542)"><path d="M-17.7 13.1 A22 22 0 1 1 17.7 13.1 L0 37z" fill="#2e7d32" stroke="#fff" stroke-width="2.4"/><g transform="translate(0 2)"><g fill="none" stroke="#fff" stroke-width="1.8" stroke-linecap="round"><path d="M-5 -14q-1.8 1 0 2t0 2.5M0 -14q-1.8 1 0 2t0 2.5M5 -14q-1.8 1 0 2t0 2.5" stroke-width="1.4"/><path d="M-10 -5h15l-1.7 11.5a2 2 0 0 1-2 1.7H-6a2 2 0 0 1-2-1.7z"/><path d="M5 -3a3.3 3.3 0 0 1 0 6.6h-1"/></g></g></g>
<g transform="translate(1980 1357)" filter="url(#mk)"><path d="M-17.1 13.8 A22 22 0 1 1 17.1 13.8 L0 35z" fill="#2e7d32" stroke="#fff" stroke-width="2.4"/><g transform="translate(0 2)"><g fill="none" stroke="#fff" stroke-width="1.8" stroke-linecap="round"><path d="M-5 -14q-1.8 1 0 2t0 2.5M0 -14q-1.8 1 0 2t0 2.5M5 -14q-1.8 1 0 2t0 2.5" stroke-width="1.4"/><path d="M-10 -5h15l-1.7 11.5a2 2 0 0 1-2 1.7H-6a2 2 0 0 1-2-1.7z"/><path d="M5 -3a3.3 3.3 0 0 1 0 6.6h-1"/></g></g></g>
<g transform="translate(2031 1027)"><path d="M-18.8 13.2 A23 23 0 1 1 18.8 13.2 L0 40z" fill="#2e7d32" stroke="#fff" stroke-width="2.4"/></g>
<g transform="translate(2026 1030)" filter="url(#mk3)"><path d="M-18.8 13.2 A23 23 0 1 1 18.8 13.2 L0 40z" fill="#ff9800" stroke="#fff" stroke-width="2.4"/><g transform="translate(0 2)"><g fill="none" stroke="#fff" stroke-width="1.8" stroke-linecap="round"><path d="M-5 -14q-1.8 1 0 2t0 2.5M0 -14q-1.8 1 0 2t0 2.5M5 -14q-1.8 1 0 2t0 2.5" stroke-width="1.4"/><path d="M-10 -5h15l-1.7 11.5a2 2 0 0 1-2 1.7H-6a2 2 0 0 1-2-1.7z"/><path d="M5 -3a3.3 3.3 0 0 1 0 6.6h-1"/></g></g></g>
<path d="M1796 1600 L1800 1590 L1797 1557 Q1815 1553 1832 1557 L1832 1583 Q1815 1579 1800 1583" fill="#1f6fd6" stroke="#1f6fd6" stroke-width="2"/>
</svg>
<div class="abs" style="left:0;top:688px;width:48px;height:119px;background:#2a2a2a;border:2px solid #3d3d3d;border-left:none;border-radius:0 10px 10px 0"></div>
<svg class="abs" style="left:16px;top:736px" width="14" height="24" viewBox="0 0 14 24" fill="none" stroke="#bbb" stroke-width="2"><path d="M12 2L2 12l10 10"/></svg>
</div>

<!-- POPUP -->
<div class="abs" style="left:1624px;top:290px;width:806px;height:673px;background:#282828;border-radius:24px;box-shadow:0 8px 28px rgba(0,0,0,0.45)"></div>
<div class="abs" style="left:2007px;top:962px;width:0;height:0;border-left:20px solid transparent;border-right:20px solid transparent;border-top:20px solid #282828;filter:drop-shadow(0 3px 3px rgba(0,0,0,0.25))"></div>
<svg class="abs" style="left:1645px;top:346px" width="34" height="34" viewBox="0 0 34 34" fill="none" stroke="#e8e8e8" stroke-width="2.2" stroke-linecap="round"><path d="M10 1.5q-2.2 1.3 0 2.6t0 2.9M15 1.5q-2.2 1.3 0 2.6t0 2.9M20 1.5q-2.2 1.3 0 2.6t0 2.9" stroke-width="1.8"/><path d="M2 12h22l-2.5 17.5a3 3 0 0 1-3 2.5H7.5a3 3 0 0 1-3-2.5z"/><path d="M24 15a4.5 4.5 0 0 1 0 9h-1.5"/></svg>
<div class="txt" style="left:1690px;top:345px;font-size:32px;font-weight:bold;color:#e6e6e6">Waterfront Tea Room and Eatery</div>
<div class="abs" style="left:2214px;top:342px;width:121px;height:36px;background:#42a5f5;border-radius:6px"></div>
<svg class="abs" style="left:2229px;top:346px" width="29" height="29" viewBox="0 0 29 29" fill="none" stroke="#fff" stroke-width="2.4"><circle cx="14.5" cy="14.5" r="12"/><path d="M14.5 8v8" stroke-linecap="round"/><circle cx="14.5" cy="20.5" r="1.3" fill="#fff" stroke="none"/></svg>
<div class="txt" style="left:2265px;top:342px;font-size:22px;font-weight:bold;color:#fff;line-height:36px">node</div>
<svg class="abs" style="left:2370px;top:316px" width="30" height="30" viewBox="0 0 30 30"><path d="M3 27l1.5-6L19 6.5l4.5 4.5L9 25.5z" fill="#eee"/><path d="M20.5 5l2-2 4.5 4.5-2 2z" fill="#eee"/></svg>
<svg class="abs" style="left:2395px;top:306px" width="21" height="21" viewBox="0 0 21 21" stroke="#eee" stroke-width="2.4" stroke-linecap="round"><path d="M3 3l15 15M18 3L3 18"/></svg>
<svg class="abs" style="left:2370px;top:372px" width="32" height="30" viewBox="0 0 32 30" fill="none" stroke="#e8e8e8" stroke-width="2.2" stroke-linejoin="round"><path d="M3 27l1.5-6.5L19 6l5 5L9.5 25.5z M17 8l5 5"/><path d="M17 27h8" stroke-linecap="round"/></svg>
<div class="txt" style="left:1647px;top:433px;font-size:26px;color:#e6e6e6"><b>Category:</b> Cafés</div>
<div class="abs" style="left:1646px;top:479px;width:761px;height:262px;border:2px solid #383838;border-radius:12px;background:#2a2a2a"></div>
<svg class="abs" style="left:1667px;top:502px" width="30" height="30" viewBox="0 0 30 30"><path d="M1 1h6v22h22v6H1z" fill="#5cb85c"/><path d="M9 22V14h3v8M9 22h20v-8h-3v4M14 14h3v5M19 14h3v3M24 14h2" fill="none" stroke="#5cb85c" stroke-width="0"/><g fill="#5cb85c"><rect x="9" y="3" width="20" height="9"/></g><g fill="#282828"><rect x="12" y="3" width="2" height="5"/><rect x="17" y="3" width="2" height="4"/><rect x="22" y="3" width="2" height="5"/><rect x="1" y="12" width="3" height="2"/><rect x="1" y="17" width="3" height="2"/></g></svg>
<div class="txt" style="left:1708px;top:507px;font-size:24px;color:#a8a8a8">Distance:</div>
<div class="txt" style="left:1816px;top:505px;font-size:26px;font-weight:bold;color:#e8e8e8">38m</div>
<svg class="abs" style="left:2036px;top:503px" width="27" height="29" viewBox="0 0 27 29" fill="none" stroke="#5cb85c" stroke-width="2.4" stroke-linejoin="round"><path d="M13.5 1v27"/><path d="M3 4h19l3 3-3 3H3zM24 13H5l-3 3 3 3h19z"/></svg>
<div class="txt" style="left:2075px;top:507px;font-size:24px;color:#a8a8a8">Side:</div>
<div class="abs" style="left:2146px;top:497px;width:45px;height:45px;border-radius:50%;background:#3f9ae8;color:#fff;font-weight:bold;font-size:22px;display:flex;align-items:center;justify-content:center">L</div>
<svg class="abs" style="left:1667px;top:561px" width="28" height="30" viewBox="0 0 28 30" fill="none" stroke="#5cb85c" stroke-width="2.2"><path d="M14 28s-11-11-11-17.5a11 11 0 0 1 22 0C25 17 14 28 14 28z"/><circle cx="14" cy="10.5" r="4"/></svg>
<div class="txt" style="left:1708px;top:565px;font-size:24px;color:#a8a8a8">From Start:</div>
<div class="txt" style="left:1836px;top:563px;font-size:26px;font-weight:bold;color:#e8e8e8">43.10km</div>
<svg class="abs" style="left:2035px;top:561px" width="28" height="30" viewBox="0 0 28 30" fill="none" stroke="#5cb85c" stroke-width="2.2"><path d="M14 28s-11-11-11-17.5a11 11 0 0 1 22 0C25 17 14 28 14 28z"/><circle cx="14" cy="10.5" r="4"/></svg>
<div class="txt" style="left:2075px;top:565px;font-size:24px;color:#a8a8a8">From End:</div>
<div class="txt" style="left:2194px;top:563px;font-size:26px;font-weight:bold;color:#e8e8e8">73.11km</div>
<svg class="abs" style="left:1667px;top:619px" width="30" height="30" viewBox="0 0 30 30" fill="none" stroke="#5cb85c" stroke-width="2.2" stroke-linecap="round"><circle cx="15" cy="15" r="13"/><path d="M13.5 8v8.5l6 3.5"/></svg>
<div class="txt" style="left:1708px;top:623px;font-size:24px;color:#a8a8a8">Est. Time:</div>
<div class="txt" style="left:1822px;top:621px;font-size:26px;font-weight:bold;color:#e8e8e8">2h 2m</div>
<div class="abs" style="left:1668px;top:678px;width:249px;height:46px;background:#66bb6a;border-radius:8px"></div>
<div class="abs" style="left:1859px;top:678px;width:2px;height:46px;background:rgba(255,255,255,0.28)"></div>
<svg class="abs" style="left:1683px;top:689px" width="25" height="23" viewBox="0 0 25 23"><path d="M12.5 1L24 22H1z" fill="#fff"/></svg>
<div class="txt" style="left:1716px;top:692px;font-size:20px;font-weight:bold;color:#fff">Get Elevation</div>
<div class="txt" style="left:1877px;top:692px;font-size:20px;font-weight:bold;color:#fff">All</div>
<div class="abs" style="left:1934px;top:678px;width:277px;height:46px;background:#ff9800;border-radius:8px"></div>
<div class="abs" style="left:2152px;top:678px;width:2px;height:46px;background:rgba(255,255,255,0.28)"></div>
<svg class="abs" style="left:1951px;top:688px" width="22" height="26" viewBox="0 0 22 26" fill="none" stroke="#fff" stroke-width="2.2"><circle cx="11" cy="9" r="7.5"/><path d="M6.5 15.5L5 24l6-3 6 3-1.5-8.5" fill="#fff" stroke-linejoin="round"/></svg>
<div class="txt" style="left:1982px;top:692px;font-size:20px;font-weight:bold;color:#fff">Get Food Rating</div>
<div class="txt" style="left:2170px;top:692px;font-size:20px;font-weight:bold;color:#fff">All</div>
<div class="abs" style="left:1646px;top:766px;width:761px;height:66px;background:#313131;border-radius:10px"></div>
<svg class="abs" style="left:1666px;top:787px" width="16" height="24" viewBox="0 0 16 24" fill="none" stroke="#ddd" stroke-width="2.2" stroke-linecap="round" stroke-linejoin="round"><path d="M3 2l10 10L3 22"/></svg>
<div class="txt" style="left:1700px;top:788px;font-size:26px;color:#e0e0e0">Similar POIs on Route</div>
<div class="txt" style="left:2366px;top:789px;font-size:24px;color:#b0b0b0">(2)</div>
<div class="abs" style="left:1646px;top:871px;width:761px;height:2px;background:#3c3c3c"></div>
<div class="abs" style="left:1646px;top:890px;width:145px;height:55px;background:#2196f3;border-radius:8px"></div>
<svg class="abs" style="left:1682px;top:903px" width="24" height="26" viewBox="0 0 24 26"><path d="M23 1L1 11l10 2.5 2 11.5z" fill="#fff"/></svg>
<div class="txt" style="left:1715px;top:907px;font-size:22px;font-weight:bold;color:#fff">Nav</div>
<div class="abs" style="left:1800px;top:890px;width:146px;height:55px;background:#66bb6a;border-radius:8px"></div>
<svg class="abs" style="left:1822px;top:902px" width="28" height="28" viewBox="0 0 28 28" fill="none" stroke="#fff" stroke-width="2" stroke-linejoin="round"><path d="M3 13L13 3l12 10v12H3z"/><path d="M19 4h4v5"/></svg>
<div class="txt" style="left:1856px;top:907px;font-size:22px;font-weight:bold;color:#fff">Street</div>
<div class="abs" style="left:1954px;top:890px;width:146px;height:55px;background:#8ca8ff;border-radius:8px"></div>
<svg class="abs" style="left:1984px;top:903px" width="28" height="28" viewBox="0 0 28 28" fill="none" stroke="#fff" stroke-width="2" stroke-linejoin="round"><path d="M2 4l8-2 8 3 8-2v21l-8 2-8-3-8 2z M10 2v21M18 5v21"/></svg>
<div class="txt" style="left:2017px;top:907px;font-size:22px;font-weight:bold;color:#fff">OSM</div>
<div class="abs" style="left:2108px;top:890px;width:146px;height:55px;background:#ab47bc;border-radius:8px"></div>
<svg class="abs" style="left:2131px;top:903px" width="28" height="28" viewBox="0 0 28 28" fill="none" stroke="#fff" stroke-width="1.9"><circle cx="14" cy="14" r="12"/><ellipse cx="14" cy="14" rx="5.5" ry="12"/><path d="M2 14h24M4 8h20M4 20h20M14 2v24"/></svg>
<div class="txt" style="left:2164px;top:907px;font-size:22px;font-weight:bold;color:#fff">Coord</div>
<div class="abs" style="left:2262px;top:890px;width:146px;height:55px;background:#ef5350;border-radius:8px"></div>
<svg class="abs" style="left:2323px;top:904px" width="24" height="26" viewBox="0 0 24 26" fill="none" stroke="#fff" stroke-width="2.2" stroke-linecap="round"><path d="M2 5h20M8 5V2h8v3M4.5 5l1.5 19h12l1.5-19M10 9v11M14 9v11"/></svg>

<!-- FOOTER -->
<div id="footer">
<div class="abs" style="left:26px;top:3px;width:132px;height:70px;background:#64b5f6;border-radius:16px"></div>
<div class="abs" style="left:50px;top:25px;width:28px;height:28px;background:#1c1c1c;border-radius:5px;color:#64b5f6;font-family:'Liberation Serif',serif;font-style:italic;font-weight:bold;font-size:24px;line-height:28px;text-align:center">i</div>
<div class="txt" style="left:89px;top:26px;font-size:25px;font-weight:bold;color:#111">Info</div>
<div class="abs" style="left:184px;top:1px;width:622px;height:90px;background:#333;border-radius:14px"></div>
<div class="abs" style="left:188px;top:10px;width:172px;height:57px;background:#474747;border-radius:10px"></div>
<svg class="abs" style="left:205px;top:30px" width="31" height="16" viewBox="0 0 31 16" fill="none" stroke="#fff" stroke-width="2.4" stroke-linecap="round" stroke-linejoin="round"><path d="M2 8h27M8 2L2 8l6 6M23 2l6 6-6 6"/></svg>
<div class="txt" style="left:246px;top:27px;font-size:23px;font-weight:bold;color:#fff">116.2 km</div>
<div class="abs" style="left:364px;top:13px;width:260px;height:50px;background:#474747;border-radius:10px"></div>
<svg class="abs" style="left:383px;top:29px" width="20" height="20" viewBox="0 0 20 20" fill="none" stroke="#fff" stroke-width="2.2" stroke-linecap="round"><path d="M2 18L18 2M7 2h11v11"/></svg>
<div class="txt" style="left:410px;top:27px;font-size:23.5px;font-weight:bold;color:#fff">1,066m</div>
<svg class="abs" style="left:499px;top:30px" width="19" height="19" viewBox="0 0 19 19" fill="none" stroke="#fff" stroke-width="2.2" stroke-linecap="round"><path d="M2 2l15 15M17 6v11H6"/></svg>
<div class="txt" style="left:525px;top:27px;font-size:23.5px;font-weight:bold;color:#fff">1,066m</div>
<div class="abs" style="left:628px;top:4px;width:175px;height:69px;background:#474747;border:2px solid #2e8b35;border-radius:10px"></div>
<svg class="abs" style="left:653px;top:22px" width="32" height="32" viewBox="0 0 32 32" fill="none" stroke="#fff" stroke-width="2.2" stroke-linecap="round"><circle cx="16" cy="16" r="14"/><path d="M14 8v10l7 4"/></svg>
<div class="txt" style="left:695px;top:27px;font-size:24px;font-weight:bold;color:#fff">5h 26m</div>
<div class="abs" style="left:849px;top:4px;width:178px;height:69px;background:#474747;border:2px solid #2e8b35;border-radius:10px"></div>
<svg class="abs" style="left:878px;top:21px" width="24" height="32" viewBox="0 0 24 32"><path d="M12 0C5.4 0 0 5.3 0 11.9 0 20 12 32 12 32s12-12 12-20.1C24 5.3 18.6 0 12 0z" fill="#fff"/><circle cx="12" cy="11.5" r="4.5" fill="#474747"/></svg>
<div class="txt" style="left:916px;top:27px;font-size:23.5px;font-weight:bold;color:#fff">30 POIs</div>
<div class="abs" style="left:2198px;top:9px;width:134px;height:59px;background:#474747;border:2px solid #2e8b35;border-radius:10px"></div>
<svg class="abs" style="left:2218px;top:25px" width="26" height="26" viewBox="0 0 26 26" fill="none" stroke="#fff" stroke-linecap="round" stroke-linejoin="round"><path d="M2.5 6.5l3-3.5 3 2.5-1.5 3 9.5 9.5" stroke-width="3"/><circle cx="20" cy="20" r="3.6" stroke-width="2.4"/></svg>
<div class="txt" style="left:2253px;top:28px;font-size:22px;font-weight:bold;color:#fff">Tools</div>
<div class="abs" style="left:2350px;top:6px;width:127px;height:64px;background:#2a2a2a;border:2px solid #243a26;border-radius:10px"></div>
<div class="abs" style="left:2350px;top:6px;width:65px;height:64px;background:#474747;border:2px solid #2e8b35;border-radius:10px 0 0 10px"></div>
<svg class="abs" style="left:2368px;top:22px" width="28" height="30" viewBox="0 0 28 30" fill="none" stroke="#fff" stroke-width="2.4" stroke-linecap="round"><path d="M9 8a11 11 0 1 0 6-2"/><path d="M15 1l-6 5 6 5" fill="#fff" stroke-linejoin="round"/></svg>
<svg class="abs" style="left:2432px;top:22px" width="28" height="30" viewBox="0 0 28 30" fill="none" stroke="#6c6c6c" stroke-width="2.4" stroke-linecap="round"><path d="M19 8a11 11 0 1 1-6-2"/><path d="M13 1l6 5-6 5" fill="#6c6c6c" stroke-linejoin="round"/></svg>
<div class="abs" style="left:2496px;top:5px;width:186px;height:66px;background:#64b5f6;border-radius:12px"></div>
<svg class="abs" style="left:2519px;top:27px" width="24" height="24" viewBox="0 0 24 24" fill="none" stroke="#111" stroke-width="2.4" stroke-linecap="round" stroke-linejoin="round"><path d="M2 15v7h20v-7M12 2v14M6 10l6 6 6-6"/></svg>
<div class="txt" style="left:2553px;top:28px;font-size:22.5px;font-weight:bold;color:#111">Export</div>
<svg class="abs" style="left:2636px;top:31px" width="22" height="14" viewBox="0 0 22 14" fill="none" stroke="#111" stroke-width="2.4" stroke-linecap="round"><path d="M2 2l9 9 9-9"/></svg>

</div>
</body></html>
